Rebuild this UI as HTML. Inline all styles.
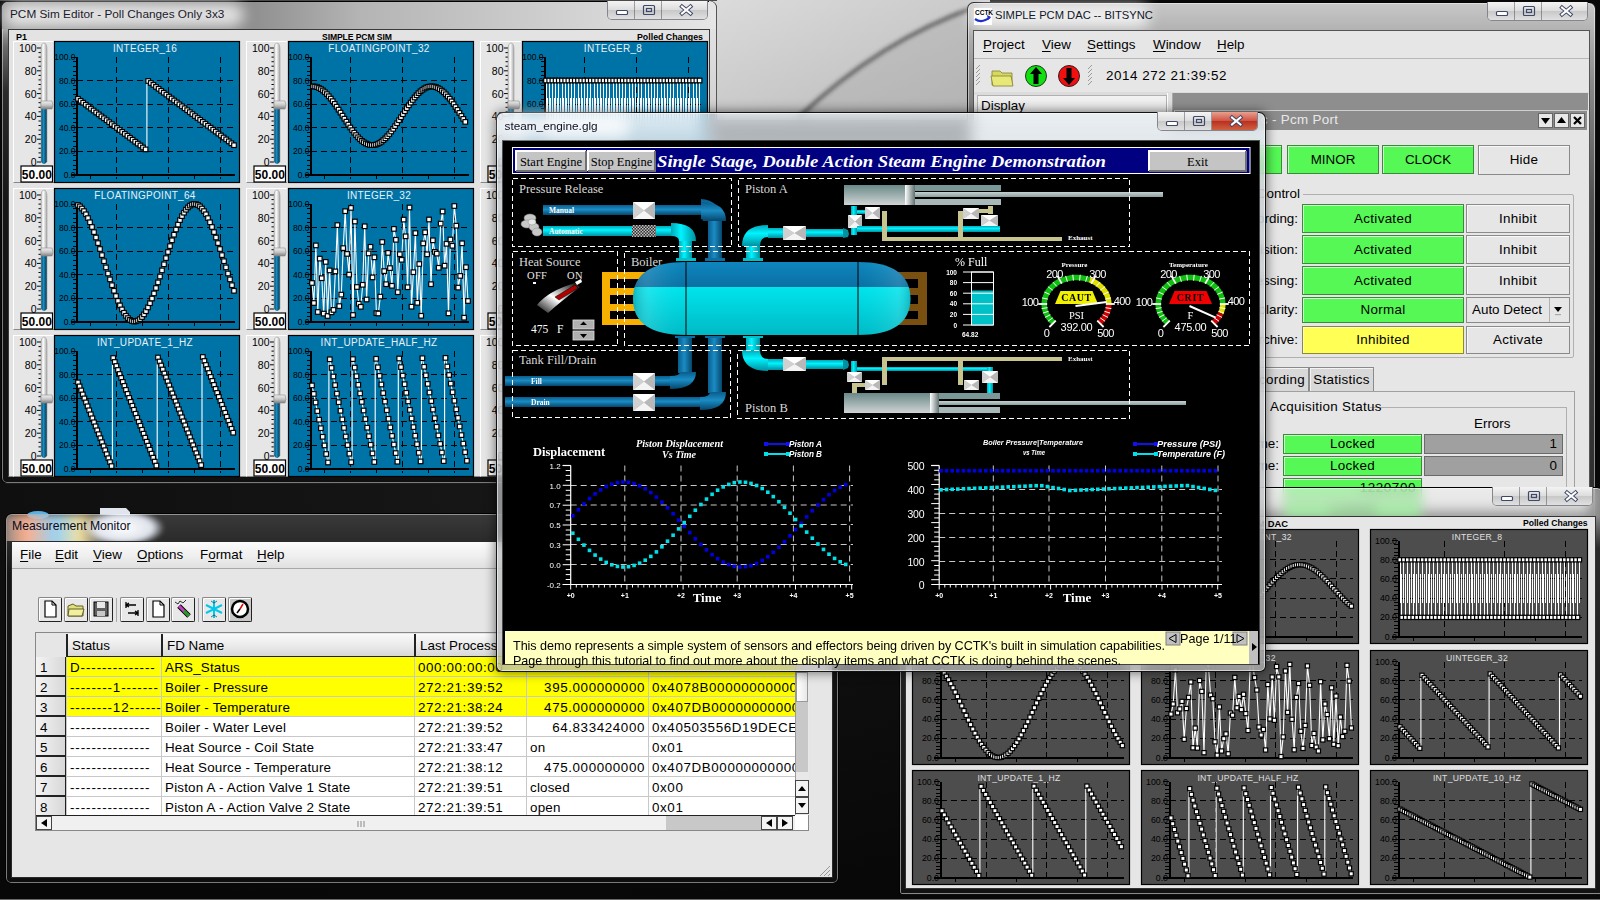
<!DOCTYPE html><html><head><meta charset="utf-8"><style>
*{margin:0;padding:0;box-sizing:border-box}
html,body{width:1600px;height:900px;overflow:hidden;background:#000;font-family:"Liberation Sans",sans-serif}
body>div,.a,div[style*="left:"]{position:absolute}
.t{position:absolute;white-space:nowrap;line-height:1}
svg{position:absolute;overflow:visible}
.serif{font-family:"Liberation Serif",serif}
.u{text-decoration:underline;text-underline-offset:2px}
</style></head><body>

<div style="left:0px;top:0px;width:1600px;height:900px;background:radial-gradient(ellipse at 30% 55%,#161616,#080808 60%)"></div>
<svg style="left:0;top:0" width="1600" height="900">
<defs><linearGradient id="dg" x1="0" y1="0" x2="1" y2="1">
<stop offset="0" stop-color="#dcdcdc"/><stop offset="1" stop-color="#b8b8b8"/></linearGradient>
<filter id="bl"><feGaussianBlur stdDeviation="2"/></filter></defs>
<rect x="700" y="0" width="290" height="120" fill="url(#dg)"/>
<path d="M978 6 Q 880 40 798 118 L990 118 Z" fill="#a8a8a8" opacity=".35" filter="url(#bl)"/><path d="M978 6 Q 880 40 798 118" stroke="#333" stroke-width="2.5" fill="none" filter="url(#bl)"/>
</svg>
<div style="left:1px;top:1px;width:716px;height:483px;background:linear-gradient(to bottom,#c4c4c4 0px,#b0b0b0 22px,#6a6a6a 45px,#2a2a2a 90px,#151515 200px,#101010 100%);border:1px solid rgba(0,0,0,.85);border-radius:7px 7px 6px 6px;box-shadow:inset 0 0 0 1px rgba(255,255,255,.45);"></div>
<div style="left:709px;top:1px;width:8px;height:112px;background:linear-gradient(to bottom,#e8e8e8,#d0d0d0);border-right:1px solid #555;border-top-right-radius:7px"></div>
<div style="left:2px;top:2px;width:714px;height:27px;background:linear-gradient(90deg,#9a9a9a 0%,#8a8a8a 33%,#b4b4b4 50%,#c8c8c8 70%,#e6e6e6 100%);border-radius:6px 6px 0 0"></div>
<div style="left:0px;top:0px;width:717px;height:1px;background:#4a4a4a"></div>
<div style="left:4px;top:3px;width:240px;height:24px;background:rgba(255,255,255,.75);border-radius:12px;filter:blur(7px)"></div>
<div class="t" style="left:10px;top:9px;font-size:11.8px;color:#1a1a2a">PCM Sim Editor - Poll Changes Only 3x3</div>
<div style="left:607px;top:1px;width:101px;height:19px;border:1px solid rgba(60,60,80,.55);border-top:none;border-radius:0 0 5px 5px;overflow:hidden;background:#ddd"><div style="left:0;top:0;width:27px;height:18px;background:linear-gradient(#f4f4f4,#dcdcdc 50%,#c8c8c8 51%,#e0e0e0);border-right:1px solid rgba(60,60,80,.45)"></div><div style="left:27px;top:0;width:27px;height:18px;background:linear-gradient(#f4f4f4,#dcdcdc 50%,#c8c8c8 51%,#e0e0e0);border-right:1px solid rgba(60,60,80,.45)"></div><div style="left:54px;top:0;width:46px;height:18px;background:linear-gradient(#f4f4f4,#dcdcdc 50%,#c8c8c8 51%,#e0e0e0)"></div><svg style="left:0;top:0" width="101" height="19"><rect x="8.5" y="9.5" width="11" height="4" fill="#fff" stroke="#404868" stroke-width="1.2" rx="1"/><rect x="35.5" y="4.5" width="11" height="9" fill="none" stroke="#404868" stroke-width="1.2" rx="1"/><rect x="38.5" y="7.5" width="5" height="3" fill="none" stroke="#404868" stroke-width="1.2"/><path d="M74 5.5 L82.5 12.5 M82.5 5.5 L74 12.5" stroke="#404868" stroke-width="4" stroke-linecap="square"/><path d="M74 5.5 L82.5 12.5 M82.5 5.5 L74 12.5" stroke="#fff" stroke-width="2" stroke-linecap="square"/></svg></div>
<div style="left:8px;top:29px;width:702px;height:448px;background:#e3e3e3;border:1px solid #3a3a3a;border-bottom-color:#888"></div>
<div class="t" style="left:16px;top:33px;font-size:9px;font-weight:bold;color:#000">P1</div>
<div class="t" style="left:322px;top:33px;font-size:8.6px;font-weight:bold;color:#000;letter-spacing:-.1px">SIMPLE PCM SIM</div>
<div class="t" style="left:637px;top:33px;font-size:8.8px;font-weight:bold;color:#000">Polled Changes</div>
<div style="left:12.5px;top:41px;width:41px;height:142px;background:#e6e6e6;border-left:1px solid #fff;border-top:1px solid #fff;border-bottom:1px solid #888"></div>
<svg style="left:12.5px;top:41px" width="41" height="142"><defs><linearGradient id="trk" x1="0" x2="1"><stop offset="0" stop-color="#bcbcbc"/><stop offset=".35" stop-color="#fff"/><stop offset="1" stop-color="#a8a8a8"/></linearGradient><linearGradient id="trkb" x1="0" x2="1"><stop offset="0" stop-color="#004d73"/><stop offset=".4" stop-color="#1a8cc0"/><stop offset="1" stop-color="#003a58"/></linearGradient><linearGradient id="thm" x1="0" y1="0" x2="0" y2="1"><stop offset="0" stop-color="#f0f0f0"/><stop offset=".5" stop-color="#c8c8c8"/><stop offset="1" stop-color="#808080"/></linearGradient></defs><text x="23.5" y="125.0" font-size="10.5" text-anchor="end" font-family="Liberation Sans" fill="#000">0</text><text x="23.5" y="102.2" font-size="10.5" text-anchor="end" font-family="Liberation Sans" fill="#000">20</text><text x="23.5" y="79.4" font-size="10.5" text-anchor="end" font-family="Liberation Sans" fill="#000">40</text><text x="23.5" y="56.6" font-size="10.5" text-anchor="end" font-family="Liberation Sans" fill="#000">60</text><text x="23.5" y="33.8" font-size="10.5" text-anchor="end" font-family="Liberation Sans" fill="#000">80</text><text x="23.5" y="11.0" font-size="10.5" text-anchor="end" font-family="Liberation Sans" fill="#000">100</text><line x1="24" y1="121.0" x2="28" y2="121.0" stroke="#000" stroke-width="1"/><line x1="25.5" y1="116.4" x2="28" y2="116.4" stroke="#000" stroke-width="1"/><line x1="25.5" y1="111.9" x2="28" y2="111.9" stroke="#000" stroke-width="1"/><line x1="25.5" y1="107.3" x2="28" y2="107.3" stroke="#000" stroke-width="1"/><line x1="25.5" y1="102.8" x2="28" y2="102.8" stroke="#000" stroke-width="1"/><line x1="24" y1="98.2" x2="28" y2="98.2" stroke="#000" stroke-width="1"/><line x1="25.5" y1="93.6" x2="28" y2="93.6" stroke="#000" stroke-width="1"/><line x1="25.5" y1="89.1" x2="28" y2="89.1" stroke="#000" stroke-width="1"/><line x1="25.5" y1="84.5" x2="28" y2="84.5" stroke="#000" stroke-width="1"/><line x1="25.5" y1="80.0" x2="28" y2="80.0" stroke="#000" stroke-width="1"/><line x1="24" y1="75.4" x2="28" y2="75.4" stroke="#000" stroke-width="1"/><line x1="25.5" y1="70.8" x2="28" y2="70.8" stroke="#000" stroke-width="1"/><line x1="25.5" y1="66.3" x2="28" y2="66.3" stroke="#000" stroke-width="1"/><line x1="25.5" y1="61.7" x2="28" y2="61.7" stroke="#000" stroke-width="1"/><line x1="25.5" y1="57.2" x2="28" y2="57.2" stroke="#000" stroke-width="1"/><line x1="24" y1="52.6" x2="28" y2="52.6" stroke="#000" stroke-width="1"/><line x1="25.5" y1="48.0" x2="28" y2="48.0" stroke="#000" stroke-width="1"/><line x1="25.5" y1="43.5" x2="28" y2="43.5" stroke="#000" stroke-width="1"/><line x1="25.5" y1="38.9" x2="28" y2="38.9" stroke="#000" stroke-width="1"/><line x1="25.5" y1="34.4" x2="28" y2="34.4" stroke="#000" stroke-width="1"/><line x1="24" y1="29.8" x2="28" y2="29.8" stroke="#000" stroke-width="1"/><line x1="25.5" y1="25.2" x2="28" y2="25.2" stroke="#000" stroke-width="1"/><line x1="25.5" y1="20.7" x2="28" y2="20.7" stroke="#000" stroke-width="1"/><line x1="25.5" y1="16.1" x2="28" y2="16.1" stroke="#000" stroke-width="1"/><line x1="25.5" y1="11.6" x2="28" y2="11.6" stroke="#000" stroke-width="1"/><line x1="24" y1="7.0" x2="28" y2="7.0" stroke="#000" stroke-width="1"/><path d="M28 9 Q28 2 31 2 Q34 2 34 9 L34 121 L28 121 Z" fill="url(#trk)" stroke="#9a9a9a" stroke-width=".6"/><path d="M28.3 64.0 L33.7 64.0 L33.7 121 Q31 125 28.3 121 Z" fill="url(#trkb)"/><path d="M28 60.0 L39 60.0 Q41 64.0 39 68.0 L28 68.0 Z" fill="url(#thm)" stroke="#8a8a8a" stroke-width=".6"/><rect x="8" y="125" width="31.5" height="16" fill="#fff" stroke="#000" stroke-width="1.2"/><text x="23.8" y="137.5" font-size="12" font-weight="bold" text-anchor="middle" font-family="Liberation Sans" fill="#000">50.00</text></svg>
<svg style="left:53.5px;top:41px" width="186" height="142"><rect x="0.5" y="0.5" width="185" height="141" fill="#0073a6" stroke="#000" stroke-width="1.2"/><text x="91.0" y="11" font-size="10" fill="#e8f0f8" text-anchor="middle" font-family="Liberation Sans" letter-spacing=".3">INTEGER_16</text><g shape-rendering="crispEdges" stroke="#000" stroke-width="1"><line x1="22.5" y1="110.5" x2="181" y2="110.5" stroke-dasharray="6 4"/><line x1="22.5" y1="86.5" x2="181" y2="86.5" stroke-dasharray="6 4"/><line x1="22.5" y1="63.5" x2="181" y2="63.5" stroke-dasharray="6 4"/><line x1="22.5" y1="39.5" x2="181" y2="39.5" stroke-dasharray="6 4"/><line x1="62.5" y1="16" x2="62.5" y2="137.5" stroke-dasharray="6 4"/><line x1="114.5" y1="16" x2="114.5" y2="137.5" stroke-dasharray="6 4"/><line x1="166.5" y1="16" x2="166.5" y2="137.5" stroke-dasharray="6 4"/><line x1="22.5" y1="16" x2="22.5" y2="133.5" stroke-width="2"/><line x1="16.5" y1="133.5" x2="181" y2="133.5" stroke-width="2"/><line x1="16.5" y1="133.5" x2="22.5" y2="133.5"/><line x1="18.5" y1="128.5" x2="22.5" y2="128.5"/><line x1="18.5" y1="124.5" x2="22.5" y2="124.5"/><line x1="18.5" y1="119.5" x2="22.5" y2="119.5"/><line x1="18.5" y1="114.5" x2="22.5" y2="114.5"/><line x1="16.5" y1="110.5" x2="22.5" y2="110.5"/><line x1="18.5" y1="105.5" x2="22.5" y2="105.5"/><line x1="18.5" y1="100.5" x2="22.5" y2="100.5"/><line x1="18.5" y1="95.5" x2="22.5" y2="95.5"/><line x1="18.5" y1="91.5" x2="22.5" y2="91.5"/><line x1="16.5" y1="86.5" x2="22.5" y2="86.5"/><line x1="18.5" y1="81.5" x2="22.5" y2="81.5"/><line x1="18.5" y1="77.5" x2="22.5" y2="77.5"/><line x1="18.5" y1="72.5" x2="22.5" y2="72.5"/><line x1="18.5" y1="67.5" x2="22.5" y2="67.5"/><line x1="16.5" y1="63.5" x2="22.5" y2="63.5"/><line x1="18.5" y1="58.5" x2="22.5" y2="58.5"/><line x1="18.5" y1="53.5" x2="22.5" y2="53.5"/><line x1="18.5" y1="48.5" x2="22.5" y2="48.5"/><line x1="18.5" y1="44.5" x2="22.5" y2="44.5"/><line x1="16.5" y1="39.5" x2="22.5" y2="39.5"/><line x1="18.5" y1="34.5" x2="22.5" y2="34.5"/><line x1="18.5" y1="30.5" x2="22.5" y2="30.5"/><line x1="18.5" y1="25.5" x2="22.5" y2="25.5"/><line x1="18.5" y1="20.5" x2="22.5" y2="20.5"/><line x1="16.5" y1="16.5" x2="22.5" y2="16.5"/><line x1="36.5" y1="133.5" x2="36.5" y2="137.5"/><line x1="88.5" y1="133.5" x2="88.5" y2="137.5"/><line x1="140.5" y1="133.5" x2="140.5" y2="137.5"/></g><text x="21.5" y="136.5" font-size="8.5" fill="#000" text-anchor="end" font-family="Liberation Sans">0.0</text><text x="21.5" y="113.0" font-size="8.5" fill="#000" text-anchor="end" font-family="Liberation Sans">20.0</text><text x="21.5" y="89.5" font-size="8.5" fill="#000" text-anchor="end" font-family="Liberation Sans">40.0</text><text x="21.5" y="66.0" font-size="8.5" fill="#000" text-anchor="end" font-family="Liberation Sans">60.0</text><text x="21.5" y="42.5" font-size="8.5" fill="#000" text-anchor="end" font-family="Liberation Sans">80.0</text><text x="21.5" y="19.0" font-size="8.5" fill="#000" text-anchor="end" font-family="Liberation Sans">100.0</text><polyline points="24.0,57.8 26.6,59.8 29.2,61.7 31.8,63.7 34.4,65.6 37.0,67.6 39.6,69.5 42.2,71.5 44.8,73.4 47.4,75.4 50.0,77.3 52.6,79.2 55.2,81.2 57.8,83.1 60.4,85.1 63.0,87.0 65.6,89.0 68.2,90.9 70.8,92.9 73.4,94.8 76.0,96.8 78.6,98.7 81.2,100.7 83.8,102.6 86.4,104.5 89.0,106.5 91.6,108.4 92.9,108.4 92.9,40.0 94.2,40.0 96.8,42.0 99.4,43.9 102.0,45.9 104.6,47.8 107.2,49.8 109.8,51.7 112.4,53.6 115.0,55.6 117.6,57.5 120.2,59.5 122.8,61.4 125.4,63.4 128.0,65.3 130.6,67.3 133.2,69.2 135.8,71.2 138.4,73.1 141.0,75.1 143.6,77.0 146.2,78.9 148.8,80.9 151.4,82.8 154.0,84.8 156.6,86.7 159.2,88.7 161.8,90.6 164.4,92.6 167.0,94.5 169.6,96.5 172.2,98.4 174.8,100.4 177.4,102.3 180.0,104.2" fill="none" stroke="#fff" stroke-width="1.1"/><rect x="21.7" y="55.5" width="4.6" height="4.6" fill="#fff" stroke="#000" stroke-width="1.2"/><rect x="24.3" y="57.5" width="4.6" height="4.6" fill="#fff" stroke="#000" stroke-width="1.2"/><rect x="26.9" y="59.4" width="4.6" height="4.6" fill="#fff" stroke="#000" stroke-width="1.2"/><rect x="29.5" y="61.4" width="4.6" height="4.6" fill="#fff" stroke="#000" stroke-width="1.2"/><rect x="32.1" y="63.3" width="4.6" height="4.6" fill="#fff" stroke="#000" stroke-width="1.2"/><rect x="34.7" y="65.3" width="4.6" height="4.6" fill="#fff" stroke="#000" stroke-width="1.2"/><rect x="37.3" y="67.2" width="4.6" height="4.6" fill="#fff" stroke="#000" stroke-width="1.2"/><rect x="39.9" y="69.2" width="4.6" height="4.6" fill="#fff" stroke="#000" stroke-width="1.2"/><rect x="42.5" y="71.1" width="4.6" height="4.6" fill="#fff" stroke="#000" stroke-width="1.2"/><rect x="45.1" y="73.1" width="4.6" height="4.6" fill="#fff" stroke="#000" stroke-width="1.2"/><rect x="47.7" y="75.0" width="4.6" height="4.6" fill="#fff" stroke="#000" stroke-width="1.2"/><rect x="50.3" y="76.9" width="4.6" height="4.6" fill="#fff" stroke="#000" stroke-width="1.2"/><rect x="52.9" y="78.9" width="4.6" height="4.6" fill="#fff" stroke="#000" stroke-width="1.2"/><rect x="55.5" y="80.8" width="4.6" height="4.6" fill="#fff" stroke="#000" stroke-width="1.2"/><rect x="58.1" y="82.8" width="4.6" height="4.6" fill="#fff" stroke="#000" stroke-width="1.2"/><rect x="60.7" y="84.7" width="4.6" height="4.6" fill="#fff" stroke="#000" stroke-width="1.2"/><rect x="63.3" y="86.7" width="4.6" height="4.6" fill="#fff" stroke="#000" stroke-width="1.2"/><rect x="65.9" y="88.6" width="4.6" height="4.6" fill="#fff" stroke="#000" stroke-width="1.2"/><rect x="68.5" y="90.6" width="4.6" height="4.6" fill="#fff" stroke="#000" stroke-width="1.2"/><rect x="71.1" y="92.5" width="4.6" height="4.6" fill="#fff" stroke="#000" stroke-width="1.2"/><rect x="73.7" y="94.5" width="4.6" height="4.6" fill="#fff" stroke="#000" stroke-width="1.2"/><rect x="76.3" y="96.4" width="4.6" height="4.6" fill="#fff" stroke="#000" stroke-width="1.2"/><rect x="78.9" y="98.4" width="4.6" height="4.6" fill="#fff" stroke="#000" stroke-width="1.2"/><rect x="81.5" y="100.3" width="4.6" height="4.6" fill="#fff" stroke="#000" stroke-width="1.2"/><rect x="84.1" y="102.2" width="4.6" height="4.6" fill="#fff" stroke="#000" stroke-width="1.2"/><rect x="86.7" y="104.2" width="4.6" height="4.6" fill="#fff" stroke="#000" stroke-width="1.2"/><rect x="89.3" y="106.1" width="4.6" height="4.6" fill="#fff" stroke="#000" stroke-width="1.2"/><rect x="91.9" y="37.7" width="4.6" height="4.6" fill="#fff" stroke="#000" stroke-width="1.2"/><rect x="94.5" y="39.7" width="4.6" height="4.6" fill="#fff" stroke="#000" stroke-width="1.2"/><rect x="97.1" y="41.6" width="4.6" height="4.6" fill="#fff" stroke="#000" stroke-width="1.2"/><rect x="99.7" y="43.6" width="4.6" height="4.6" fill="#fff" stroke="#000" stroke-width="1.2"/><rect x="102.3" y="45.5" width="4.6" height="4.6" fill="#fff" stroke="#000" stroke-width="1.2"/><rect x="104.9" y="47.5" width="4.6" height="4.6" fill="#fff" stroke="#000" stroke-width="1.2"/><rect x="107.5" y="49.4" width="4.6" height="4.6" fill="#fff" stroke="#000" stroke-width="1.2"/><rect x="110.1" y="51.3" width="4.6" height="4.6" fill="#fff" stroke="#000" stroke-width="1.2"/><rect x="112.7" y="53.3" width="4.6" height="4.6" fill="#fff" stroke="#000" stroke-width="1.2"/><rect x="115.3" y="55.2" width="4.6" height="4.6" fill="#fff" stroke="#000" stroke-width="1.2"/><rect x="117.9" y="57.2" width="4.6" height="4.6" fill="#fff" stroke="#000" stroke-width="1.2"/><rect x="120.5" y="59.1" width="4.6" height="4.6" fill="#fff" stroke="#000" stroke-width="1.2"/><rect x="123.1" y="61.1" width="4.6" height="4.6" fill="#fff" stroke="#000" stroke-width="1.2"/><rect x="125.7" y="63.0" width="4.6" height="4.6" fill="#fff" stroke="#000" stroke-width="1.2"/><rect x="128.3" y="65.0" width="4.6" height="4.6" fill="#fff" stroke="#000" stroke-width="1.2"/><rect x="130.9" y="66.9" width="4.6" height="4.6" fill="#fff" stroke="#000" stroke-width="1.2"/><rect x="133.5" y="68.9" width="4.6" height="4.6" fill="#fff" stroke="#000" stroke-width="1.2"/><rect x="136.1" y="70.8" width="4.6" height="4.6" fill="#fff" stroke="#000" stroke-width="1.2"/><rect x="138.7" y="72.8" width="4.6" height="4.6" fill="#fff" stroke="#000" stroke-width="1.2"/><rect x="141.3" y="74.7" width="4.6" height="4.6" fill="#fff" stroke="#000" stroke-width="1.2"/><rect x="143.9" y="76.6" width="4.6" height="4.6" fill="#fff" stroke="#000" stroke-width="1.2"/><rect x="146.5" y="78.6" width="4.6" height="4.6" fill="#fff" stroke="#000" stroke-width="1.2"/><rect x="149.1" y="80.5" width="4.6" height="4.6" fill="#fff" stroke="#000" stroke-width="1.2"/><rect x="151.7" y="82.5" width="4.6" height="4.6" fill="#fff" stroke="#000" stroke-width="1.2"/><rect x="154.3" y="84.4" width="4.6" height="4.6" fill="#fff" stroke="#000" stroke-width="1.2"/><rect x="156.9" y="86.4" width="4.6" height="4.6" fill="#fff" stroke="#000" stroke-width="1.2"/><rect x="159.5" y="88.3" width="4.6" height="4.6" fill="#fff" stroke="#000" stroke-width="1.2"/><rect x="162.1" y="90.3" width="4.6" height="4.6" fill="#fff" stroke="#000" stroke-width="1.2"/><rect x="164.7" y="92.2" width="4.6" height="4.6" fill="#fff" stroke="#000" stroke-width="1.2"/><rect x="167.3" y="94.2" width="4.6" height="4.6" fill="#fff" stroke="#000" stroke-width="1.2"/><rect x="169.9" y="96.1" width="4.6" height="4.6" fill="#fff" stroke="#000" stroke-width="1.2"/><rect x="172.5" y="98.1" width="4.6" height="4.6" fill="#fff" stroke="#000" stroke-width="1.2"/><rect x="175.1" y="100.0" width="4.6" height="4.6" fill="#fff" stroke="#000" stroke-width="1.2"/><rect x="177.7" y="101.9" width="4.6" height="4.6" fill="#fff" stroke="#000" stroke-width="1.2"/></svg>
<div style="left:246px;top:41px;width:41px;height:142px;background:#e6e6e6;border-left:1px solid #fff;border-top:1px solid #fff;border-bottom:1px solid #888"></div>
<svg style="left:246px;top:41px" width="41" height="142"><defs><linearGradient id="trk" x1="0" x2="1"><stop offset="0" stop-color="#bcbcbc"/><stop offset=".35" stop-color="#fff"/><stop offset="1" stop-color="#a8a8a8"/></linearGradient><linearGradient id="trkb" x1="0" x2="1"><stop offset="0" stop-color="#004d73"/><stop offset=".4" stop-color="#1a8cc0"/><stop offset="1" stop-color="#003a58"/></linearGradient><linearGradient id="thm" x1="0" y1="0" x2="0" y2="1"><stop offset="0" stop-color="#f0f0f0"/><stop offset=".5" stop-color="#c8c8c8"/><stop offset="1" stop-color="#808080"/></linearGradient></defs><text x="23.5" y="125.0" font-size="10.5" text-anchor="end" font-family="Liberation Sans" fill="#000">0</text><text x="23.5" y="102.2" font-size="10.5" text-anchor="end" font-family="Liberation Sans" fill="#000">20</text><text x="23.5" y="79.4" font-size="10.5" text-anchor="end" font-family="Liberation Sans" fill="#000">40</text><text x="23.5" y="56.6" font-size="10.5" text-anchor="end" font-family="Liberation Sans" fill="#000">60</text><text x="23.5" y="33.8" font-size="10.5" text-anchor="end" font-family="Liberation Sans" fill="#000">80</text><text x="23.5" y="11.0" font-size="10.5" text-anchor="end" font-family="Liberation Sans" fill="#000">100</text><line x1="24" y1="121.0" x2="28" y2="121.0" stroke="#000" stroke-width="1"/><line x1="25.5" y1="116.4" x2="28" y2="116.4" stroke="#000" stroke-width="1"/><line x1="25.5" y1="111.9" x2="28" y2="111.9" stroke="#000" stroke-width="1"/><line x1="25.5" y1="107.3" x2="28" y2="107.3" stroke="#000" stroke-width="1"/><line x1="25.5" y1="102.8" x2="28" y2="102.8" stroke="#000" stroke-width="1"/><line x1="24" y1="98.2" x2="28" y2="98.2" stroke="#000" stroke-width="1"/><line x1="25.5" y1="93.6" x2="28" y2="93.6" stroke="#000" stroke-width="1"/><line x1="25.5" y1="89.1" x2="28" y2="89.1" stroke="#000" stroke-width="1"/><line x1="25.5" y1="84.5" x2="28" y2="84.5" stroke="#000" stroke-width="1"/><line x1="25.5" y1="80.0" x2="28" y2="80.0" stroke="#000" stroke-width="1"/><line x1="24" y1="75.4" x2="28" y2="75.4" stroke="#000" stroke-width="1"/><line x1="25.5" y1="70.8" x2="28" y2="70.8" stroke="#000" stroke-width="1"/><line x1="25.5" y1="66.3" x2="28" y2="66.3" stroke="#000" stroke-width="1"/><line x1="25.5" y1="61.7" x2="28" y2="61.7" stroke="#000" stroke-width="1"/><line x1="25.5" y1="57.2" x2="28" y2="57.2" stroke="#000" stroke-width="1"/><line x1="24" y1="52.6" x2="28" y2="52.6" stroke="#000" stroke-width="1"/><line x1="25.5" y1="48.0" x2="28" y2="48.0" stroke="#000" stroke-width="1"/><line x1="25.5" y1="43.5" x2="28" y2="43.5" stroke="#000" stroke-width="1"/><line x1="25.5" y1="38.9" x2="28" y2="38.9" stroke="#000" stroke-width="1"/><line x1="25.5" y1="34.4" x2="28" y2="34.4" stroke="#000" stroke-width="1"/><line x1="24" y1="29.8" x2="28" y2="29.8" stroke="#000" stroke-width="1"/><line x1="25.5" y1="25.2" x2="28" y2="25.2" stroke="#000" stroke-width="1"/><line x1="25.5" y1="20.7" x2="28" y2="20.7" stroke="#000" stroke-width="1"/><line x1="25.5" y1="16.1" x2="28" y2="16.1" stroke="#000" stroke-width="1"/><line x1="25.5" y1="11.6" x2="28" y2="11.6" stroke="#000" stroke-width="1"/><line x1="24" y1="7.0" x2="28" y2="7.0" stroke="#000" stroke-width="1"/><path d="M28 9 Q28 2 31 2 Q34 2 34 9 L34 121 L28 121 Z" fill="url(#trk)" stroke="#9a9a9a" stroke-width=".6"/><path d="M28.3 64.0 L33.7 64.0 L33.7 121 Q31 125 28.3 121 Z" fill="url(#trkb)"/><path d="M28 60.0 L39 60.0 Q41 64.0 39 68.0 L28 68.0 Z" fill="url(#thm)" stroke="#8a8a8a" stroke-width=".6"/><rect x="8" y="125" width="31.5" height="16" fill="#fff" stroke="#000" stroke-width="1.2"/><text x="23.8" y="137.5" font-size="12" font-weight="bold" text-anchor="middle" font-family="Liberation Sans" fill="#000">50.00</text></svg>
<svg style="left:287.7px;top:41px" width="186" height="142"><rect x="0.5" y="0.5" width="185" height="141" fill="#0073a6" stroke="#000" stroke-width="1.2"/><text x="91.0" y="11" font-size="10" fill="#e8f0f8" text-anchor="middle" font-family="Liberation Sans" letter-spacing=".3">FLOATINGPOINT_32</text><g shape-rendering="crispEdges" stroke="#000" stroke-width="1"><line x1="22.5" y1="110.5" x2="181" y2="110.5" stroke-dasharray="6 4"/><line x1="22.5" y1="86.5" x2="181" y2="86.5" stroke-dasharray="6 4"/><line x1="22.5" y1="63.5" x2="181" y2="63.5" stroke-dasharray="6 4"/><line x1="22.5" y1="39.5" x2="181" y2="39.5" stroke-dasharray="6 4"/><line x1="62.5" y1="16" x2="62.5" y2="137.5" stroke-dasharray="6 4"/><line x1="114.5" y1="16" x2="114.5" y2="137.5" stroke-dasharray="6 4"/><line x1="166.5" y1="16" x2="166.5" y2="137.5" stroke-dasharray="6 4"/><line x1="22.5" y1="16" x2="22.5" y2="133.5" stroke-width="2"/><line x1="16.5" y1="133.5" x2="181" y2="133.5" stroke-width="2"/><line x1="16.5" y1="133.5" x2="22.5" y2="133.5"/><line x1="18.5" y1="128.5" x2="22.5" y2="128.5"/><line x1="18.5" y1="124.5" x2="22.5" y2="124.5"/><line x1="18.5" y1="119.5" x2="22.5" y2="119.5"/><line x1="18.5" y1="114.5" x2="22.5" y2="114.5"/><line x1="16.5" y1="110.5" x2="22.5" y2="110.5"/><line x1="18.5" y1="105.5" x2="22.5" y2="105.5"/><line x1="18.5" y1="100.5" x2="22.5" y2="100.5"/><line x1="18.5" y1="95.5" x2="22.5" y2="95.5"/><line x1="18.5" y1="91.5" x2="22.5" y2="91.5"/><line x1="16.5" y1="86.5" x2="22.5" y2="86.5"/><line x1="18.5" y1="81.5" x2="22.5" y2="81.5"/><line x1="18.5" y1="77.5" x2="22.5" y2="77.5"/><line x1="18.5" y1="72.5" x2="22.5" y2="72.5"/><line x1="18.5" y1="67.5" x2="22.5" y2="67.5"/><line x1="16.5" y1="63.5" x2="22.5" y2="63.5"/><line x1="18.5" y1="58.5" x2="22.5" y2="58.5"/><line x1="18.5" y1="53.5" x2="22.5" y2="53.5"/><line x1="18.5" y1="48.5" x2="22.5" y2="48.5"/><line x1="18.5" y1="44.5" x2="22.5" y2="44.5"/><line x1="16.5" y1="39.5" x2="22.5" y2="39.5"/><line x1="18.5" y1="34.5" x2="22.5" y2="34.5"/><line x1="18.5" y1="30.5" x2="22.5" y2="30.5"/><line x1="18.5" y1="25.5" x2="22.5" y2="25.5"/><line x1="18.5" y1="20.5" x2="22.5" y2="20.5"/><line x1="16.5" y1="16.5" x2="22.5" y2="16.5"/><line x1="36.5" y1="133.5" x2="36.5" y2="137.5"/><line x1="88.5" y1="133.5" x2="88.5" y2="137.5"/><line x1="140.5" y1="133.5" x2="140.5" y2="137.5"/></g><text x="21.5" y="136.5" font-size="8.5" fill="#000" text-anchor="end" font-family="Liberation Sans">0.0</text><text x="21.5" y="113.0" font-size="8.5" fill="#000" text-anchor="end" font-family="Liberation Sans">20.0</text><text x="21.5" y="89.5" font-size="8.5" fill="#000" text-anchor="end" font-family="Liberation Sans">40.0</text><text x="21.5" y="66.0" font-size="8.5" fill="#000" text-anchor="end" font-family="Liberation Sans">60.0</text><text x="21.5" y="42.5" font-size="8.5" fill="#000" text-anchor="end" font-family="Liberation Sans">80.0</text><text x="21.5" y="19.0" font-size="8.5" fill="#000" text-anchor="end" font-family="Liberation Sans">100.0</text><polyline points="25.2,45.4 27.1,45.6 29.1,46.1 31.0,47.0 33.0,48.1 35.0,49.5 36.9,51.2 38.9,53.1 40.8,55.3 42.8,57.6 44.7,60.2 46.7,62.9 48.6,65.7 50.6,68.7 52.5,71.6 54.5,74.7 56.4,77.7 58.4,80.7 60.3,83.6 62.3,86.5 64.2,89.2 66.2,91.7 68.1,94.1 70.1,96.3 72.0,98.2 74.0,99.9 75.9,101.3 77.9,102.5 79.8,103.3 81.8,103.9 83.7,104.1 85.7,104.0 87.6,103.7 89.6,103.0 91.5,102.0 93.5,100.7 95.4,99.1 97.4,97.3 99.3,95.2 101.3,93.0 103.2,90.5 105.2,87.9 107.1,85.1 109.1,82.2 111.0,79.2 113.0,76.2 114.9,73.2 116.9,70.2 118.8,67.2 120.8,64.3 122.7,61.6 124.7,58.9 126.6,56.5 128.6,54.2 130.5,52.1 132.5,50.3 134.4,48.8 136.4,47.5 138.3,46.5 140.3,45.8 142.2,45.5 144.2,45.4 146.1,45.6 148.1,46.2 150.0,47.0 151.9,48.2 153.9,49.6 155.8,51.3 157.8,53.3 159.7,55.5 161.7,57.8 163.6,60.4 165.6,63.1 167.5,66.0 169.5,68.9 171.4,71.9 173.4,74.9 175.3,77.9 177.3,80.9" fill="none" stroke="#fff" stroke-width="1.1"/><rect x="22.9" y="43.1" width="4.6" height="4.6" fill="#fff" stroke="#000" stroke-width="1.2"/><rect x="24.8" y="43.3" width="4.6" height="4.6" fill="#fff" stroke="#000" stroke-width="1.2"/><rect x="26.8" y="43.8" width="4.6" height="4.6" fill="#fff" stroke="#000" stroke-width="1.2"/><rect x="28.7" y="44.7" width="4.6" height="4.6" fill="#fff" stroke="#000" stroke-width="1.2"/><rect x="30.7" y="45.8" width="4.6" height="4.6" fill="#fff" stroke="#000" stroke-width="1.2"/><rect x="32.7" y="47.2" width="4.6" height="4.6" fill="#fff" stroke="#000" stroke-width="1.2"/><rect x="34.6" y="48.9" width="4.6" height="4.6" fill="#fff" stroke="#000" stroke-width="1.2"/><rect x="36.6" y="50.8" width="4.6" height="4.6" fill="#fff" stroke="#000" stroke-width="1.2"/><rect x="38.5" y="53.0" width="4.6" height="4.6" fill="#fff" stroke="#000" stroke-width="1.2"/><rect x="40.5" y="55.3" width="4.6" height="4.6" fill="#fff" stroke="#000" stroke-width="1.2"/><rect x="42.4" y="57.9" width="4.6" height="4.6" fill="#fff" stroke="#000" stroke-width="1.2"/><rect x="44.4" y="60.6" width="4.6" height="4.6" fill="#fff" stroke="#000" stroke-width="1.2"/><rect x="46.3" y="63.4" width="4.6" height="4.6" fill="#fff" stroke="#000" stroke-width="1.2"/><rect x="48.3" y="66.4" width="4.6" height="4.6" fill="#fff" stroke="#000" stroke-width="1.2"/><rect x="50.2" y="69.3" width="4.6" height="4.6" fill="#fff" stroke="#000" stroke-width="1.2"/><rect x="52.2" y="72.4" width="4.6" height="4.6" fill="#fff" stroke="#000" stroke-width="1.2"/><rect x="54.1" y="75.4" width="4.6" height="4.6" fill="#fff" stroke="#000" stroke-width="1.2"/><rect x="56.1" y="78.4" width="4.6" height="4.6" fill="#fff" stroke="#000" stroke-width="1.2"/><rect x="58.0" y="81.3" width="4.6" height="4.6" fill="#fff" stroke="#000" stroke-width="1.2"/><rect x="60.0" y="84.2" width="4.6" height="4.6" fill="#fff" stroke="#000" stroke-width="1.2"/><rect x="61.9" y="86.9" width="4.6" height="4.6" fill="#fff" stroke="#000" stroke-width="1.2"/><rect x="63.9" y="89.4" width="4.6" height="4.6" fill="#fff" stroke="#000" stroke-width="1.2"/><rect x="65.8" y="91.8" width="4.6" height="4.6" fill="#fff" stroke="#000" stroke-width="1.2"/><rect x="67.8" y="94.0" width="4.6" height="4.6" fill="#fff" stroke="#000" stroke-width="1.2"/><rect x="69.7" y="95.9" width="4.6" height="4.6" fill="#fff" stroke="#000" stroke-width="1.2"/><rect x="71.7" y="97.6" width="4.6" height="4.6" fill="#fff" stroke="#000" stroke-width="1.2"/><rect x="73.6" y="99.0" width="4.6" height="4.6" fill="#fff" stroke="#000" stroke-width="1.2"/><rect x="75.6" y="100.2" width="4.6" height="4.6" fill="#fff" stroke="#000" stroke-width="1.2"/><rect x="77.5" y="101.0" width="4.6" height="4.6" fill="#fff" stroke="#000" stroke-width="1.2"/><rect x="79.5" y="101.6" width="4.6" height="4.6" fill="#fff" stroke="#000" stroke-width="1.2"/><rect x="81.4" y="101.8" width="4.6" height="4.6" fill="#fff" stroke="#000" stroke-width="1.2"/><rect x="83.4" y="101.7" width="4.6" height="4.6" fill="#fff" stroke="#000" stroke-width="1.2"/><rect x="85.3" y="101.4" width="4.6" height="4.6" fill="#fff" stroke="#000" stroke-width="1.2"/><rect x="87.3" y="100.7" width="4.6" height="4.6" fill="#fff" stroke="#000" stroke-width="1.2"/><rect x="89.2" y="99.7" width="4.6" height="4.6" fill="#fff" stroke="#000" stroke-width="1.2"/><rect x="91.2" y="98.4" width="4.6" height="4.6" fill="#fff" stroke="#000" stroke-width="1.2"/><rect x="93.1" y="96.8" width="4.6" height="4.6" fill="#fff" stroke="#000" stroke-width="1.2"/><rect x="95.1" y="95.0" width="4.6" height="4.6" fill="#fff" stroke="#000" stroke-width="1.2"/><rect x="97.0" y="92.9" width="4.6" height="4.6" fill="#fff" stroke="#000" stroke-width="1.2"/><rect x="99.0" y="90.7" width="4.6" height="4.6" fill="#fff" stroke="#000" stroke-width="1.2"/><rect x="100.9" y="88.2" width="4.6" height="4.6" fill="#fff" stroke="#000" stroke-width="1.2"/><rect x="102.9" y="85.6" width="4.6" height="4.6" fill="#fff" stroke="#000" stroke-width="1.2"/><rect x="104.8" y="82.8" width="4.6" height="4.6" fill="#fff" stroke="#000" stroke-width="1.2"/><rect x="106.8" y="79.9" width="4.6" height="4.6" fill="#fff" stroke="#000" stroke-width="1.2"/><rect x="108.7" y="76.9" width="4.6" height="4.6" fill="#fff" stroke="#000" stroke-width="1.2"/><rect x="110.7" y="73.9" width="4.6" height="4.6" fill="#fff" stroke="#000" stroke-width="1.2"/><rect x="112.6" y="70.9" width="4.6" height="4.6" fill="#fff" stroke="#000" stroke-width="1.2"/><rect x="114.6" y="67.9" width="4.6" height="4.6" fill="#fff" stroke="#000" stroke-width="1.2"/><rect x="116.5" y="64.9" width="4.6" height="4.6" fill="#fff" stroke="#000" stroke-width="1.2"/><rect x="118.5" y="62.0" width="4.6" height="4.6" fill="#fff" stroke="#000" stroke-width="1.2"/><rect x="120.4" y="59.3" width="4.6" height="4.6" fill="#fff" stroke="#000" stroke-width="1.2"/><rect x="122.4" y="56.6" width="4.6" height="4.6" fill="#fff" stroke="#000" stroke-width="1.2"/><rect x="124.3" y="54.2" width="4.6" height="4.6" fill="#fff" stroke="#000" stroke-width="1.2"/><rect x="126.3" y="51.9" width="4.6" height="4.6" fill="#fff" stroke="#000" stroke-width="1.2"/><rect x="128.2" y="49.8" width="4.6" height="4.6" fill="#fff" stroke="#000" stroke-width="1.2"/><rect x="130.2" y="48.0" width="4.6" height="4.6" fill="#fff" stroke="#000" stroke-width="1.2"/><rect x="132.1" y="46.5" width="4.6" height="4.6" fill="#fff" stroke="#000" stroke-width="1.2"/><rect x="134.1" y="45.2" width="4.6" height="4.6" fill="#fff" stroke="#000" stroke-width="1.2"/><rect x="136.0" y="44.2" width="4.6" height="4.6" fill="#fff" stroke="#000" stroke-width="1.2"/><rect x="138.0" y="43.5" width="4.6" height="4.6" fill="#fff" stroke="#000" stroke-width="1.2"/><rect x="139.9" y="43.2" width="4.6" height="4.6" fill="#fff" stroke="#000" stroke-width="1.2"/><rect x="141.9" y="43.1" width="4.6" height="4.6" fill="#fff" stroke="#000" stroke-width="1.2"/><rect x="143.8" y="43.3" width="4.6" height="4.6" fill="#fff" stroke="#000" stroke-width="1.2"/><rect x="145.8" y="43.9" width="4.6" height="4.6" fill="#fff" stroke="#000" stroke-width="1.2"/><rect x="147.7" y="44.7" width="4.6" height="4.6" fill="#fff" stroke="#000" stroke-width="1.2"/><rect x="149.6" y="45.9" width="4.6" height="4.6" fill="#fff" stroke="#000" stroke-width="1.2"/><rect x="151.6" y="47.3" width="4.6" height="4.6" fill="#fff" stroke="#000" stroke-width="1.2"/><rect x="153.5" y="49.0" width="4.6" height="4.6" fill="#fff" stroke="#000" stroke-width="1.2"/><rect x="155.5" y="51.0" width="4.6" height="4.6" fill="#fff" stroke="#000" stroke-width="1.2"/><rect x="157.4" y="53.2" width="4.6" height="4.6" fill="#fff" stroke="#000" stroke-width="1.2"/><rect x="159.4" y="55.5" width="4.6" height="4.6" fill="#fff" stroke="#000" stroke-width="1.2"/><rect x="161.3" y="58.1" width="4.6" height="4.6" fill="#fff" stroke="#000" stroke-width="1.2"/><rect x="163.3" y="60.8" width="4.6" height="4.6" fill="#fff" stroke="#000" stroke-width="1.2"/><rect x="165.2" y="63.7" width="4.6" height="4.6" fill="#fff" stroke="#000" stroke-width="1.2"/><rect x="167.2" y="66.6" width="4.6" height="4.6" fill="#fff" stroke="#000" stroke-width="1.2"/><rect x="169.1" y="69.6" width="4.6" height="4.6" fill="#fff" stroke="#000" stroke-width="1.2"/><rect x="171.1" y="72.6" width="4.6" height="4.6" fill="#fff" stroke="#000" stroke-width="1.2"/><rect x="173.0" y="75.6" width="4.6" height="4.6" fill="#fff" stroke="#000" stroke-width="1.2"/><rect x="175.0" y="78.6" width="4.6" height="4.6" fill="#fff" stroke="#000" stroke-width="1.2"/></svg>
<div style="left:480px;top:41px;width:41px;height:142px;background:#e6e6e6;border-left:1px solid #fff;border-top:1px solid #fff;border-bottom:1px solid #888"></div>
<svg style="left:480px;top:41px" width="41" height="142"><defs><linearGradient id="trk" x1="0" x2="1"><stop offset="0" stop-color="#bcbcbc"/><stop offset=".35" stop-color="#fff"/><stop offset="1" stop-color="#a8a8a8"/></linearGradient><linearGradient id="trkb" x1="0" x2="1"><stop offset="0" stop-color="#004d73"/><stop offset=".4" stop-color="#1a8cc0"/><stop offset="1" stop-color="#003a58"/></linearGradient><linearGradient id="thm" x1="0" y1="0" x2="0" y2="1"><stop offset="0" stop-color="#f0f0f0"/><stop offset=".5" stop-color="#c8c8c8"/><stop offset="1" stop-color="#808080"/></linearGradient></defs><text x="23.5" y="125.0" font-size="10.5" text-anchor="end" font-family="Liberation Sans" fill="#000">0</text><text x="23.5" y="102.2" font-size="10.5" text-anchor="end" font-family="Liberation Sans" fill="#000">20</text><text x="23.5" y="79.4" font-size="10.5" text-anchor="end" font-family="Liberation Sans" fill="#000">40</text><text x="23.5" y="56.6" font-size="10.5" text-anchor="end" font-family="Liberation Sans" fill="#000">60</text><text x="23.5" y="33.8" font-size="10.5" text-anchor="end" font-family="Liberation Sans" fill="#000">80</text><text x="23.5" y="11.0" font-size="10.5" text-anchor="end" font-family="Liberation Sans" fill="#000">100</text><line x1="24" y1="121.0" x2="28" y2="121.0" stroke="#000" stroke-width="1"/><line x1="25.5" y1="116.4" x2="28" y2="116.4" stroke="#000" stroke-width="1"/><line x1="25.5" y1="111.9" x2="28" y2="111.9" stroke="#000" stroke-width="1"/><line x1="25.5" y1="107.3" x2="28" y2="107.3" stroke="#000" stroke-width="1"/><line x1="25.5" y1="102.8" x2="28" y2="102.8" stroke="#000" stroke-width="1"/><line x1="24" y1="98.2" x2="28" y2="98.2" stroke="#000" stroke-width="1"/><line x1="25.5" y1="93.6" x2="28" y2="93.6" stroke="#000" stroke-width="1"/><line x1="25.5" y1="89.1" x2="28" y2="89.1" stroke="#000" stroke-width="1"/><line x1="25.5" y1="84.5" x2="28" y2="84.5" stroke="#000" stroke-width="1"/><line x1="25.5" y1="80.0" x2="28" y2="80.0" stroke="#000" stroke-width="1"/><line x1="24" y1="75.4" x2="28" y2="75.4" stroke="#000" stroke-width="1"/><line x1="25.5" y1="70.8" x2="28" y2="70.8" stroke="#000" stroke-width="1"/><line x1="25.5" y1="66.3" x2="28" y2="66.3" stroke="#000" stroke-width="1"/><line x1="25.5" y1="61.7" x2="28" y2="61.7" stroke="#000" stroke-width="1"/><line x1="25.5" y1="57.2" x2="28" y2="57.2" stroke="#000" stroke-width="1"/><line x1="24" y1="52.6" x2="28" y2="52.6" stroke="#000" stroke-width="1"/><line x1="25.5" y1="48.0" x2="28" y2="48.0" stroke="#000" stroke-width="1"/><line x1="25.5" y1="43.5" x2="28" y2="43.5" stroke="#000" stroke-width="1"/><line x1="25.5" y1="38.9" x2="28" y2="38.9" stroke="#000" stroke-width="1"/><line x1="25.5" y1="34.4" x2="28" y2="34.4" stroke="#000" stroke-width="1"/><line x1="24" y1="29.8" x2="28" y2="29.8" stroke="#000" stroke-width="1"/><line x1="25.5" y1="25.2" x2="28" y2="25.2" stroke="#000" stroke-width="1"/><line x1="25.5" y1="20.7" x2="28" y2="20.7" stroke="#000" stroke-width="1"/><line x1="25.5" y1="16.1" x2="28" y2="16.1" stroke="#000" stroke-width="1"/><line x1="25.5" y1="11.6" x2="28" y2="11.6" stroke="#000" stroke-width="1"/><line x1="24" y1="7.0" x2="28" y2="7.0" stroke="#000" stroke-width="1"/><path d="M28 9 Q28 2 31 2 Q34 2 34 9 L34 121 L28 121 Z" fill="url(#trk)" stroke="#9a9a9a" stroke-width=".6"/><path d="M28.3 64.0 L33.7 64.0 L33.7 121 Q31 125 28.3 121 Z" fill="url(#trkb)"/><path d="M28 60.0 L39 60.0 Q41 64.0 39 68.0 L28 68.0 Z" fill="url(#thm)" stroke="#8a8a8a" stroke-width=".6"/><rect x="8" y="125" width="31.5" height="16" fill="#fff" stroke="#000" stroke-width="1.2"/><text x="23.8" y="137.5" font-size="12" font-weight="bold" text-anchor="middle" font-family="Liberation Sans" fill="#000">50.00</text></svg>
<svg style="left:521.5px;top:41px" width="186" height="142"><rect x="0.5" y="0.5" width="185" height="141" fill="#0073a6" stroke="#000" stroke-width="1.2"/><text x="91.0" y="11" font-size="10" fill="#e8f0f8" text-anchor="middle" font-family="Liberation Sans" letter-spacing=".3">INTEGER_8</text><g shape-rendering="crispEdges" stroke="#000" stroke-width="1"><line x1="22.5" y1="110.5" x2="181" y2="110.5" stroke-dasharray="6 4"/><line x1="22.5" y1="86.5" x2="181" y2="86.5" stroke-dasharray="6 4"/><line x1="22.5" y1="63.5" x2="181" y2="63.5" stroke-dasharray="6 4"/><line x1="22.5" y1="39.5" x2="181" y2="39.5" stroke-dasharray="6 4"/><line x1="62.5" y1="16" x2="62.5" y2="137.5" stroke-dasharray="6 4"/><line x1="114.5" y1="16" x2="114.5" y2="137.5" stroke-dasharray="6 4"/><line x1="166.5" y1="16" x2="166.5" y2="137.5" stroke-dasharray="6 4"/><line x1="22.5" y1="16" x2="22.5" y2="133.5" stroke-width="2"/><line x1="16.5" y1="133.5" x2="181" y2="133.5" stroke-width="2"/><line x1="16.5" y1="133.5" x2="22.5" y2="133.5"/><line x1="18.5" y1="128.5" x2="22.5" y2="128.5"/><line x1="18.5" y1="124.5" x2="22.5" y2="124.5"/><line x1="18.5" y1="119.5" x2="22.5" y2="119.5"/><line x1="18.5" y1="114.5" x2="22.5" y2="114.5"/><line x1="16.5" y1="110.5" x2="22.5" y2="110.5"/><line x1="18.5" y1="105.5" x2="22.5" y2="105.5"/><line x1="18.5" y1="100.5" x2="22.5" y2="100.5"/><line x1="18.5" y1="95.5" x2="22.5" y2="95.5"/><line x1="18.5" y1="91.5" x2="22.5" y2="91.5"/><line x1="16.5" y1="86.5" x2="22.5" y2="86.5"/><line x1="18.5" y1="81.5" x2="22.5" y2="81.5"/><line x1="18.5" y1="77.5" x2="22.5" y2="77.5"/><line x1="18.5" y1="72.5" x2="22.5" y2="72.5"/><line x1="18.5" y1="67.5" x2="22.5" y2="67.5"/><line x1="16.5" y1="63.5" x2="22.5" y2="63.5"/><line x1="18.5" y1="58.5" x2="22.5" y2="58.5"/><line x1="18.5" y1="53.5" x2="22.5" y2="53.5"/><line x1="18.5" y1="48.5" x2="22.5" y2="48.5"/><line x1="18.5" y1="44.5" x2="22.5" y2="44.5"/><line x1="16.5" y1="39.5" x2="22.5" y2="39.5"/><line x1="18.5" y1="34.5" x2="22.5" y2="34.5"/><line x1="18.5" y1="30.5" x2="22.5" y2="30.5"/><line x1="18.5" y1="25.5" x2="22.5" y2="25.5"/><line x1="18.5" y1="20.5" x2="22.5" y2="20.5"/><line x1="16.5" y1="16.5" x2="22.5" y2="16.5"/><line x1="36.5" y1="133.5" x2="36.5" y2="137.5"/><line x1="88.5" y1="133.5" x2="88.5" y2="137.5"/><line x1="140.5" y1="133.5" x2="140.5" y2="137.5"/></g><text x="21.5" y="136.5" font-size="8.5" fill="#000" text-anchor="end" font-family="Liberation Sans">0.0</text><text x="21.5" y="113.0" font-size="8.5" fill="#000" text-anchor="end" font-family="Liberation Sans">20.0</text><text x="21.5" y="89.5" font-size="8.5" fill="#000" text-anchor="end" font-family="Liberation Sans">40.0</text><text x="21.5" y="66.0" font-size="8.5" fill="#000" text-anchor="end" font-family="Liberation Sans">60.0</text><text x="21.5" y="42.5" font-size="8.5" fill="#000" text-anchor="end" font-family="Liberation Sans">80.0</text><text x="21.5" y="19.0" font-size="8.5" fill="#000" text-anchor="end" font-family="Liberation Sans">100.0</text><g stroke="#fff" stroke-width="1" shape-rendering="crispEdges"><line x1="24.5" y1="39.5" x2="24.5" y2="92.4"/><line x1="25.5" y1="57.1" x2="25.5" y2="110.0"/><line x1="27.5" y1="39.5" x2="27.5" y2="92.4"/><line x1="28.5" y1="57.1" x2="28.5" y2="110.0"/><line x1="30.5" y1="39.5" x2="30.5" y2="92.4"/><line x1="32.5" y1="57.1" x2="32.5" y2="110.0"/><line x1="33.5" y1="39.5" x2="33.5" y2="92.4"/><line x1="35.5" y1="57.1" x2="35.5" y2="110.0"/><line x1="36.5" y1="39.5" x2="36.5" y2="92.4"/><line x1="38.5" y1="57.1" x2="38.5" y2="110.0"/><line x1="40.5" y1="39.5" x2="40.5" y2="92.4"/><line x1="41.5" y1="57.1" x2="41.5" y2="110.0"/><line x1="43.5" y1="39.5" x2="43.5" y2="92.4"/><line x1="44.5" y1="57.1" x2="44.5" y2="110.0"/><line x1="46.5" y1="39.5" x2="46.5" y2="92.4"/><line x1="48.5" y1="57.1" x2="48.5" y2="110.0"/><line x1="49.5" y1="39.5" x2="49.5" y2="92.4"/><line x1="51.5" y1="57.1" x2="51.5" y2="110.0"/><line x1="52.5" y1="39.5" x2="52.5" y2="92.4"/><line x1="54.5" y1="57.1" x2="54.5" y2="110.0"/><line x1="56.5" y1="39.5" x2="56.5" y2="92.4"/><line x1="57.5" y1="57.1" x2="57.5" y2="110.0"/><line x1="59.5" y1="39.5" x2="59.5" y2="92.4"/><line x1="60.5" y1="57.1" x2="60.5" y2="110.0"/><line x1="62.5" y1="39.5" x2="62.5" y2="92.4"/><line x1="64.5" y1="57.1" x2="64.5" y2="110.0"/><line x1="65.5" y1="39.5" x2="65.5" y2="92.4"/><line x1="67.5" y1="57.1" x2="67.5" y2="110.0"/><line x1="68.5" y1="39.5" x2="68.5" y2="92.4"/><line x1="70.5" y1="57.1" x2="70.5" y2="110.0"/><line x1="72.5" y1="39.5" x2="72.5" y2="92.4"/><line x1="73.5" y1="57.1" x2="73.5" y2="110.0"/><line x1="75.5" y1="39.5" x2="75.5" y2="92.4"/><line x1="76.5" y1="57.1" x2="76.5" y2="110.0"/><line x1="78.5" y1="39.5" x2="78.5" y2="92.4"/><line x1="79.5" y1="57.1" x2="79.5" y2="110.0"/><line x1="81.5" y1="39.5" x2="81.5" y2="92.4"/><line x1="83.5" y1="57.1" x2="83.5" y2="110.0"/><line x1="84.5" y1="39.5" x2="84.5" y2="92.4"/><line x1="86.5" y1="57.1" x2="86.5" y2="110.0"/><line x1="87.5" y1="39.5" x2="87.5" y2="92.4"/><line x1="89.5" y1="57.1" x2="89.5" y2="110.0"/><line x1="91.5" y1="39.5" x2="91.5" y2="92.4"/><line x1="92.5" y1="57.1" x2="92.5" y2="110.0"/><line x1="94.5" y1="39.5" x2="94.5" y2="92.4"/><line x1="95.5" y1="57.1" x2="95.5" y2="110.0"/><line x1="97.5" y1="39.5" x2="97.5" y2="92.4"/><line x1="99.5" y1="57.1" x2="99.5" y2="110.0"/><line x1="100.5" y1="39.5" x2="100.5" y2="92.4"/><line x1="102.5" y1="57.1" x2="102.5" y2="110.0"/><line x1="103.5" y1="39.5" x2="103.5" y2="92.4"/><line x1="105.5" y1="57.1" x2="105.5" y2="110.0"/><line x1="107.5" y1="39.5" x2="107.5" y2="92.4"/><line x1="108.5" y1="57.1" x2="108.5" y2="110.0"/><line x1="110.5" y1="39.5" x2="110.5" y2="92.4"/><line x1="111.5" y1="57.1" x2="111.5" y2="110.0"/><line x1="113.5" y1="39.5" x2="113.5" y2="92.4"/><line x1="115.5" y1="57.1" x2="115.5" y2="110.0"/><line x1="116.5" y1="39.5" x2="116.5" y2="92.4"/><line x1="118.5" y1="57.1" x2="118.5" y2="110.0"/><line x1="119.5" y1="39.5" x2="119.5" y2="92.4"/><line x1="121.5" y1="57.1" x2="121.5" y2="110.0"/><line x1="123.5" y1="39.5" x2="123.5" y2="92.4"/><line x1="124.5" y1="57.1" x2="124.5" y2="110.0"/><line x1="126.5" y1="39.5" x2="126.5" y2="92.4"/><line x1="127.5" y1="57.1" x2="127.5" y2="110.0"/><line x1="129.5" y1="39.5" x2="129.5" y2="92.4"/><line x1="131.5" y1="57.1" x2="131.5" y2="110.0"/><line x1="132.5" y1="39.5" x2="132.5" y2="92.4"/><line x1="134.5" y1="57.1" x2="134.5" y2="110.0"/><line x1="135.5" y1="39.5" x2="135.5" y2="92.4"/><line x1="137.5" y1="57.1" x2="137.5" y2="110.0"/><line x1="139.5" y1="39.5" x2="139.5" y2="92.4"/><line x1="140.5" y1="57.1" x2="140.5" y2="110.0"/><line x1="142.5" y1="39.5" x2="142.5" y2="92.4"/><line x1="143.5" y1="57.1" x2="143.5" y2="110.0"/><line x1="145.5" y1="39.5" x2="145.5" y2="92.4"/><line x1="147.5" y1="57.1" x2="147.5" y2="110.0"/><line x1="148.5" y1="39.5" x2="148.5" y2="92.4"/><line x1="150.5" y1="57.1" x2="150.5" y2="110.0"/><line x1="151.5" y1="39.5" x2="151.5" y2="92.4"/><line x1="153.5" y1="57.1" x2="153.5" y2="110.0"/><line x1="155.5" y1="39.5" x2="155.5" y2="92.4"/><line x1="156.5" y1="57.1" x2="156.5" y2="110.0"/><line x1="158.5" y1="39.5" x2="158.5" y2="92.4"/><line x1="159.5" y1="57.1" x2="159.5" y2="110.0"/><line x1="161.5" y1="39.5" x2="161.5" y2="92.4"/><line x1="163.5" y1="57.1" x2="163.5" y2="110.0"/><line x1="164.5" y1="39.5" x2="164.5" y2="92.4"/><line x1="166.5" y1="57.1" x2="166.5" y2="110.0"/><line x1="167.5" y1="39.5" x2="167.5" y2="92.4"/><line x1="169.5" y1="57.1" x2="169.5" y2="110.0"/><line x1="171.5" y1="39.5" x2="171.5" y2="92.4"/><line x1="172.5" y1="57.1" x2="172.5" y2="110.0"/><line x1="174.5" y1="39.5" x2="174.5" y2="92.4"/><line x1="175.5" y1="57.1" x2="175.5" y2="110.0"/><line x1="177.5" y1="39.5" x2="177.5" y2="92.4"/></g><rect x="21.7" y="37.2" width="4.6" height="4.6" fill="#fff" stroke="#000" stroke-width="1.2"/><rect x="23.3" y="107.7" width="4.6" height="4.6" fill="#fff" stroke="#000" stroke-width="1.2"/><rect x="24.9" y="37.2" width="4.6" height="4.6" fill="#fff" stroke="#000" stroke-width="1.2"/><rect x="26.5" y="107.7" width="4.6" height="4.6" fill="#fff" stroke="#000" stroke-width="1.2"/><rect x="28.1" y="37.2" width="4.6" height="4.6" fill="#fff" stroke="#000" stroke-width="1.2"/><rect x="29.7" y="107.7" width="4.6" height="4.6" fill="#fff" stroke="#000" stroke-width="1.2"/><rect x="31.3" y="37.2" width="4.6" height="4.6" fill="#fff" stroke="#000" stroke-width="1.2"/><rect x="32.9" y="107.7" width="4.6" height="4.6" fill="#fff" stroke="#000" stroke-width="1.2"/><rect x="34.5" y="37.2" width="4.6" height="4.6" fill="#fff" stroke="#000" stroke-width="1.2"/><rect x="36.1" y="107.7" width="4.6" height="4.6" fill="#fff" stroke="#000" stroke-width="1.2"/><rect x="37.7" y="37.2" width="4.6" height="4.6" fill="#fff" stroke="#000" stroke-width="1.2"/><rect x="39.3" y="107.7" width="4.6" height="4.6" fill="#fff" stroke="#000" stroke-width="1.2"/><rect x="40.9" y="37.2" width="4.6" height="4.6" fill="#fff" stroke="#000" stroke-width="1.2"/><rect x="42.5" y="107.7" width="4.6" height="4.6" fill="#fff" stroke="#000" stroke-width="1.2"/><rect x="44.1" y="37.2" width="4.6" height="4.6" fill="#fff" stroke="#000" stroke-width="1.2"/><rect x="45.7" y="107.7" width="4.6" height="4.6" fill="#fff" stroke="#000" stroke-width="1.2"/><rect x="47.3" y="37.2" width="4.6" height="4.6" fill="#fff" stroke="#000" stroke-width="1.2"/><rect x="48.9" y="107.7" width="4.6" height="4.6" fill="#fff" stroke="#000" stroke-width="1.2"/><rect x="50.5" y="37.2" width="4.6" height="4.6" fill="#fff" stroke="#000" stroke-width="1.2"/><rect x="52.1" y="107.7" width="4.6" height="4.6" fill="#fff" stroke="#000" stroke-width="1.2"/><rect x="53.7" y="37.2" width="4.6" height="4.6" fill="#fff" stroke="#000" stroke-width="1.2"/><rect x="55.3" y="107.7" width="4.6" height="4.6" fill="#fff" stroke="#000" stroke-width="1.2"/><rect x="56.9" y="37.2" width="4.6" height="4.6" fill="#fff" stroke="#000" stroke-width="1.2"/><rect x="58.5" y="107.7" width="4.6" height="4.6" fill="#fff" stroke="#000" stroke-width="1.2"/><rect x="60.1" y="37.2" width="4.6" height="4.6" fill="#fff" stroke="#000" stroke-width="1.2"/><rect x="61.7" y="107.7" width="4.6" height="4.6" fill="#fff" stroke="#000" stroke-width="1.2"/><rect x="63.3" y="37.2" width="4.6" height="4.6" fill="#fff" stroke="#000" stroke-width="1.2"/><rect x="64.9" y="107.7" width="4.6" height="4.6" fill="#fff" stroke="#000" stroke-width="1.2"/><rect x="66.5" y="37.2" width="4.6" height="4.6" fill="#fff" stroke="#000" stroke-width="1.2"/><rect x="68.1" y="107.7" width="4.6" height="4.6" fill="#fff" stroke="#000" stroke-width="1.2"/><rect x="69.7" y="37.2" width="4.6" height="4.6" fill="#fff" stroke="#000" stroke-width="1.2"/><rect x="71.3" y="107.7" width="4.6" height="4.6" fill="#fff" stroke="#000" stroke-width="1.2"/><rect x="72.9" y="37.2" width="4.6" height="4.6" fill="#fff" stroke="#000" stroke-width="1.2"/><rect x="74.5" y="107.7" width="4.6" height="4.6" fill="#fff" stroke="#000" stroke-width="1.2"/><rect x="76.1" y="37.2" width="4.6" height="4.6" fill="#fff" stroke="#000" stroke-width="1.2"/><rect x="77.7" y="107.7" width="4.6" height="4.6" fill="#fff" stroke="#000" stroke-width="1.2"/><rect x="79.3" y="37.2" width="4.6" height="4.6" fill="#fff" stroke="#000" stroke-width="1.2"/><rect x="80.9" y="107.7" width="4.6" height="4.6" fill="#fff" stroke="#000" stroke-width="1.2"/><rect x="82.5" y="37.2" width="4.6" height="4.6" fill="#fff" stroke="#000" stroke-width="1.2"/><rect x="84.1" y="107.7" width="4.6" height="4.6" fill="#fff" stroke="#000" stroke-width="1.2"/><rect x="85.7" y="37.2" width="4.6" height="4.6" fill="#fff" stroke="#000" stroke-width="1.2"/><rect x="87.3" y="107.7" width="4.6" height="4.6" fill="#fff" stroke="#000" stroke-width="1.2"/><rect x="88.9" y="37.2" width="4.6" height="4.6" fill="#fff" stroke="#000" stroke-width="1.2"/><rect x="90.5" y="107.7" width="4.6" height="4.6" fill="#fff" stroke="#000" stroke-width="1.2"/><rect x="92.1" y="37.2" width="4.6" height="4.6" fill="#fff" stroke="#000" stroke-width="1.2"/><rect x="93.7" y="107.7" width="4.6" height="4.6" fill="#fff" stroke="#000" stroke-width="1.2"/><rect x="95.3" y="37.2" width="4.6" height="4.6" fill="#fff" stroke="#000" stroke-width="1.2"/><rect x="96.9" y="107.7" width="4.6" height="4.6" fill="#fff" stroke="#000" stroke-width="1.2"/><rect x="98.5" y="37.2" width="4.6" height="4.6" fill="#fff" stroke="#000" stroke-width="1.2"/><rect x="100.1" y="107.7" width="4.6" height="4.6" fill="#fff" stroke="#000" stroke-width="1.2"/><rect x="101.7" y="37.2" width="4.6" height="4.6" fill="#fff" stroke="#000" stroke-width="1.2"/><rect x="103.3" y="107.7" width="4.6" height="4.6" fill="#fff" stroke="#000" stroke-width="1.2"/><rect x="104.9" y="37.2" width="4.6" height="4.6" fill="#fff" stroke="#000" stroke-width="1.2"/><rect x="106.5" y="107.7" width="4.6" height="4.6" fill="#fff" stroke="#000" stroke-width="1.2"/><rect x="108.1" y="37.2" width="4.6" height="4.6" fill="#fff" stroke="#000" stroke-width="1.2"/><rect x="109.7" y="107.7" width="4.6" height="4.6" fill="#fff" stroke="#000" stroke-width="1.2"/><rect x="111.3" y="37.2" width="4.6" height="4.6" fill="#fff" stroke="#000" stroke-width="1.2"/><rect x="112.9" y="107.7" width="4.6" height="4.6" fill="#fff" stroke="#000" stroke-width="1.2"/><rect x="114.5" y="37.2" width="4.6" height="4.6" fill="#fff" stroke="#000" stroke-width="1.2"/><rect x="116.1" y="107.7" width="4.6" height="4.6" fill="#fff" stroke="#000" stroke-width="1.2"/><rect x="117.7" y="37.2" width="4.6" height="4.6" fill="#fff" stroke="#000" stroke-width="1.2"/><rect x="119.3" y="107.7" width="4.6" height="4.6" fill="#fff" stroke="#000" stroke-width="1.2"/><rect x="120.9" y="37.2" width="4.6" height="4.6" fill="#fff" stroke="#000" stroke-width="1.2"/><rect x="122.5" y="107.7" width="4.6" height="4.6" fill="#fff" stroke="#000" stroke-width="1.2"/><rect x="124.1" y="37.2" width="4.6" height="4.6" fill="#fff" stroke="#000" stroke-width="1.2"/><rect x="125.7" y="107.7" width="4.6" height="4.6" fill="#fff" stroke="#000" stroke-width="1.2"/><rect x="127.3" y="37.2" width="4.6" height="4.6" fill="#fff" stroke="#000" stroke-width="1.2"/><rect x="128.9" y="107.7" width="4.6" height="4.6" fill="#fff" stroke="#000" stroke-width="1.2"/><rect x="130.5" y="37.2" width="4.6" height="4.6" fill="#fff" stroke="#000" stroke-width="1.2"/><rect x="132.1" y="107.7" width="4.6" height="4.6" fill="#fff" stroke="#000" stroke-width="1.2"/><rect x="133.7" y="37.2" width="4.6" height="4.6" fill="#fff" stroke="#000" stroke-width="1.2"/><rect x="135.3" y="107.7" width="4.6" height="4.6" fill="#fff" stroke="#000" stroke-width="1.2"/><rect x="136.9" y="37.2" width="4.6" height="4.6" fill="#fff" stroke="#000" stroke-width="1.2"/><rect x="138.5" y="107.7" width="4.6" height="4.6" fill="#fff" stroke="#000" stroke-width="1.2"/><rect x="140.1" y="37.2" width="4.6" height="4.6" fill="#fff" stroke="#000" stroke-width="1.2"/><rect x="141.7" y="107.7" width="4.6" height="4.6" fill="#fff" stroke="#000" stroke-width="1.2"/><rect x="143.3" y="37.2" width="4.6" height="4.6" fill="#fff" stroke="#000" stroke-width="1.2"/><rect x="144.9" y="107.7" width="4.6" height="4.6" fill="#fff" stroke="#000" stroke-width="1.2"/><rect x="146.5" y="37.2" width="4.6" height="4.6" fill="#fff" stroke="#000" stroke-width="1.2"/><rect x="148.1" y="107.7" width="4.6" height="4.6" fill="#fff" stroke="#000" stroke-width="1.2"/><rect x="149.7" y="37.2" width="4.6" height="4.6" fill="#fff" stroke="#000" stroke-width="1.2"/><rect x="151.3" y="107.7" width="4.6" height="4.6" fill="#fff" stroke="#000" stroke-width="1.2"/><rect x="152.9" y="37.2" width="4.6" height="4.6" fill="#fff" stroke="#000" stroke-width="1.2"/><rect x="154.5" y="107.7" width="4.6" height="4.6" fill="#fff" stroke="#000" stroke-width="1.2"/><rect x="156.1" y="37.2" width="4.6" height="4.6" fill="#fff" stroke="#000" stroke-width="1.2"/><rect x="157.7" y="107.7" width="4.6" height="4.6" fill="#fff" stroke="#000" stroke-width="1.2"/><rect x="159.3" y="37.2" width="4.6" height="4.6" fill="#fff" stroke="#000" stroke-width="1.2"/><rect x="160.9" y="107.7" width="4.6" height="4.6" fill="#fff" stroke="#000" stroke-width="1.2"/><rect x="162.5" y="37.2" width="4.6" height="4.6" fill="#fff" stroke="#000" stroke-width="1.2"/><rect x="164.1" y="107.7" width="4.6" height="4.6" fill="#fff" stroke="#000" stroke-width="1.2"/><rect x="165.7" y="37.2" width="4.6" height="4.6" fill="#fff" stroke="#000" stroke-width="1.2"/><rect x="167.3" y="107.7" width="4.6" height="4.6" fill="#fff" stroke="#000" stroke-width="1.2"/><rect x="168.9" y="37.2" width="4.6" height="4.6" fill="#fff" stroke="#000" stroke-width="1.2"/><rect x="170.5" y="107.7" width="4.6" height="4.6" fill="#fff" stroke="#000" stroke-width="1.2"/><rect x="172.1" y="37.2" width="4.6" height="4.6" fill="#fff" stroke="#000" stroke-width="1.2"/><rect x="173.7" y="107.7" width="4.6" height="4.6" fill="#fff" stroke="#000" stroke-width="1.2"/><rect x="175.3" y="37.2" width="4.6" height="4.6" fill="#fff" stroke="#000" stroke-width="1.2"/></svg>
<div style="left:12.5px;top:188px;width:41px;height:142px;background:#e6e6e6;border-left:1px solid #fff;border-top:1px solid #fff;border-bottom:1px solid #888"></div>
<svg style="left:12.5px;top:188px" width="41" height="142"><defs><linearGradient id="trk" x1="0" x2="1"><stop offset="0" stop-color="#bcbcbc"/><stop offset=".35" stop-color="#fff"/><stop offset="1" stop-color="#a8a8a8"/></linearGradient><linearGradient id="trkb" x1="0" x2="1"><stop offset="0" stop-color="#004d73"/><stop offset=".4" stop-color="#1a8cc0"/><stop offset="1" stop-color="#003a58"/></linearGradient><linearGradient id="thm" x1="0" y1="0" x2="0" y2="1"><stop offset="0" stop-color="#f0f0f0"/><stop offset=".5" stop-color="#c8c8c8"/><stop offset="1" stop-color="#808080"/></linearGradient></defs><text x="23.5" y="125.0" font-size="10.5" text-anchor="end" font-family="Liberation Sans" fill="#000">0</text><text x="23.5" y="102.2" font-size="10.5" text-anchor="end" font-family="Liberation Sans" fill="#000">20</text><text x="23.5" y="79.4" font-size="10.5" text-anchor="end" font-family="Liberation Sans" fill="#000">40</text><text x="23.5" y="56.6" font-size="10.5" text-anchor="end" font-family="Liberation Sans" fill="#000">60</text><text x="23.5" y="33.8" font-size="10.5" text-anchor="end" font-family="Liberation Sans" fill="#000">80</text><text x="23.5" y="11.0" font-size="10.5" text-anchor="end" font-family="Liberation Sans" fill="#000">100</text><line x1="24" y1="121.0" x2="28" y2="121.0" stroke="#000" stroke-width="1"/><line x1="25.5" y1="116.4" x2="28" y2="116.4" stroke="#000" stroke-width="1"/><line x1="25.5" y1="111.9" x2="28" y2="111.9" stroke="#000" stroke-width="1"/><line x1="25.5" y1="107.3" x2="28" y2="107.3" stroke="#000" stroke-width="1"/><line x1="25.5" y1="102.8" x2="28" y2="102.8" stroke="#000" stroke-width="1"/><line x1="24" y1="98.2" x2="28" y2="98.2" stroke="#000" stroke-width="1"/><line x1="25.5" y1="93.6" x2="28" y2="93.6" stroke="#000" stroke-width="1"/><line x1="25.5" y1="89.1" x2="28" y2="89.1" stroke="#000" stroke-width="1"/><line x1="25.5" y1="84.5" x2="28" y2="84.5" stroke="#000" stroke-width="1"/><line x1="25.5" y1="80.0" x2="28" y2="80.0" stroke="#000" stroke-width="1"/><line x1="24" y1="75.4" x2="28" y2="75.4" stroke="#000" stroke-width="1"/><line x1="25.5" y1="70.8" x2="28" y2="70.8" stroke="#000" stroke-width="1"/><line x1="25.5" y1="66.3" x2="28" y2="66.3" stroke="#000" stroke-width="1"/><line x1="25.5" y1="61.7" x2="28" y2="61.7" stroke="#000" stroke-width="1"/><line x1="25.5" y1="57.2" x2="28" y2="57.2" stroke="#000" stroke-width="1"/><line x1="24" y1="52.6" x2="28" y2="52.6" stroke="#000" stroke-width="1"/><line x1="25.5" y1="48.0" x2="28" y2="48.0" stroke="#000" stroke-width="1"/><line x1="25.5" y1="43.5" x2="28" y2="43.5" stroke="#000" stroke-width="1"/><line x1="25.5" y1="38.9" x2="28" y2="38.9" stroke="#000" stroke-width="1"/><line x1="25.5" y1="34.4" x2="28" y2="34.4" stroke="#000" stroke-width="1"/><line x1="24" y1="29.8" x2="28" y2="29.8" stroke="#000" stroke-width="1"/><line x1="25.5" y1="25.2" x2="28" y2="25.2" stroke="#000" stroke-width="1"/><line x1="25.5" y1="20.7" x2="28" y2="20.7" stroke="#000" stroke-width="1"/><line x1="25.5" y1="16.1" x2="28" y2="16.1" stroke="#000" stroke-width="1"/><line x1="25.5" y1="11.6" x2="28" y2="11.6" stroke="#000" stroke-width="1"/><line x1="24" y1="7.0" x2="28" y2="7.0" stroke="#000" stroke-width="1"/><path d="M28 9 Q28 2 31 2 Q34 2 34 9 L34 121 L28 121 Z" fill="url(#trk)" stroke="#9a9a9a" stroke-width=".6"/><path d="M28.3 64.0 L33.7 64.0 L33.7 121 Q31 125 28.3 121 Z" fill="url(#trkb)"/><path d="M28 60.0 L39 60.0 Q41 64.0 39 68.0 L28 68.0 Z" fill="url(#thm)" stroke="#8a8a8a" stroke-width=".6"/><rect x="8" y="125" width="31.5" height="16" fill="#fff" stroke="#000" stroke-width="1.2"/><text x="23.8" y="137.5" font-size="12" font-weight="bold" text-anchor="middle" font-family="Liberation Sans" fill="#000">50.00</text></svg>
<svg style="left:53.5px;top:188px" width="186" height="142"><rect x="0.5" y="0.5" width="185" height="141" fill="#0073a6" stroke="#000" stroke-width="1.2"/><text x="91.0" y="11" font-size="10" fill="#e8f0f8" text-anchor="middle" font-family="Liberation Sans" letter-spacing=".3">FLOATINGPOINT_64</text><g shape-rendering="crispEdges" stroke="#000" stroke-width="1"><line x1="22.5" y1="110.5" x2="181" y2="110.5" stroke-dasharray="6 4"/><line x1="22.5" y1="86.5" x2="181" y2="86.5" stroke-dasharray="6 4"/><line x1="22.5" y1="63.5" x2="181" y2="63.5" stroke-dasharray="6 4"/><line x1="22.5" y1="39.5" x2="181" y2="39.5" stroke-dasharray="6 4"/><line x1="62.5" y1="16" x2="62.5" y2="137.5" stroke-dasharray="6 4"/><line x1="114.5" y1="16" x2="114.5" y2="137.5" stroke-dasharray="6 4"/><line x1="166.5" y1="16" x2="166.5" y2="137.5" stroke-dasharray="6 4"/><line x1="22.5" y1="16" x2="22.5" y2="133.5" stroke-width="2"/><line x1="16.5" y1="133.5" x2="181" y2="133.5" stroke-width="2"/><line x1="16.5" y1="133.5" x2="22.5" y2="133.5"/><line x1="18.5" y1="128.5" x2="22.5" y2="128.5"/><line x1="18.5" y1="124.5" x2="22.5" y2="124.5"/><line x1="18.5" y1="119.5" x2="22.5" y2="119.5"/><line x1="18.5" y1="114.5" x2="22.5" y2="114.5"/><line x1="16.5" y1="110.5" x2="22.5" y2="110.5"/><line x1="18.5" y1="105.5" x2="22.5" y2="105.5"/><line x1="18.5" y1="100.5" x2="22.5" y2="100.5"/><line x1="18.5" y1="95.5" x2="22.5" y2="95.5"/><line x1="18.5" y1="91.5" x2="22.5" y2="91.5"/><line x1="16.5" y1="86.5" x2="22.5" y2="86.5"/><line x1="18.5" y1="81.5" x2="22.5" y2="81.5"/><line x1="18.5" y1="77.5" x2="22.5" y2="77.5"/><line x1="18.5" y1="72.5" x2="22.5" y2="72.5"/><line x1="18.5" y1="67.5" x2="22.5" y2="67.5"/><line x1="16.5" y1="63.5" x2="22.5" y2="63.5"/><line x1="18.5" y1="58.5" x2="22.5" y2="58.5"/><line x1="18.5" y1="53.5" x2="22.5" y2="53.5"/><line x1="18.5" y1="48.5" x2="22.5" y2="48.5"/><line x1="18.5" y1="44.5" x2="22.5" y2="44.5"/><line x1="16.5" y1="39.5" x2="22.5" y2="39.5"/><line x1="18.5" y1="34.5" x2="22.5" y2="34.5"/><line x1="18.5" y1="30.5" x2="22.5" y2="30.5"/><line x1="18.5" y1="25.5" x2="22.5" y2="25.5"/><line x1="18.5" y1="20.5" x2="22.5" y2="20.5"/><line x1="16.5" y1="16.5" x2="22.5" y2="16.5"/><line x1="36.5" y1="133.5" x2="36.5" y2="137.5"/><line x1="88.5" y1="133.5" x2="88.5" y2="137.5"/><line x1="140.5" y1="133.5" x2="140.5" y2="137.5"/></g><text x="21.5" y="136.5" font-size="8.5" fill="#000" text-anchor="end" font-family="Liberation Sans">0.0</text><text x="21.5" y="113.0" font-size="8.5" fill="#000" text-anchor="end" font-family="Liberation Sans">20.0</text><text x="21.5" y="89.5" font-size="8.5" fill="#000" text-anchor="end" font-family="Liberation Sans">40.0</text><text x="21.5" y="66.0" font-size="8.5" fill="#000" text-anchor="end" font-family="Liberation Sans">60.0</text><text x="21.5" y="42.5" font-size="8.5" fill="#000" text-anchor="end" font-family="Liberation Sans">80.0</text><text x="21.5" y="19.0" font-size="8.5" fill="#000" text-anchor="end" font-family="Liberation Sans">100.0</text><polyline points="24.0,17.0 26.0,18.4 28.0,20.5 30.0,23.1 32.0,26.3 34.0,30.1 36.0,34.3 38.0,39.0 40.0,44.1 42.0,49.5 44.0,55.1 46.0,61.0 48.0,67.1 50.0,73.2 52.0,79.4 54.0,85.5 56.0,91.4 58.0,97.2 60.0,102.8 62.0,108.0 64.0,112.9 66.0,117.4 68.0,121.4 70.0,124.8 72.0,127.8 74.0,130.1 76.0,131.9 78.0,133.0 80.0,133.5 82.0,133.3 84.0,132.5 86.0,131.1 88.0,129.0 90.0,126.4 92.0,123.2 94.0,119.4 96.0,115.2 98.0,110.5 100.0,105.4 102.0,100.0 104.0,94.4 106.0,88.5 108.0,82.4 110.0,76.3 112.0,70.1 114.0,64.0 116.0,58.1 118.0,52.3 120.0,46.7 122.0,41.5 124.0,36.6 126.0,32.1 128.0,28.1 130.0,24.7 132.0,21.7 134.0,19.4 136.0,17.6 138.0,16.5 140.0,16.0 142.0,16.2 144.0,17.0 146.0,18.4 148.0,20.5 150.0,23.1 152.0,26.3 154.0,30.1 156.0,34.3 158.0,39.0 160.0,44.1 162.0,49.5 164.0,55.1 166.0,61.0 168.0,67.1 170.0,73.2 172.0,79.4 174.0,85.5 176.0,91.4 178.0,97.2 180.0,102.8" fill="none" stroke="#fff" stroke-width="1.1"/><rect x="21.7" y="14.7" width="4.6" height="4.6" fill="#fff" stroke="#000" stroke-width="1.2"/><rect x="23.7" y="16.1" width="4.6" height="4.6" fill="#fff" stroke="#000" stroke-width="1.2"/><rect x="25.7" y="18.2" width="4.6" height="4.6" fill="#fff" stroke="#000" stroke-width="1.2"/><rect x="27.7" y="20.8" width="4.6" height="4.6" fill="#fff" stroke="#000" stroke-width="1.2"/><rect x="29.7" y="24.0" width="4.6" height="4.6" fill="#fff" stroke="#000" stroke-width="1.2"/><rect x="31.7" y="27.8" width="4.6" height="4.6" fill="#fff" stroke="#000" stroke-width="1.2"/><rect x="33.7" y="32.0" width="4.6" height="4.6" fill="#fff" stroke="#000" stroke-width="1.2"/><rect x="35.7" y="36.7" width="4.6" height="4.6" fill="#fff" stroke="#000" stroke-width="1.2"/><rect x="37.7" y="41.8" width="4.6" height="4.6" fill="#fff" stroke="#000" stroke-width="1.2"/><rect x="39.7" y="47.2" width="4.6" height="4.6" fill="#fff" stroke="#000" stroke-width="1.2"/><rect x="41.7" y="52.8" width="4.6" height="4.6" fill="#fff" stroke="#000" stroke-width="1.2"/><rect x="43.7" y="58.7" width="4.6" height="4.6" fill="#fff" stroke="#000" stroke-width="1.2"/><rect x="45.7" y="64.8" width="4.6" height="4.6" fill="#fff" stroke="#000" stroke-width="1.2"/><rect x="47.7" y="70.9" width="4.6" height="4.6" fill="#fff" stroke="#000" stroke-width="1.2"/><rect x="49.7" y="77.1" width="4.6" height="4.6" fill="#fff" stroke="#000" stroke-width="1.2"/><rect x="51.7" y="83.2" width="4.6" height="4.6" fill="#fff" stroke="#000" stroke-width="1.2"/><rect x="53.7" y="89.1" width="4.6" height="4.6" fill="#fff" stroke="#000" stroke-width="1.2"/><rect x="55.7" y="94.9" width="4.6" height="4.6" fill="#fff" stroke="#000" stroke-width="1.2"/><rect x="57.7" y="100.5" width="4.6" height="4.6" fill="#fff" stroke="#000" stroke-width="1.2"/><rect x="59.7" y="105.7" width="4.6" height="4.6" fill="#fff" stroke="#000" stroke-width="1.2"/><rect x="61.7" y="110.6" width="4.6" height="4.6" fill="#fff" stroke="#000" stroke-width="1.2"/><rect x="63.7" y="115.1" width="4.6" height="4.6" fill="#fff" stroke="#000" stroke-width="1.2"/><rect x="65.7" y="119.1" width="4.6" height="4.6" fill="#fff" stroke="#000" stroke-width="1.2"/><rect x="67.7" y="122.5" width="4.6" height="4.6" fill="#fff" stroke="#000" stroke-width="1.2"/><rect x="69.7" y="125.5" width="4.6" height="4.6" fill="#fff" stroke="#000" stroke-width="1.2"/><rect x="71.7" y="127.8" width="4.6" height="4.6" fill="#fff" stroke="#000" stroke-width="1.2"/><rect x="73.7" y="129.6" width="4.6" height="4.6" fill="#fff" stroke="#000" stroke-width="1.2"/><rect x="75.7" y="130.7" width="4.6" height="4.6" fill="#fff" stroke="#000" stroke-width="1.2"/><rect x="77.7" y="131.2" width="4.6" height="4.6" fill="#fff" stroke="#000" stroke-width="1.2"/><rect x="79.7" y="131.0" width="4.6" height="4.6" fill="#fff" stroke="#000" stroke-width="1.2"/><rect x="81.7" y="130.2" width="4.6" height="4.6" fill="#fff" stroke="#000" stroke-width="1.2"/><rect x="83.7" y="128.8" width="4.6" height="4.6" fill="#fff" stroke="#000" stroke-width="1.2"/><rect x="85.7" y="126.7" width="4.6" height="4.6" fill="#fff" stroke="#000" stroke-width="1.2"/><rect x="87.7" y="124.1" width="4.6" height="4.6" fill="#fff" stroke="#000" stroke-width="1.2"/><rect x="89.7" y="120.9" width="4.6" height="4.6" fill="#fff" stroke="#000" stroke-width="1.2"/><rect x="91.7" y="117.1" width="4.6" height="4.6" fill="#fff" stroke="#000" stroke-width="1.2"/><rect x="93.7" y="112.9" width="4.6" height="4.6" fill="#fff" stroke="#000" stroke-width="1.2"/><rect x="95.7" y="108.2" width="4.6" height="4.6" fill="#fff" stroke="#000" stroke-width="1.2"/><rect x="97.7" y="103.1" width="4.6" height="4.6" fill="#fff" stroke="#000" stroke-width="1.2"/><rect x="99.7" y="97.7" width="4.6" height="4.6" fill="#fff" stroke="#000" stroke-width="1.2"/><rect x="101.7" y="92.1" width="4.6" height="4.6" fill="#fff" stroke="#000" stroke-width="1.2"/><rect x="103.7" y="86.2" width="4.6" height="4.6" fill="#fff" stroke="#000" stroke-width="1.2"/><rect x="105.7" y="80.1" width="4.6" height="4.6" fill="#fff" stroke="#000" stroke-width="1.2"/><rect x="107.7" y="74.0" width="4.6" height="4.6" fill="#fff" stroke="#000" stroke-width="1.2"/><rect x="109.7" y="67.8" width="4.6" height="4.6" fill="#fff" stroke="#000" stroke-width="1.2"/><rect x="111.7" y="61.7" width="4.6" height="4.6" fill="#fff" stroke="#000" stroke-width="1.2"/><rect x="113.7" y="55.8" width="4.6" height="4.6" fill="#fff" stroke="#000" stroke-width="1.2"/><rect x="115.7" y="50.0" width="4.6" height="4.6" fill="#fff" stroke="#000" stroke-width="1.2"/><rect x="117.7" y="44.4" width="4.6" height="4.6" fill="#fff" stroke="#000" stroke-width="1.2"/><rect x="119.7" y="39.2" width="4.6" height="4.6" fill="#fff" stroke="#000" stroke-width="1.2"/><rect x="121.7" y="34.3" width="4.6" height="4.6" fill="#fff" stroke="#000" stroke-width="1.2"/><rect x="123.7" y="29.8" width="4.6" height="4.6" fill="#fff" stroke="#000" stroke-width="1.2"/><rect x="125.7" y="25.8" width="4.6" height="4.6" fill="#fff" stroke="#000" stroke-width="1.2"/><rect x="127.7" y="22.4" width="4.6" height="4.6" fill="#fff" stroke="#000" stroke-width="1.2"/><rect x="129.7" y="19.4" width="4.6" height="4.6" fill="#fff" stroke="#000" stroke-width="1.2"/><rect x="131.7" y="17.1" width="4.6" height="4.6" fill="#fff" stroke="#000" stroke-width="1.2"/><rect x="133.7" y="15.3" width="4.6" height="4.6" fill="#fff" stroke="#000" stroke-width="1.2"/><rect x="135.7" y="14.2" width="4.6" height="4.6" fill="#fff" stroke="#000" stroke-width="1.2"/><rect x="137.7" y="13.7" width="4.6" height="4.6" fill="#fff" stroke="#000" stroke-width="1.2"/><rect x="139.7" y="13.9" width="4.6" height="4.6" fill="#fff" stroke="#000" stroke-width="1.2"/><rect x="141.7" y="14.7" width="4.6" height="4.6" fill="#fff" stroke="#000" stroke-width="1.2"/><rect x="143.7" y="16.1" width="4.6" height="4.6" fill="#fff" stroke="#000" stroke-width="1.2"/><rect x="145.7" y="18.2" width="4.6" height="4.6" fill="#fff" stroke="#000" stroke-width="1.2"/><rect x="147.7" y="20.8" width="4.6" height="4.6" fill="#fff" stroke="#000" stroke-width="1.2"/><rect x="149.7" y="24.0" width="4.6" height="4.6" fill="#fff" stroke="#000" stroke-width="1.2"/><rect x="151.7" y="27.8" width="4.6" height="4.6" fill="#fff" stroke="#000" stroke-width="1.2"/><rect x="153.7" y="32.0" width="4.6" height="4.6" fill="#fff" stroke="#000" stroke-width="1.2"/><rect x="155.7" y="36.7" width="4.6" height="4.6" fill="#fff" stroke="#000" stroke-width="1.2"/><rect x="157.7" y="41.8" width="4.6" height="4.6" fill="#fff" stroke="#000" stroke-width="1.2"/><rect x="159.7" y="47.2" width="4.6" height="4.6" fill="#fff" stroke="#000" stroke-width="1.2"/><rect x="161.7" y="52.8" width="4.6" height="4.6" fill="#fff" stroke="#000" stroke-width="1.2"/><rect x="163.7" y="58.7" width="4.6" height="4.6" fill="#fff" stroke="#000" stroke-width="1.2"/><rect x="165.7" y="64.8" width="4.6" height="4.6" fill="#fff" stroke="#000" stroke-width="1.2"/><rect x="167.7" y="70.9" width="4.6" height="4.6" fill="#fff" stroke="#000" stroke-width="1.2"/><rect x="169.7" y="77.1" width="4.6" height="4.6" fill="#fff" stroke="#000" stroke-width="1.2"/><rect x="171.7" y="83.2" width="4.6" height="4.6" fill="#fff" stroke="#000" stroke-width="1.2"/><rect x="173.7" y="89.1" width="4.6" height="4.6" fill="#fff" stroke="#000" stroke-width="1.2"/><rect x="175.7" y="94.9" width="4.6" height="4.6" fill="#fff" stroke="#000" stroke-width="1.2"/><rect x="177.7" y="100.5" width="4.6" height="4.6" fill="#fff" stroke="#000" stroke-width="1.2"/></svg>
<div style="left:246px;top:188px;width:41px;height:142px;background:#e6e6e6;border-left:1px solid #fff;border-top:1px solid #fff;border-bottom:1px solid #888"></div>
<svg style="left:246px;top:188px" width="41" height="142"><defs><linearGradient id="trk" x1="0" x2="1"><stop offset="0" stop-color="#bcbcbc"/><stop offset=".35" stop-color="#fff"/><stop offset="1" stop-color="#a8a8a8"/></linearGradient><linearGradient id="trkb" x1="0" x2="1"><stop offset="0" stop-color="#004d73"/><stop offset=".4" stop-color="#1a8cc0"/><stop offset="1" stop-color="#003a58"/></linearGradient><linearGradient id="thm" x1="0" y1="0" x2="0" y2="1"><stop offset="0" stop-color="#f0f0f0"/><stop offset=".5" stop-color="#c8c8c8"/><stop offset="1" stop-color="#808080"/></linearGradient></defs><text x="23.5" y="125.0" font-size="10.5" text-anchor="end" font-family="Liberation Sans" fill="#000">0</text><text x="23.5" y="102.2" font-size="10.5" text-anchor="end" font-family="Liberation Sans" fill="#000">20</text><text x="23.5" y="79.4" font-size="10.5" text-anchor="end" font-family="Liberation Sans" fill="#000">40</text><text x="23.5" y="56.6" font-size="10.5" text-anchor="end" font-family="Liberation Sans" fill="#000">60</text><text x="23.5" y="33.8" font-size="10.5" text-anchor="end" font-family="Liberation Sans" fill="#000">80</text><text x="23.5" y="11.0" font-size="10.5" text-anchor="end" font-family="Liberation Sans" fill="#000">100</text><line x1="24" y1="121.0" x2="28" y2="121.0" stroke="#000" stroke-width="1"/><line x1="25.5" y1="116.4" x2="28" y2="116.4" stroke="#000" stroke-width="1"/><line x1="25.5" y1="111.9" x2="28" y2="111.9" stroke="#000" stroke-width="1"/><line x1="25.5" y1="107.3" x2="28" y2="107.3" stroke="#000" stroke-width="1"/><line x1="25.5" y1="102.8" x2="28" y2="102.8" stroke="#000" stroke-width="1"/><line x1="24" y1="98.2" x2="28" y2="98.2" stroke="#000" stroke-width="1"/><line x1="25.5" y1="93.6" x2="28" y2="93.6" stroke="#000" stroke-width="1"/><line x1="25.5" y1="89.1" x2="28" y2="89.1" stroke="#000" stroke-width="1"/><line x1="25.5" y1="84.5" x2="28" y2="84.5" stroke="#000" stroke-width="1"/><line x1="25.5" y1="80.0" x2="28" y2="80.0" stroke="#000" stroke-width="1"/><line x1="24" y1="75.4" x2="28" y2="75.4" stroke="#000" stroke-width="1"/><line x1="25.5" y1="70.8" x2="28" y2="70.8" stroke="#000" stroke-width="1"/><line x1="25.5" y1="66.3" x2="28" y2="66.3" stroke="#000" stroke-width="1"/><line x1="25.5" y1="61.7" x2="28" y2="61.7" stroke="#000" stroke-width="1"/><line x1="25.5" y1="57.2" x2="28" y2="57.2" stroke="#000" stroke-width="1"/><line x1="24" y1="52.6" x2="28" y2="52.6" stroke="#000" stroke-width="1"/><line x1="25.5" y1="48.0" x2="28" y2="48.0" stroke="#000" stroke-width="1"/><line x1="25.5" y1="43.5" x2="28" y2="43.5" stroke="#000" stroke-width="1"/><line x1="25.5" y1="38.9" x2="28" y2="38.9" stroke="#000" stroke-width="1"/><line x1="25.5" y1="34.4" x2="28" y2="34.4" stroke="#000" stroke-width="1"/><line x1="24" y1="29.8" x2="28" y2="29.8" stroke="#000" stroke-width="1"/><line x1="25.5" y1="25.2" x2="28" y2="25.2" stroke="#000" stroke-width="1"/><line x1="25.5" y1="20.7" x2="28" y2="20.7" stroke="#000" stroke-width="1"/><line x1="25.5" y1="16.1" x2="28" y2="16.1" stroke="#000" stroke-width="1"/><line x1="25.5" y1="11.6" x2="28" y2="11.6" stroke="#000" stroke-width="1"/><line x1="24" y1="7.0" x2="28" y2="7.0" stroke="#000" stroke-width="1"/><path d="M28 9 Q28 2 31 2 Q34 2 34 9 L34 121 L28 121 Z" fill="url(#trk)" stroke="#9a9a9a" stroke-width=".6"/><path d="M28.3 64.0 L33.7 64.0 L33.7 121 Q31 125 28.3 121 Z" fill="url(#trkb)"/><path d="M28 60.0 L39 60.0 Q41 64.0 39 68.0 L28 68.0 Z" fill="url(#thm)" stroke="#8a8a8a" stroke-width=".6"/><rect x="8" y="125" width="31.5" height="16" fill="#fff" stroke="#000" stroke-width="1.2"/><text x="23.8" y="137.5" font-size="12" font-weight="bold" text-anchor="middle" font-family="Liberation Sans" fill="#000">50.00</text></svg>
<svg style="left:287.7px;top:188px" width="186" height="142"><rect x="0.5" y="0.5" width="185" height="141" fill="#0073a6" stroke="#000" stroke-width="1.2"/><text x="91.0" y="11" font-size="10" fill="#e8f0f8" text-anchor="middle" font-family="Liberation Sans" letter-spacing=".3">INTEGER_32</text><g shape-rendering="crispEdges" stroke="#000" stroke-width="1"><line x1="22.5" y1="110.5" x2="181" y2="110.5" stroke-dasharray="6 4"/><line x1="22.5" y1="86.5" x2="181" y2="86.5" stroke-dasharray="6 4"/><line x1="22.5" y1="63.5" x2="181" y2="63.5" stroke-dasharray="6 4"/><line x1="22.5" y1="39.5" x2="181" y2="39.5" stroke-dasharray="6 4"/><line x1="62.5" y1="16" x2="62.5" y2="137.5" stroke-dasharray="6 4"/><line x1="114.5" y1="16" x2="114.5" y2="137.5" stroke-dasharray="6 4"/><line x1="166.5" y1="16" x2="166.5" y2="137.5" stroke-dasharray="6 4"/><line x1="22.5" y1="16" x2="22.5" y2="133.5" stroke-width="2"/><line x1="16.5" y1="133.5" x2="181" y2="133.5" stroke-width="2"/><line x1="16.5" y1="133.5" x2="22.5" y2="133.5"/><line x1="18.5" y1="128.5" x2="22.5" y2="128.5"/><line x1="18.5" y1="124.5" x2="22.5" y2="124.5"/><line x1="18.5" y1="119.5" x2="22.5" y2="119.5"/><line x1="18.5" y1="114.5" x2="22.5" y2="114.5"/><line x1="16.5" y1="110.5" x2="22.5" y2="110.5"/><line x1="18.5" y1="105.5" x2="22.5" y2="105.5"/><line x1="18.5" y1="100.5" x2="22.5" y2="100.5"/><line x1="18.5" y1="95.5" x2="22.5" y2="95.5"/><line x1="18.5" y1="91.5" x2="22.5" y2="91.5"/><line x1="16.5" y1="86.5" x2="22.5" y2="86.5"/><line x1="18.5" y1="81.5" x2="22.5" y2="81.5"/><line x1="18.5" y1="77.5" x2="22.5" y2="77.5"/><line x1="18.5" y1="72.5" x2="22.5" y2="72.5"/><line x1="18.5" y1="67.5" x2="22.5" y2="67.5"/><line x1="16.5" y1="63.5" x2="22.5" y2="63.5"/><line x1="18.5" y1="58.5" x2="22.5" y2="58.5"/><line x1="18.5" y1="53.5" x2="22.5" y2="53.5"/><line x1="18.5" y1="48.5" x2="22.5" y2="48.5"/><line x1="18.5" y1="44.5" x2="22.5" y2="44.5"/><line x1="16.5" y1="39.5" x2="22.5" y2="39.5"/><line x1="18.5" y1="34.5" x2="22.5" y2="34.5"/><line x1="18.5" y1="30.5" x2="22.5" y2="30.5"/><line x1="18.5" y1="25.5" x2="22.5" y2="25.5"/><line x1="18.5" y1="20.5" x2="22.5" y2="20.5"/><line x1="16.5" y1="16.5" x2="22.5" y2="16.5"/><line x1="36.5" y1="133.5" x2="36.5" y2="137.5"/><line x1="88.5" y1="133.5" x2="88.5" y2="137.5"/><line x1="140.5" y1="133.5" x2="140.5" y2="137.5"/></g><text x="21.5" y="136.5" font-size="8.5" fill="#000" text-anchor="end" font-family="Liberation Sans">0.0</text><text x="21.5" y="113.0" font-size="8.5" fill="#000" text-anchor="end" font-family="Liberation Sans">20.0</text><text x="21.5" y="89.5" font-size="8.5" fill="#000" text-anchor="end" font-family="Liberation Sans">40.0</text><text x="21.5" y="66.0" font-size="8.5" fill="#000" text-anchor="end" font-family="Liberation Sans">60.0</text><text x="21.5" y="42.5" font-size="8.5" fill="#000" text-anchor="end" font-family="Liberation Sans">80.0</text><text x="21.5" y="19.0" font-size="8.5" fill="#000" text-anchor="end" font-family="Liberation Sans">100.0</text><polyline points="24.0,95.0 25.9,115.0 27.9,57.4 29.8,124.0 31.8,70.6 33.8,90.2 35.7,125.6 37.7,73.9 39.6,128.0 41.6,82.4 43.5,124.3 45.5,121.9 47.4,83.4 49.4,37.1 51.3,118.1 53.3,106.6 55.2,60.1 57.2,23.2 59.1,65.9 61.1,86.6 63.0,19.9 65.0,127.0 66.9,33.5 68.9,99.0 70.8,115.7 72.8,118.8 74.7,96.8 76.7,38.3 78.6,111.5 80.6,65.4 82.5,58.8 84.5,89.4 86.4,69.3 88.4,125.1 90.3,125.5 92.3,108.6 94.2,54.0 96.2,83.1 98.1,96.2 100.1,64.9 102.0,80.1 104.0,97.8 105.9,40.9 107.9,51.8 109.8,104.2 111.8,66.2 113.7,71.8 115.7,31.6 117.6,48.3 119.6,99.2 121.5,19.5 123.5,118.7 125.4,84.2 127.4,45.1 129.3,114.8 131.3,76.0 133.2,127.8 135.2,55.4 137.1,44.3 139.1,66.3 141.0,31.5 143.0,96.2 144.9,52.3 146.9,63.9 148.8,65.6 150.8,79.8 152.7,35.6 154.6,23.5 156.6,77.7 158.5,55.8 160.5,125.3 162.4,51.5 164.4,57.8 166.3,18.0 168.3,37.7 170.2,99.6 172.2,87.9 174.1,55.3 176.1,129.7 178.0,79.2 180.0,113.0" fill="none" stroke="#fff" stroke-width="1.1"/><rect x="21.7" y="92.7" width="4.6" height="4.6" fill="#fff" stroke="#000" stroke-width="1.2"/><rect x="23.6" y="112.7" width="4.6" height="4.6" fill="#fff" stroke="#000" stroke-width="1.2"/><rect x="25.6" y="55.1" width="4.6" height="4.6" fill="#fff" stroke="#000" stroke-width="1.2"/><rect x="27.5" y="121.7" width="4.6" height="4.6" fill="#fff" stroke="#000" stroke-width="1.2"/><rect x="29.5" y="68.3" width="4.6" height="4.6" fill="#fff" stroke="#000" stroke-width="1.2"/><rect x="31.4" y="87.9" width="4.6" height="4.6" fill="#fff" stroke="#000" stroke-width="1.2"/><rect x="33.4" y="123.3" width="4.6" height="4.6" fill="#fff" stroke="#000" stroke-width="1.2"/><rect x="35.4" y="71.6" width="4.6" height="4.6" fill="#fff" stroke="#000" stroke-width="1.2"/><rect x="37.3" y="125.7" width="4.6" height="4.6" fill="#fff" stroke="#000" stroke-width="1.2"/><rect x="39.3" y="80.1" width="4.6" height="4.6" fill="#fff" stroke="#000" stroke-width="1.2"/><rect x="41.2" y="122.0" width="4.6" height="4.6" fill="#fff" stroke="#000" stroke-width="1.2"/><rect x="43.2" y="119.6" width="4.6" height="4.6" fill="#fff" stroke="#000" stroke-width="1.2"/><rect x="45.1" y="81.1" width="4.6" height="4.6" fill="#fff" stroke="#000" stroke-width="1.2"/><rect x="47.1" y="34.8" width="4.6" height="4.6" fill="#fff" stroke="#000" stroke-width="1.2"/><rect x="49.0" y="115.8" width="4.6" height="4.6" fill="#fff" stroke="#000" stroke-width="1.2"/><rect x="51.0" y="104.3" width="4.6" height="4.6" fill="#fff" stroke="#000" stroke-width="1.2"/><rect x="52.9" y="57.8" width="4.6" height="4.6" fill="#fff" stroke="#000" stroke-width="1.2"/><rect x="54.9" y="20.9" width="4.6" height="4.6" fill="#fff" stroke="#000" stroke-width="1.2"/><rect x="56.8" y="63.6" width="4.6" height="4.6" fill="#fff" stroke="#000" stroke-width="1.2"/><rect x="58.8" y="84.3" width="4.6" height="4.6" fill="#fff" stroke="#000" stroke-width="1.2"/><rect x="60.7" y="17.6" width="4.6" height="4.6" fill="#fff" stroke="#000" stroke-width="1.2"/><rect x="62.7" y="124.7" width="4.6" height="4.6" fill="#fff" stroke="#000" stroke-width="1.2"/><rect x="64.6" y="31.2" width="4.6" height="4.6" fill="#fff" stroke="#000" stroke-width="1.2"/><rect x="66.6" y="96.7" width="4.6" height="4.6" fill="#fff" stroke="#000" stroke-width="1.2"/><rect x="68.5" y="113.4" width="4.6" height="4.6" fill="#fff" stroke="#000" stroke-width="1.2"/><rect x="70.5" y="116.5" width="4.6" height="4.6" fill="#fff" stroke="#000" stroke-width="1.2"/><rect x="72.4" y="94.5" width="4.6" height="4.6" fill="#fff" stroke="#000" stroke-width="1.2"/><rect x="74.4" y="36.0" width="4.6" height="4.6" fill="#fff" stroke="#000" stroke-width="1.2"/><rect x="76.3" y="109.2" width="4.6" height="4.6" fill="#fff" stroke="#000" stroke-width="1.2"/><rect x="78.3" y="63.1" width="4.6" height="4.6" fill="#fff" stroke="#000" stroke-width="1.2"/><rect x="80.2" y="56.5" width="4.6" height="4.6" fill="#fff" stroke="#000" stroke-width="1.2"/><rect x="82.2" y="87.1" width="4.6" height="4.6" fill="#fff" stroke="#000" stroke-width="1.2"/><rect x="84.1" y="67.0" width="4.6" height="4.6" fill="#fff" stroke="#000" stroke-width="1.2"/><rect x="86.1" y="122.8" width="4.6" height="4.6" fill="#fff" stroke="#000" stroke-width="1.2"/><rect x="88.0" y="123.2" width="4.6" height="4.6" fill="#fff" stroke="#000" stroke-width="1.2"/><rect x="90.0" y="106.3" width="4.6" height="4.6" fill="#fff" stroke="#000" stroke-width="1.2"/><rect x="91.9" y="51.7" width="4.6" height="4.6" fill="#fff" stroke="#000" stroke-width="1.2"/><rect x="93.9" y="80.8" width="4.6" height="4.6" fill="#fff" stroke="#000" stroke-width="1.2"/><rect x="95.8" y="93.9" width="4.6" height="4.6" fill="#fff" stroke="#000" stroke-width="1.2"/><rect x="97.8" y="62.6" width="4.6" height="4.6" fill="#fff" stroke="#000" stroke-width="1.2"/><rect x="99.7" y="77.8" width="4.6" height="4.6" fill="#fff" stroke="#000" stroke-width="1.2"/><rect x="101.7" y="95.5" width="4.6" height="4.6" fill="#fff" stroke="#000" stroke-width="1.2"/><rect x="103.6" y="38.6" width="4.6" height="4.6" fill="#fff" stroke="#000" stroke-width="1.2"/><rect x="105.6" y="49.5" width="4.6" height="4.6" fill="#fff" stroke="#000" stroke-width="1.2"/><rect x="107.5" y="101.9" width="4.6" height="4.6" fill="#fff" stroke="#000" stroke-width="1.2"/><rect x="109.5" y="63.9" width="4.6" height="4.6" fill="#fff" stroke="#000" stroke-width="1.2"/><rect x="111.4" y="69.5" width="4.6" height="4.6" fill="#fff" stroke="#000" stroke-width="1.2"/><rect x="113.4" y="29.3" width="4.6" height="4.6" fill="#fff" stroke="#000" stroke-width="1.2"/><rect x="115.3" y="46.0" width="4.6" height="4.6" fill="#fff" stroke="#000" stroke-width="1.2"/><rect x="117.3" y="96.9" width="4.6" height="4.6" fill="#fff" stroke="#000" stroke-width="1.2"/><rect x="119.2" y="17.2" width="4.6" height="4.6" fill="#fff" stroke="#000" stroke-width="1.2"/><rect x="121.2" y="116.4" width="4.6" height="4.6" fill="#fff" stroke="#000" stroke-width="1.2"/><rect x="123.1" y="81.9" width="4.6" height="4.6" fill="#fff" stroke="#000" stroke-width="1.2"/><rect x="125.1" y="42.8" width="4.6" height="4.6" fill="#fff" stroke="#000" stroke-width="1.2"/><rect x="127.0" y="112.5" width="4.6" height="4.6" fill="#fff" stroke="#000" stroke-width="1.2"/><rect x="129.0" y="73.7" width="4.6" height="4.6" fill="#fff" stroke="#000" stroke-width="1.2"/><rect x="130.9" y="125.5" width="4.6" height="4.6" fill="#fff" stroke="#000" stroke-width="1.2"/><rect x="132.9" y="53.1" width="4.6" height="4.6" fill="#fff" stroke="#000" stroke-width="1.2"/><rect x="134.8" y="42.0" width="4.6" height="4.6" fill="#fff" stroke="#000" stroke-width="1.2"/><rect x="136.8" y="64.0" width="4.6" height="4.6" fill="#fff" stroke="#000" stroke-width="1.2"/><rect x="138.7" y="29.2" width="4.6" height="4.6" fill="#fff" stroke="#000" stroke-width="1.2"/><rect x="140.7" y="93.9" width="4.6" height="4.6" fill="#fff" stroke="#000" stroke-width="1.2"/><rect x="142.6" y="50.0" width="4.6" height="4.6" fill="#fff" stroke="#000" stroke-width="1.2"/><rect x="144.6" y="61.6" width="4.6" height="4.6" fill="#fff" stroke="#000" stroke-width="1.2"/><rect x="146.5" y="63.3" width="4.6" height="4.6" fill="#fff" stroke="#000" stroke-width="1.2"/><rect x="148.4" y="77.5" width="4.6" height="4.6" fill="#fff" stroke="#000" stroke-width="1.2"/><rect x="150.4" y="33.3" width="4.6" height="4.6" fill="#fff" stroke="#000" stroke-width="1.2"/><rect x="152.3" y="21.2" width="4.6" height="4.6" fill="#fff" stroke="#000" stroke-width="1.2"/><rect x="154.3" y="75.4" width="4.6" height="4.6" fill="#fff" stroke="#000" stroke-width="1.2"/><rect x="156.2" y="53.5" width="4.6" height="4.6" fill="#fff" stroke="#000" stroke-width="1.2"/><rect x="158.2" y="123.0" width="4.6" height="4.6" fill="#fff" stroke="#000" stroke-width="1.2"/><rect x="160.1" y="49.2" width="4.6" height="4.6" fill="#fff" stroke="#000" stroke-width="1.2"/><rect x="162.1" y="55.5" width="4.6" height="4.6" fill="#fff" stroke="#000" stroke-width="1.2"/><rect x="164.0" y="15.7" width="4.6" height="4.6" fill="#fff" stroke="#000" stroke-width="1.2"/><rect x="166.0" y="35.4" width="4.6" height="4.6" fill="#fff" stroke="#000" stroke-width="1.2"/><rect x="167.9" y="97.3" width="4.6" height="4.6" fill="#fff" stroke="#000" stroke-width="1.2"/><rect x="169.9" y="85.6" width="4.6" height="4.6" fill="#fff" stroke="#000" stroke-width="1.2"/><rect x="171.8" y="53.0" width="4.6" height="4.6" fill="#fff" stroke="#000" stroke-width="1.2"/><rect x="173.8" y="127.4" width="4.6" height="4.6" fill="#fff" stroke="#000" stroke-width="1.2"/><rect x="175.7" y="76.9" width="4.6" height="4.6" fill="#fff" stroke="#000" stroke-width="1.2"/><rect x="177.7" y="110.7" width="4.6" height="4.6" fill="#fff" stroke="#000" stroke-width="1.2"/></svg>
<div style="left:480px;top:188px;width:41px;height:142px;background:#e6e6e6;border-left:1px solid #fff;border-top:1px solid #fff;border-bottom:1px solid #888"></div>
<svg style="left:480px;top:188px" width="41" height="142"><defs><linearGradient id="trk" x1="0" x2="1"><stop offset="0" stop-color="#bcbcbc"/><stop offset=".35" stop-color="#fff"/><stop offset="1" stop-color="#a8a8a8"/></linearGradient><linearGradient id="trkb" x1="0" x2="1"><stop offset="0" stop-color="#004d73"/><stop offset=".4" stop-color="#1a8cc0"/><stop offset="1" stop-color="#003a58"/></linearGradient><linearGradient id="thm" x1="0" y1="0" x2="0" y2="1"><stop offset="0" stop-color="#f0f0f0"/><stop offset=".5" stop-color="#c8c8c8"/><stop offset="1" stop-color="#808080"/></linearGradient></defs><text x="23.5" y="125.0" font-size="10.5" text-anchor="end" font-family="Liberation Sans" fill="#000">0</text><text x="23.5" y="102.2" font-size="10.5" text-anchor="end" font-family="Liberation Sans" fill="#000">20</text><text x="23.5" y="79.4" font-size="10.5" text-anchor="end" font-family="Liberation Sans" fill="#000">40</text><text x="23.5" y="56.6" font-size="10.5" text-anchor="end" font-family="Liberation Sans" fill="#000">60</text><text x="23.5" y="33.8" font-size="10.5" text-anchor="end" font-family="Liberation Sans" fill="#000">80</text><text x="23.5" y="11.0" font-size="10.5" text-anchor="end" font-family="Liberation Sans" fill="#000">100</text><line x1="24" y1="121.0" x2="28" y2="121.0" stroke="#000" stroke-width="1"/><line x1="25.5" y1="116.4" x2="28" y2="116.4" stroke="#000" stroke-width="1"/><line x1="25.5" y1="111.9" x2="28" y2="111.9" stroke="#000" stroke-width="1"/><line x1="25.5" y1="107.3" x2="28" y2="107.3" stroke="#000" stroke-width="1"/><line x1="25.5" y1="102.8" x2="28" y2="102.8" stroke="#000" stroke-width="1"/><line x1="24" y1="98.2" x2="28" y2="98.2" stroke="#000" stroke-width="1"/><line x1="25.5" y1="93.6" x2="28" y2="93.6" stroke="#000" stroke-width="1"/><line x1="25.5" y1="89.1" x2="28" y2="89.1" stroke="#000" stroke-width="1"/><line x1="25.5" y1="84.5" x2="28" y2="84.5" stroke="#000" stroke-width="1"/><line x1="25.5" y1="80.0" x2="28" y2="80.0" stroke="#000" stroke-width="1"/><line x1="24" y1="75.4" x2="28" y2="75.4" stroke="#000" stroke-width="1"/><line x1="25.5" y1="70.8" x2="28" y2="70.8" stroke="#000" stroke-width="1"/><line x1="25.5" y1="66.3" x2="28" y2="66.3" stroke="#000" stroke-width="1"/><line x1="25.5" y1="61.7" x2="28" y2="61.7" stroke="#000" stroke-width="1"/><line x1="25.5" y1="57.2" x2="28" y2="57.2" stroke="#000" stroke-width="1"/><line x1="24" y1="52.6" x2="28" y2="52.6" stroke="#000" stroke-width="1"/><line x1="25.5" y1="48.0" x2="28" y2="48.0" stroke="#000" stroke-width="1"/><line x1="25.5" y1="43.5" x2="28" y2="43.5" stroke="#000" stroke-width="1"/><line x1="25.5" y1="38.9" x2="28" y2="38.9" stroke="#000" stroke-width="1"/><line x1="25.5" y1="34.4" x2="28" y2="34.4" stroke="#000" stroke-width="1"/><line x1="24" y1="29.8" x2="28" y2="29.8" stroke="#000" stroke-width="1"/><line x1="25.5" y1="25.2" x2="28" y2="25.2" stroke="#000" stroke-width="1"/><line x1="25.5" y1="20.7" x2="28" y2="20.7" stroke="#000" stroke-width="1"/><line x1="25.5" y1="16.1" x2="28" y2="16.1" stroke="#000" stroke-width="1"/><line x1="25.5" y1="11.6" x2="28" y2="11.6" stroke="#000" stroke-width="1"/><line x1="24" y1="7.0" x2="28" y2="7.0" stroke="#000" stroke-width="1"/><path d="M28 9 Q28 2 31 2 Q34 2 34 9 L34 121 L28 121 Z" fill="url(#trk)" stroke="#9a9a9a" stroke-width=".6"/><path d="M28.3 64.0 L33.7 64.0 L33.7 121 Q31 125 28.3 121 Z" fill="url(#trkb)"/><path d="M28 60.0 L39 60.0 Q41 64.0 39 68.0 L28 68.0 Z" fill="url(#thm)" stroke="#8a8a8a" stroke-width=".6"/><rect x="8" y="125" width="31.5" height="16" fill="#fff" stroke="#000" stroke-width="1.2"/><text x="23.8" y="137.5" font-size="12" font-weight="bold" text-anchor="middle" font-family="Liberation Sans" fill="#000">50.00</text></svg>
<svg style="left:521.5px;top:188px" width="186" height="142"><rect x="0.5" y="0.5" width="185" height="141" fill="#0073a6" stroke="#000" stroke-width="1.2"/><text x="91.0" y="11" font-size="10" fill="#e8f0f8" text-anchor="middle" font-family="Liberation Sans" letter-spacing=".3">UINTEGER_32</text><g shape-rendering="crispEdges" stroke="#000" stroke-width="1"><line x1="22.5" y1="110.5" x2="181" y2="110.5" stroke-dasharray="6 4"/><line x1="22.5" y1="86.5" x2="181" y2="86.5" stroke-dasharray="6 4"/><line x1="22.5" y1="63.5" x2="181" y2="63.5" stroke-dasharray="6 4"/><line x1="22.5" y1="39.5" x2="181" y2="39.5" stroke-dasharray="6 4"/><line x1="62.5" y1="16" x2="62.5" y2="137.5" stroke-dasharray="6 4"/><line x1="114.5" y1="16" x2="114.5" y2="137.5" stroke-dasharray="6 4"/><line x1="166.5" y1="16" x2="166.5" y2="137.5" stroke-dasharray="6 4"/><line x1="22.5" y1="16" x2="22.5" y2="133.5" stroke-width="2"/><line x1="16.5" y1="133.5" x2="181" y2="133.5" stroke-width="2"/><line x1="16.5" y1="133.5" x2="22.5" y2="133.5"/><line x1="18.5" y1="128.5" x2="22.5" y2="128.5"/><line x1="18.5" y1="124.5" x2="22.5" y2="124.5"/><line x1="18.5" y1="119.5" x2="22.5" y2="119.5"/><line x1="18.5" y1="114.5" x2="22.5" y2="114.5"/><line x1="16.5" y1="110.5" x2="22.5" y2="110.5"/><line x1="18.5" y1="105.5" x2="22.5" y2="105.5"/><line x1="18.5" y1="100.5" x2="22.5" y2="100.5"/><line x1="18.5" y1="95.5" x2="22.5" y2="95.5"/><line x1="18.5" y1="91.5" x2="22.5" y2="91.5"/><line x1="16.5" y1="86.5" x2="22.5" y2="86.5"/><line x1="18.5" y1="81.5" x2="22.5" y2="81.5"/><line x1="18.5" y1="77.5" x2="22.5" y2="77.5"/><line x1="18.5" y1="72.5" x2="22.5" y2="72.5"/><line x1="18.5" y1="67.5" x2="22.5" y2="67.5"/><line x1="16.5" y1="63.5" x2="22.5" y2="63.5"/><line x1="18.5" y1="58.5" x2="22.5" y2="58.5"/><line x1="18.5" y1="53.5" x2="22.5" y2="53.5"/><line x1="18.5" y1="48.5" x2="22.5" y2="48.5"/><line x1="18.5" y1="44.5" x2="22.5" y2="44.5"/><line x1="16.5" y1="39.5" x2="22.5" y2="39.5"/><line x1="18.5" y1="34.5" x2="22.5" y2="34.5"/><line x1="18.5" y1="30.5" x2="22.5" y2="30.5"/><line x1="18.5" y1="25.5" x2="22.5" y2="25.5"/><line x1="18.5" y1="20.5" x2="22.5" y2="20.5"/><line x1="16.5" y1="16.5" x2="22.5" y2="16.5"/><line x1="36.5" y1="133.5" x2="36.5" y2="137.5"/><line x1="88.5" y1="133.5" x2="88.5" y2="137.5"/><line x1="140.5" y1="133.5" x2="140.5" y2="137.5"/></g><text x="21.5" y="136.5" font-size="8.5" fill="#000" text-anchor="end" font-family="Liberation Sans">0.0</text><text x="21.5" y="113.0" font-size="8.5" fill="#000" text-anchor="end" font-family="Liberation Sans">20.0</text><text x="21.5" y="89.5" font-size="8.5" fill="#000" text-anchor="end" font-family="Liberation Sans">40.0</text><text x="21.5" y="66.0" font-size="8.5" fill="#000" text-anchor="end" font-family="Liberation Sans">60.0</text><text x="21.5" y="42.5" font-size="8.5" fill="#000" text-anchor="end" font-family="Liberation Sans">80.0</text><text x="21.5" y="19.0" font-size="8.5" fill="#000" text-anchor="end" font-family="Liberation Sans">100.0</text></svg>
<div style="left:12.5px;top:335px;width:41px;height:142px;background:#e6e6e6;border-left:1px solid #fff;border-top:1px solid #fff;border-bottom:1px solid #888"></div>
<svg style="left:12.5px;top:335px" width="41" height="142"><defs><linearGradient id="trk" x1="0" x2="1"><stop offset="0" stop-color="#bcbcbc"/><stop offset=".35" stop-color="#fff"/><stop offset="1" stop-color="#a8a8a8"/></linearGradient><linearGradient id="trkb" x1="0" x2="1"><stop offset="0" stop-color="#004d73"/><stop offset=".4" stop-color="#1a8cc0"/><stop offset="1" stop-color="#003a58"/></linearGradient><linearGradient id="thm" x1="0" y1="0" x2="0" y2="1"><stop offset="0" stop-color="#f0f0f0"/><stop offset=".5" stop-color="#c8c8c8"/><stop offset="1" stop-color="#808080"/></linearGradient></defs><text x="23.5" y="125.0" font-size="10.5" text-anchor="end" font-family="Liberation Sans" fill="#000">0</text><text x="23.5" y="102.2" font-size="10.5" text-anchor="end" font-family="Liberation Sans" fill="#000">20</text><text x="23.5" y="79.4" font-size="10.5" text-anchor="end" font-family="Liberation Sans" fill="#000">40</text><text x="23.5" y="56.6" font-size="10.5" text-anchor="end" font-family="Liberation Sans" fill="#000">60</text><text x="23.5" y="33.8" font-size="10.5" text-anchor="end" font-family="Liberation Sans" fill="#000">80</text><text x="23.5" y="11.0" font-size="10.5" text-anchor="end" font-family="Liberation Sans" fill="#000">100</text><line x1="24" y1="121.0" x2="28" y2="121.0" stroke="#000" stroke-width="1"/><line x1="25.5" y1="116.4" x2="28" y2="116.4" stroke="#000" stroke-width="1"/><line x1="25.5" y1="111.9" x2="28" y2="111.9" stroke="#000" stroke-width="1"/><line x1="25.5" y1="107.3" x2="28" y2="107.3" stroke="#000" stroke-width="1"/><line x1="25.5" y1="102.8" x2="28" y2="102.8" stroke="#000" stroke-width="1"/><line x1="24" y1="98.2" x2="28" y2="98.2" stroke="#000" stroke-width="1"/><line x1="25.5" y1="93.6" x2="28" y2="93.6" stroke="#000" stroke-width="1"/><line x1="25.5" y1="89.1" x2="28" y2="89.1" stroke="#000" stroke-width="1"/><line x1="25.5" y1="84.5" x2="28" y2="84.5" stroke="#000" stroke-width="1"/><line x1="25.5" y1="80.0" x2="28" y2="80.0" stroke="#000" stroke-width="1"/><line x1="24" y1="75.4" x2="28" y2="75.4" stroke="#000" stroke-width="1"/><line x1="25.5" y1="70.8" x2="28" y2="70.8" stroke="#000" stroke-width="1"/><line x1="25.5" y1="66.3" x2="28" y2="66.3" stroke="#000" stroke-width="1"/><line x1="25.5" y1="61.7" x2="28" y2="61.7" stroke="#000" stroke-width="1"/><line x1="25.5" y1="57.2" x2="28" y2="57.2" stroke="#000" stroke-width="1"/><line x1="24" y1="52.6" x2="28" y2="52.6" stroke="#000" stroke-width="1"/><line x1="25.5" y1="48.0" x2="28" y2="48.0" stroke="#000" stroke-width="1"/><line x1="25.5" y1="43.5" x2="28" y2="43.5" stroke="#000" stroke-width="1"/><line x1="25.5" y1="38.9" x2="28" y2="38.9" stroke="#000" stroke-width="1"/><line x1="25.5" y1="34.4" x2="28" y2="34.4" stroke="#000" stroke-width="1"/><line x1="24" y1="29.8" x2="28" y2="29.8" stroke="#000" stroke-width="1"/><line x1="25.5" y1="25.2" x2="28" y2="25.2" stroke="#000" stroke-width="1"/><line x1="25.5" y1="20.7" x2="28" y2="20.7" stroke="#000" stroke-width="1"/><line x1="25.5" y1="16.1" x2="28" y2="16.1" stroke="#000" stroke-width="1"/><line x1="25.5" y1="11.6" x2="28" y2="11.6" stroke="#000" stroke-width="1"/><line x1="24" y1="7.0" x2="28" y2="7.0" stroke="#000" stroke-width="1"/><path d="M28 9 Q28 2 31 2 Q34 2 34 9 L34 121 L28 121 Z" fill="url(#trk)" stroke="#9a9a9a" stroke-width=".6"/><path d="M28.3 64.0 L33.7 64.0 L33.7 121 Q31 125 28.3 121 Z" fill="url(#trkb)"/><path d="M28 60.0 L39 60.0 Q41 64.0 39 68.0 L28 68.0 Z" fill="url(#thm)" stroke="#8a8a8a" stroke-width=".6"/><rect x="8" y="125" width="31.5" height="16" fill="#fff" stroke="#000" stroke-width="1.2"/><text x="23.8" y="137.5" font-size="12" font-weight="bold" text-anchor="middle" font-family="Liberation Sans" fill="#000">50.00</text></svg>
<svg style="left:53.5px;top:335px" width="186" height="142"><rect x="0.5" y="0.5" width="185" height="141" fill="#0073a6" stroke="#000" stroke-width="1.2"/><text x="91.0" y="11" font-size="10" fill="#e8f0f8" text-anchor="middle" font-family="Liberation Sans" letter-spacing=".3">INT_UPDATE_1_HZ</text><g shape-rendering="crispEdges" stroke="#000" stroke-width="1"><line x1="22.5" y1="110.5" x2="181" y2="110.5" stroke-dasharray="6 4"/><line x1="22.5" y1="86.5" x2="181" y2="86.5" stroke-dasharray="6 4"/><line x1="22.5" y1="63.5" x2="181" y2="63.5" stroke-dasharray="6 4"/><line x1="22.5" y1="39.5" x2="181" y2="39.5" stroke-dasharray="6 4"/><line x1="62.5" y1="16" x2="62.5" y2="137.5" stroke-dasharray="6 4"/><line x1="114.5" y1="16" x2="114.5" y2="137.5" stroke-dasharray="6 4"/><line x1="166.5" y1="16" x2="166.5" y2="137.5" stroke-dasharray="6 4"/><line x1="22.5" y1="16" x2="22.5" y2="133.5" stroke-width="2"/><line x1="16.5" y1="133.5" x2="181" y2="133.5" stroke-width="2"/><line x1="16.5" y1="133.5" x2="22.5" y2="133.5"/><line x1="18.5" y1="128.5" x2="22.5" y2="128.5"/><line x1="18.5" y1="124.5" x2="22.5" y2="124.5"/><line x1="18.5" y1="119.5" x2="22.5" y2="119.5"/><line x1="18.5" y1="114.5" x2="22.5" y2="114.5"/><line x1="16.5" y1="110.5" x2="22.5" y2="110.5"/><line x1="18.5" y1="105.5" x2="22.5" y2="105.5"/><line x1="18.5" y1="100.5" x2="22.5" y2="100.5"/><line x1="18.5" y1="95.5" x2="22.5" y2="95.5"/><line x1="18.5" y1="91.5" x2="22.5" y2="91.5"/><line x1="16.5" y1="86.5" x2="22.5" y2="86.5"/><line x1="18.5" y1="81.5" x2="22.5" y2="81.5"/><line x1="18.5" y1="77.5" x2="22.5" y2="77.5"/><line x1="18.5" y1="72.5" x2="22.5" y2="72.5"/><line x1="18.5" y1="67.5" x2="22.5" y2="67.5"/><line x1="16.5" y1="63.5" x2="22.5" y2="63.5"/><line x1="18.5" y1="58.5" x2="22.5" y2="58.5"/><line x1="18.5" y1="53.5" x2="22.5" y2="53.5"/><line x1="18.5" y1="48.5" x2="22.5" y2="48.5"/><line x1="18.5" y1="44.5" x2="22.5" y2="44.5"/><line x1="16.5" y1="39.5" x2="22.5" y2="39.5"/><line x1="18.5" y1="34.5" x2="22.5" y2="34.5"/><line x1="18.5" y1="30.5" x2="22.5" y2="30.5"/><line x1="18.5" y1="25.5" x2="22.5" y2="25.5"/><line x1="18.5" y1="20.5" x2="22.5" y2="20.5"/><line x1="16.5" y1="16.5" x2="22.5" y2="16.5"/><line x1="36.5" y1="133.5" x2="36.5" y2="137.5"/><line x1="88.5" y1="133.5" x2="88.5" y2="137.5"/><line x1="140.5" y1="133.5" x2="140.5" y2="137.5"/></g><text x="21.5" y="136.5" font-size="8.5" fill="#000" text-anchor="end" font-family="Liberation Sans">0.0</text><text x="21.5" y="113.0" font-size="8.5" fill="#000" text-anchor="end" font-family="Liberation Sans">20.0</text><text x="21.5" y="89.5" font-size="8.5" fill="#000" text-anchor="end" font-family="Liberation Sans">40.0</text><text x="21.5" y="66.0" font-size="8.5" fill="#000" text-anchor="end" font-family="Liberation Sans">60.0</text><text x="21.5" y="42.5" font-size="8.5" fill="#000" text-anchor="end" font-family="Liberation Sans">80.0</text><text x="21.5" y="19.0" font-size="8.5" fill="#000" text-anchor="end" font-family="Liberation Sans">100.0</text><polyline points="24.0,47.4 25.6,51.4 27.2,55.4 28.8,59.4 30.4,63.4 32.0,67.4 33.6,71.3 35.2,75.3 36.8,79.3 38.4,83.3 40.0,87.3 41.6,91.3 43.2,95.3 44.8,99.2 46.4,103.2 48.0,107.2 49.6,111.2 51.2,115.2 52.8,119.2 54.4,123.2 56.0,127.1 57.6,131.1 58.4,131.1 58.4,23.0 59.2,23.0 60.8,27.0 62.4,31.0 64.0,35.0 65.6,39.0 67.2,42.9 68.8,46.9 70.4,50.9 72.0,54.9 73.6,58.9 75.2,62.9 76.8,66.9 78.4,70.8 80.0,74.8 81.6,78.8 83.2,82.8 84.8,86.8 86.4,90.8 88.0,94.8 89.6,98.7 91.2,102.7 92.8,106.7 94.4,110.7 96.0,114.7 97.6,118.7 99.2,122.7 100.8,126.6 102.4,130.6 103.2,130.6 103.2,22.5 104.0,22.5 105.6,26.5 107.2,30.5 108.8,34.5 110.4,38.5 112.0,42.4 113.6,46.4 115.2,50.4 116.8,54.4 118.4,58.4 120.0,62.4 121.6,66.4 123.2,70.3 124.8,74.3 126.4,78.3 128.0,82.3 129.6,86.3 131.2,90.3 132.8,94.3 134.4,98.2 136.0,102.2 137.6,106.2 139.2,110.2 140.8,114.2 142.4,118.2 144.0,122.2 145.6,126.1 147.2,130.1 148.0,130.1 148.0,22.0 148.8,22.0 150.4,26.0 152.0,30.0 153.6,34.0 155.2,38.0 156.8,41.9 158.4,45.9 160.0,49.9 161.6,53.9 163.2,57.9 164.8,61.9 166.4,65.9 168.0,69.8 169.6,73.8 171.2,77.8 172.8,81.8 174.4,85.8 176.0,89.8 177.6,93.8 179.2,97.7" fill="none" stroke="#fff" stroke-width="1.1"/><rect x="21.7" y="45.1" width="4.6" height="4.6" fill="#fff" stroke="#000" stroke-width="1.2"/><rect x="23.3" y="49.1" width="4.6" height="4.6" fill="#fff" stroke="#000" stroke-width="1.2"/><rect x="24.9" y="53.1" width="4.6" height="4.6" fill="#fff" stroke="#000" stroke-width="1.2"/><rect x="26.5" y="57.1" width="4.6" height="4.6" fill="#fff" stroke="#000" stroke-width="1.2"/><rect x="28.1" y="61.1" width="4.6" height="4.6" fill="#fff" stroke="#000" stroke-width="1.2"/><rect x="29.7" y="65.1" width="4.6" height="4.6" fill="#fff" stroke="#000" stroke-width="1.2"/><rect x="31.3" y="69.0" width="4.6" height="4.6" fill="#fff" stroke="#000" stroke-width="1.2"/><rect x="32.9" y="73.0" width="4.6" height="4.6" fill="#fff" stroke="#000" stroke-width="1.2"/><rect x="34.5" y="77.0" width="4.6" height="4.6" fill="#fff" stroke="#000" stroke-width="1.2"/><rect x="36.1" y="81.0" width="4.6" height="4.6" fill="#fff" stroke="#000" stroke-width="1.2"/><rect x="37.7" y="85.0" width="4.6" height="4.6" fill="#fff" stroke="#000" stroke-width="1.2"/><rect x="39.3" y="89.0" width="4.6" height="4.6" fill="#fff" stroke="#000" stroke-width="1.2"/><rect x="40.9" y="93.0" width="4.6" height="4.6" fill="#fff" stroke="#000" stroke-width="1.2"/><rect x="42.5" y="96.9" width="4.6" height="4.6" fill="#fff" stroke="#000" stroke-width="1.2"/><rect x="44.1" y="100.9" width="4.6" height="4.6" fill="#fff" stroke="#000" stroke-width="1.2"/><rect x="45.7" y="104.9" width="4.6" height="4.6" fill="#fff" stroke="#000" stroke-width="1.2"/><rect x="47.3" y="108.9" width="4.6" height="4.6" fill="#fff" stroke="#000" stroke-width="1.2"/><rect x="48.9" y="112.9" width="4.6" height="4.6" fill="#fff" stroke="#000" stroke-width="1.2"/><rect x="50.5" y="116.9" width="4.6" height="4.6" fill="#fff" stroke="#000" stroke-width="1.2"/><rect x="52.1" y="120.9" width="4.6" height="4.6" fill="#fff" stroke="#000" stroke-width="1.2"/><rect x="53.7" y="124.8" width="4.6" height="4.6" fill="#fff" stroke="#000" stroke-width="1.2"/><rect x="55.3" y="128.8" width="4.6" height="4.6" fill="#fff" stroke="#000" stroke-width="1.2"/><rect x="56.9" y="20.7" width="4.6" height="4.6" fill="#fff" stroke="#000" stroke-width="1.2"/><rect x="58.5" y="24.7" width="4.6" height="4.6" fill="#fff" stroke="#000" stroke-width="1.2"/><rect x="60.1" y="28.7" width="4.6" height="4.6" fill="#fff" stroke="#000" stroke-width="1.2"/><rect x="61.7" y="32.7" width="4.6" height="4.6" fill="#fff" stroke="#000" stroke-width="1.2"/><rect x="63.3" y="36.7" width="4.6" height="4.6" fill="#fff" stroke="#000" stroke-width="1.2"/><rect x="64.9" y="40.6" width="4.6" height="4.6" fill="#fff" stroke="#000" stroke-width="1.2"/><rect x="66.5" y="44.6" width="4.6" height="4.6" fill="#fff" stroke="#000" stroke-width="1.2"/><rect x="68.1" y="48.6" width="4.6" height="4.6" fill="#fff" stroke="#000" stroke-width="1.2"/><rect x="69.7" y="52.6" width="4.6" height="4.6" fill="#fff" stroke="#000" stroke-width="1.2"/><rect x="71.3" y="56.6" width="4.6" height="4.6" fill="#fff" stroke="#000" stroke-width="1.2"/><rect x="72.9" y="60.6" width="4.6" height="4.6" fill="#fff" stroke="#000" stroke-width="1.2"/><rect x="74.5" y="64.6" width="4.6" height="4.6" fill="#fff" stroke="#000" stroke-width="1.2"/><rect x="76.1" y="68.5" width="4.6" height="4.6" fill="#fff" stroke="#000" stroke-width="1.2"/><rect x="77.7" y="72.5" width="4.6" height="4.6" fill="#fff" stroke="#000" stroke-width="1.2"/><rect x="79.3" y="76.5" width="4.6" height="4.6" fill="#fff" stroke="#000" stroke-width="1.2"/><rect x="80.9" y="80.5" width="4.6" height="4.6" fill="#fff" stroke="#000" stroke-width="1.2"/><rect x="82.5" y="84.5" width="4.6" height="4.6" fill="#fff" stroke="#000" stroke-width="1.2"/><rect x="84.1" y="88.5" width="4.6" height="4.6" fill="#fff" stroke="#000" stroke-width="1.2"/><rect x="85.7" y="92.5" width="4.6" height="4.6" fill="#fff" stroke="#000" stroke-width="1.2"/><rect x="87.3" y="96.4" width="4.6" height="4.6" fill="#fff" stroke="#000" stroke-width="1.2"/><rect x="88.9" y="100.4" width="4.6" height="4.6" fill="#fff" stroke="#000" stroke-width="1.2"/><rect x="90.5" y="104.4" width="4.6" height="4.6" fill="#fff" stroke="#000" stroke-width="1.2"/><rect x="92.1" y="108.4" width="4.6" height="4.6" fill="#fff" stroke="#000" stroke-width="1.2"/><rect x="93.7" y="112.4" width="4.6" height="4.6" fill="#fff" stroke="#000" stroke-width="1.2"/><rect x="95.3" y="116.4" width="4.6" height="4.6" fill="#fff" stroke="#000" stroke-width="1.2"/><rect x="96.9" y="120.4" width="4.6" height="4.6" fill="#fff" stroke="#000" stroke-width="1.2"/><rect x="98.5" y="124.3" width="4.6" height="4.6" fill="#fff" stroke="#000" stroke-width="1.2"/><rect x="100.1" y="128.3" width="4.6" height="4.6" fill="#fff" stroke="#000" stroke-width="1.2"/><rect x="101.7" y="20.2" width="4.6" height="4.6" fill="#fff" stroke="#000" stroke-width="1.2"/><rect x="103.3" y="24.2" width="4.6" height="4.6" fill="#fff" stroke="#000" stroke-width="1.2"/><rect x="104.9" y="28.2" width="4.6" height="4.6" fill="#fff" stroke="#000" stroke-width="1.2"/><rect x="106.5" y="32.2" width="4.6" height="4.6" fill="#fff" stroke="#000" stroke-width="1.2"/><rect x="108.1" y="36.2" width="4.6" height="4.6" fill="#fff" stroke="#000" stroke-width="1.2"/><rect x="109.7" y="40.1" width="4.6" height="4.6" fill="#fff" stroke="#000" stroke-width="1.2"/><rect x="111.3" y="44.1" width="4.6" height="4.6" fill="#fff" stroke="#000" stroke-width="1.2"/><rect x="112.9" y="48.1" width="4.6" height="4.6" fill="#fff" stroke="#000" stroke-width="1.2"/><rect x="114.5" y="52.1" width="4.6" height="4.6" fill="#fff" stroke="#000" stroke-width="1.2"/><rect x="116.1" y="56.1" width="4.6" height="4.6" fill="#fff" stroke="#000" stroke-width="1.2"/><rect x="117.7" y="60.1" width="4.6" height="4.6" fill="#fff" stroke="#000" stroke-width="1.2"/><rect x="119.3" y="64.1" width="4.6" height="4.6" fill="#fff" stroke="#000" stroke-width="1.2"/><rect x="120.9" y="68.0" width="4.6" height="4.6" fill="#fff" stroke="#000" stroke-width="1.2"/><rect x="122.5" y="72.0" width="4.6" height="4.6" fill="#fff" stroke="#000" stroke-width="1.2"/><rect x="124.1" y="76.0" width="4.6" height="4.6" fill="#fff" stroke="#000" stroke-width="1.2"/><rect x="125.7" y="80.0" width="4.6" height="4.6" fill="#fff" stroke="#000" stroke-width="1.2"/><rect x="127.3" y="84.0" width="4.6" height="4.6" fill="#fff" stroke="#000" stroke-width="1.2"/><rect x="128.9" y="88.0" width="4.6" height="4.6" fill="#fff" stroke="#000" stroke-width="1.2"/><rect x="130.5" y="92.0" width="4.6" height="4.6" fill="#fff" stroke="#000" stroke-width="1.2"/><rect x="132.1" y="95.9" width="4.6" height="4.6" fill="#fff" stroke="#000" stroke-width="1.2"/><rect x="133.7" y="99.9" width="4.6" height="4.6" fill="#fff" stroke="#000" stroke-width="1.2"/><rect x="135.3" y="103.9" width="4.6" height="4.6" fill="#fff" stroke="#000" stroke-width="1.2"/><rect x="136.9" y="107.9" width="4.6" height="4.6" fill="#fff" stroke="#000" stroke-width="1.2"/><rect x="138.5" y="111.9" width="4.6" height="4.6" fill="#fff" stroke="#000" stroke-width="1.2"/><rect x="140.1" y="115.9" width="4.6" height="4.6" fill="#fff" stroke="#000" stroke-width="1.2"/><rect x="141.7" y="119.9" width="4.6" height="4.6" fill="#fff" stroke="#000" stroke-width="1.2"/><rect x="143.3" y="123.8" width="4.6" height="4.6" fill="#fff" stroke="#000" stroke-width="1.2"/><rect x="144.9" y="127.8" width="4.6" height="4.6" fill="#fff" stroke="#000" stroke-width="1.2"/><rect x="146.5" y="19.7" width="4.6" height="4.6" fill="#fff" stroke="#000" stroke-width="1.2"/><rect x="148.1" y="23.7" width="4.6" height="4.6" fill="#fff" stroke="#000" stroke-width="1.2"/><rect x="149.7" y="27.7" width="4.6" height="4.6" fill="#fff" stroke="#000" stroke-width="1.2"/><rect x="151.3" y="31.7" width="4.6" height="4.6" fill="#fff" stroke="#000" stroke-width="1.2"/><rect x="152.9" y="35.7" width="4.6" height="4.6" fill="#fff" stroke="#000" stroke-width="1.2"/><rect x="154.5" y="39.6" width="4.6" height="4.6" fill="#fff" stroke="#000" stroke-width="1.2"/><rect x="156.1" y="43.6" width="4.6" height="4.6" fill="#fff" stroke="#000" stroke-width="1.2"/><rect x="157.7" y="47.6" width="4.6" height="4.6" fill="#fff" stroke="#000" stroke-width="1.2"/><rect x="159.3" y="51.6" width="4.6" height="4.6" fill="#fff" stroke="#000" stroke-width="1.2"/><rect x="160.9" y="55.6" width="4.6" height="4.6" fill="#fff" stroke="#000" stroke-width="1.2"/><rect x="162.5" y="59.6" width="4.6" height="4.6" fill="#fff" stroke="#000" stroke-width="1.2"/><rect x="164.1" y="63.6" width="4.6" height="4.6" fill="#fff" stroke="#000" stroke-width="1.2"/><rect x="165.7" y="67.5" width="4.6" height="4.6" fill="#fff" stroke="#000" stroke-width="1.2"/><rect x="167.3" y="71.5" width="4.6" height="4.6" fill="#fff" stroke="#000" stroke-width="1.2"/><rect x="168.9" y="75.5" width="4.6" height="4.6" fill="#fff" stroke="#000" stroke-width="1.2"/><rect x="170.5" y="79.5" width="4.6" height="4.6" fill="#fff" stroke="#000" stroke-width="1.2"/><rect x="172.1" y="83.5" width="4.6" height="4.6" fill="#fff" stroke="#000" stroke-width="1.2"/><rect x="173.7" y="87.5" width="4.6" height="4.6" fill="#fff" stroke="#000" stroke-width="1.2"/><rect x="175.3" y="91.5" width="4.6" height="4.6" fill="#fff" stroke="#000" stroke-width="1.2"/><rect x="176.9" y="95.4" width="4.6" height="4.6" fill="#fff" stroke="#000" stroke-width="1.2"/></svg>
<div style="left:246px;top:335px;width:41px;height:142px;background:#e6e6e6;border-left:1px solid #fff;border-top:1px solid #fff;border-bottom:1px solid #888"></div>
<svg style="left:246px;top:335px" width="41" height="142"><defs><linearGradient id="trk" x1="0" x2="1"><stop offset="0" stop-color="#bcbcbc"/><stop offset=".35" stop-color="#fff"/><stop offset="1" stop-color="#a8a8a8"/></linearGradient><linearGradient id="trkb" x1="0" x2="1"><stop offset="0" stop-color="#004d73"/><stop offset=".4" stop-color="#1a8cc0"/><stop offset="1" stop-color="#003a58"/></linearGradient><linearGradient id="thm" x1="0" y1="0" x2="0" y2="1"><stop offset="0" stop-color="#f0f0f0"/><stop offset=".5" stop-color="#c8c8c8"/><stop offset="1" stop-color="#808080"/></linearGradient></defs><text x="23.5" y="125.0" font-size="10.5" text-anchor="end" font-family="Liberation Sans" fill="#000">0</text><text x="23.5" y="102.2" font-size="10.5" text-anchor="end" font-family="Liberation Sans" fill="#000">20</text><text x="23.5" y="79.4" font-size="10.5" text-anchor="end" font-family="Liberation Sans" fill="#000">40</text><text x="23.5" y="56.6" font-size="10.5" text-anchor="end" font-family="Liberation Sans" fill="#000">60</text><text x="23.5" y="33.8" font-size="10.5" text-anchor="end" font-family="Liberation Sans" fill="#000">80</text><text x="23.5" y="11.0" font-size="10.5" text-anchor="end" font-family="Liberation Sans" fill="#000">100</text><line x1="24" y1="121.0" x2="28" y2="121.0" stroke="#000" stroke-width="1"/><line x1="25.5" y1="116.4" x2="28" y2="116.4" stroke="#000" stroke-width="1"/><line x1="25.5" y1="111.9" x2="28" y2="111.9" stroke="#000" stroke-width="1"/><line x1="25.5" y1="107.3" x2="28" y2="107.3" stroke="#000" stroke-width="1"/><line x1="25.5" y1="102.8" x2="28" y2="102.8" stroke="#000" stroke-width="1"/><line x1="24" y1="98.2" x2="28" y2="98.2" stroke="#000" stroke-width="1"/><line x1="25.5" y1="93.6" x2="28" y2="93.6" stroke="#000" stroke-width="1"/><line x1="25.5" y1="89.1" x2="28" y2="89.1" stroke="#000" stroke-width="1"/><line x1="25.5" y1="84.5" x2="28" y2="84.5" stroke="#000" stroke-width="1"/><line x1="25.5" y1="80.0" x2="28" y2="80.0" stroke="#000" stroke-width="1"/><line x1="24" y1="75.4" x2="28" y2="75.4" stroke="#000" stroke-width="1"/><line x1="25.5" y1="70.8" x2="28" y2="70.8" stroke="#000" stroke-width="1"/><line x1="25.5" y1="66.3" x2="28" y2="66.3" stroke="#000" stroke-width="1"/><line x1="25.5" y1="61.7" x2="28" y2="61.7" stroke="#000" stroke-width="1"/><line x1="25.5" y1="57.2" x2="28" y2="57.2" stroke="#000" stroke-width="1"/><line x1="24" y1="52.6" x2="28" y2="52.6" stroke="#000" stroke-width="1"/><line x1="25.5" y1="48.0" x2="28" y2="48.0" stroke="#000" stroke-width="1"/><line x1="25.5" y1="43.5" x2="28" y2="43.5" stroke="#000" stroke-width="1"/><line x1="25.5" y1="38.9" x2="28" y2="38.9" stroke="#000" stroke-width="1"/><line x1="25.5" y1="34.4" x2="28" y2="34.4" stroke="#000" stroke-width="1"/><line x1="24" y1="29.8" x2="28" y2="29.8" stroke="#000" stroke-width="1"/><line x1="25.5" y1="25.2" x2="28" y2="25.2" stroke="#000" stroke-width="1"/><line x1="25.5" y1="20.7" x2="28" y2="20.7" stroke="#000" stroke-width="1"/><line x1="25.5" y1="16.1" x2="28" y2="16.1" stroke="#000" stroke-width="1"/><line x1="25.5" y1="11.6" x2="28" y2="11.6" stroke="#000" stroke-width="1"/><line x1="24" y1="7.0" x2="28" y2="7.0" stroke="#000" stroke-width="1"/><path d="M28 9 Q28 2 31 2 Q34 2 34 9 L34 121 L28 121 Z" fill="url(#trk)" stroke="#9a9a9a" stroke-width=".6"/><path d="M28.3 64.0 L33.7 64.0 L33.7 121 Q31 125 28.3 121 Z" fill="url(#trkb)"/><path d="M28 60.0 L39 60.0 Q41 64.0 39 68.0 L28 68.0 Z" fill="url(#thm)" stroke="#8a8a8a" stroke-width=".6"/><rect x="8" y="125" width="31.5" height="16" fill="#fff" stroke="#000" stroke-width="1.2"/><text x="23.8" y="137.5" font-size="12" font-weight="bold" text-anchor="middle" font-family="Liberation Sans" fill="#000">50.00</text></svg>
<svg style="left:287.7px;top:335px" width="186" height="142"><rect x="0.5" y="0.5" width="185" height="141" fill="#0073a6" stroke="#000" stroke-width="1.2"/><text x="91.0" y="11" font-size="10" fill="#e8f0f8" text-anchor="middle" font-family="Liberation Sans" letter-spacing=".3">INT_UPDATE_HALF_HZ</text><g shape-rendering="crispEdges" stroke="#000" stroke-width="1"><line x1="22.5" y1="110.5" x2="181" y2="110.5" stroke-dasharray="6 4"/><line x1="22.5" y1="86.5" x2="181" y2="86.5" stroke-dasharray="6 4"/><line x1="22.5" y1="63.5" x2="181" y2="63.5" stroke-dasharray="6 4"/><line x1="22.5" y1="39.5" x2="181" y2="39.5" stroke-dasharray="6 4"/><line x1="62.5" y1="16" x2="62.5" y2="137.5" stroke-dasharray="6 4"/><line x1="114.5" y1="16" x2="114.5" y2="137.5" stroke-dasharray="6 4"/><line x1="166.5" y1="16" x2="166.5" y2="137.5" stroke-dasharray="6 4"/><line x1="22.5" y1="16" x2="22.5" y2="133.5" stroke-width="2"/><line x1="16.5" y1="133.5" x2="181" y2="133.5" stroke-width="2"/><line x1="16.5" y1="133.5" x2="22.5" y2="133.5"/><line x1="18.5" y1="128.5" x2="22.5" y2="128.5"/><line x1="18.5" y1="124.5" x2="22.5" y2="124.5"/><line x1="18.5" y1="119.5" x2="22.5" y2="119.5"/><line x1="18.5" y1="114.5" x2="22.5" y2="114.5"/><line x1="16.5" y1="110.5" x2="22.5" y2="110.5"/><line x1="18.5" y1="105.5" x2="22.5" y2="105.5"/><line x1="18.5" y1="100.5" x2="22.5" y2="100.5"/><line x1="18.5" y1="95.5" x2="22.5" y2="95.5"/><line x1="18.5" y1="91.5" x2="22.5" y2="91.5"/><line x1="16.5" y1="86.5" x2="22.5" y2="86.5"/><line x1="18.5" y1="81.5" x2="22.5" y2="81.5"/><line x1="18.5" y1="77.5" x2="22.5" y2="77.5"/><line x1="18.5" y1="72.5" x2="22.5" y2="72.5"/><line x1="18.5" y1="67.5" x2="22.5" y2="67.5"/><line x1="16.5" y1="63.5" x2="22.5" y2="63.5"/><line x1="18.5" y1="58.5" x2="22.5" y2="58.5"/><line x1="18.5" y1="53.5" x2="22.5" y2="53.5"/><line x1="18.5" y1="48.5" x2="22.5" y2="48.5"/><line x1="18.5" y1="44.5" x2="22.5" y2="44.5"/><line x1="16.5" y1="39.5" x2="22.5" y2="39.5"/><line x1="18.5" y1="34.5" x2="22.5" y2="34.5"/><line x1="18.5" y1="30.5" x2="22.5" y2="30.5"/><line x1="18.5" y1="25.5" x2="22.5" y2="25.5"/><line x1="18.5" y1="20.5" x2="22.5" y2="20.5"/><line x1="16.5" y1="16.5" x2="22.5" y2="16.5"/><line x1="36.5" y1="133.5" x2="36.5" y2="137.5"/><line x1="88.5" y1="133.5" x2="88.5" y2="137.5"/><line x1="140.5" y1="133.5" x2="140.5" y2="137.5"/></g><text x="21.5" y="136.5" font-size="8.5" fill="#000" text-anchor="end" font-family="Liberation Sans">0.0</text><text x="21.5" y="113.0" font-size="8.5" fill="#000" text-anchor="end" font-family="Liberation Sans">20.0</text><text x="21.5" y="89.5" font-size="8.5" fill="#000" text-anchor="end" font-family="Liberation Sans">40.0</text><text x="21.5" y="66.0" font-size="8.5" fill="#000" text-anchor="end" font-family="Liberation Sans">60.0</text><text x="21.5" y="42.5" font-size="8.5" fill="#000" text-anchor="end" font-family="Liberation Sans">80.0</text><text x="21.5" y="19.0" font-size="8.5" fill="#000" text-anchor="end" font-family="Liberation Sans">100.0</text><polyline points="24.0,50.4 25.8,58.9 27.6,67.5 29.3,76.1 31.1,84.7 32.9,93.2 34.7,101.8 36.5,110.4 38.2,119.0 40.0,127.5 40.9,127.5 40.9,24.3 41.8,24.3 43.6,32.9 45.4,41.5 47.1,50.1 48.9,58.6 50.7,67.2 52.5,75.8 54.3,84.4 56.0,92.9 57.8,101.5 59.6,110.1 61.4,118.7 63.2,127.2 64.1,127.2 64.1,24.1 64.9,24.1 66.7,32.6 68.5,41.2 70.3,49.8 72.1,58.4 73.8,66.9 75.6,75.5 77.4,84.1 79.2,92.7 81.0,101.2 82.7,109.8 84.5,118.4 86.3,127.0 87.2,127.0 87.2,23.8 88.1,23.8 89.9,32.3 91.6,40.9 93.4,49.5 95.2,58.1 97.0,66.6 98.8,75.2 100.5,83.8 102.3,92.4 104.1,100.9 105.9,109.5 107.7,118.1 109.4,126.7 110.3,126.7 110.3,23.5 111.2,23.5 113.0,32.1 114.8,40.6 116.6,49.2 118.3,57.8 120.1,66.4 121.9,74.9 123.7,83.5 125.5,92.1 127.2,100.7 129.0,109.2 130.8,117.8 132.6,126.4 133.5,126.4 133.5,23.2 134.4,23.2 136.1,31.8 137.9,40.3 139.7,48.9 141.5,57.5 143.3,66.1 145.0,74.6 146.8,83.2 148.6,91.8 150.4,100.4 152.2,108.9 153.9,117.5 155.7,126.1 156.6,126.1 156.6,22.9 157.5,22.9 159.3,31.5 161.1,40.0 162.8,48.6 164.6,57.2 166.4,65.8 168.2,74.3 170.0,82.9 171.7,91.5 173.5,100.1 175.3,108.6 177.1,117.2 178.9,125.8" fill="none" stroke="#fff" stroke-width="1.1"/><rect x="21.7" y="48.1" width="4.6" height="4.6" fill="#fff" stroke="#000" stroke-width="1.2"/><rect x="23.5" y="56.6" width="4.6" height="4.6" fill="#fff" stroke="#000" stroke-width="1.2"/><rect x="25.3" y="65.2" width="4.6" height="4.6" fill="#fff" stroke="#000" stroke-width="1.2"/><rect x="27.0" y="73.8" width="4.6" height="4.6" fill="#fff" stroke="#000" stroke-width="1.2"/><rect x="28.8" y="82.4" width="4.6" height="4.6" fill="#fff" stroke="#000" stroke-width="1.2"/><rect x="30.6" y="90.9" width="4.6" height="4.6" fill="#fff" stroke="#000" stroke-width="1.2"/><rect x="32.4" y="99.5" width="4.6" height="4.6" fill="#fff" stroke="#000" stroke-width="1.2"/><rect x="34.2" y="108.1" width="4.6" height="4.6" fill="#fff" stroke="#000" stroke-width="1.2"/><rect x="35.9" y="116.7" width="4.6" height="4.6" fill="#fff" stroke="#000" stroke-width="1.2"/><rect x="37.7" y="125.2" width="4.6" height="4.6" fill="#fff" stroke="#000" stroke-width="1.2"/><rect x="39.5" y="22.0" width="4.6" height="4.6" fill="#fff" stroke="#000" stroke-width="1.2"/><rect x="41.3" y="30.6" width="4.6" height="4.6" fill="#fff" stroke="#000" stroke-width="1.2"/><rect x="43.1" y="39.2" width="4.6" height="4.6" fill="#fff" stroke="#000" stroke-width="1.2"/><rect x="44.8" y="47.8" width="4.6" height="4.6" fill="#fff" stroke="#000" stroke-width="1.2"/><rect x="46.6" y="56.3" width="4.6" height="4.6" fill="#fff" stroke="#000" stroke-width="1.2"/><rect x="48.4" y="64.9" width="4.6" height="4.6" fill="#fff" stroke="#000" stroke-width="1.2"/><rect x="50.2" y="73.5" width="4.6" height="4.6" fill="#fff" stroke="#000" stroke-width="1.2"/><rect x="52.0" y="82.1" width="4.6" height="4.6" fill="#fff" stroke="#000" stroke-width="1.2"/><rect x="53.7" y="90.6" width="4.6" height="4.6" fill="#fff" stroke="#000" stroke-width="1.2"/><rect x="55.5" y="99.2" width="4.6" height="4.6" fill="#fff" stroke="#000" stroke-width="1.2"/><rect x="57.3" y="107.8" width="4.6" height="4.6" fill="#fff" stroke="#000" stroke-width="1.2"/><rect x="59.1" y="116.4" width="4.6" height="4.6" fill="#fff" stroke="#000" stroke-width="1.2"/><rect x="60.9" y="124.9" width="4.6" height="4.6" fill="#fff" stroke="#000" stroke-width="1.2"/><rect x="62.6" y="21.8" width="4.6" height="4.6" fill="#fff" stroke="#000" stroke-width="1.2"/><rect x="64.4" y="30.3" width="4.6" height="4.6" fill="#fff" stroke="#000" stroke-width="1.2"/><rect x="66.2" y="38.9" width="4.6" height="4.6" fill="#fff" stroke="#000" stroke-width="1.2"/><rect x="68.0" y="47.5" width="4.6" height="4.6" fill="#fff" stroke="#000" stroke-width="1.2"/><rect x="69.8" y="56.1" width="4.6" height="4.6" fill="#fff" stroke="#000" stroke-width="1.2"/><rect x="71.5" y="64.6" width="4.6" height="4.6" fill="#fff" stroke="#000" stroke-width="1.2"/><rect x="73.3" y="73.2" width="4.6" height="4.6" fill="#fff" stroke="#000" stroke-width="1.2"/><rect x="75.1" y="81.8" width="4.6" height="4.6" fill="#fff" stroke="#000" stroke-width="1.2"/><rect x="76.9" y="90.4" width="4.6" height="4.6" fill="#fff" stroke="#000" stroke-width="1.2"/><rect x="78.7" y="98.9" width="4.6" height="4.6" fill="#fff" stroke="#000" stroke-width="1.2"/><rect x="80.4" y="107.5" width="4.6" height="4.6" fill="#fff" stroke="#000" stroke-width="1.2"/><rect x="82.2" y="116.1" width="4.6" height="4.6" fill="#fff" stroke="#000" stroke-width="1.2"/><rect x="84.0" y="124.7" width="4.6" height="4.6" fill="#fff" stroke="#000" stroke-width="1.2"/><rect x="85.8" y="21.5" width="4.6" height="4.6" fill="#fff" stroke="#000" stroke-width="1.2"/><rect x="87.6" y="30.0" width="4.6" height="4.6" fill="#fff" stroke="#000" stroke-width="1.2"/><rect x="89.3" y="38.6" width="4.6" height="4.6" fill="#fff" stroke="#000" stroke-width="1.2"/><rect x="91.1" y="47.2" width="4.6" height="4.6" fill="#fff" stroke="#000" stroke-width="1.2"/><rect x="92.9" y="55.8" width="4.6" height="4.6" fill="#fff" stroke="#000" stroke-width="1.2"/><rect x="94.7" y="64.3" width="4.6" height="4.6" fill="#fff" stroke="#000" stroke-width="1.2"/><rect x="96.5" y="72.9" width="4.6" height="4.6" fill="#fff" stroke="#000" stroke-width="1.2"/><rect x="98.2" y="81.5" width="4.6" height="4.6" fill="#fff" stroke="#000" stroke-width="1.2"/><rect x="100.0" y="90.1" width="4.6" height="4.6" fill="#fff" stroke="#000" stroke-width="1.2"/><rect x="101.8" y="98.6" width="4.6" height="4.6" fill="#fff" stroke="#000" stroke-width="1.2"/><rect x="103.6" y="107.2" width="4.6" height="4.6" fill="#fff" stroke="#000" stroke-width="1.2"/><rect x="105.4" y="115.8" width="4.6" height="4.6" fill="#fff" stroke="#000" stroke-width="1.2"/><rect x="107.1" y="124.4" width="4.6" height="4.6" fill="#fff" stroke="#000" stroke-width="1.2"/><rect x="108.9" y="21.2" width="4.6" height="4.6" fill="#fff" stroke="#000" stroke-width="1.2"/><rect x="110.7" y="29.8" width="4.6" height="4.6" fill="#fff" stroke="#000" stroke-width="1.2"/><rect x="112.5" y="38.3" width="4.6" height="4.6" fill="#fff" stroke="#000" stroke-width="1.2"/><rect x="114.3" y="46.9" width="4.6" height="4.6" fill="#fff" stroke="#000" stroke-width="1.2"/><rect x="116.0" y="55.5" width="4.6" height="4.6" fill="#fff" stroke="#000" stroke-width="1.2"/><rect x="117.8" y="64.1" width="4.6" height="4.6" fill="#fff" stroke="#000" stroke-width="1.2"/><rect x="119.6" y="72.6" width="4.6" height="4.6" fill="#fff" stroke="#000" stroke-width="1.2"/><rect x="121.4" y="81.2" width="4.6" height="4.6" fill="#fff" stroke="#000" stroke-width="1.2"/><rect x="123.2" y="89.8" width="4.6" height="4.6" fill="#fff" stroke="#000" stroke-width="1.2"/><rect x="124.9" y="98.4" width="4.6" height="4.6" fill="#fff" stroke="#000" stroke-width="1.2"/><rect x="126.7" y="106.9" width="4.6" height="4.6" fill="#fff" stroke="#000" stroke-width="1.2"/><rect x="128.5" y="115.5" width="4.6" height="4.6" fill="#fff" stroke="#000" stroke-width="1.2"/><rect x="130.3" y="124.1" width="4.6" height="4.6" fill="#fff" stroke="#000" stroke-width="1.2"/><rect x="132.1" y="20.9" width="4.6" height="4.6" fill="#fff" stroke="#000" stroke-width="1.2"/><rect x="133.8" y="29.5" width="4.6" height="4.6" fill="#fff" stroke="#000" stroke-width="1.2"/><rect x="135.6" y="38.0" width="4.6" height="4.6" fill="#fff" stroke="#000" stroke-width="1.2"/><rect x="137.4" y="46.6" width="4.6" height="4.6" fill="#fff" stroke="#000" stroke-width="1.2"/><rect x="139.2" y="55.2" width="4.6" height="4.6" fill="#fff" stroke="#000" stroke-width="1.2"/><rect x="141.0" y="63.8" width="4.6" height="4.6" fill="#fff" stroke="#000" stroke-width="1.2"/><rect x="142.7" y="72.3" width="4.6" height="4.6" fill="#fff" stroke="#000" stroke-width="1.2"/><rect x="144.5" y="80.9" width="4.6" height="4.6" fill="#fff" stroke="#000" stroke-width="1.2"/><rect x="146.3" y="89.5" width="4.6" height="4.6" fill="#fff" stroke="#000" stroke-width="1.2"/><rect x="148.1" y="98.1" width="4.6" height="4.6" fill="#fff" stroke="#000" stroke-width="1.2"/><rect x="149.9" y="106.6" width="4.6" height="4.6" fill="#fff" stroke="#000" stroke-width="1.2"/><rect x="151.6" y="115.2" width="4.6" height="4.6" fill="#fff" stroke="#000" stroke-width="1.2"/><rect x="153.4" y="123.8" width="4.6" height="4.6" fill="#fff" stroke="#000" stroke-width="1.2"/><rect x="155.2" y="20.6" width="4.6" height="4.6" fill="#fff" stroke="#000" stroke-width="1.2"/><rect x="157.0" y="29.2" width="4.6" height="4.6" fill="#fff" stroke="#000" stroke-width="1.2"/><rect x="158.8" y="37.7" width="4.6" height="4.6" fill="#fff" stroke="#000" stroke-width="1.2"/><rect x="160.5" y="46.3" width="4.6" height="4.6" fill="#fff" stroke="#000" stroke-width="1.2"/><rect x="162.3" y="54.9" width="4.6" height="4.6" fill="#fff" stroke="#000" stroke-width="1.2"/><rect x="164.1" y="63.5" width="4.6" height="4.6" fill="#fff" stroke="#000" stroke-width="1.2"/><rect x="165.9" y="72.0" width="4.6" height="4.6" fill="#fff" stroke="#000" stroke-width="1.2"/><rect x="167.7" y="80.6" width="4.6" height="4.6" fill="#fff" stroke="#000" stroke-width="1.2"/><rect x="169.4" y="89.2" width="4.6" height="4.6" fill="#fff" stroke="#000" stroke-width="1.2"/><rect x="171.2" y="97.8" width="4.6" height="4.6" fill="#fff" stroke="#000" stroke-width="1.2"/><rect x="173.0" y="106.3" width="4.6" height="4.6" fill="#fff" stroke="#000" stroke-width="1.2"/><rect x="174.8" y="114.9" width="4.6" height="4.6" fill="#fff" stroke="#000" stroke-width="1.2"/><rect x="176.6" y="123.5" width="4.6" height="4.6" fill="#fff" stroke="#000" stroke-width="1.2"/></svg>
<div style="left:480px;top:335px;width:41px;height:142px;background:#e6e6e6;border-left:1px solid #fff;border-top:1px solid #fff;border-bottom:1px solid #888"></div>
<svg style="left:480px;top:335px" width="41" height="142"><defs><linearGradient id="trk" x1="0" x2="1"><stop offset="0" stop-color="#bcbcbc"/><stop offset=".35" stop-color="#fff"/><stop offset="1" stop-color="#a8a8a8"/></linearGradient><linearGradient id="trkb" x1="0" x2="1"><stop offset="0" stop-color="#004d73"/><stop offset=".4" stop-color="#1a8cc0"/><stop offset="1" stop-color="#003a58"/></linearGradient><linearGradient id="thm" x1="0" y1="0" x2="0" y2="1"><stop offset="0" stop-color="#f0f0f0"/><stop offset=".5" stop-color="#c8c8c8"/><stop offset="1" stop-color="#808080"/></linearGradient></defs><text x="23.5" y="125.0" font-size="10.5" text-anchor="end" font-family="Liberation Sans" fill="#000">0</text><text x="23.5" y="102.2" font-size="10.5" text-anchor="end" font-family="Liberation Sans" fill="#000">20</text><text x="23.5" y="79.4" font-size="10.5" text-anchor="end" font-family="Liberation Sans" fill="#000">40</text><text x="23.5" y="56.6" font-size="10.5" text-anchor="end" font-family="Liberation Sans" fill="#000">60</text><text x="23.5" y="33.8" font-size="10.5" text-anchor="end" font-family="Liberation Sans" fill="#000">80</text><text x="23.5" y="11.0" font-size="10.5" text-anchor="end" font-family="Liberation Sans" fill="#000">100</text><line x1="24" y1="121.0" x2="28" y2="121.0" stroke="#000" stroke-width="1"/><line x1="25.5" y1="116.4" x2="28" y2="116.4" stroke="#000" stroke-width="1"/><line x1="25.5" y1="111.9" x2="28" y2="111.9" stroke="#000" stroke-width="1"/><line x1="25.5" y1="107.3" x2="28" y2="107.3" stroke="#000" stroke-width="1"/><line x1="25.5" y1="102.8" x2="28" y2="102.8" stroke="#000" stroke-width="1"/><line x1="24" y1="98.2" x2="28" y2="98.2" stroke="#000" stroke-width="1"/><line x1="25.5" y1="93.6" x2="28" y2="93.6" stroke="#000" stroke-width="1"/><line x1="25.5" y1="89.1" x2="28" y2="89.1" stroke="#000" stroke-width="1"/><line x1="25.5" y1="84.5" x2="28" y2="84.5" stroke="#000" stroke-width="1"/><line x1="25.5" y1="80.0" x2="28" y2="80.0" stroke="#000" stroke-width="1"/><line x1="24" y1="75.4" x2="28" y2="75.4" stroke="#000" stroke-width="1"/><line x1="25.5" y1="70.8" x2="28" y2="70.8" stroke="#000" stroke-width="1"/><line x1="25.5" y1="66.3" x2="28" y2="66.3" stroke="#000" stroke-width="1"/><line x1="25.5" y1="61.7" x2="28" y2="61.7" stroke="#000" stroke-width="1"/><line x1="25.5" y1="57.2" x2="28" y2="57.2" stroke="#000" stroke-width="1"/><line x1="24" y1="52.6" x2="28" y2="52.6" stroke="#000" stroke-width="1"/><line x1="25.5" y1="48.0" x2="28" y2="48.0" stroke="#000" stroke-width="1"/><line x1="25.5" y1="43.5" x2="28" y2="43.5" stroke="#000" stroke-width="1"/><line x1="25.5" y1="38.9" x2="28" y2="38.9" stroke="#000" stroke-width="1"/><line x1="25.5" y1="34.4" x2="28" y2="34.4" stroke="#000" stroke-width="1"/><line x1="24" y1="29.8" x2="28" y2="29.8" stroke="#000" stroke-width="1"/><line x1="25.5" y1="25.2" x2="28" y2="25.2" stroke="#000" stroke-width="1"/><line x1="25.5" y1="20.7" x2="28" y2="20.7" stroke="#000" stroke-width="1"/><line x1="25.5" y1="16.1" x2="28" y2="16.1" stroke="#000" stroke-width="1"/><line x1="25.5" y1="11.6" x2="28" y2="11.6" stroke="#000" stroke-width="1"/><line x1="24" y1="7.0" x2="28" y2="7.0" stroke="#000" stroke-width="1"/><path d="M28 9 Q28 2 31 2 Q34 2 34 9 L34 121 L28 121 Z" fill="url(#trk)" stroke="#9a9a9a" stroke-width=".6"/><path d="M28.3 64.0 L33.7 64.0 L33.7 121 Q31 125 28.3 121 Z" fill="url(#trkb)"/><path d="M28 60.0 L39 60.0 Q41 64.0 39 68.0 L28 68.0 Z" fill="url(#thm)" stroke="#8a8a8a" stroke-width=".6"/><rect x="8" y="125" width="31.5" height="16" fill="#fff" stroke="#000" stroke-width="1.2"/><text x="23.8" y="137.5" font-size="12" font-weight="bold" text-anchor="middle" font-family="Liberation Sans" fill="#000">50.00</text></svg>
<svg style="left:521.5px;top:335px" width="186" height="142"><rect x="0.5" y="0.5" width="185" height="141" fill="#0073a6" stroke="#000" stroke-width="1.2"/><text x="91.0" y="11" font-size="10" fill="#e8f0f8" text-anchor="middle" font-family="Liberation Sans" letter-spacing=".3">INT_UPDATE_10_HZ</text><g shape-rendering="crispEdges" stroke="#000" stroke-width="1"><line x1="22.5" y1="110.5" x2="181" y2="110.5" stroke-dasharray="6 4"/><line x1="22.5" y1="86.5" x2="181" y2="86.5" stroke-dasharray="6 4"/><line x1="22.5" y1="63.5" x2="181" y2="63.5" stroke-dasharray="6 4"/><line x1="22.5" y1="39.5" x2="181" y2="39.5" stroke-dasharray="6 4"/><line x1="62.5" y1="16" x2="62.5" y2="137.5" stroke-dasharray="6 4"/><line x1="114.5" y1="16" x2="114.5" y2="137.5" stroke-dasharray="6 4"/><line x1="166.5" y1="16" x2="166.5" y2="137.5" stroke-dasharray="6 4"/><line x1="22.5" y1="16" x2="22.5" y2="133.5" stroke-width="2"/><line x1="16.5" y1="133.5" x2="181" y2="133.5" stroke-width="2"/><line x1="16.5" y1="133.5" x2="22.5" y2="133.5"/><line x1="18.5" y1="128.5" x2="22.5" y2="128.5"/><line x1="18.5" y1="124.5" x2="22.5" y2="124.5"/><line x1="18.5" y1="119.5" x2="22.5" y2="119.5"/><line x1="18.5" y1="114.5" x2="22.5" y2="114.5"/><line x1="16.5" y1="110.5" x2="22.5" y2="110.5"/><line x1="18.5" y1="105.5" x2="22.5" y2="105.5"/><line x1="18.5" y1="100.5" x2="22.5" y2="100.5"/><line x1="18.5" y1="95.5" x2="22.5" y2="95.5"/><line x1="18.5" y1="91.5" x2="22.5" y2="91.5"/><line x1="16.5" y1="86.5" x2="22.5" y2="86.5"/><line x1="18.5" y1="81.5" x2="22.5" y2="81.5"/><line x1="18.5" y1="77.5" x2="22.5" y2="77.5"/><line x1="18.5" y1="72.5" x2="22.5" y2="72.5"/><line x1="18.5" y1="67.5" x2="22.5" y2="67.5"/><line x1="16.5" y1="63.5" x2="22.5" y2="63.5"/><line x1="18.5" y1="58.5" x2="22.5" y2="58.5"/><line x1="18.5" y1="53.5" x2="22.5" y2="53.5"/><line x1="18.5" y1="48.5" x2="22.5" y2="48.5"/><line x1="18.5" y1="44.5" x2="22.5" y2="44.5"/><line x1="16.5" y1="39.5" x2="22.5" y2="39.5"/><line x1="18.5" y1="34.5" x2="22.5" y2="34.5"/><line x1="18.5" y1="30.5" x2="22.5" y2="30.5"/><line x1="18.5" y1="25.5" x2="22.5" y2="25.5"/><line x1="18.5" y1="20.5" x2="22.5" y2="20.5"/><line x1="16.5" y1="16.5" x2="22.5" y2="16.5"/><line x1="36.5" y1="133.5" x2="36.5" y2="137.5"/><line x1="88.5" y1="133.5" x2="88.5" y2="137.5"/><line x1="140.5" y1="133.5" x2="140.5" y2="137.5"/></g><text x="21.5" y="136.5" font-size="8.5" fill="#000" text-anchor="end" font-family="Liberation Sans">0.0</text><text x="21.5" y="113.0" font-size="8.5" fill="#000" text-anchor="end" font-family="Liberation Sans">20.0</text><text x="21.5" y="89.5" font-size="8.5" fill="#000" text-anchor="end" font-family="Liberation Sans">40.0</text><text x="21.5" y="66.0" font-size="8.5" fill="#000" text-anchor="end" font-family="Liberation Sans">60.0</text><text x="21.5" y="42.5" font-size="8.5" fill="#000" text-anchor="end" font-family="Liberation Sans">80.0</text><text x="21.5" y="19.0" font-size="8.5" fill="#000" text-anchor="end" font-family="Liberation Sans">100.0</text></svg>
<div style="left:967px;top:2px;width:629px;height:518px;background:linear-gradient(to bottom,#c8c8c8 0px,#b4b4b4 25px,#8a8a8a 80px,#505050 200px,#2a2a2a 100%);border:1px solid rgba(0,0,0,.85);border-radius:7px 7px 6px 6px;box-shadow:inset 0 0 0 1px rgba(255,255,255,.45);"></div>
<div style="left:970px;top:4px;width:180px;height:24px;background:rgba(255,255,255,.75);border-radius:12px;filter:blur(7px)"></div>
<svg style="left:974px;top:8px" width="18" height="17"><rect x="0" y="0" width="18" height="17" fill="#fff"/>
<text x="1" y="7" font-size="6.5" font-weight="bold" font-family="Liberation Sans" fill="#000">CCTK</text>
<path d="M1 11 Q8 16 16 9" stroke="#2030d0" stroke-width="2.2" fill="none"/><path d="M13 7 L17 9 L14 12 Z" fill="#2030d0"/></svg>
<div class="t" style="left:995px;top:9.5px;font-size:11.2px;color:#101828">SIMPLE PCM DAC -- BITSYNC</div>
<div style="left:1487px;top:2px;width:101px;height:19px;border:1px solid rgba(60,60,80,.55);border-top:none;border-radius:0 0 5px 5px;overflow:hidden;background:#ddd"><div style="left:0;top:0;width:27px;height:18px;background:linear-gradient(#f4f4f4,#dcdcdc 50%,#c8c8c8 51%,#e0e0e0);border-right:1px solid rgba(60,60,80,.45)"></div><div style="left:27px;top:0;width:27px;height:18px;background:linear-gradient(#f4f4f4,#dcdcdc 50%,#c8c8c8 51%,#e0e0e0);border-right:1px solid rgba(60,60,80,.45)"></div><div style="left:54px;top:0;width:46px;height:18px;background:linear-gradient(#f4f4f4,#dcdcdc 50%,#c8c8c8 51%,#e0e0e0)"></div><svg style="left:0;top:0" width="101" height="19"><rect x="8.5" y="9.5" width="11" height="4" fill="#fff" stroke="#404868" stroke-width="1.2" rx="1"/><rect x="35.5" y="4.5" width="11" height="9" fill="none" stroke="#404868" stroke-width="1.2" rx="1"/><rect x="38.5" y="7.5" width="5" height="3" fill="none" stroke="#404868" stroke-width="1.2"/><path d="M74 5.5 L82.5 12.5 M82.5 5.5 L74 12.5" stroke="#404868" stroke-width="4" stroke-linecap="square"/><path d="M74 5.5 L82.5 12.5 M82.5 5.5 L74 12.5" stroke="#fff" stroke-width="2" stroke-linecap="square"/></svg></div>
<div style="left:973px;top:30px;width:617px;height:480px;background:#e6e6e6;border:1px solid #555"></div>
<div class="t" style="left:983px;top:38px;font-size:13.4px;color:#000"><span class="u" style="text-decoration-thickness:1px">P</span>roject</div>
<div class="t" style="left:1042px;top:38px;font-size:13.4px;color:#000"><span class="u" style="text-decoration-thickness:1px">V</span>iew</div>
<div class="t" style="left:1087px;top:38px;font-size:13.4px;color:#000"><span class="u" style="text-decoration-thickness:1px">S</span>ettings</div>
<div class="t" style="left:1153px;top:38px;font-size:13.4px;color:#000"><span class="u" style="text-decoration-thickness:1px">W</span>indow</div>
<div class="t" style="left:1217px;top:38px;font-size:13.4px;color:#000"><span class="u" style="text-decoration-thickness:1px">H</span>elp</div>
<div style="left:974px;top:58px;width:615px;height:1px;background:#b8b8b8"></div>
<svg style="left:974px;top:63px" width="130" height="28">
<g stroke="#9a9a9a" stroke-width="1">
<path d="M2 6 L6 2 M2 10 L6 6 M2 14 L6 10 M2 18 L6 14 M2 22 L6 18"/>
<path d="M114 6 L118 2 M114 10 L118 6 M114 14 L118 10 M114 18 L118 14 M114 22 L118 18"/></g>
<path d="M18 8 L26 8 L28 10 L38 10 L38 22 L18 22 Z" fill="#d8d860" stroke="#808030" stroke-width=".8"/>
<path d="M17 13 L37 13 L39 23 L19 23 Z" fill="#e8e878" stroke="#808030" stroke-width=".8"/>
<circle cx="62" cy="13" r="10.5" fill="#10e010" stroke="#1a3a1a" stroke-width="1"/>
<path d="M62 4 L68 11 L64.5 11 L64.5 21 L59.5 21 L59.5 11 L56 11 Z" fill="#000"/>
<circle cx="95" cy="13" r="10.5" fill="#f01010" stroke="#3a1a1a" stroke-width="1"/>
<path d="M95 22 L101 15 L97.5 15 L97.5 5 L92.5 5 L92.5 15 L89 15 Z" fill="#000"/>
</svg>
<div class="t" style="left:1106px;top:69px;font-size:13.4px;color:#000;letter-spacing:.55px">2014 272 21:39:52</div>
<div style="left:974px;top:92px;width:615px;height:3px;background:#dcdcdc"></div>
<div style="left:977px;top:95px;width:190px;height:30px;background:linear-gradient(#f2f2f2,#e4e4e4);border:1px solid #b0b0b0"></div>
<div class="t" style="left:981px;top:99px;font-size:13.4px;color:#000">Display</div>
<div style="left:1167px;top:93px;width:6px;height:40px;background:#e0e0e0;border-left:1px solid #fff;border-right:1px solid #aaa"></div>
<div style="left:1173px;top:93px;width:415px;height:420px;background:#8e8e8e"></div>
<div style="left:1174px;top:110px;width:414px;height:400px;background:#e6e6e6;border-top:1px solid #cfcfcf"></div>
<div style="left:1175px;top:111px;width:412px;height:19px;background:#8c8c8c"></div>
<div class="t" style="left:1261px;top:113px;font-size:13.4px;color:#e8e8e8;letter-spacing:.3px">c - Pcm Port</div>
<svg style="left:1538px;top:113px" width="48" height="16">
<rect x=".5" y=".5" width="14" height="14" fill="#e8e8e8" stroke="#666"/>
<rect x="16.5" y=".5" width="14" height="14" fill="#e8e8e8" stroke="#666"/>
<rect x="32.5" y=".5" width="14" height="14" fill="#e8e8e8" stroke="#666"/>
<path d="M3 5 L12 5 L7.5 11 Z" fill="#000"/><path d="M19 10 L28 10 L23.5 4 Z" fill="#000"/>
<path d="M36 4 L43 11 M43 4 L36 11" stroke="#000" stroke-width="2.2"/></svg>
<div style="left:1240px;top:145px;width:42px;height:29px;background:#55f855;border:1px solid #3a8a3a;box-shadow:inset 1px 1px 0 rgba(255,255,255,.7);font-size:13.4px;line-height:27px;text-align:center;padding-right:0px;color:#000;white-space:nowrap;letter-spacing:0"></div>
<div style="left:1287px;top:145px;width:92px;height:29px;background:#55f855;border:1px solid #3a8a3a;box-shadow:inset 1px 1px 0 rgba(255,255,255,.7);font-size:13.4px;line-height:27px;text-align:center;padding-right:0px;color:#000;white-space:nowrap;letter-spacing:0">MINOR</div>
<div style="left:1382px;top:145px;width:92px;height:29px;background:#55f855;border:1px solid #3a8a3a;box-shadow:inset 1px 1px 0 rgba(255,255,255,.7);font-size:13.4px;line-height:27px;text-align:center;padding-right:0px;color:#000;white-space:nowrap;letter-spacing:0">CLOCK</div>
<div style="left:1478px;top:145px;width:92px;height:30px;background:#e6e6e6;border:1px solid #8a8a8a;box-shadow:inset 1px 1px 0 rgba(255,255,255,.7);font-size:13.4px;line-height:28px;text-align:center;padding-right:0px;color:#000;white-space:nowrap;letter-spacing:.3px">Hide</div>
<div style="left:1200px;top:194px;width:374px;height:164px;border:1px solid #b0b0b0;border-radius:2px"></div>
<div style="left:1180px;top:186px;width:123px;height:16px;background:#e6e6e6"></div>
<div class="t" style="left:1300px;top:187px;font-size:13.4px;color:#000;transform:translateX(-100%)">Recording Control</div>
<div class="t" style="left:1298px;top:212px;font-size:13.4px;color:#000;transform:translateX(-100%)">Recording:</div>
<div style="left:1302px;top:204px;width:162px;height:29px;background:#55f855;border:1px solid #3a8a3a;box-shadow:inset 1px 1px 0 rgba(255,255,255,.7);font-size:13.4px;line-height:27px;text-align:center;padding-right:0px;color:#000;white-space:nowrap;letter-spacing:.3px">Activated</div>
<div style="left:1466px;top:204px;width:104px;height:29px;background:#e6e6e6;border:1px solid #8a8a8a;box-shadow:inset 1px 1px 0 rgba(255,255,255,.7);font-size:13.4px;line-height:27px;text-align:center;padding-right:0px;color:#000;white-space:nowrap;letter-spacing:.3px">Inhibit</div>
<div class="t" style="left:1298px;top:243px;font-size:13.4px;color:#000;transform:translateX(-100%)">Acquisition:</div>
<div style="left:1302px;top:235px;width:162px;height:29px;background:#55f855;border:1px solid #3a8a3a;box-shadow:inset 1px 1px 0 rgba(255,255,255,.7);font-size:13.4px;line-height:27px;text-align:center;padding-right:0px;color:#000;white-space:nowrap;letter-spacing:.3px">Activated</div>
<div style="left:1466px;top:235px;width:104px;height:29px;background:#e6e6e6;border:1px solid #8a8a8a;box-shadow:inset 1px 1px 0 rgba(255,255,255,.7);font-size:13.4px;line-height:27px;text-align:center;padding-right:0px;color:#000;white-space:nowrap;letter-spacing:.3px">Inhibit</div>
<div class="t" style="left:1298px;top:274px;font-size:13.4px;color:#000;transform:translateX(-100%)">Processing:</div>
<div style="left:1302px;top:266px;width:162px;height:29px;background:#55f855;border:1px solid #3a8a3a;box-shadow:inset 1px 1px 0 rgba(255,255,255,.7);font-size:13.4px;line-height:27px;text-align:center;padding-right:0px;color:#000;white-space:nowrap;letter-spacing:.3px">Activated</div>
<div style="left:1466px;top:266px;width:104px;height:29px;background:#e6e6e6;border:1px solid #8a8a8a;box-shadow:inset 1px 1px 0 rgba(255,255,255,.7);font-size:13.4px;line-height:27px;text-align:center;padding-right:0px;color:#000;white-space:nowrap;letter-spacing:.3px">Inhibit</div>
<div class="t" style="left:1298px;top:303px;font-size:13.4px;color:#000;transform:translateX(-100%)">Polarity:</div>
<div style="left:1302px;top:297px;width:162px;height:26px;background:#55f855;border:1px solid #3a8a3a;box-shadow:inset 1px 1px 0 rgba(255,255,255,.7);font-size:13.4px;line-height:24px;text-align:center;padding-right:0px;color:#000;white-space:nowrap;letter-spacing:.3px">Normal</div>
<div style="left:1466px;top:297px;width:104px;height:26px;background:#e6e6e6;border:1px solid #8a8a8a;font-size:13.4px;line-height:24px;padding-left:5px;color:#000;white-space:nowrap">Auto Detect</div>
<div style="left:1549px;top:298px;width:1px;height:24px;background:#b0b0b0"></div>
<svg style="left:1553px;top:306px" width="10" height="10"><path d="M1 1 L9 1 L5 6 Z" fill="#000"/><rect x="2" y="8" width="6" height="1.2" fill="#aaa"/></svg>
<div class="t" style="left:1298px;top:333px;font-size:13.4px;color:#000;transform:translateX(-100%)">Archive:</div>
<div style="left:1302px;top:326px;width:162px;height:28px;background:#ffff55;border:1px solid #8a8a3a;box-shadow:inset 1px 1px 0 rgba(255,255,255,.7);font-size:13.4px;line-height:26px;text-align:center;padding-right:0px;color:#000;white-space:nowrap;letter-spacing:.3px">Inhibited</div>
<div style="left:1466px;top:326px;width:104px;height:28px;background:#e6e6e6;border:1px solid #8a8a8a;box-shadow:inset 1px 1px 0 rgba(255,255,255,.7);font-size:13.4px;line-height:26px;text-align:center;padding-right:0px;color:#000;white-space:nowrap;letter-spacing:.3px">Activate</div>
<div style="left:1240px;top:367px;width:69px;height:25px;background:#d8d8d8;border:1px solid #8a8a8a;box-shadow:inset 1px 1px 0 rgba(255,255,255,.7);font-size:13.4px;line-height:23px;text-align:right;padding-right:3px;color:#000;white-space:nowrap;letter-spacing:.3px">Recording</div>
<div style="left:1309px;top:367px;width:65px;height:25px;background:#d8d8d8;border:1px solid #8a8a8a;box-shadow:inset 1px 1px 0 rgba(255,255,255,.7);font-size:13.4px;line-height:23px;text-align:center;padding-right:0px;color:#000;white-space:nowrap;letter-spacing:.3px">Statistics</div>
<div style="left:1200px;top:391px;width:375px;height:140px;border:1px solid #a0a0a0"></div>
<div style="left:1210px;top:407px;width:357px;height:120px;border:1px solid #b0b0b0"></div>
<div style="left:1250px;top:399px;width:120px;height:16px;background:#e6e6e6"></div>
<div class="t" style="left:1270px;top:400px;font-size:13.4px;color:#000;letter-spacing:.3px">Acquisition Status</div>
<div class="t" style="left:1474px;top:417px;font-size:13.4px;color:#000">Errors</div>
<div class="t" style="left:1279px;top:437px;font-size:13.4px;color:#000;transform:translateX(-100%)">Frame:</div>
<div style="left:1283px;top:434px;width:139px;height:20px;background:#55f855;border:1px solid #3a8a3a;box-shadow:inset 1px 1px 0 rgba(255,255,255,.7);font-size:13.4px;line-height:18px;text-align:center;padding-right:0px;color:#000;white-space:nowrap;letter-spacing:.3px">Locked</div>
<div style="left:1424px;top:434px;width:139px;height:20px;background:#a0a0a0;border:1px solid #6a6a6a;font-size:13.4px;line-height:18px;text-align:right;padding-right:5px;color:#000">1</div>
<div class="t" style="left:1279px;top:459px;font-size:13.4px;color:#000;transform:translateX(-100%)">Frame:</div>
<div style="left:1283px;top:456px;width:139px;height:20px;background:#55f855;border:1px solid #3a8a3a;box-shadow:inset 1px 1px 0 rgba(255,255,255,.7);font-size:13.4px;line-height:18px;text-align:center;padding-right:0px;color:#000;white-space:nowrap;letter-spacing:.3px">Locked</div>
<div style="left:1424px;top:456px;width:139px;height:20px;background:#a0a0a0;border:1px solid #6a6a6a;font-size:13.4px;line-height:18px;text-align:right;padding-right:5px;color:#000">0</div>
<div style="left:1283px;top:478px;width:139px;height:20px;background:#55f855;border:1px solid #3a8a3a;box-shadow:inset 1px 1px 0 rgba(255,255,255,.7);font-size:13.4px;line-height:18px;text-align:right;padding-right:5px;color:#000;white-space:nowrap;letter-spacing:.6px">1220700</div>
<div style="left:1283px;top:500px;width:139px;height:20px;background:#55f855;border:1px solid #3a8a3a;box-shadow:inset 1px 1px 0 rgba(255,255,255,.7);font-size:13.4px;line-height:18px;text-align:center;padding-right:0px;color:#000;white-space:nowrap;letter-spacing:.3px">Locked</div>
<div style="left:5px;top:513px;width:834px;height:371px;background:linear-gradient(to bottom,#3a3a3a 0px,#2a2a2a 28px,#141414 60px,#0e0e0e 100%);border:1px solid rgba(0,0,0,.85);border-radius:7px 7px 6px 6px;box-shadow:inset 0 0 0 1px rgba(255,255,255,.45);"></div>
<svg style="left:20px;top:505px" width="120" height="10"><ellipse cx="18" cy="10" rx="11" ry="4" fill="#5ab0e0"/><path d="M80 10 L80 3 L106 3 L110 7 L110 10 Z" fill="#e0e4ec"/></svg>
<div style="left:6px;top:514px;width:170px;height:27px;overflow:hidden;border-radius:7px 7px 0 0"><div style="left:-4px;top:0;width:120px;height:40px;background:linear-gradient(90deg,rgba(140,140,140,.9),rgba(255,175,140,1) 20%,rgba(150,210,245,1) 45%,rgba(245,225,160,1) 65%,rgba(120,120,120,.6) 85%,rgba(0,0,0,0));filter:blur(5px)"></div><div style="left:78px;top:-4px;width:80px;height:36px;background:radial-gradient(ellipse at 50% 50%,rgba(255,255,255,1),rgba(240,245,255,.9) 50%,rgba(255,255,255,0) 72%);filter:blur(2px)"></div></div>
<div class="t" style="left:12px;top:520px;font-size:12.2px;color:#0a0a20">Measurement Monitor</div>
<div style="left:11px;top:541px;width:822px;height:337px;background:#e6e6e6;border:1px solid #2a2a2a"></div>
<div style="left:12px;top:542px;width:820px;height:27px;background:linear-gradient(#fbfbfb,#f0f0f0 50%,#e0e0e0);border-bottom:1px solid #a8a8a8"></div>
<div class="t" style="left:20px;top:548px;font-size:13.4px;color:#000"><span class="u">F</span>ile</div>
<div class="t" style="left:55px;top:548px;font-size:13.4px;color:#000"><span class="u">E</span>dit</div>
<div class="t" style="left:93px;top:548px;font-size:13.4px;color:#000"><span class="u">V</span>iew</div>
<div class="t" style="left:137px;top:548px;font-size:13.4px;color:#000"><span class="u">O</span>ptions</div>
<div class="t" style="left:200px;top:548px;font-size:13.4px;color:#000">F<span class="u">o</span>rmat</div>
<div class="t" style="left:257px;top:548px;font-size:13.4px;color:#000"><span class="u">H</span>elp</div>
<div style="left:38px;top:597px;width:24px;height:25px;background:#e8e8e8;border:1px solid #222;border-top-color:#888;border-left-color:#888;border-radius:2px;box-shadow:inset 1px 1px 0 #fff"></div>
<svg style="left:38px;top:597px" width="24" height="25"><path d="M7 4 L14 4 L18 8 L18 20 L7 20 Z" fill="#fff" stroke="#000" stroke-width="1.2"/><path d="M14 4 L14 8 L18 8" fill="none" stroke="#000" stroke-width="1"/></svg>
<div style="left:64px;top:597px;width:24px;height:25px;background:#e8e8e8;border:1px solid #222;border-top-color:#888;border-left-color:#888;border-radius:2px;box-shadow:inset 1px 1px 0 #fff"></div>
<svg style="left:64px;top:597px" width="24" height="25"><path d="M4 9 L9 7 L12 9 L19 9 L19 19 L4 19 Z" fill="#e0e080" stroke="#606020" stroke-width="1"/><path d="M5 12 L20 12 L18 19 L4 19 Z" fill="#f0f0a0" stroke="#606020" stroke-width="1"/></svg>
<div style="left:89px;top:597px;width:24px;height:25px;background:#e8e8e8;border:1px solid #222;border-top-color:#888;border-left-color:#888;border-radius:2px;box-shadow:inset 1px 1px 0 #fff"></div>
<svg style="left:89px;top:597px" width="24" height="25"><rect x="5" y="5" width="14" height="14" fill="#606060" stroke="#000"/><rect x="8" y="5" width="8" height="6" fill="#e8e8e8"/><rect x="8" y="14" width="8" height="5" fill="#c8c8c8"/></svg>
<div style="left:120px;top:597px;width:24px;height:25px;background:#e8e8e8;border:1px solid #222;border-top-color:#888;border-left-color:#888;border-radius:2px;box-shadow:inset 1px 1px 0 #fff"></div>
<svg style="left:120px;top:597px" width="24" height="25"><path d="M6 5 L6 11 M6 8 L16 8 M9 6 L6 8 L9 10 M18 13 L18 19 M8 16 L18 16 M15 14 L18 16 L15 18" stroke="#000" stroke-width="1.3" fill="none"/></svg>
<div style="left:146px;top:597px;width:24px;height:25px;background:#e8e8e8;border:1px solid #222;border-top-color:#888;border-left-color:#888;border-radius:2px;box-shadow:inset 1px 1px 0 #fff"></div>
<svg style="left:146px;top:597px" width="24" height="25"><path d="M7 4 L14 4 L18 8 L18 20 L7 20 Z" fill="#fff" stroke="#000" stroke-width="1.2"/><path d="M14 4 L14 8 L18 8" fill="none" stroke="#000" stroke-width="1"/></svg>
<div style="left:171px;top:597px;width:24px;height:25px;background:#e8e8e8;border:1px solid #222;border-top-color:#888;border-left-color:#888;border-radius:2px;box-shadow:inset 1px 1px 0 #fff"></div>
<svg style="left:171px;top:597px" width="24" height="25"><path d="M8 9 L18 19" stroke="#000" stroke-width="5"/><path d="M8 9 L18 19" stroke="#c040c0" stroke-width="3"/><path d="M13 14 L18 19" stroke="#20a020" stroke-width="3"/><path d="M4 5 L7 7 L9 4 L12 6 L15 3" stroke="#000" stroke-width=".8" fill="none"/></svg>
<div style="left:202px;top:597px;width:24px;height:25px;background:#e8e8e8;border:1px solid #222;border-top-color:#888;border-left-color:#888;border-radius:2px;box-shadow:inset 1px 1px 0 #fff"></div>
<svg style="left:202px;top:597px" width="24" height="25"><g stroke="#00c8e8" stroke-width="2"><path d="M12 3 L12 21 M4 8 L20 16 M4 16 L20 8"/></g><g stroke="#004060" stroke-width=".7" fill="none"><path d="M9 4 L12 6 L15 4 M9 20 L12 18 L15 20"/></g></svg>
<div style="left:228px;top:597px;width:24px;height:25px;background:#c8c8c8;border:1px solid #222;border-top-color:#888;border-left-color:#888;border-radius:2px;box-shadow:inset 1px 1px 0 #fff"></div>
<svg style="left:228px;top:597px" width="24" height="25"><circle cx="12" cy="12" r="8" fill="#fff" stroke="#000" stroke-width="2.5"/><path d="M12 12 L15 7" stroke="#e00" stroke-width="1.5"/><path d="M12 12 L9 16" stroke="#000" stroke-width="1.5"/></svg>
<div style="left:116px;top:598px;width:1px;height:24px;background:#aaa"></div>
<div style="left:198px;top:598px;width:1px;height:24px;background:#aaa"></div>
<div style="left:35px;top:632px;width:774px;height:199px;background:#fff;border:1px solid #888"></div>
<div style="left:36px;top:633px;width:772px;height:24px;background:#e6e6e6"></div>
<div style="left:66px;top:634px;width:95px;height:23px;background:linear-gradient(#fafafa,#e8e8e8 60%,#d8d8d8);border-left:2px solid #222;border-bottom:1px solid #222"></div>
<div class="t" style="left:72px;top:639px;font-size:13.4px;color:#000">Status</div>
<div style="left:161px;top:634px;width:253px;height:23px;background:linear-gradient(#fafafa,#e8e8e8 60%,#d8d8d8);border-left:2px solid #222;border-bottom:1px solid #222"></div>
<div class="t" style="left:167px;top:639px;font-size:13.4px;color:#000">FD Name</div>
<div style="left:414px;top:634px;width:112px;height:23px;background:linear-gradient(#fafafa,#e8e8e8 60%,#d8d8d8);border-left:2px solid #222;border-bottom:1px solid #222"></div>
<div class="t" style="left:420px;top:639px;font-size:13.4px;color:#000">Last Process</div>
<div style="left:526px;top:634px;width:122px;height:23px;background:linear-gradient(#fafafa,#e8e8e8 60%,#d8d8d8);border-left:2px solid #222;border-bottom:1px solid #222"></div>
<div style="left:648px;top:634px;width:147px;height:23px;background:linear-gradient(#fafafa,#e8e8e8 60%,#d8d8d8);border-left:2px solid #222;border-bottom:1px solid #222"></div>
<div style="left:36px;top:657px;width:759px;height:158px;overflow:hidden">
<div style="left:0;top:0px;width:30px;height:20px;background:linear-gradient(90deg,#f4f4f4,#d8d8d8);border-bottom:2px solid #222;border-right:1px solid #222;font-size:13.4px;line-height:22px;padding-left:4px;color:#000">1</div>
<div style="left:30px;top:0px;width:729px;height:20px;background:#ffff00;border-bottom:1px solid #c8c8c8"></div>
<div style="left:30px;top:0px;width:95px;height:20px;border-left:1px solid #c8c8c8;font-size:13.4px;line-height:22px;text-align:left;padding-left:3px;color:#000;white-space:nowrap;overflow:hidden;letter-spacing:.9px">D--------------</div>
<div style="left:125px;top:0px;width:253px;height:20px;border-left:1px solid #c8c8c8;font-size:13.4px;line-height:22px;text-align:left;padding-left:3px;color:#000;white-space:nowrap;overflow:hidden;letter-spacing:.2px">ARS_Status</div>
<div style="left:378px;top:0px;width:112px;height:20px;border-left:1px solid #c8c8c8;font-size:13.4px;line-height:22px;text-align:left;padding-left:3px;color:#000;white-space:nowrap;overflow:hidden;letter-spacing:.6px">000:00:00:00</div>
<div style="left:490px;top:0px;width:122px;height:20px;border-left:1px solid #c8c8c8;font-size:13.4px;line-height:22px;text-align:left;padding-left:3px;color:#000;white-space:nowrap;overflow:hidden;letter-spacing:.2px"></div>
<div style="left:612px;top:0px;width:147px;height:20px;border-left:1px solid #c8c8c8;font-size:13.4px;line-height:22px;text-align:left;padding-left:3px;color:#000;white-space:nowrap;overflow:hidden;letter-spacing:.2px"></div>
<div style="left:0;top:20px;width:30px;height:20px;background:linear-gradient(90deg,#f4f4f4,#d8d8d8);border-bottom:2px solid #222;border-right:1px solid #222;font-size:13.4px;line-height:22px;padding-left:4px;color:#000">2</div>
<div style="left:30px;top:20px;width:729px;height:20px;background:#ffff00;border-bottom:1px solid #c8c8c8"></div>
<div style="left:30px;top:20px;width:95px;height:20px;border-left:1px solid #c8c8c8;font-size:13.4px;line-height:22px;text-align:left;padding-left:3px;color:#000;white-space:nowrap;overflow:hidden;letter-spacing:.9px">--------1-------</div>
<div style="left:125px;top:20px;width:253px;height:20px;border-left:1px solid #c8c8c8;font-size:13.4px;line-height:22px;text-align:left;padding-left:3px;color:#000;white-space:nowrap;overflow:hidden;letter-spacing:.2px">Boiler - Pressure</div>
<div style="left:378px;top:20px;width:112px;height:20px;border-left:1px solid #c8c8c8;font-size:13.4px;line-height:22px;text-align:left;padding-left:3px;color:#000;white-space:nowrap;overflow:hidden;letter-spacing:.6px">272:21:39:52</div>
<div style="left:490px;top:20px;width:122px;height:20px;border-left:1px solid #c8c8c8;font-size:13.4px;line-height:22px;text-align:right;padding-right:3px;color:#000;white-space:nowrap;overflow:hidden;letter-spacing:.6px">395.000000000</div>
<div style="left:612px;top:20px;width:147px;height:20px;border-left:1px solid #c8c8c8;font-size:13.4px;line-height:22px;text-align:left;padding-left:3px;color:#000;white-space:nowrap;overflow:hidden;letter-spacing:.6px">0x4078B000000000000</div>
<div style="left:0;top:40px;width:30px;height:20px;background:linear-gradient(90deg,#f4f4f4,#d8d8d8);border-bottom:2px solid #222;border-right:1px solid #222;font-size:13.4px;line-height:22px;padding-left:4px;color:#000">3</div>
<div style="left:30px;top:40px;width:729px;height:20px;background:#ffff00;border-bottom:1px solid #c8c8c8"></div>
<div style="left:30px;top:40px;width:95px;height:20px;border-left:1px solid #c8c8c8;font-size:13.4px;line-height:22px;text-align:left;padding-left:3px;color:#000;white-space:nowrap;overflow:hidden;letter-spacing:.9px">--------12------</div>
<div style="left:125px;top:40px;width:253px;height:20px;border-left:1px solid #c8c8c8;font-size:13.4px;line-height:22px;text-align:left;padding-left:3px;color:#000;white-space:nowrap;overflow:hidden;letter-spacing:.2px">Boiler - Temperature</div>
<div style="left:378px;top:40px;width:112px;height:20px;border-left:1px solid #c8c8c8;font-size:13.4px;line-height:22px;text-align:left;padding-left:3px;color:#000;white-space:nowrap;overflow:hidden;letter-spacing:.6px">272:21:38:24</div>
<div style="left:490px;top:40px;width:122px;height:20px;border-left:1px solid #c8c8c8;font-size:13.4px;line-height:22px;text-align:right;padding-right:3px;color:#000;white-space:nowrap;overflow:hidden;letter-spacing:.6px">475.000000000</div>
<div style="left:612px;top:40px;width:147px;height:20px;border-left:1px solid #c8c8c8;font-size:13.4px;line-height:22px;text-align:left;padding-left:3px;color:#000;white-space:nowrap;overflow:hidden;letter-spacing:.6px">0x407DB000000000000</div>
<div style="left:0;top:60px;width:30px;height:20px;background:linear-gradient(90deg,#f4f4f4,#d8d8d8);border-bottom:2px solid #222;border-right:1px solid #222;font-size:13.4px;line-height:22px;padding-left:4px;color:#000">4</div>
<div style="left:30px;top:60px;width:729px;height:20px;background:#fff;border-bottom:1px solid #c8c8c8"></div>
<div style="left:30px;top:60px;width:95px;height:20px;border-left:1px solid #c8c8c8;font-size:13.4px;line-height:22px;text-align:left;padding-left:3px;color:#000;white-space:nowrap;overflow:hidden;letter-spacing:.9px">---------------</div>
<div style="left:125px;top:60px;width:253px;height:20px;border-left:1px solid #c8c8c8;font-size:13.4px;line-height:22px;text-align:left;padding-left:3px;color:#000;white-space:nowrap;overflow:hidden;letter-spacing:.2px">Boiler - Water Level</div>
<div style="left:378px;top:60px;width:112px;height:20px;border-left:1px solid #c8c8c8;font-size:13.4px;line-height:22px;text-align:left;padding-left:3px;color:#000;white-space:nowrap;overflow:hidden;letter-spacing:.6px">272:21:39:52</div>
<div style="left:490px;top:60px;width:122px;height:20px;border-left:1px solid #c8c8c8;font-size:13.4px;line-height:22px;text-align:right;padding-right:3px;color:#000;white-space:nowrap;overflow:hidden;letter-spacing:.6px">64.833424000</div>
<div style="left:612px;top:60px;width:147px;height:20px;border-left:1px solid #c8c8c8;font-size:13.4px;line-height:22px;text-align:left;padding-left:3px;color:#000;white-space:nowrap;overflow:hidden;letter-spacing:.6px">0x40503556D19DECE5</div>
<div style="left:0;top:80px;width:30px;height:20px;background:linear-gradient(90deg,#f4f4f4,#d8d8d8);border-bottom:2px solid #222;border-right:1px solid #222;font-size:13.4px;line-height:22px;padding-left:4px;color:#000">5</div>
<div style="left:30px;top:80px;width:729px;height:20px;background:#fff;border-bottom:1px solid #c8c8c8"></div>
<div style="left:30px;top:80px;width:95px;height:20px;border-left:1px solid #c8c8c8;font-size:13.4px;line-height:22px;text-align:left;padding-left:3px;color:#000;white-space:nowrap;overflow:hidden;letter-spacing:.9px">---------------</div>
<div style="left:125px;top:80px;width:253px;height:20px;border-left:1px solid #c8c8c8;font-size:13.4px;line-height:22px;text-align:left;padding-left:3px;color:#000;white-space:nowrap;overflow:hidden;letter-spacing:.2px">Heat Source - Coil State</div>
<div style="left:378px;top:80px;width:112px;height:20px;border-left:1px solid #c8c8c8;font-size:13.4px;line-height:22px;text-align:left;padding-left:3px;color:#000;white-space:nowrap;overflow:hidden;letter-spacing:.6px">272:21:33:47</div>
<div style="left:490px;top:80px;width:122px;height:20px;border-left:1px solid #c8c8c8;font-size:13.4px;line-height:22px;text-align:left;padding-left:3px;color:#000;white-space:nowrap;overflow:hidden;letter-spacing:.2px">on</div>
<div style="left:612px;top:80px;width:147px;height:20px;border-left:1px solid #c8c8c8;font-size:13.4px;line-height:22px;text-align:left;padding-left:3px;color:#000;white-space:nowrap;overflow:hidden;letter-spacing:.6px">0x01</div>
<div style="left:0;top:100px;width:30px;height:20px;background:linear-gradient(90deg,#f4f4f4,#d8d8d8);border-bottom:2px solid #222;border-right:1px solid #222;font-size:13.4px;line-height:22px;padding-left:4px;color:#000">6</div>
<div style="left:30px;top:100px;width:729px;height:20px;background:#fff;border-bottom:1px solid #c8c8c8"></div>
<div style="left:30px;top:100px;width:95px;height:20px;border-left:1px solid #c8c8c8;font-size:13.4px;line-height:22px;text-align:left;padding-left:3px;color:#000;white-space:nowrap;overflow:hidden;letter-spacing:.9px">---------------</div>
<div style="left:125px;top:100px;width:253px;height:20px;border-left:1px solid #c8c8c8;font-size:13.4px;line-height:22px;text-align:left;padding-left:3px;color:#000;white-space:nowrap;overflow:hidden;letter-spacing:.2px">Heat Source - Temperature</div>
<div style="left:378px;top:100px;width:112px;height:20px;border-left:1px solid #c8c8c8;font-size:13.4px;line-height:22px;text-align:left;padding-left:3px;color:#000;white-space:nowrap;overflow:hidden;letter-spacing:.6px">272:21:38:12</div>
<div style="left:490px;top:100px;width:122px;height:20px;border-left:1px solid #c8c8c8;font-size:13.4px;line-height:22px;text-align:right;padding-right:3px;color:#000;white-space:nowrap;overflow:hidden;letter-spacing:.6px">475.000000000</div>
<div style="left:612px;top:100px;width:147px;height:20px;border-left:1px solid #c8c8c8;font-size:13.4px;line-height:22px;text-align:left;padding-left:3px;color:#000;white-space:nowrap;overflow:hidden;letter-spacing:.6px">0x407DB000000000000</div>
<div style="left:0;top:120px;width:30px;height:20px;background:linear-gradient(90deg,#f4f4f4,#d8d8d8);border-bottom:2px solid #222;border-right:1px solid #222;font-size:13.4px;line-height:22px;padding-left:4px;color:#000">7</div>
<div style="left:30px;top:120px;width:729px;height:20px;background:#fff;border-bottom:1px solid #c8c8c8"></div>
<div style="left:30px;top:120px;width:95px;height:20px;border-left:1px solid #c8c8c8;font-size:13.4px;line-height:22px;text-align:left;padding-left:3px;color:#000;white-space:nowrap;overflow:hidden;letter-spacing:.9px">---------------</div>
<div style="left:125px;top:120px;width:253px;height:20px;border-left:1px solid #c8c8c8;font-size:13.4px;line-height:22px;text-align:left;padding-left:3px;color:#000;white-space:nowrap;overflow:hidden;letter-spacing:.2px">Piston A - Action Valve 1 State</div>
<div style="left:378px;top:120px;width:112px;height:20px;border-left:1px solid #c8c8c8;font-size:13.4px;line-height:22px;text-align:left;padding-left:3px;color:#000;white-space:nowrap;overflow:hidden;letter-spacing:.6px">272:21:39:51</div>
<div style="left:490px;top:120px;width:122px;height:20px;border-left:1px solid #c8c8c8;font-size:13.4px;line-height:22px;text-align:left;padding-left:3px;color:#000;white-space:nowrap;overflow:hidden;letter-spacing:.2px">closed</div>
<div style="left:612px;top:120px;width:147px;height:20px;border-left:1px solid #c8c8c8;font-size:13.4px;line-height:22px;text-align:left;padding-left:3px;color:#000;white-space:nowrap;overflow:hidden;letter-spacing:.6px">0x00</div>
<div style="left:0;top:140px;width:30px;height:20px;background:linear-gradient(90deg,#f4f4f4,#d8d8d8);border-bottom:2px solid #222;border-right:1px solid #222;font-size:13.4px;line-height:22px;padding-left:4px;color:#000">8</div>
<div style="left:30px;top:140px;width:729px;height:20px;background:#fff;border-bottom:1px solid #c8c8c8"></div>
<div style="left:30px;top:140px;width:95px;height:20px;border-left:1px solid #c8c8c8;font-size:13.4px;line-height:22px;text-align:left;padding-left:3px;color:#000;white-space:nowrap;overflow:hidden;letter-spacing:.9px">---------------</div>
<div style="left:125px;top:140px;width:253px;height:20px;border-left:1px solid #c8c8c8;font-size:13.4px;line-height:22px;text-align:left;padding-left:3px;color:#000;white-space:nowrap;overflow:hidden;letter-spacing:.2px">Piston A - Action Valve 2 State</div>
<div style="left:378px;top:140px;width:112px;height:20px;border-left:1px solid #c8c8c8;font-size:13.4px;line-height:22px;text-align:left;padding-left:3px;color:#000;white-space:nowrap;overflow:hidden;letter-spacing:.6px">272:21:39:51</div>
<div style="left:490px;top:140px;width:122px;height:20px;border-left:1px solid #c8c8c8;font-size:13.4px;line-height:22px;text-align:left;padding-left:3px;color:#000;white-space:nowrap;overflow:hidden;letter-spacing:.2px">open</div>
<div style="left:612px;top:140px;width:147px;height:20px;border-left:1px solid #c8c8c8;font-size:13.4px;line-height:22px;text-align:left;padding-left:3px;color:#000;white-space:nowrap;overflow:hidden;letter-spacing:.6px">0x01</div>
</div>
<div style="left:795px;top:657px;width:14px;height:158px;background:#e8e8e8;border-left:1px solid #999"></div>
<div style="left:796px;top:672px;width:12px;height:30px;background:linear-gradient(90deg,#fff,#e8e8e8);border:1px solid #999"></div>
<div style="left:796px;top:702px;width:12px;height:70px;background:#c8c8c8"></div>
<svg style="left:795px;top:780px" width="14" height="35"><rect x=".5" y=".5" width="13" height="16" fill="#f4f4f4" stroke="#444"/><rect x=".5" y="17.5" width="13" height="16" fill="#f4f4f4" stroke="#444"/>
<path d="M3 11 L11 11 L7 6 Z" fill="#000"/><path d="M3 23 L11 23 L7 28 Z" fill="#000"/></svg>
<div style="left:36px;top:815px;width:759px;height:15px;background:#f0f0f0;border-top:1px solid #222"></div>
<div style="left:666px;top:816px;width:95px;height:14px;background:#c8c8c8"></div>
<svg style="left:36px;top:815px" width="760" height="16"><rect x=".5" y="1.5" width="15" height="13" fill="#f4f4f4" stroke="#444"/>
<path d="M11 4 L5 8 L11 12 Z" fill="#000"/>
<rect x="725.5" y="1.5" width="15" height="13" fill="#f4f4f4" stroke="#444"/><rect x="741.5" y="1.5" width="15" height="13" fill="#f4f4f4" stroke="#444"/>
<path d="M736 4 L730 8 L736 12 Z" fill="#000"/><path d="M746 4 L752 8 L746 12 Z" fill="#000"/>
<path d="M322 6 L322 12 M325 6 L325 12 M328 6 L328 12" stroke="#888"/></svg>
<svg style="left:818px;top:864px" width="14" height="14"><path d="M12 2 L2 12 M12 6 L6 12 M12 10 L10 12" stroke="#999" stroke-width="1"/></svg>
<div style="left:899px;top:487px;width:705px;height:408px;border:1px solid rgba(0,0,0,.9);border-radius:7px 7px 3px 3px;background:linear-gradient(to bottom,rgba(240,240,240,.55) 0px,rgba(220,220,220,.6) 28px,#2a2a2a 60px,#121212 100%);backdrop-filter:blur(6px);box-shadow:inset 0 0 0 1px rgba(255,255,255,.5)"></div>
<div style="left:1492px;top:487px;width:101px;height:19px;border:1px solid rgba(60,60,80,.55);border-top:none;border-radius:0 0 5px 5px;overflow:hidden;background:#ddd"><div style="left:0;top:0;width:27px;height:18px;background:linear-gradient(#f4f4f4,#dcdcdc 50%,#c8c8c8 51%,#e0e0e0);border-right:1px solid rgba(60,60,80,.45)"></div><div style="left:27px;top:0;width:27px;height:18px;background:linear-gradient(#f4f4f4,#dcdcdc 50%,#c8c8c8 51%,#e0e0e0);border-right:1px solid rgba(60,60,80,.45)"></div><div style="left:54px;top:0;width:46px;height:18px;background:linear-gradient(#f4f4f4,#dcdcdc 50%,#c8c8c8 51%,#e0e0e0)"></div><svg style="left:0;top:0" width="101" height="19"><rect x="8.5" y="9.5" width="11" height="4" fill="#fff" stroke="#404868" stroke-width="1.2" rx="1"/><rect x="35.5" y="4.5" width="11" height="9" fill="none" stroke="#404868" stroke-width="1.2" rx="1"/><rect x="38.5" y="7.5" width="5" height="3" fill="none" stroke="#404868" stroke-width="1.2"/><path d="M74 5.5 L82.5 12.5 M82.5 5.5 L74 12.5" stroke="#404868" stroke-width="4" stroke-linecap="square"/><path d="M74 5.5 L82.5 12.5 M82.5 5.5 L74 12.5" stroke="#fff" stroke-width="2" stroke-linecap="square"/></svg></div>
<div style="left:905px;top:516px;width:691px;height:373px;background:#e6e6e6;border:1px solid #333"></div>
<div class="t" style="left:1288px;top:519px;font-size:9.4px;font-weight:bold;color:#000;transform:translateX(-100%)">SIMPLE PCM DAC</div>
<div class="t" style="left:1523px;top:519px;font-size:8.6px;font-weight:bold;color:#000">Polled Changes</div>
<svg style="left:1141px;top:529px" width="218" height="115"><rect x="0.5" y="0.5" width="217" height="114" fill="#4d4d4d" stroke="#000" stroke-width="1.2"/><text x="107.0" y="10.5" font-size="8.6" fill="#e0e0e0" text-anchor="middle" font-family="Liberation Sans" letter-spacing=".3">FLOATINGPOINT_32</text><g shape-rendering="crispEdges" stroke="#000" stroke-width="1"><line x1="28.5" y1="88.5" x2="212" y2="88.5" stroke-dasharray="6 4"/><line x1="28.5" y1="69.5" x2="212" y2="69.5" stroke-dasharray="6 4"/><line x1="28.5" y1="49.5" x2="212" y2="49.5" stroke-dasharray="6 4"/><line x1="28.5" y1="30.5" x2="212" y2="30.5" stroke-dasharray="6 4"/><line x1="74.5" y1="11.6" x2="74.5" y2="111.6" stroke-dasharray="6 4"/><line x1="134.5" y1="11.6" x2="134.5" y2="111.6" stroke-dasharray="6 4"/><line x1="195.5" y1="11.6" x2="195.5" y2="111.6" stroke-dasharray="6 4"/><line x1="28.5" y1="11.6" x2="28.5" y2="107.6" stroke-width="2"/><line x1="22" y1="107.5" x2="212" y2="107.5" stroke-width="2"/><line x1="22" y1="107.5" x2="28" y2="107.5"/><line x1="24" y1="103.5" x2="28" y2="103.5"/><line x1="24" y1="99.5" x2="28" y2="99.5"/><line x1="24" y1="96.5" x2="28" y2="96.5"/><line x1="24" y1="92.5" x2="28" y2="92.5"/><line x1="22" y1="88.5" x2="28" y2="88.5"/><line x1="24" y1="84.5" x2="28" y2="84.5"/><line x1="24" y1="80.5" x2="28" y2="80.5"/><line x1="24" y1="76.5" x2="28" y2="76.5"/><line x1="24" y1="73.5" x2="28" y2="73.5"/><line x1="22" y1="69.5" x2="28" y2="69.5"/><line x1="24" y1="65.5" x2="28" y2="65.5"/><line x1="24" y1="61.5" x2="28" y2="61.5"/><line x1="24" y1="57.5" x2="28" y2="57.5"/><line x1="24" y1="53.5" x2="28" y2="53.5"/><line x1="22" y1="49.5" x2="28" y2="49.5"/><line x1="24" y1="46.5" x2="28" y2="46.5"/><line x1="24" y1="42.5" x2="28" y2="42.5"/><line x1="24" y1="38.5" x2="28" y2="38.5"/><line x1="24" y1="34.5" x2="28" y2="34.5"/><line x1="22" y1="30.5" x2="28" y2="30.5"/><line x1="24" y1="26.5" x2="28" y2="26.5"/><line x1="24" y1="23.5" x2="28" y2="23.5"/><line x1="24" y1="19.5" x2="28" y2="19.5"/><line x1="24" y1="15.5" x2="28" y2="15.5"/><line x1="22" y1="11.5" x2="28" y2="11.5"/><line x1="43.5" y1="107.6" x2="43.5" y2="111.6"/><line x1="104.5" y1="107.6" x2="104.5" y2="111.6"/><line x1="165.5" y1="107.6" x2="165.5" y2="111.6"/></g><text x="27" y="110.6" font-size="8.8" fill="#000" text-anchor="end" font-family="Liberation Sans">0.0</text><text x="27" y="91.4" font-size="8.8" fill="#000" text-anchor="end" font-family="Liberation Sans">20.0</text><text x="27" y="72.2" font-size="8.8" fill="#000" text-anchor="end" font-family="Liberation Sans">40.0</text><text x="27" y="53.0" font-size="8.8" fill="#000" text-anchor="end" font-family="Liberation Sans">60.0</text><text x="27" y="33.8" font-size="8.8" fill="#000" text-anchor="end" font-family="Liberation Sans">80.0</text><text x="27" y="14.6" font-size="8.8" fill="#000" text-anchor="end" font-family="Liberation Sans">100.0</text><polyline points="30.0,36.5 32.2,37.3 34.4,38.4 36.6,39.6 38.8,41.1 41.0,42.7 43.2,44.6 45.4,46.6 47.6,48.7 49.8,50.9 52.0,53.3 54.2,55.7 56.4,58.1 58.6,60.5 60.8,63.0 63.0,65.4 65.2,67.8 67.4,70.0 69.6,72.2 71.8,74.2 74.0,76.1 76.2,77.8 78.4,79.3 80.6,80.6 82.8,81.7 85.0,82.5 87.2,83.1 89.4,83.5 91.6,83.6 93.8,83.5 96.0,83.1 98.2,82.4 100.4,81.6 102.6,80.5 104.8,79.1 107.0,77.6 109.2,75.9 111.4,74.0 113.6,72.0 115.8,69.8 118.0,67.5 120.2,65.2 122.4,62.8 124.6,60.3 126.8,57.9 129.0,55.4 131.2,53.0 133.4,50.7 135.6,48.5 137.8,46.4 140.0,44.4 142.2,42.6 144.4,40.9 146.6,39.5 148.8,38.3 151.0,37.2 153.2,36.5 155.4,35.9 157.6,35.7 159.8,35.6 162.0,35.8 164.2,36.3 166.4,37.0 168.6,38.0 170.8,39.1 173.0,40.5 175.2,42.1 177.4,43.9 179.6,45.8 181.8,47.9 184.0,50.1 186.2,52.4 188.4,54.8 190.6,57.2 192.8,59.7 195.0,62.1 197.2,64.5 199.4,66.9 201.6,69.2 203.8,71.4 206.0,73.5 208.2,75.4 210.4,77.2" fill="none" stroke="#fff" stroke-width="1.1"/><rect x="27.9" y="34.4" width="4.2" height="4.2" fill="#fff" stroke="#000" stroke-width="1.2"/><rect x="30.1" y="35.2" width="4.2" height="4.2" fill="#fff" stroke="#000" stroke-width="1.2"/><rect x="32.3" y="36.3" width="4.2" height="4.2" fill="#fff" stroke="#000" stroke-width="1.2"/><rect x="34.5" y="37.5" width="4.2" height="4.2" fill="#fff" stroke="#000" stroke-width="1.2"/><rect x="36.7" y="39.0" width="4.2" height="4.2" fill="#fff" stroke="#000" stroke-width="1.2"/><rect x="38.9" y="40.6" width="4.2" height="4.2" fill="#fff" stroke="#000" stroke-width="1.2"/><rect x="41.1" y="42.5" width="4.2" height="4.2" fill="#fff" stroke="#000" stroke-width="1.2"/><rect x="43.3" y="44.5" width="4.2" height="4.2" fill="#fff" stroke="#000" stroke-width="1.2"/><rect x="45.5" y="46.6" width="4.2" height="4.2" fill="#fff" stroke="#000" stroke-width="1.2"/><rect x="47.7" y="48.8" width="4.2" height="4.2" fill="#fff" stroke="#000" stroke-width="1.2"/><rect x="49.9" y="51.2" width="4.2" height="4.2" fill="#fff" stroke="#000" stroke-width="1.2"/><rect x="52.1" y="53.6" width="4.2" height="4.2" fill="#fff" stroke="#000" stroke-width="1.2"/><rect x="54.3" y="56.0" width="4.2" height="4.2" fill="#fff" stroke="#000" stroke-width="1.2"/><rect x="56.5" y="58.4" width="4.2" height="4.2" fill="#fff" stroke="#000" stroke-width="1.2"/><rect x="58.7" y="60.9" width="4.2" height="4.2" fill="#fff" stroke="#000" stroke-width="1.2"/><rect x="60.9" y="63.3" width="4.2" height="4.2" fill="#fff" stroke="#000" stroke-width="1.2"/><rect x="63.1" y="65.7" width="4.2" height="4.2" fill="#fff" stroke="#000" stroke-width="1.2"/><rect x="65.3" y="67.9" width="4.2" height="4.2" fill="#fff" stroke="#000" stroke-width="1.2"/><rect x="67.5" y="70.1" width="4.2" height="4.2" fill="#fff" stroke="#000" stroke-width="1.2"/><rect x="69.7" y="72.1" width="4.2" height="4.2" fill="#fff" stroke="#000" stroke-width="1.2"/><rect x="71.9" y="74.0" width="4.2" height="4.2" fill="#fff" stroke="#000" stroke-width="1.2"/><rect x="74.1" y="75.7" width="4.2" height="4.2" fill="#fff" stroke="#000" stroke-width="1.2"/><rect x="76.3" y="77.2" width="4.2" height="4.2" fill="#fff" stroke="#000" stroke-width="1.2"/><rect x="78.5" y="78.5" width="4.2" height="4.2" fill="#fff" stroke="#000" stroke-width="1.2"/><rect x="80.7" y="79.6" width="4.2" height="4.2" fill="#fff" stroke="#000" stroke-width="1.2"/><rect x="82.9" y="80.4" width="4.2" height="4.2" fill="#fff" stroke="#000" stroke-width="1.2"/><rect x="85.1" y="81.0" width="4.2" height="4.2" fill="#fff" stroke="#000" stroke-width="1.2"/><rect x="87.3" y="81.4" width="4.2" height="4.2" fill="#fff" stroke="#000" stroke-width="1.2"/><rect x="89.5" y="81.5" width="4.2" height="4.2" fill="#fff" stroke="#000" stroke-width="1.2"/><rect x="91.7" y="81.4" width="4.2" height="4.2" fill="#fff" stroke="#000" stroke-width="1.2"/><rect x="93.9" y="81.0" width="4.2" height="4.2" fill="#fff" stroke="#000" stroke-width="1.2"/><rect x="96.1" y="80.3" width="4.2" height="4.2" fill="#fff" stroke="#000" stroke-width="1.2"/><rect x="98.3" y="79.5" width="4.2" height="4.2" fill="#fff" stroke="#000" stroke-width="1.2"/><rect x="100.5" y="78.4" width="4.2" height="4.2" fill="#fff" stroke="#000" stroke-width="1.2"/><rect x="102.7" y="77.0" width="4.2" height="4.2" fill="#fff" stroke="#000" stroke-width="1.2"/><rect x="104.9" y="75.5" width="4.2" height="4.2" fill="#fff" stroke="#000" stroke-width="1.2"/><rect x="107.1" y="73.8" width="4.2" height="4.2" fill="#fff" stroke="#000" stroke-width="1.2"/><rect x="109.3" y="71.9" width="4.2" height="4.2" fill="#fff" stroke="#000" stroke-width="1.2"/><rect x="111.5" y="69.9" width="4.2" height="4.2" fill="#fff" stroke="#000" stroke-width="1.2"/><rect x="113.7" y="67.7" width="4.2" height="4.2" fill="#fff" stroke="#000" stroke-width="1.2"/><rect x="115.9" y="65.4" width="4.2" height="4.2" fill="#fff" stroke="#000" stroke-width="1.2"/><rect x="118.1" y="63.1" width="4.2" height="4.2" fill="#fff" stroke="#000" stroke-width="1.2"/><rect x="120.3" y="60.7" width="4.2" height="4.2" fill="#fff" stroke="#000" stroke-width="1.2"/><rect x="122.5" y="58.2" width="4.2" height="4.2" fill="#fff" stroke="#000" stroke-width="1.2"/><rect x="124.7" y="55.8" width="4.2" height="4.2" fill="#fff" stroke="#000" stroke-width="1.2"/><rect x="126.9" y="53.3" width="4.2" height="4.2" fill="#fff" stroke="#000" stroke-width="1.2"/><rect x="129.1" y="50.9" width="4.2" height="4.2" fill="#fff" stroke="#000" stroke-width="1.2"/><rect x="131.3" y="48.6" width="4.2" height="4.2" fill="#fff" stroke="#000" stroke-width="1.2"/><rect x="133.5" y="46.4" width="4.2" height="4.2" fill="#fff" stroke="#000" stroke-width="1.2"/><rect x="135.7" y="44.3" width="4.2" height="4.2" fill="#fff" stroke="#000" stroke-width="1.2"/><rect x="137.9" y="42.3" width="4.2" height="4.2" fill="#fff" stroke="#000" stroke-width="1.2"/><rect x="140.1" y="40.5" width="4.2" height="4.2" fill="#fff" stroke="#000" stroke-width="1.2"/><rect x="142.3" y="38.8" width="4.2" height="4.2" fill="#fff" stroke="#000" stroke-width="1.2"/><rect x="144.5" y="37.4" width="4.2" height="4.2" fill="#fff" stroke="#000" stroke-width="1.2"/><rect x="146.7" y="36.2" width="4.2" height="4.2" fill="#fff" stroke="#000" stroke-width="1.2"/><rect x="148.9" y="35.1" width="4.2" height="4.2" fill="#fff" stroke="#000" stroke-width="1.2"/><rect x="151.1" y="34.4" width="4.2" height="4.2" fill="#fff" stroke="#000" stroke-width="1.2"/><rect x="153.3" y="33.8" width="4.2" height="4.2" fill="#fff" stroke="#000" stroke-width="1.2"/><rect x="155.5" y="33.6" width="4.2" height="4.2" fill="#fff" stroke="#000" stroke-width="1.2"/><rect x="157.7" y="33.5" width="4.2" height="4.2" fill="#fff" stroke="#000" stroke-width="1.2"/><rect x="159.9" y="33.7" width="4.2" height="4.2" fill="#fff" stroke="#000" stroke-width="1.2"/><rect x="162.1" y="34.2" width="4.2" height="4.2" fill="#fff" stroke="#000" stroke-width="1.2"/><rect x="164.3" y="34.9" width="4.2" height="4.2" fill="#fff" stroke="#000" stroke-width="1.2"/><rect x="166.5" y="35.9" width="4.2" height="4.2" fill="#fff" stroke="#000" stroke-width="1.2"/><rect x="168.7" y="37.0" width="4.2" height="4.2" fill="#fff" stroke="#000" stroke-width="1.2"/><rect x="170.9" y="38.4" width="4.2" height="4.2" fill="#fff" stroke="#000" stroke-width="1.2"/><rect x="173.1" y="40.0" width="4.2" height="4.2" fill="#fff" stroke="#000" stroke-width="1.2"/><rect x="175.3" y="41.8" width="4.2" height="4.2" fill="#fff" stroke="#000" stroke-width="1.2"/><rect x="177.5" y="43.7" width="4.2" height="4.2" fill="#fff" stroke="#000" stroke-width="1.2"/><rect x="179.7" y="45.8" width="4.2" height="4.2" fill="#fff" stroke="#000" stroke-width="1.2"/><rect x="181.9" y="48.0" width="4.2" height="4.2" fill="#fff" stroke="#000" stroke-width="1.2"/><rect x="184.1" y="50.3" width="4.2" height="4.2" fill="#fff" stroke="#000" stroke-width="1.2"/><rect x="186.3" y="52.7" width="4.2" height="4.2" fill="#fff" stroke="#000" stroke-width="1.2"/><rect x="188.5" y="55.1" width="4.2" height="4.2" fill="#fff" stroke="#000" stroke-width="1.2"/><rect x="190.7" y="57.6" width="4.2" height="4.2" fill="#fff" stroke="#000" stroke-width="1.2"/><rect x="192.9" y="60.0" width="4.2" height="4.2" fill="#fff" stroke="#000" stroke-width="1.2"/><rect x="195.1" y="62.4" width="4.2" height="4.2" fill="#fff" stroke="#000" stroke-width="1.2"/><rect x="197.3" y="64.8" width="4.2" height="4.2" fill="#fff" stroke="#000" stroke-width="1.2"/><rect x="199.5" y="67.1" width="4.2" height="4.2" fill="#fff" stroke="#000" stroke-width="1.2"/><rect x="201.7" y="69.3" width="4.2" height="4.2" fill="#fff" stroke="#000" stroke-width="1.2"/><rect x="203.9" y="71.4" width="4.2" height="4.2" fill="#fff" stroke="#000" stroke-width="1.2"/><rect x="206.1" y="73.3" width="4.2" height="4.2" fill="#fff" stroke="#000" stroke-width="1.2"/><rect x="208.3" y="75.1" width="4.2" height="4.2" fill="#fff" stroke="#000" stroke-width="1.2"/></svg>
<svg style="left:1370px;top:529px" width="218" height="115"><rect x="0.5" y="0.5" width="217" height="114" fill="#4d4d4d" stroke="#000" stroke-width="1.2"/><text x="107.0" y="10.5" font-size="8.6" fill="#e0e0e0" text-anchor="middle" font-family="Liberation Sans" letter-spacing=".3">INTEGER_8</text><g shape-rendering="crispEdges" stroke="#000" stroke-width="1"><line x1="28.5" y1="88.5" x2="212" y2="88.5" stroke-dasharray="6 4"/><line x1="28.5" y1="69.5" x2="212" y2="69.5" stroke-dasharray="6 4"/><line x1="28.5" y1="49.5" x2="212" y2="49.5" stroke-dasharray="6 4"/><line x1="28.5" y1="30.5" x2="212" y2="30.5" stroke-dasharray="6 4"/><line x1="74.5" y1="11.6" x2="74.5" y2="111.6" stroke-dasharray="6 4"/><line x1="134.5" y1="11.6" x2="134.5" y2="111.6" stroke-dasharray="6 4"/><line x1="195.5" y1="11.6" x2="195.5" y2="111.6" stroke-dasharray="6 4"/><line x1="28.5" y1="11.6" x2="28.5" y2="107.6" stroke-width="2"/><line x1="22" y1="107.5" x2="212" y2="107.5" stroke-width="2"/><line x1="22" y1="107.5" x2="28" y2="107.5"/><line x1="24" y1="103.5" x2="28" y2="103.5"/><line x1="24" y1="99.5" x2="28" y2="99.5"/><line x1="24" y1="96.5" x2="28" y2="96.5"/><line x1="24" y1="92.5" x2="28" y2="92.5"/><line x1="22" y1="88.5" x2="28" y2="88.5"/><line x1="24" y1="84.5" x2="28" y2="84.5"/><line x1="24" y1="80.5" x2="28" y2="80.5"/><line x1="24" y1="76.5" x2="28" y2="76.5"/><line x1="24" y1="73.5" x2="28" y2="73.5"/><line x1="22" y1="69.5" x2="28" y2="69.5"/><line x1="24" y1="65.5" x2="28" y2="65.5"/><line x1="24" y1="61.5" x2="28" y2="61.5"/><line x1="24" y1="57.5" x2="28" y2="57.5"/><line x1="24" y1="53.5" x2="28" y2="53.5"/><line x1="22" y1="49.5" x2="28" y2="49.5"/><line x1="24" y1="46.5" x2="28" y2="46.5"/><line x1="24" y1="42.5" x2="28" y2="42.5"/><line x1="24" y1="38.5" x2="28" y2="38.5"/><line x1="24" y1="34.5" x2="28" y2="34.5"/><line x1="22" y1="30.5" x2="28" y2="30.5"/><line x1="24" y1="26.5" x2="28" y2="26.5"/><line x1="24" y1="23.5" x2="28" y2="23.5"/><line x1="24" y1="19.5" x2="28" y2="19.5"/><line x1="24" y1="15.5" x2="28" y2="15.5"/><line x1="22" y1="11.5" x2="28" y2="11.5"/><line x1="43.5" y1="107.6" x2="43.5" y2="111.6"/><line x1="104.5" y1="107.6" x2="104.5" y2="111.6"/><line x1="165.5" y1="107.6" x2="165.5" y2="111.6"/></g><text x="27" y="110.6" font-size="8.8" fill="#000" text-anchor="end" font-family="Liberation Sans">0.0</text><text x="27" y="91.4" font-size="8.8" fill="#000" text-anchor="end" font-family="Liberation Sans">20.0</text><text x="27" y="72.2" font-size="8.8" fill="#000" text-anchor="end" font-family="Liberation Sans">40.0</text><text x="27" y="53.0" font-size="8.8" fill="#000" text-anchor="end" font-family="Liberation Sans">60.0</text><text x="27" y="33.8" font-size="8.8" fill="#000" text-anchor="end" font-family="Liberation Sans">80.0</text><text x="27" y="14.6" font-size="8.8" fill="#000" text-anchor="end" font-family="Liberation Sans">100.0</text><g stroke="#fff" stroke-width="1" shape-rendering="crispEdges"><line x1="30.5" y1="30.8" x2="30.5" y2="74.0"/><line x1="31.5" y1="45.2" x2="31.5" y2="88.4"/><line x1="33.5" y1="30.8" x2="33.5" y2="74.0"/><line x1="35.5" y1="45.2" x2="35.5" y2="88.4"/><line x1="37.5" y1="30.8" x2="37.5" y2="74.0"/><line x1="39.5" y1="45.2" x2="39.5" y2="88.4"/><line x1="41.5" y1="30.8" x2="41.5" y2="74.0"/><line x1="43.5" y1="45.2" x2="43.5" y2="88.4"/><line x1="44.5" y1="30.8" x2="44.5" y2="74.0"/><line x1="46.5" y1="45.2" x2="46.5" y2="88.4"/><line x1="48.5" y1="30.8" x2="48.5" y2="74.0"/><line x1="50.5" y1="45.2" x2="50.5" y2="88.4"/><line x1="52.5" y1="30.8" x2="52.5" y2="74.0"/><line x1="54.5" y1="45.2" x2="54.5" y2="88.4"/><line x1="56.5" y1="30.8" x2="56.5" y2="74.0"/><line x1="58.5" y1="45.2" x2="58.5" y2="88.4"/><line x1="59.5" y1="30.8" x2="59.5" y2="74.0"/><line x1="61.5" y1="45.2" x2="61.5" y2="88.4"/><line x1="63.5" y1="30.8" x2="63.5" y2="74.0"/><line x1="65.5" y1="45.2" x2="65.5" y2="88.4"/><line x1="67.5" y1="30.8" x2="67.5" y2="74.0"/><line x1="69.5" y1="45.2" x2="69.5" y2="88.4"/><line x1="71.5" y1="30.8" x2="71.5" y2="74.0"/><line x1="73.5" y1="45.2" x2="73.5" y2="88.4"/><line x1="74.5" y1="30.8" x2="74.5" y2="74.0"/><line x1="76.5" y1="45.2" x2="76.5" y2="88.4"/><line x1="78.5" y1="30.8" x2="78.5" y2="74.0"/><line x1="80.5" y1="45.2" x2="80.5" y2="88.4"/><line x1="82.5" y1="30.8" x2="82.5" y2="74.0"/><line x1="84.5" y1="45.2" x2="84.5" y2="88.4"/><line x1="86.5" y1="30.8" x2="86.5" y2="74.0"/><line x1="87.5" y1="45.2" x2="87.5" y2="88.4"/><line x1="89.5" y1="30.8" x2="89.5" y2="74.0"/><line x1="91.5" y1="45.2" x2="91.5" y2="88.4"/><line x1="93.5" y1="30.8" x2="93.5" y2="74.0"/><line x1="95.5" y1="45.2" x2="95.5" y2="88.4"/><line x1="97.5" y1="30.8" x2="97.5" y2="74.0"/><line x1="99.5" y1="45.2" x2="99.5" y2="88.4"/><line x1="101.5" y1="30.8" x2="101.5" y2="74.0"/><line x1="102.5" y1="45.2" x2="102.5" y2="88.4"/><line x1="104.5" y1="30.8" x2="104.5" y2="74.0"/><line x1="106.5" y1="45.2" x2="106.5" y2="88.4"/><line x1="108.5" y1="30.8" x2="108.5" y2="74.0"/><line x1="110.5" y1="45.2" x2="110.5" y2="88.4"/><line x1="112.5" y1="30.8" x2="112.5" y2="74.0"/><line x1="114.5" y1="45.2" x2="114.5" y2="88.4"/><line x1="116.5" y1="30.8" x2="116.5" y2="74.0"/><line x1="117.5" y1="45.2" x2="117.5" y2="88.4"/><line x1="119.5" y1="30.8" x2="119.5" y2="74.0"/><line x1="121.5" y1="45.2" x2="121.5" y2="88.4"/><line x1="123.5" y1="30.8" x2="123.5" y2="74.0"/><line x1="125.5" y1="45.2" x2="125.5" y2="88.4"/><line x1="127.5" y1="30.8" x2="127.5" y2="74.0"/><line x1="129.5" y1="45.2" x2="129.5" y2="88.4"/><line x1="130.5" y1="30.8" x2="130.5" y2="74.0"/><line x1="132.5" y1="45.2" x2="132.5" y2="88.4"/><line x1="134.5" y1="30.8" x2="134.5" y2="74.0"/><line x1="136.5" y1="45.2" x2="136.5" y2="88.4"/><line x1="138.5" y1="30.8" x2="138.5" y2="74.0"/><line x1="140.5" y1="45.2" x2="140.5" y2="88.4"/><line x1="142.5" y1="30.8" x2="142.5" y2="74.0"/><line x1="144.5" y1="45.2" x2="144.5" y2="88.4"/><line x1="145.5" y1="30.8" x2="145.5" y2="74.0"/><line x1="147.5" y1="45.2" x2="147.5" y2="88.4"/><line x1="149.5" y1="30.8" x2="149.5" y2="74.0"/><line x1="151.5" y1="45.2" x2="151.5" y2="88.4"/><line x1="153.5" y1="30.8" x2="153.5" y2="74.0"/><line x1="155.5" y1="45.2" x2="155.5" y2="88.4"/><line x1="157.5" y1="30.8" x2="157.5" y2="74.0"/><line x1="159.5" y1="45.2" x2="159.5" y2="88.4"/><line x1="160.5" y1="30.8" x2="160.5" y2="74.0"/><line x1="162.5" y1="45.2" x2="162.5" y2="88.4"/><line x1="164.5" y1="30.8" x2="164.5" y2="74.0"/><line x1="166.5" y1="45.2" x2="166.5" y2="88.4"/><line x1="168.5" y1="30.8" x2="168.5" y2="74.0"/><line x1="170.5" y1="45.2" x2="170.5" y2="88.4"/><line x1="172.5" y1="30.8" x2="172.5" y2="74.0"/><line x1="173.5" y1="45.2" x2="173.5" y2="88.4"/><line x1="175.5" y1="30.8" x2="175.5" y2="74.0"/><line x1="177.5" y1="45.2" x2="177.5" y2="88.4"/><line x1="179.5" y1="30.8" x2="179.5" y2="74.0"/><line x1="181.5" y1="45.2" x2="181.5" y2="88.4"/><line x1="183.5" y1="30.8" x2="183.5" y2="74.0"/><line x1="185.5" y1="45.2" x2="185.5" y2="88.4"/><line x1="187.5" y1="30.8" x2="187.5" y2="74.0"/><line x1="188.5" y1="45.2" x2="188.5" y2="88.4"/><line x1="190.5" y1="30.8" x2="190.5" y2="74.0"/><line x1="192.5" y1="45.2" x2="192.5" y2="88.4"/><line x1="194.5" y1="30.8" x2="194.5" y2="74.0"/><line x1="196.5" y1="45.2" x2="196.5" y2="88.4"/><line x1="198.5" y1="30.8" x2="198.5" y2="74.0"/><line x1="200.5" y1="45.2" x2="200.5" y2="88.4"/><line x1="202.5" y1="30.8" x2="202.5" y2="74.0"/><line x1="203.5" y1="45.2" x2="203.5" y2="88.4"/><line x1="205.5" y1="30.8" x2="205.5" y2="74.0"/><line x1="207.5" y1="45.2" x2="207.5" y2="88.4"/><line x1="209.5" y1="30.8" x2="209.5" y2="74.0"/></g><rect x="27.9" y="28.7" width="4.2" height="4.2" fill="#fff" stroke="#000" stroke-width="1.2"/><rect x="29.8" y="86.3" width="4.2" height="4.2" fill="#fff" stroke="#000" stroke-width="1.2"/><rect x="31.6" y="28.7" width="4.2" height="4.2" fill="#fff" stroke="#000" stroke-width="1.2"/><rect x="33.5" y="86.3" width="4.2" height="4.2" fill="#fff" stroke="#000" stroke-width="1.2"/><rect x="35.4" y="28.7" width="4.2" height="4.2" fill="#fff" stroke="#000" stroke-width="1.2"/><rect x="37.2" y="86.3" width="4.2" height="4.2" fill="#fff" stroke="#000" stroke-width="1.2"/><rect x="39.1" y="28.7" width="4.2" height="4.2" fill="#fff" stroke="#000" stroke-width="1.2"/><rect x="41.0" y="86.3" width="4.2" height="4.2" fill="#fff" stroke="#000" stroke-width="1.2"/><rect x="42.9" y="28.7" width="4.2" height="4.2" fill="#fff" stroke="#000" stroke-width="1.2"/><rect x="44.7" y="86.3" width="4.2" height="4.2" fill="#fff" stroke="#000" stroke-width="1.2"/><rect x="46.6" y="28.7" width="4.2" height="4.2" fill="#fff" stroke="#000" stroke-width="1.2"/><rect x="48.5" y="86.3" width="4.2" height="4.2" fill="#fff" stroke="#000" stroke-width="1.2"/><rect x="50.3" y="28.7" width="4.2" height="4.2" fill="#fff" stroke="#000" stroke-width="1.2"/><rect x="52.2" y="86.3" width="4.2" height="4.2" fill="#fff" stroke="#000" stroke-width="1.2"/><rect x="54.1" y="28.7" width="4.2" height="4.2" fill="#fff" stroke="#000" stroke-width="1.2"/><rect x="55.9" y="86.3" width="4.2" height="4.2" fill="#fff" stroke="#000" stroke-width="1.2"/><rect x="57.8" y="28.7" width="4.2" height="4.2" fill="#fff" stroke="#000" stroke-width="1.2"/><rect x="59.7" y="86.3" width="4.2" height="4.2" fill="#fff" stroke="#000" stroke-width="1.2"/><rect x="61.6" y="28.7" width="4.2" height="4.2" fill="#fff" stroke="#000" stroke-width="1.2"/><rect x="63.4" y="86.3" width="4.2" height="4.2" fill="#fff" stroke="#000" stroke-width="1.2"/><rect x="65.3" y="28.7" width="4.2" height="4.2" fill="#fff" stroke="#000" stroke-width="1.2"/><rect x="67.2" y="86.3" width="4.2" height="4.2" fill="#fff" stroke="#000" stroke-width="1.2"/><rect x="69.0" y="28.7" width="4.2" height="4.2" fill="#fff" stroke="#000" stroke-width="1.2"/><rect x="70.9" y="86.3" width="4.2" height="4.2" fill="#fff" stroke="#000" stroke-width="1.2"/><rect x="72.8" y="28.7" width="4.2" height="4.2" fill="#fff" stroke="#000" stroke-width="1.2"/><rect x="74.6" y="86.3" width="4.2" height="4.2" fill="#fff" stroke="#000" stroke-width="1.2"/><rect x="76.5" y="28.7" width="4.2" height="4.2" fill="#fff" stroke="#000" stroke-width="1.2"/><rect x="78.4" y="86.3" width="4.2" height="4.2" fill="#fff" stroke="#000" stroke-width="1.2"/><rect x="80.3" y="28.7" width="4.2" height="4.2" fill="#fff" stroke="#000" stroke-width="1.2"/><rect x="82.1" y="86.3" width="4.2" height="4.2" fill="#fff" stroke="#000" stroke-width="1.2"/><rect x="84.0" y="28.7" width="4.2" height="4.2" fill="#fff" stroke="#000" stroke-width="1.2"/><rect x="85.9" y="86.3" width="4.2" height="4.2" fill="#fff" stroke="#000" stroke-width="1.2"/><rect x="87.7" y="28.7" width="4.2" height="4.2" fill="#fff" stroke="#000" stroke-width="1.2"/><rect x="89.6" y="86.3" width="4.2" height="4.2" fill="#fff" stroke="#000" stroke-width="1.2"/><rect x="91.5" y="28.7" width="4.2" height="4.2" fill="#fff" stroke="#000" stroke-width="1.2"/><rect x="93.4" y="86.3" width="4.2" height="4.2" fill="#fff" stroke="#000" stroke-width="1.2"/><rect x="95.2" y="28.7" width="4.2" height="4.2" fill="#fff" stroke="#000" stroke-width="1.2"/><rect x="97.1" y="86.3" width="4.2" height="4.2" fill="#fff" stroke="#000" stroke-width="1.2"/><rect x="99.0" y="28.7" width="4.2" height="4.2" fill="#fff" stroke="#000" stroke-width="1.2"/><rect x="100.8" y="86.3" width="4.2" height="4.2" fill="#fff" stroke="#000" stroke-width="1.2"/><rect x="102.7" y="28.7" width="4.2" height="4.2" fill="#fff" stroke="#000" stroke-width="1.2"/><rect x="104.6" y="86.3" width="4.2" height="4.2" fill="#fff" stroke="#000" stroke-width="1.2"/><rect x="106.4" y="28.7" width="4.2" height="4.2" fill="#fff" stroke="#000" stroke-width="1.2"/><rect x="108.3" y="86.3" width="4.2" height="4.2" fill="#fff" stroke="#000" stroke-width="1.2"/><rect x="110.2" y="28.7" width="4.2" height="4.2" fill="#fff" stroke="#000" stroke-width="1.2"/><rect x="112.1" y="86.3" width="4.2" height="4.2" fill="#fff" stroke="#000" stroke-width="1.2"/><rect x="113.9" y="28.7" width="4.2" height="4.2" fill="#fff" stroke="#000" stroke-width="1.2"/><rect x="115.8" y="86.3" width="4.2" height="4.2" fill="#fff" stroke="#000" stroke-width="1.2"/><rect x="117.7" y="28.7" width="4.2" height="4.2" fill="#fff" stroke="#000" stroke-width="1.2"/><rect x="119.5" y="86.3" width="4.2" height="4.2" fill="#fff" stroke="#000" stroke-width="1.2"/><rect x="121.4" y="28.7" width="4.2" height="4.2" fill="#fff" stroke="#000" stroke-width="1.2"/><rect x="123.3" y="86.3" width="4.2" height="4.2" fill="#fff" stroke="#000" stroke-width="1.2"/><rect x="125.1" y="28.7" width="4.2" height="4.2" fill="#fff" stroke="#000" stroke-width="1.2"/><rect x="127.0" y="86.3" width="4.2" height="4.2" fill="#fff" stroke="#000" stroke-width="1.2"/><rect x="128.9" y="28.7" width="4.2" height="4.2" fill="#fff" stroke="#000" stroke-width="1.2"/><rect x="130.8" y="86.3" width="4.2" height="4.2" fill="#fff" stroke="#000" stroke-width="1.2"/><rect x="132.6" y="28.7" width="4.2" height="4.2" fill="#fff" stroke="#000" stroke-width="1.2"/><rect x="134.5" y="86.3" width="4.2" height="4.2" fill="#fff" stroke="#000" stroke-width="1.2"/><rect x="136.4" y="28.7" width="4.2" height="4.2" fill="#fff" stroke="#000" stroke-width="1.2"/><rect x="138.2" y="86.3" width="4.2" height="4.2" fill="#fff" stroke="#000" stroke-width="1.2"/><rect x="140.1" y="28.7" width="4.2" height="4.2" fill="#fff" stroke="#000" stroke-width="1.2"/><rect x="142.0" y="86.3" width="4.2" height="4.2" fill="#fff" stroke="#000" stroke-width="1.2"/><rect x="143.8" y="28.7" width="4.2" height="4.2" fill="#fff" stroke="#000" stroke-width="1.2"/><rect x="145.7" y="86.3" width="4.2" height="4.2" fill="#fff" stroke="#000" stroke-width="1.2"/><rect x="147.6" y="28.7" width="4.2" height="4.2" fill="#fff" stroke="#000" stroke-width="1.2"/><rect x="149.5" y="86.3" width="4.2" height="4.2" fill="#fff" stroke="#000" stroke-width="1.2"/><rect x="151.3" y="28.7" width="4.2" height="4.2" fill="#fff" stroke="#000" stroke-width="1.2"/><rect x="153.2" y="86.3" width="4.2" height="4.2" fill="#fff" stroke="#000" stroke-width="1.2"/><rect x="155.1" y="28.7" width="4.2" height="4.2" fill="#fff" stroke="#000" stroke-width="1.2"/><rect x="156.9" y="86.3" width="4.2" height="4.2" fill="#fff" stroke="#000" stroke-width="1.2"/><rect x="158.8" y="28.7" width="4.2" height="4.2" fill="#fff" stroke="#000" stroke-width="1.2"/><rect x="160.7" y="86.3" width="4.2" height="4.2" fill="#fff" stroke="#000" stroke-width="1.2"/><rect x="162.5" y="28.7" width="4.2" height="4.2" fill="#fff" stroke="#000" stroke-width="1.2"/><rect x="164.4" y="86.3" width="4.2" height="4.2" fill="#fff" stroke="#000" stroke-width="1.2"/><rect x="166.3" y="28.7" width="4.2" height="4.2" fill="#fff" stroke="#000" stroke-width="1.2"/><rect x="168.2" y="86.3" width="4.2" height="4.2" fill="#fff" stroke="#000" stroke-width="1.2"/><rect x="170.0" y="28.7" width="4.2" height="4.2" fill="#fff" stroke="#000" stroke-width="1.2"/><rect x="171.9" y="86.3" width="4.2" height="4.2" fill="#fff" stroke="#000" stroke-width="1.2"/><rect x="173.8" y="28.7" width="4.2" height="4.2" fill="#fff" stroke="#000" stroke-width="1.2"/><rect x="175.6" y="86.3" width="4.2" height="4.2" fill="#fff" stroke="#000" stroke-width="1.2"/><rect x="177.5" y="28.7" width="4.2" height="4.2" fill="#fff" stroke="#000" stroke-width="1.2"/><rect x="179.4" y="86.3" width="4.2" height="4.2" fill="#fff" stroke="#000" stroke-width="1.2"/><rect x="181.2" y="28.7" width="4.2" height="4.2" fill="#fff" stroke="#000" stroke-width="1.2"/><rect x="183.1" y="86.3" width="4.2" height="4.2" fill="#fff" stroke="#000" stroke-width="1.2"/><rect x="185.0" y="28.7" width="4.2" height="4.2" fill="#fff" stroke="#000" stroke-width="1.2"/><rect x="186.9" y="86.3" width="4.2" height="4.2" fill="#fff" stroke="#000" stroke-width="1.2"/><rect x="188.7" y="28.7" width="4.2" height="4.2" fill="#fff" stroke="#000" stroke-width="1.2"/><rect x="190.6" y="86.3" width="4.2" height="4.2" fill="#fff" stroke="#000" stroke-width="1.2"/><rect x="192.5" y="28.7" width="4.2" height="4.2" fill="#fff" stroke="#000" stroke-width="1.2"/><rect x="194.3" y="86.3" width="4.2" height="4.2" fill="#fff" stroke="#000" stroke-width="1.2"/><rect x="196.2" y="28.7" width="4.2" height="4.2" fill="#fff" stroke="#000" stroke-width="1.2"/><rect x="198.1" y="86.3" width="4.2" height="4.2" fill="#fff" stroke="#000" stroke-width="1.2"/><rect x="199.9" y="28.7" width="4.2" height="4.2" fill="#fff" stroke="#000" stroke-width="1.2"/><rect x="201.8" y="86.3" width="4.2" height="4.2" fill="#fff" stroke="#000" stroke-width="1.2"/><rect x="203.7" y="28.7" width="4.2" height="4.2" fill="#fff" stroke="#000" stroke-width="1.2"/><rect x="205.6" y="86.3" width="4.2" height="4.2" fill="#fff" stroke="#000" stroke-width="1.2"/><rect x="207.4" y="28.7" width="4.2" height="4.2" fill="#fff" stroke="#000" stroke-width="1.2"/></svg>
<svg style="left:912px;top:650px" width="218" height="115"><rect x="0.5" y="0.5" width="217" height="114" fill="#4d4d4d" stroke="#000" stroke-width="1.2"/><text x="107.0" y="10.5" font-size="8.6" fill="#e0e0e0" text-anchor="middle" font-family="Liberation Sans" letter-spacing=".3">FLOATINGPOINT_64</text><g shape-rendering="crispEdges" stroke="#000" stroke-width="1"><line x1="28.5" y1="88.5" x2="212" y2="88.5" stroke-dasharray="6 4"/><line x1="28.5" y1="69.5" x2="212" y2="69.5" stroke-dasharray="6 4"/><line x1="28.5" y1="49.5" x2="212" y2="49.5" stroke-dasharray="6 4"/><line x1="28.5" y1="30.5" x2="212" y2="30.5" stroke-dasharray="6 4"/><line x1="74.5" y1="11.6" x2="74.5" y2="111.6" stroke-dasharray="6 4"/><line x1="134.5" y1="11.6" x2="134.5" y2="111.6" stroke-dasharray="6 4"/><line x1="195.5" y1="11.6" x2="195.5" y2="111.6" stroke-dasharray="6 4"/><line x1="28.5" y1="11.6" x2="28.5" y2="107.6" stroke-width="2"/><line x1="22" y1="107.5" x2="212" y2="107.5" stroke-width="2"/><line x1="22" y1="107.5" x2="28" y2="107.5"/><line x1="24" y1="103.5" x2="28" y2="103.5"/><line x1="24" y1="99.5" x2="28" y2="99.5"/><line x1="24" y1="96.5" x2="28" y2="96.5"/><line x1="24" y1="92.5" x2="28" y2="92.5"/><line x1="22" y1="88.5" x2="28" y2="88.5"/><line x1="24" y1="84.5" x2="28" y2="84.5"/><line x1="24" y1="80.5" x2="28" y2="80.5"/><line x1="24" y1="76.5" x2="28" y2="76.5"/><line x1="24" y1="73.5" x2="28" y2="73.5"/><line x1="22" y1="69.5" x2="28" y2="69.5"/><line x1="24" y1="65.5" x2="28" y2="65.5"/><line x1="24" y1="61.5" x2="28" y2="61.5"/><line x1="24" y1="57.5" x2="28" y2="57.5"/><line x1="24" y1="53.5" x2="28" y2="53.5"/><line x1="22" y1="49.5" x2="28" y2="49.5"/><line x1="24" y1="46.5" x2="28" y2="46.5"/><line x1="24" y1="42.5" x2="28" y2="42.5"/><line x1="24" y1="38.5" x2="28" y2="38.5"/><line x1="24" y1="34.5" x2="28" y2="34.5"/><line x1="22" y1="30.5" x2="28" y2="30.5"/><line x1="24" y1="26.5" x2="28" y2="26.5"/><line x1="24" y1="23.5" x2="28" y2="23.5"/><line x1="24" y1="19.5" x2="28" y2="19.5"/><line x1="24" y1="15.5" x2="28" y2="15.5"/><line x1="22" y1="11.5" x2="28" y2="11.5"/><line x1="43.5" y1="107.6" x2="43.5" y2="111.6"/><line x1="104.5" y1="107.6" x2="104.5" y2="111.6"/><line x1="165.5" y1="107.6" x2="165.5" y2="111.6"/></g><text x="27" y="110.6" font-size="8.8" fill="#000" text-anchor="end" font-family="Liberation Sans">0.0</text><text x="27" y="91.4" font-size="8.8" fill="#000" text-anchor="end" font-family="Liberation Sans">20.0</text><text x="27" y="72.2" font-size="8.8" fill="#000" text-anchor="end" font-family="Liberation Sans">40.0</text><text x="27" y="53.0" font-size="8.8" fill="#000" text-anchor="end" font-family="Liberation Sans">60.0</text><text x="27" y="33.8" font-size="8.8" fill="#000" text-anchor="end" font-family="Liberation Sans">80.0</text><text x="27" y="14.6" font-size="8.8" fill="#000" text-anchor="end" font-family="Liberation Sans">100.0</text><polyline points="30.0,20.1 32.2,23.0 34.4,26.3 36.6,29.8 38.8,33.7 41.0,37.8 43.2,42.1 45.4,46.6 47.6,51.2 49.8,55.9 52.0,60.7 54.2,65.4 56.4,70.1 58.6,74.6 60.8,79.1 63.0,83.3 65.2,87.3 67.4,91.0 69.6,94.4 71.8,97.5 74.0,100.2 76.2,102.6 78.4,104.5 80.6,105.9 82.8,106.9 85.0,107.5 87.2,107.6 89.4,107.2 91.6,106.3 93.8,105.0 96.0,103.3 98.2,101.1 100.4,98.6 102.6,95.6 104.8,92.3 107.0,88.7 109.2,84.8 111.4,80.6 113.6,76.3 115.8,71.7 118.0,67.1 120.2,62.4 122.4,57.7 124.6,52.9 126.8,48.3 129.0,43.7 131.2,39.4 133.4,35.2 135.6,31.2 137.8,27.5 140.0,24.2 142.2,21.2 144.4,18.5 146.6,16.3 148.8,14.4 151.0,13.1 153.2,12.1 155.4,11.7 157.6,11.7 159.8,12.1 162.0,13.1 164.2,14.4 166.4,16.3 168.6,18.5 170.8,21.2 173.0,24.2 175.2,27.5 177.4,31.2 179.6,35.2 181.8,39.4 184.0,43.7 186.2,48.3 188.4,52.9 190.6,57.7 192.8,62.4 195.0,67.1 197.2,71.7 199.4,76.3 201.6,80.6 203.8,84.8 206.0,88.7 208.2,92.3 210.4,95.6" fill="none" stroke="#fff" stroke-width="1.1"/><rect x="27.9" y="18.0" width="4.2" height="4.2" fill="#fff" stroke="#000" stroke-width="1.2"/><rect x="30.1" y="20.9" width="4.2" height="4.2" fill="#fff" stroke="#000" stroke-width="1.2"/><rect x="32.3" y="24.2" width="4.2" height="4.2" fill="#fff" stroke="#000" stroke-width="1.2"/><rect x="34.5" y="27.7" width="4.2" height="4.2" fill="#fff" stroke="#000" stroke-width="1.2"/><rect x="36.7" y="31.6" width="4.2" height="4.2" fill="#fff" stroke="#000" stroke-width="1.2"/><rect x="38.9" y="35.7" width="4.2" height="4.2" fill="#fff" stroke="#000" stroke-width="1.2"/><rect x="41.1" y="40.0" width="4.2" height="4.2" fill="#fff" stroke="#000" stroke-width="1.2"/><rect x="43.3" y="44.5" width="4.2" height="4.2" fill="#fff" stroke="#000" stroke-width="1.2"/><rect x="45.5" y="49.1" width="4.2" height="4.2" fill="#fff" stroke="#000" stroke-width="1.2"/><rect x="47.7" y="53.8" width="4.2" height="4.2" fill="#fff" stroke="#000" stroke-width="1.2"/><rect x="49.9" y="58.6" width="4.2" height="4.2" fill="#fff" stroke="#000" stroke-width="1.2"/><rect x="52.1" y="63.3" width="4.2" height="4.2" fill="#fff" stroke="#000" stroke-width="1.2"/><rect x="54.3" y="68.0" width="4.2" height="4.2" fill="#fff" stroke="#000" stroke-width="1.2"/><rect x="56.5" y="72.5" width="4.2" height="4.2" fill="#fff" stroke="#000" stroke-width="1.2"/><rect x="58.7" y="77.0" width="4.2" height="4.2" fill="#fff" stroke="#000" stroke-width="1.2"/><rect x="60.9" y="81.2" width="4.2" height="4.2" fill="#fff" stroke="#000" stroke-width="1.2"/><rect x="63.1" y="85.2" width="4.2" height="4.2" fill="#fff" stroke="#000" stroke-width="1.2"/><rect x="65.3" y="88.9" width="4.2" height="4.2" fill="#fff" stroke="#000" stroke-width="1.2"/><rect x="67.5" y="92.3" width="4.2" height="4.2" fill="#fff" stroke="#000" stroke-width="1.2"/><rect x="69.7" y="95.4" width="4.2" height="4.2" fill="#fff" stroke="#000" stroke-width="1.2"/><rect x="71.9" y="98.1" width="4.2" height="4.2" fill="#fff" stroke="#000" stroke-width="1.2"/><rect x="74.1" y="100.5" width="4.2" height="4.2" fill="#fff" stroke="#000" stroke-width="1.2"/><rect x="76.3" y="102.4" width="4.2" height="4.2" fill="#fff" stroke="#000" stroke-width="1.2"/><rect x="78.5" y="103.8" width="4.2" height="4.2" fill="#fff" stroke="#000" stroke-width="1.2"/><rect x="80.7" y="104.8" width="4.2" height="4.2" fill="#fff" stroke="#000" stroke-width="1.2"/><rect x="82.9" y="105.4" width="4.2" height="4.2" fill="#fff" stroke="#000" stroke-width="1.2"/><rect x="85.1" y="105.5" width="4.2" height="4.2" fill="#fff" stroke="#000" stroke-width="1.2"/><rect x="87.3" y="105.1" width="4.2" height="4.2" fill="#fff" stroke="#000" stroke-width="1.2"/><rect x="89.5" y="104.2" width="4.2" height="4.2" fill="#fff" stroke="#000" stroke-width="1.2"/><rect x="91.7" y="102.9" width="4.2" height="4.2" fill="#fff" stroke="#000" stroke-width="1.2"/><rect x="93.9" y="101.2" width="4.2" height="4.2" fill="#fff" stroke="#000" stroke-width="1.2"/><rect x="96.1" y="99.0" width="4.2" height="4.2" fill="#fff" stroke="#000" stroke-width="1.2"/><rect x="98.3" y="96.5" width="4.2" height="4.2" fill="#fff" stroke="#000" stroke-width="1.2"/><rect x="100.5" y="93.5" width="4.2" height="4.2" fill="#fff" stroke="#000" stroke-width="1.2"/><rect x="102.7" y="90.2" width="4.2" height="4.2" fill="#fff" stroke="#000" stroke-width="1.2"/><rect x="104.9" y="86.6" width="4.2" height="4.2" fill="#fff" stroke="#000" stroke-width="1.2"/><rect x="107.1" y="82.7" width="4.2" height="4.2" fill="#fff" stroke="#000" stroke-width="1.2"/><rect x="109.3" y="78.5" width="4.2" height="4.2" fill="#fff" stroke="#000" stroke-width="1.2"/><rect x="111.5" y="74.2" width="4.2" height="4.2" fill="#fff" stroke="#000" stroke-width="1.2"/><rect x="113.7" y="69.6" width="4.2" height="4.2" fill="#fff" stroke="#000" stroke-width="1.2"/><rect x="115.9" y="65.0" width="4.2" height="4.2" fill="#fff" stroke="#000" stroke-width="1.2"/><rect x="118.1" y="60.3" width="4.2" height="4.2" fill="#fff" stroke="#000" stroke-width="1.2"/><rect x="120.3" y="55.6" width="4.2" height="4.2" fill="#fff" stroke="#000" stroke-width="1.2"/><rect x="122.5" y="50.8" width="4.2" height="4.2" fill="#fff" stroke="#000" stroke-width="1.2"/><rect x="124.7" y="46.2" width="4.2" height="4.2" fill="#fff" stroke="#000" stroke-width="1.2"/><rect x="126.9" y="41.6" width="4.2" height="4.2" fill="#fff" stroke="#000" stroke-width="1.2"/><rect x="129.1" y="37.3" width="4.2" height="4.2" fill="#fff" stroke="#000" stroke-width="1.2"/><rect x="131.3" y="33.1" width="4.2" height="4.2" fill="#fff" stroke="#000" stroke-width="1.2"/><rect x="133.5" y="29.1" width="4.2" height="4.2" fill="#fff" stroke="#000" stroke-width="1.2"/><rect x="135.7" y="25.4" width="4.2" height="4.2" fill="#fff" stroke="#000" stroke-width="1.2"/><rect x="137.9" y="22.1" width="4.2" height="4.2" fill="#fff" stroke="#000" stroke-width="1.2"/><rect x="140.1" y="19.1" width="4.2" height="4.2" fill="#fff" stroke="#000" stroke-width="1.2"/><rect x="142.3" y="16.4" width="4.2" height="4.2" fill="#fff" stroke="#000" stroke-width="1.2"/><rect x="144.5" y="14.2" width="4.2" height="4.2" fill="#fff" stroke="#000" stroke-width="1.2"/><rect x="146.7" y="12.3" width="4.2" height="4.2" fill="#fff" stroke="#000" stroke-width="1.2"/><rect x="148.9" y="11.0" width="4.2" height="4.2" fill="#fff" stroke="#000" stroke-width="1.2"/><rect x="151.1" y="10.0" width="4.2" height="4.2" fill="#fff" stroke="#000" stroke-width="1.2"/><rect x="153.3" y="9.6" width="4.2" height="4.2" fill="#fff" stroke="#000" stroke-width="1.2"/><rect x="155.5" y="9.6" width="4.2" height="4.2" fill="#fff" stroke="#000" stroke-width="1.2"/><rect x="157.7" y="10.0" width="4.2" height="4.2" fill="#fff" stroke="#000" stroke-width="1.2"/><rect x="159.9" y="11.0" width="4.2" height="4.2" fill="#fff" stroke="#000" stroke-width="1.2"/><rect x="162.1" y="12.3" width="4.2" height="4.2" fill="#fff" stroke="#000" stroke-width="1.2"/><rect x="164.3" y="14.2" width="4.2" height="4.2" fill="#fff" stroke="#000" stroke-width="1.2"/><rect x="166.5" y="16.4" width="4.2" height="4.2" fill="#fff" stroke="#000" stroke-width="1.2"/><rect x="168.7" y="19.1" width="4.2" height="4.2" fill="#fff" stroke="#000" stroke-width="1.2"/><rect x="170.9" y="22.1" width="4.2" height="4.2" fill="#fff" stroke="#000" stroke-width="1.2"/><rect x="173.1" y="25.4" width="4.2" height="4.2" fill="#fff" stroke="#000" stroke-width="1.2"/><rect x="175.3" y="29.1" width="4.2" height="4.2" fill="#fff" stroke="#000" stroke-width="1.2"/><rect x="177.5" y="33.1" width="4.2" height="4.2" fill="#fff" stroke="#000" stroke-width="1.2"/><rect x="179.7" y="37.3" width="4.2" height="4.2" fill="#fff" stroke="#000" stroke-width="1.2"/><rect x="181.9" y="41.6" width="4.2" height="4.2" fill="#fff" stroke="#000" stroke-width="1.2"/><rect x="184.1" y="46.2" width="4.2" height="4.2" fill="#fff" stroke="#000" stroke-width="1.2"/><rect x="186.3" y="50.8" width="4.2" height="4.2" fill="#fff" stroke="#000" stroke-width="1.2"/><rect x="188.5" y="55.6" width="4.2" height="4.2" fill="#fff" stroke="#000" stroke-width="1.2"/><rect x="190.7" y="60.3" width="4.2" height="4.2" fill="#fff" stroke="#000" stroke-width="1.2"/><rect x="192.9" y="65.0" width="4.2" height="4.2" fill="#fff" stroke="#000" stroke-width="1.2"/><rect x="195.1" y="69.6" width="4.2" height="4.2" fill="#fff" stroke="#000" stroke-width="1.2"/><rect x="197.3" y="74.2" width="4.2" height="4.2" fill="#fff" stroke="#000" stroke-width="1.2"/><rect x="199.5" y="78.5" width="4.2" height="4.2" fill="#fff" stroke="#000" stroke-width="1.2"/><rect x="201.7" y="82.7" width="4.2" height="4.2" fill="#fff" stroke="#000" stroke-width="1.2"/><rect x="203.9" y="86.6" width="4.2" height="4.2" fill="#fff" stroke="#000" stroke-width="1.2"/><rect x="206.1" y="90.2" width="4.2" height="4.2" fill="#fff" stroke="#000" stroke-width="1.2"/><rect x="208.3" y="93.5" width="4.2" height="4.2" fill="#fff" stroke="#000" stroke-width="1.2"/></svg>
<svg style="left:1141px;top:650px" width="218" height="115"><rect x="0.5" y="0.5" width="217" height="114" fill="#4d4d4d" stroke="#000" stroke-width="1.2"/><text x="107.0" y="10.5" font-size="8.6" fill="#e0e0e0" text-anchor="middle" font-family="Liberation Sans" letter-spacing=".3">INTEGER_32</text><g shape-rendering="crispEdges" stroke="#000" stroke-width="1"><line x1="28.5" y1="88.5" x2="212" y2="88.5" stroke-dasharray="6 4"/><line x1="28.5" y1="69.5" x2="212" y2="69.5" stroke-dasharray="6 4"/><line x1="28.5" y1="49.5" x2="212" y2="49.5" stroke-dasharray="6 4"/><line x1="28.5" y1="30.5" x2="212" y2="30.5" stroke-dasharray="6 4"/><line x1="74.5" y1="11.6" x2="74.5" y2="111.6" stroke-dasharray="6 4"/><line x1="134.5" y1="11.6" x2="134.5" y2="111.6" stroke-dasharray="6 4"/><line x1="195.5" y1="11.6" x2="195.5" y2="111.6" stroke-dasharray="6 4"/><line x1="28.5" y1="11.6" x2="28.5" y2="107.6" stroke-width="2"/><line x1="22" y1="107.5" x2="212" y2="107.5" stroke-width="2"/><line x1="22" y1="107.5" x2="28" y2="107.5"/><line x1="24" y1="103.5" x2="28" y2="103.5"/><line x1="24" y1="99.5" x2="28" y2="99.5"/><line x1="24" y1="96.5" x2="28" y2="96.5"/><line x1="24" y1="92.5" x2="28" y2="92.5"/><line x1="22" y1="88.5" x2="28" y2="88.5"/><line x1="24" y1="84.5" x2="28" y2="84.5"/><line x1="24" y1="80.5" x2="28" y2="80.5"/><line x1="24" y1="76.5" x2="28" y2="76.5"/><line x1="24" y1="73.5" x2="28" y2="73.5"/><line x1="22" y1="69.5" x2="28" y2="69.5"/><line x1="24" y1="65.5" x2="28" y2="65.5"/><line x1="24" y1="61.5" x2="28" y2="61.5"/><line x1="24" y1="57.5" x2="28" y2="57.5"/><line x1="24" y1="53.5" x2="28" y2="53.5"/><line x1="22" y1="49.5" x2="28" y2="49.5"/><line x1="24" y1="46.5" x2="28" y2="46.5"/><line x1="24" y1="42.5" x2="28" y2="42.5"/><line x1="24" y1="38.5" x2="28" y2="38.5"/><line x1="24" y1="34.5" x2="28" y2="34.5"/><line x1="22" y1="30.5" x2="28" y2="30.5"/><line x1="24" y1="26.5" x2="28" y2="26.5"/><line x1="24" y1="23.5" x2="28" y2="23.5"/><line x1="24" y1="19.5" x2="28" y2="19.5"/><line x1="24" y1="15.5" x2="28" y2="15.5"/><line x1="22" y1="11.5" x2="28" y2="11.5"/><line x1="43.5" y1="107.6" x2="43.5" y2="111.6"/><line x1="104.5" y1="107.6" x2="104.5" y2="111.6"/><line x1="165.5" y1="107.6" x2="165.5" y2="111.6"/></g><text x="27" y="110.6" font-size="8.8" fill="#000" text-anchor="end" font-family="Liberation Sans">0.0</text><text x="27" y="91.4" font-size="8.8" fill="#000" text-anchor="end" font-family="Liberation Sans">20.0</text><text x="27" y="72.2" font-size="8.8" fill="#000" text-anchor="end" font-family="Liberation Sans">40.0</text><text x="27" y="53.0" font-size="8.8" fill="#000" text-anchor="end" font-family="Liberation Sans">60.0</text><text x="27" y="33.8" font-size="8.8" fill="#000" text-anchor="end" font-family="Liberation Sans">80.0</text><text x="27" y="14.6" font-size="8.8" fill="#000" text-anchor="end" font-family="Liberation Sans">100.0</text><polyline points="30.0,64.1 32.2,54.0 34.4,19.7 36.6,62.8 38.8,58.9 41.0,51.4 43.2,89.3 45.4,58.5 47.6,47.4 49.8,32.0 52.0,97.8 54.2,78.1 56.4,98.1 58.6,30.5 60.8,41.4 63.0,102.7 65.2,14.2 67.4,15.9 69.6,45.1 71.8,48.7 74.0,91.8 76.2,105.2 78.4,56.9 80.6,101.0 82.8,88.7 85.0,83.9 87.2,103.8 89.4,63.0 91.6,65.2 93.8,27.4 96.0,57.8 98.2,46.4 100.4,59.6 102.6,44.3 104.8,63.6 107.0,80.5 109.2,12.8 111.4,13.0 113.6,27.6 115.8,40.0 118.0,77.0 120.2,85.0 122.4,79.4 124.6,100.0 126.8,34.5 129.0,69.0 131.2,27.0 133.4,70.3 135.6,16.5 137.8,26.9 140.0,106.6 142.2,86.9 144.4,21.0 146.6,62.4 148.8,14.4 151.0,69.3 153.2,99.8 155.4,47.4 157.6,33.4 159.8,81.3 162.0,98.4 164.2,75.4 166.4,15.9 168.6,35.3 170.8,95.5 173.0,83.5 175.2,97.1 177.4,101.0 179.6,31.7 181.8,89.9 184.0,54.0 186.2,64.5 188.4,88.7 190.6,37.8 192.8,94.3 195.0,46.1 197.2,95.7 199.4,67.1 201.6,86.6 203.8,81.3 206.0,15.3 208.2,31.1 210.4,78.0" fill="none" stroke="#fff" stroke-width="1.1"/><rect x="27.9" y="62.0" width="4.2" height="4.2" fill="#fff" stroke="#000" stroke-width="1.2"/><rect x="30.1" y="51.9" width="4.2" height="4.2" fill="#fff" stroke="#000" stroke-width="1.2"/><rect x="32.3" y="17.6" width="4.2" height="4.2" fill="#fff" stroke="#000" stroke-width="1.2"/><rect x="34.5" y="60.7" width="4.2" height="4.2" fill="#fff" stroke="#000" stroke-width="1.2"/><rect x="36.7" y="56.8" width="4.2" height="4.2" fill="#fff" stroke="#000" stroke-width="1.2"/><rect x="38.9" y="49.3" width="4.2" height="4.2" fill="#fff" stroke="#000" stroke-width="1.2"/><rect x="41.1" y="87.2" width="4.2" height="4.2" fill="#fff" stroke="#000" stroke-width="1.2"/><rect x="43.3" y="56.4" width="4.2" height="4.2" fill="#fff" stroke="#000" stroke-width="1.2"/><rect x="45.5" y="45.3" width="4.2" height="4.2" fill="#fff" stroke="#000" stroke-width="1.2"/><rect x="47.7" y="29.9" width="4.2" height="4.2" fill="#fff" stroke="#000" stroke-width="1.2"/><rect x="49.9" y="95.7" width="4.2" height="4.2" fill="#fff" stroke="#000" stroke-width="1.2"/><rect x="52.1" y="76.0" width="4.2" height="4.2" fill="#fff" stroke="#000" stroke-width="1.2"/><rect x="54.3" y="96.0" width="4.2" height="4.2" fill="#fff" stroke="#000" stroke-width="1.2"/><rect x="56.5" y="28.4" width="4.2" height="4.2" fill="#fff" stroke="#000" stroke-width="1.2"/><rect x="58.7" y="39.3" width="4.2" height="4.2" fill="#fff" stroke="#000" stroke-width="1.2"/><rect x="60.9" y="100.6" width="4.2" height="4.2" fill="#fff" stroke="#000" stroke-width="1.2"/><rect x="63.1" y="12.1" width="4.2" height="4.2" fill="#fff" stroke="#000" stroke-width="1.2"/><rect x="65.3" y="13.8" width="4.2" height="4.2" fill="#fff" stroke="#000" stroke-width="1.2"/><rect x="67.5" y="43.0" width="4.2" height="4.2" fill="#fff" stroke="#000" stroke-width="1.2"/><rect x="69.7" y="46.6" width="4.2" height="4.2" fill="#fff" stroke="#000" stroke-width="1.2"/><rect x="71.9" y="89.7" width="4.2" height="4.2" fill="#fff" stroke="#000" stroke-width="1.2"/><rect x="74.1" y="103.1" width="4.2" height="4.2" fill="#fff" stroke="#000" stroke-width="1.2"/><rect x="76.3" y="54.8" width="4.2" height="4.2" fill="#fff" stroke="#000" stroke-width="1.2"/><rect x="78.5" y="98.9" width="4.2" height="4.2" fill="#fff" stroke="#000" stroke-width="1.2"/><rect x="80.7" y="86.6" width="4.2" height="4.2" fill="#fff" stroke="#000" stroke-width="1.2"/><rect x="82.9" y="81.8" width="4.2" height="4.2" fill="#fff" stroke="#000" stroke-width="1.2"/><rect x="85.1" y="101.7" width="4.2" height="4.2" fill="#fff" stroke="#000" stroke-width="1.2"/><rect x="87.3" y="60.9" width="4.2" height="4.2" fill="#fff" stroke="#000" stroke-width="1.2"/><rect x="89.5" y="63.1" width="4.2" height="4.2" fill="#fff" stroke="#000" stroke-width="1.2"/><rect x="91.7" y="25.3" width="4.2" height="4.2" fill="#fff" stroke="#000" stroke-width="1.2"/><rect x="93.9" y="55.7" width="4.2" height="4.2" fill="#fff" stroke="#000" stroke-width="1.2"/><rect x="96.1" y="44.3" width="4.2" height="4.2" fill="#fff" stroke="#000" stroke-width="1.2"/><rect x="98.3" y="57.5" width="4.2" height="4.2" fill="#fff" stroke="#000" stroke-width="1.2"/><rect x="100.5" y="42.2" width="4.2" height="4.2" fill="#fff" stroke="#000" stroke-width="1.2"/><rect x="102.7" y="61.5" width="4.2" height="4.2" fill="#fff" stroke="#000" stroke-width="1.2"/><rect x="104.9" y="78.4" width="4.2" height="4.2" fill="#fff" stroke="#000" stroke-width="1.2"/><rect x="107.1" y="10.7" width="4.2" height="4.2" fill="#fff" stroke="#000" stroke-width="1.2"/><rect x="109.3" y="10.9" width="4.2" height="4.2" fill="#fff" stroke="#000" stroke-width="1.2"/><rect x="111.5" y="25.5" width="4.2" height="4.2" fill="#fff" stroke="#000" stroke-width="1.2"/><rect x="113.7" y="37.9" width="4.2" height="4.2" fill="#fff" stroke="#000" stroke-width="1.2"/><rect x="115.9" y="74.9" width="4.2" height="4.2" fill="#fff" stroke="#000" stroke-width="1.2"/><rect x="118.1" y="82.9" width="4.2" height="4.2" fill="#fff" stroke="#000" stroke-width="1.2"/><rect x="120.3" y="77.3" width="4.2" height="4.2" fill="#fff" stroke="#000" stroke-width="1.2"/><rect x="122.5" y="97.9" width="4.2" height="4.2" fill="#fff" stroke="#000" stroke-width="1.2"/><rect x="124.7" y="32.4" width="4.2" height="4.2" fill="#fff" stroke="#000" stroke-width="1.2"/><rect x="126.9" y="66.9" width="4.2" height="4.2" fill="#fff" stroke="#000" stroke-width="1.2"/><rect x="129.1" y="24.9" width="4.2" height="4.2" fill="#fff" stroke="#000" stroke-width="1.2"/><rect x="131.3" y="68.2" width="4.2" height="4.2" fill="#fff" stroke="#000" stroke-width="1.2"/><rect x="133.5" y="14.4" width="4.2" height="4.2" fill="#fff" stroke="#000" stroke-width="1.2"/><rect x="135.7" y="24.8" width="4.2" height="4.2" fill="#fff" stroke="#000" stroke-width="1.2"/><rect x="137.9" y="104.5" width="4.2" height="4.2" fill="#fff" stroke="#000" stroke-width="1.2"/><rect x="140.1" y="84.8" width="4.2" height="4.2" fill="#fff" stroke="#000" stroke-width="1.2"/><rect x="142.3" y="18.9" width="4.2" height="4.2" fill="#fff" stroke="#000" stroke-width="1.2"/><rect x="144.5" y="60.3" width="4.2" height="4.2" fill="#fff" stroke="#000" stroke-width="1.2"/><rect x="146.7" y="12.3" width="4.2" height="4.2" fill="#fff" stroke="#000" stroke-width="1.2"/><rect x="148.9" y="67.2" width="4.2" height="4.2" fill="#fff" stroke="#000" stroke-width="1.2"/><rect x="151.1" y="97.7" width="4.2" height="4.2" fill="#fff" stroke="#000" stroke-width="1.2"/><rect x="153.3" y="45.3" width="4.2" height="4.2" fill="#fff" stroke="#000" stroke-width="1.2"/><rect x="155.5" y="31.3" width="4.2" height="4.2" fill="#fff" stroke="#000" stroke-width="1.2"/><rect x="157.7" y="79.2" width="4.2" height="4.2" fill="#fff" stroke="#000" stroke-width="1.2"/><rect x="159.9" y="96.3" width="4.2" height="4.2" fill="#fff" stroke="#000" stroke-width="1.2"/><rect x="162.1" y="73.3" width="4.2" height="4.2" fill="#fff" stroke="#000" stroke-width="1.2"/><rect x="164.3" y="13.8" width="4.2" height="4.2" fill="#fff" stroke="#000" stroke-width="1.2"/><rect x="166.5" y="33.2" width="4.2" height="4.2" fill="#fff" stroke="#000" stroke-width="1.2"/><rect x="168.7" y="93.4" width="4.2" height="4.2" fill="#fff" stroke="#000" stroke-width="1.2"/><rect x="170.9" y="81.4" width="4.2" height="4.2" fill="#fff" stroke="#000" stroke-width="1.2"/><rect x="173.1" y="95.0" width="4.2" height="4.2" fill="#fff" stroke="#000" stroke-width="1.2"/><rect x="175.3" y="98.9" width="4.2" height="4.2" fill="#fff" stroke="#000" stroke-width="1.2"/><rect x="177.5" y="29.6" width="4.2" height="4.2" fill="#fff" stroke="#000" stroke-width="1.2"/><rect x="179.7" y="87.8" width="4.2" height="4.2" fill="#fff" stroke="#000" stroke-width="1.2"/><rect x="181.9" y="51.9" width="4.2" height="4.2" fill="#fff" stroke="#000" stroke-width="1.2"/><rect x="184.1" y="62.4" width="4.2" height="4.2" fill="#fff" stroke="#000" stroke-width="1.2"/><rect x="186.3" y="86.6" width="4.2" height="4.2" fill="#fff" stroke="#000" stroke-width="1.2"/><rect x="188.5" y="35.7" width="4.2" height="4.2" fill="#fff" stroke="#000" stroke-width="1.2"/><rect x="190.7" y="92.2" width="4.2" height="4.2" fill="#fff" stroke="#000" stroke-width="1.2"/><rect x="192.9" y="44.0" width="4.2" height="4.2" fill="#fff" stroke="#000" stroke-width="1.2"/><rect x="195.1" y="93.6" width="4.2" height="4.2" fill="#fff" stroke="#000" stroke-width="1.2"/><rect x="197.3" y="65.0" width="4.2" height="4.2" fill="#fff" stroke="#000" stroke-width="1.2"/><rect x="199.5" y="84.5" width="4.2" height="4.2" fill="#fff" stroke="#000" stroke-width="1.2"/><rect x="201.7" y="79.2" width="4.2" height="4.2" fill="#fff" stroke="#000" stroke-width="1.2"/><rect x="203.9" y="13.2" width="4.2" height="4.2" fill="#fff" stroke="#000" stroke-width="1.2"/><rect x="206.1" y="29.0" width="4.2" height="4.2" fill="#fff" stroke="#000" stroke-width="1.2"/><rect x="208.3" y="75.9" width="4.2" height="4.2" fill="#fff" stroke="#000" stroke-width="1.2"/></svg>
<svg style="left:1370px;top:650px" width="218" height="115"><rect x="0.5" y="0.5" width="217" height="114" fill="#4d4d4d" stroke="#000" stroke-width="1.2"/><text x="107.0" y="10.5" font-size="8.6" fill="#e0e0e0" text-anchor="middle" font-family="Liberation Sans" letter-spacing=".3">UINTEGER_32</text><g shape-rendering="crispEdges" stroke="#000" stroke-width="1"><line x1="28.5" y1="88.5" x2="212" y2="88.5" stroke-dasharray="6 4"/><line x1="28.5" y1="69.5" x2="212" y2="69.5" stroke-dasharray="6 4"/><line x1="28.5" y1="49.5" x2="212" y2="49.5" stroke-dasharray="6 4"/><line x1="28.5" y1="30.5" x2="212" y2="30.5" stroke-dasharray="6 4"/><line x1="74.5" y1="11.6" x2="74.5" y2="111.6" stroke-dasharray="6 4"/><line x1="134.5" y1="11.6" x2="134.5" y2="111.6" stroke-dasharray="6 4"/><line x1="195.5" y1="11.6" x2="195.5" y2="111.6" stroke-dasharray="6 4"/><line x1="28.5" y1="11.6" x2="28.5" y2="107.6" stroke-width="2"/><line x1="22" y1="107.5" x2="212" y2="107.5" stroke-width="2"/><line x1="22" y1="107.5" x2="28" y2="107.5"/><line x1="24" y1="103.5" x2="28" y2="103.5"/><line x1="24" y1="99.5" x2="28" y2="99.5"/><line x1="24" y1="96.5" x2="28" y2="96.5"/><line x1="24" y1="92.5" x2="28" y2="92.5"/><line x1="22" y1="88.5" x2="28" y2="88.5"/><line x1="24" y1="84.5" x2="28" y2="84.5"/><line x1="24" y1="80.5" x2="28" y2="80.5"/><line x1="24" y1="76.5" x2="28" y2="76.5"/><line x1="24" y1="73.5" x2="28" y2="73.5"/><line x1="22" y1="69.5" x2="28" y2="69.5"/><line x1="24" y1="65.5" x2="28" y2="65.5"/><line x1="24" y1="61.5" x2="28" y2="61.5"/><line x1="24" y1="57.5" x2="28" y2="57.5"/><line x1="24" y1="53.5" x2="28" y2="53.5"/><line x1="22" y1="49.5" x2="28" y2="49.5"/><line x1="24" y1="46.5" x2="28" y2="46.5"/><line x1="24" y1="42.5" x2="28" y2="42.5"/><line x1="24" y1="38.5" x2="28" y2="38.5"/><line x1="24" y1="34.5" x2="28" y2="34.5"/><line x1="22" y1="30.5" x2="28" y2="30.5"/><line x1="24" y1="26.5" x2="28" y2="26.5"/><line x1="24" y1="23.5" x2="28" y2="23.5"/><line x1="24" y1="19.5" x2="28" y2="19.5"/><line x1="24" y1="15.5" x2="28" y2="15.5"/><line x1="22" y1="11.5" x2="28" y2="11.5"/><line x1="43.5" y1="107.6" x2="43.5" y2="111.6"/><line x1="104.5" y1="107.6" x2="104.5" y2="111.6"/><line x1="165.5" y1="107.6" x2="165.5" y2="111.6"/></g><text x="27" y="110.6" font-size="8.8" fill="#000" text-anchor="end" font-family="Liberation Sans">0.0</text><text x="27" y="91.4" font-size="8.8" fill="#000" text-anchor="end" font-family="Liberation Sans">20.0</text><text x="27" y="72.2" font-size="8.8" fill="#000" text-anchor="end" font-family="Liberation Sans">40.0</text><text x="27" y="53.0" font-size="8.8" fill="#000" text-anchor="end" font-family="Liberation Sans">60.0</text><text x="27" y="33.8" font-size="8.8" fill="#000" text-anchor="end" font-family="Liberation Sans">80.0</text><text x="27" y="14.6" font-size="8.8" fill="#000" text-anchor="end" font-family="Liberation Sans">100.0</text><polyline points="30.0,76.8 32.2,79.2 34.4,81.6 36.6,84.0 38.8,86.4 41.0,88.8 43.2,91.1 45.4,93.5 47.6,95.9 49.8,98.3 50.9,98.3 50.9,25.3 52.0,25.3 54.2,27.7 56.4,30.1 58.6,32.4 60.8,34.8 63.0,37.2 65.2,39.6 67.4,42.0 69.6,44.4 71.8,46.8 74.0,49.2 76.2,51.5 78.4,53.9 80.6,56.3 82.8,58.7 85.0,61.1 87.2,63.5 89.4,65.9 91.6,68.2 93.8,70.6 96.0,73.0 98.2,75.4 100.4,77.8 102.6,80.2 104.8,82.6 107.0,85.0 109.2,87.3 111.4,89.7 113.6,92.1 115.8,94.5 118.0,96.9 119.1,96.9 119.1,23.9 120.2,23.9 122.4,26.3 124.6,28.7 126.8,31.0 129.0,33.4 131.2,35.8 133.4,38.2 135.6,40.6 137.8,43.0 140.0,45.4 142.2,47.7 144.4,50.1 146.6,52.5 148.8,54.9 151.0,57.3 153.2,59.7 155.4,62.1 157.6,64.5 159.8,66.8 162.0,69.2 164.2,71.6 166.4,74.0 168.6,76.4 170.8,78.8 173.0,81.2 175.2,83.5 177.4,85.9 179.6,88.3 181.8,90.7 184.0,93.1 186.2,95.5 188.4,97.9 189.5,97.9 189.5,24.9 190.6,24.9 192.8,27.2 195.0,29.6 197.2,32.0 199.4,34.4 201.6,36.8 203.8,39.2 206.0,41.6 208.2,43.9 210.4,46.3" fill="none" stroke="#fff" stroke-width="1.1"/><rect x="27.9" y="74.7" width="4.2" height="4.2" fill="#fff" stroke="#000" stroke-width="1.2"/><rect x="30.1" y="77.1" width="4.2" height="4.2" fill="#fff" stroke="#000" stroke-width="1.2"/><rect x="32.3" y="79.5" width="4.2" height="4.2" fill="#fff" stroke="#000" stroke-width="1.2"/><rect x="34.5" y="81.9" width="4.2" height="4.2" fill="#fff" stroke="#000" stroke-width="1.2"/><rect x="36.7" y="84.3" width="4.2" height="4.2" fill="#fff" stroke="#000" stroke-width="1.2"/><rect x="38.9" y="86.7" width="4.2" height="4.2" fill="#fff" stroke="#000" stroke-width="1.2"/><rect x="41.1" y="89.0" width="4.2" height="4.2" fill="#fff" stroke="#000" stroke-width="1.2"/><rect x="43.3" y="91.4" width="4.2" height="4.2" fill="#fff" stroke="#000" stroke-width="1.2"/><rect x="45.5" y="93.8" width="4.2" height="4.2" fill="#fff" stroke="#000" stroke-width="1.2"/><rect x="47.7" y="96.2" width="4.2" height="4.2" fill="#fff" stroke="#000" stroke-width="1.2"/><rect x="49.9" y="23.2" width="4.2" height="4.2" fill="#fff" stroke="#000" stroke-width="1.2"/><rect x="52.1" y="25.6" width="4.2" height="4.2" fill="#fff" stroke="#000" stroke-width="1.2"/><rect x="54.3" y="28.0" width="4.2" height="4.2" fill="#fff" stroke="#000" stroke-width="1.2"/><rect x="56.5" y="30.3" width="4.2" height="4.2" fill="#fff" stroke="#000" stroke-width="1.2"/><rect x="58.7" y="32.7" width="4.2" height="4.2" fill="#fff" stroke="#000" stroke-width="1.2"/><rect x="60.9" y="35.1" width="4.2" height="4.2" fill="#fff" stroke="#000" stroke-width="1.2"/><rect x="63.1" y="37.5" width="4.2" height="4.2" fill="#fff" stroke="#000" stroke-width="1.2"/><rect x="65.3" y="39.9" width="4.2" height="4.2" fill="#fff" stroke="#000" stroke-width="1.2"/><rect x="67.5" y="42.3" width="4.2" height="4.2" fill="#fff" stroke="#000" stroke-width="1.2"/><rect x="69.7" y="44.7" width="4.2" height="4.2" fill="#fff" stroke="#000" stroke-width="1.2"/><rect x="71.9" y="47.1" width="4.2" height="4.2" fill="#fff" stroke="#000" stroke-width="1.2"/><rect x="74.1" y="49.4" width="4.2" height="4.2" fill="#fff" stroke="#000" stroke-width="1.2"/><rect x="76.3" y="51.8" width="4.2" height="4.2" fill="#fff" stroke="#000" stroke-width="1.2"/><rect x="78.5" y="54.2" width="4.2" height="4.2" fill="#fff" stroke="#000" stroke-width="1.2"/><rect x="80.7" y="56.6" width="4.2" height="4.2" fill="#fff" stroke="#000" stroke-width="1.2"/><rect x="82.9" y="59.0" width="4.2" height="4.2" fill="#fff" stroke="#000" stroke-width="1.2"/><rect x="85.1" y="61.4" width="4.2" height="4.2" fill="#fff" stroke="#000" stroke-width="1.2"/><rect x="87.3" y="63.8" width="4.2" height="4.2" fill="#fff" stroke="#000" stroke-width="1.2"/><rect x="89.5" y="66.1" width="4.2" height="4.2" fill="#fff" stroke="#000" stroke-width="1.2"/><rect x="91.7" y="68.5" width="4.2" height="4.2" fill="#fff" stroke="#000" stroke-width="1.2"/><rect x="93.9" y="70.9" width="4.2" height="4.2" fill="#fff" stroke="#000" stroke-width="1.2"/><rect x="96.1" y="73.3" width="4.2" height="4.2" fill="#fff" stroke="#000" stroke-width="1.2"/><rect x="98.3" y="75.7" width="4.2" height="4.2" fill="#fff" stroke="#000" stroke-width="1.2"/><rect x="100.5" y="78.1" width="4.2" height="4.2" fill="#fff" stroke="#000" stroke-width="1.2"/><rect x="102.7" y="80.5" width="4.2" height="4.2" fill="#fff" stroke="#000" stroke-width="1.2"/><rect x="104.9" y="82.9" width="4.2" height="4.2" fill="#fff" stroke="#000" stroke-width="1.2"/><rect x="107.1" y="85.2" width="4.2" height="4.2" fill="#fff" stroke="#000" stroke-width="1.2"/><rect x="109.3" y="87.6" width="4.2" height="4.2" fill="#fff" stroke="#000" stroke-width="1.2"/><rect x="111.5" y="90.0" width="4.2" height="4.2" fill="#fff" stroke="#000" stroke-width="1.2"/><rect x="113.7" y="92.4" width="4.2" height="4.2" fill="#fff" stroke="#000" stroke-width="1.2"/><rect x="115.9" y="94.8" width="4.2" height="4.2" fill="#fff" stroke="#000" stroke-width="1.2"/><rect x="118.1" y="21.8" width="4.2" height="4.2" fill="#fff" stroke="#000" stroke-width="1.2"/><rect x="120.3" y="24.2" width="4.2" height="4.2" fill="#fff" stroke="#000" stroke-width="1.2"/><rect x="122.5" y="26.6" width="4.2" height="4.2" fill="#fff" stroke="#000" stroke-width="1.2"/><rect x="124.7" y="28.9" width="4.2" height="4.2" fill="#fff" stroke="#000" stroke-width="1.2"/><rect x="126.9" y="31.3" width="4.2" height="4.2" fill="#fff" stroke="#000" stroke-width="1.2"/><rect x="129.1" y="33.7" width="4.2" height="4.2" fill="#fff" stroke="#000" stroke-width="1.2"/><rect x="131.3" y="36.1" width="4.2" height="4.2" fill="#fff" stroke="#000" stroke-width="1.2"/><rect x="133.5" y="38.5" width="4.2" height="4.2" fill="#fff" stroke="#000" stroke-width="1.2"/><rect x="135.7" y="40.9" width="4.2" height="4.2" fill="#fff" stroke="#000" stroke-width="1.2"/><rect x="137.9" y="43.3" width="4.2" height="4.2" fill="#fff" stroke="#000" stroke-width="1.2"/><rect x="140.1" y="45.6" width="4.2" height="4.2" fill="#fff" stroke="#000" stroke-width="1.2"/><rect x="142.3" y="48.0" width="4.2" height="4.2" fill="#fff" stroke="#000" stroke-width="1.2"/><rect x="144.5" y="50.4" width="4.2" height="4.2" fill="#fff" stroke="#000" stroke-width="1.2"/><rect x="146.7" y="52.8" width="4.2" height="4.2" fill="#fff" stroke="#000" stroke-width="1.2"/><rect x="148.9" y="55.2" width="4.2" height="4.2" fill="#fff" stroke="#000" stroke-width="1.2"/><rect x="151.1" y="57.6" width="4.2" height="4.2" fill="#fff" stroke="#000" stroke-width="1.2"/><rect x="153.3" y="60.0" width="4.2" height="4.2" fill="#fff" stroke="#000" stroke-width="1.2"/><rect x="155.5" y="62.4" width="4.2" height="4.2" fill="#fff" stroke="#000" stroke-width="1.2"/><rect x="157.7" y="64.7" width="4.2" height="4.2" fill="#fff" stroke="#000" stroke-width="1.2"/><rect x="159.9" y="67.1" width="4.2" height="4.2" fill="#fff" stroke="#000" stroke-width="1.2"/><rect x="162.1" y="69.5" width="4.2" height="4.2" fill="#fff" stroke="#000" stroke-width="1.2"/><rect x="164.3" y="71.9" width="4.2" height="4.2" fill="#fff" stroke="#000" stroke-width="1.2"/><rect x="166.5" y="74.3" width="4.2" height="4.2" fill="#fff" stroke="#000" stroke-width="1.2"/><rect x="168.7" y="76.7" width="4.2" height="4.2" fill="#fff" stroke="#000" stroke-width="1.2"/><rect x="170.9" y="79.1" width="4.2" height="4.2" fill="#fff" stroke="#000" stroke-width="1.2"/><rect x="173.1" y="81.4" width="4.2" height="4.2" fill="#fff" stroke="#000" stroke-width="1.2"/><rect x="175.3" y="83.8" width="4.2" height="4.2" fill="#fff" stroke="#000" stroke-width="1.2"/><rect x="177.5" y="86.2" width="4.2" height="4.2" fill="#fff" stroke="#000" stroke-width="1.2"/><rect x="179.7" y="88.6" width="4.2" height="4.2" fill="#fff" stroke="#000" stroke-width="1.2"/><rect x="181.9" y="91.0" width="4.2" height="4.2" fill="#fff" stroke="#000" stroke-width="1.2"/><rect x="184.1" y="93.4" width="4.2" height="4.2" fill="#fff" stroke="#000" stroke-width="1.2"/><rect x="186.3" y="95.8" width="4.2" height="4.2" fill="#fff" stroke="#000" stroke-width="1.2"/><rect x="188.5" y="22.8" width="4.2" height="4.2" fill="#fff" stroke="#000" stroke-width="1.2"/><rect x="190.7" y="25.1" width="4.2" height="4.2" fill="#fff" stroke="#000" stroke-width="1.2"/><rect x="192.9" y="27.5" width="4.2" height="4.2" fill="#fff" stroke="#000" stroke-width="1.2"/><rect x="195.1" y="29.9" width="4.2" height="4.2" fill="#fff" stroke="#000" stroke-width="1.2"/><rect x="197.3" y="32.3" width="4.2" height="4.2" fill="#fff" stroke="#000" stroke-width="1.2"/><rect x="199.5" y="34.7" width="4.2" height="4.2" fill="#fff" stroke="#000" stroke-width="1.2"/><rect x="201.7" y="37.1" width="4.2" height="4.2" fill="#fff" stroke="#000" stroke-width="1.2"/><rect x="203.9" y="39.5" width="4.2" height="4.2" fill="#fff" stroke="#000" stroke-width="1.2"/><rect x="206.1" y="41.8" width="4.2" height="4.2" fill="#fff" stroke="#000" stroke-width="1.2"/><rect x="208.3" y="44.2" width="4.2" height="4.2" fill="#fff" stroke="#000" stroke-width="1.2"/></svg>
<svg style="left:912px;top:770px" width="218" height="115"><rect x="0.5" y="0.5" width="217" height="114" fill="#4d4d4d" stroke="#000" stroke-width="1.2"/><text x="107.0" y="10.5" font-size="8.6" fill="#e0e0e0" text-anchor="middle" font-family="Liberation Sans" letter-spacing=".3">INT_UPDATE_1_HZ</text><g shape-rendering="crispEdges" stroke="#000" stroke-width="1"><line x1="28.5" y1="88.5" x2="212" y2="88.5" stroke-dasharray="6 4"/><line x1="28.5" y1="69.5" x2="212" y2="69.5" stroke-dasharray="6 4"/><line x1="28.5" y1="49.5" x2="212" y2="49.5" stroke-dasharray="6 4"/><line x1="28.5" y1="30.5" x2="212" y2="30.5" stroke-dasharray="6 4"/><line x1="74.5" y1="11.6" x2="74.5" y2="111.6" stroke-dasharray="6 4"/><line x1="134.5" y1="11.6" x2="134.5" y2="111.6" stroke-dasharray="6 4"/><line x1="195.5" y1="11.6" x2="195.5" y2="111.6" stroke-dasharray="6 4"/><line x1="28.5" y1="11.6" x2="28.5" y2="107.6" stroke-width="2"/><line x1="22" y1="107.5" x2="212" y2="107.5" stroke-width="2"/><line x1="22" y1="107.5" x2="28" y2="107.5"/><line x1="24" y1="103.5" x2="28" y2="103.5"/><line x1="24" y1="99.5" x2="28" y2="99.5"/><line x1="24" y1="96.5" x2="28" y2="96.5"/><line x1="24" y1="92.5" x2="28" y2="92.5"/><line x1="22" y1="88.5" x2="28" y2="88.5"/><line x1="24" y1="84.5" x2="28" y2="84.5"/><line x1="24" y1="80.5" x2="28" y2="80.5"/><line x1="24" y1="76.5" x2="28" y2="76.5"/><line x1="24" y1="73.5" x2="28" y2="73.5"/><line x1="22" y1="69.5" x2="28" y2="69.5"/><line x1="24" y1="65.5" x2="28" y2="65.5"/><line x1="24" y1="61.5" x2="28" y2="61.5"/><line x1="24" y1="57.5" x2="28" y2="57.5"/><line x1="24" y1="53.5" x2="28" y2="53.5"/><line x1="22" y1="49.5" x2="28" y2="49.5"/><line x1="24" y1="46.5" x2="28" y2="46.5"/><line x1="24" y1="42.5" x2="28" y2="42.5"/><line x1="24" y1="38.5" x2="28" y2="38.5"/><line x1="24" y1="34.5" x2="28" y2="34.5"/><line x1="22" y1="30.5" x2="28" y2="30.5"/><line x1="24" y1="26.5" x2="28" y2="26.5"/><line x1="24" y1="23.5" x2="28" y2="23.5"/><line x1="24" y1="19.5" x2="28" y2="19.5"/><line x1="24" y1="15.5" x2="28" y2="15.5"/><line x1="22" y1="11.5" x2="28" y2="11.5"/><line x1="43.5" y1="107.6" x2="43.5" y2="111.6"/><line x1="104.5" y1="107.6" x2="104.5" y2="111.6"/><line x1="165.5" y1="107.6" x2="165.5" y2="111.6"/></g><text x="27" y="110.6" font-size="8.8" fill="#000" text-anchor="end" font-family="Liberation Sans">0.0</text><text x="27" y="91.4" font-size="8.8" fill="#000" text-anchor="end" font-family="Liberation Sans">20.0</text><text x="27" y="72.2" font-size="8.8" fill="#000" text-anchor="end" font-family="Liberation Sans">40.0</text><text x="27" y="53.0" font-size="8.8" fill="#000" text-anchor="end" font-family="Liberation Sans">60.0</text><text x="27" y="33.8" font-size="8.8" fill="#000" text-anchor="end" font-family="Liberation Sans">80.0</text><text x="27" y="14.6" font-size="8.8" fill="#000" text-anchor="end" font-family="Liberation Sans">100.0</text><polyline points="30.0,40.8 32.3,44.9 34.6,48.9 36.9,53.0 39.2,57.0 41.5,61.0 43.8,65.1 46.1,69.1 48.4,73.2 50.7,77.2 53.0,81.2 55.3,85.3 57.6,89.3 59.9,93.4 62.2,97.4 64.5,101.4 66.8,105.5 67.9,105.5 67.9,16.4 69.1,16.4 71.4,20.5 73.7,24.5 76.0,28.5 78.3,32.6 80.6,36.6 82.9,40.7 85.2,44.7 87.5,48.7 89.8,52.8 92.1,56.8 94.4,60.9 96.7,64.9 99.0,68.9 101.3,73.0 103.6,77.0 105.9,81.1 108.2,85.1 110.5,89.1 112.8,93.2 115.1,97.2 117.4,101.3 119.7,105.3 120.8,105.3 120.8,16.2 122.0,16.2 124.3,20.3 126.6,24.3 128.9,28.4 131.2,32.4 133.5,36.4 135.8,40.5 138.1,44.5 140.4,48.6 142.7,52.6 145.0,56.6 147.3,60.7 149.6,64.7 151.9,68.8 154.2,72.8 156.5,76.8 158.8,80.9 161.1,84.9 163.4,89.0 165.7,93.0 168.0,97.0 170.3,101.1 172.6,105.1 173.8,105.1 173.8,16.1 174.9,16.1 177.2,20.1 179.5,24.1 181.8,28.2 184.1,32.2 186.4,36.3 188.7,40.3 191.0,44.3 193.3,48.4 195.6,52.4 197.9,56.5 200.2,60.5 202.5,64.5 204.8,68.6 207.1,72.6 209.4,76.7" fill="none" stroke="#fff" stroke-width="1.1"/><rect x="27.9" y="38.7" width="4.2" height="4.2" fill="#fff" stroke="#000" stroke-width="1.2"/><rect x="30.2" y="42.8" width="4.2" height="4.2" fill="#fff" stroke="#000" stroke-width="1.2"/><rect x="32.5" y="46.8" width="4.2" height="4.2" fill="#fff" stroke="#000" stroke-width="1.2"/><rect x="34.8" y="50.9" width="4.2" height="4.2" fill="#fff" stroke="#000" stroke-width="1.2"/><rect x="37.1" y="54.9" width="4.2" height="4.2" fill="#fff" stroke="#000" stroke-width="1.2"/><rect x="39.4" y="58.9" width="4.2" height="4.2" fill="#fff" stroke="#000" stroke-width="1.2"/><rect x="41.7" y="63.0" width="4.2" height="4.2" fill="#fff" stroke="#000" stroke-width="1.2"/><rect x="44.0" y="67.0" width="4.2" height="4.2" fill="#fff" stroke="#000" stroke-width="1.2"/><rect x="46.3" y="71.1" width="4.2" height="4.2" fill="#fff" stroke="#000" stroke-width="1.2"/><rect x="48.6" y="75.1" width="4.2" height="4.2" fill="#fff" stroke="#000" stroke-width="1.2"/><rect x="50.9" y="79.1" width="4.2" height="4.2" fill="#fff" stroke="#000" stroke-width="1.2"/><rect x="53.2" y="83.2" width="4.2" height="4.2" fill="#fff" stroke="#000" stroke-width="1.2"/><rect x="55.5" y="87.2" width="4.2" height="4.2" fill="#fff" stroke="#000" stroke-width="1.2"/><rect x="57.8" y="91.3" width="4.2" height="4.2" fill="#fff" stroke="#000" stroke-width="1.2"/><rect x="60.1" y="95.3" width="4.2" height="4.2" fill="#fff" stroke="#000" stroke-width="1.2"/><rect x="62.4" y="99.3" width="4.2" height="4.2" fill="#fff" stroke="#000" stroke-width="1.2"/><rect x="64.7" y="103.4" width="4.2" height="4.2" fill="#fff" stroke="#000" stroke-width="1.2"/><rect x="67.0" y="14.3" width="4.2" height="4.2" fill="#fff" stroke="#000" stroke-width="1.2"/><rect x="69.3" y="18.4" width="4.2" height="4.2" fill="#fff" stroke="#000" stroke-width="1.2"/><rect x="71.6" y="22.4" width="4.2" height="4.2" fill="#fff" stroke="#000" stroke-width="1.2"/><rect x="73.9" y="26.4" width="4.2" height="4.2" fill="#fff" stroke="#000" stroke-width="1.2"/><rect x="76.2" y="30.5" width="4.2" height="4.2" fill="#fff" stroke="#000" stroke-width="1.2"/><rect x="78.5" y="34.5" width="4.2" height="4.2" fill="#fff" stroke="#000" stroke-width="1.2"/><rect x="80.8" y="38.6" width="4.2" height="4.2" fill="#fff" stroke="#000" stroke-width="1.2"/><rect x="83.1" y="42.6" width="4.2" height="4.2" fill="#fff" stroke="#000" stroke-width="1.2"/><rect x="85.4" y="46.6" width="4.2" height="4.2" fill="#fff" stroke="#000" stroke-width="1.2"/><rect x="87.7" y="50.7" width="4.2" height="4.2" fill="#fff" stroke="#000" stroke-width="1.2"/><rect x="90.0" y="54.7" width="4.2" height="4.2" fill="#fff" stroke="#000" stroke-width="1.2"/><rect x="92.3" y="58.8" width="4.2" height="4.2" fill="#fff" stroke="#000" stroke-width="1.2"/><rect x="94.6" y="62.8" width="4.2" height="4.2" fill="#fff" stroke="#000" stroke-width="1.2"/><rect x="96.9" y="66.8" width="4.2" height="4.2" fill="#fff" stroke="#000" stroke-width="1.2"/><rect x="99.2" y="70.9" width="4.2" height="4.2" fill="#fff" stroke="#000" stroke-width="1.2"/><rect x="101.5" y="74.9" width="4.2" height="4.2" fill="#fff" stroke="#000" stroke-width="1.2"/><rect x="103.8" y="79.0" width="4.2" height="4.2" fill="#fff" stroke="#000" stroke-width="1.2"/><rect x="106.1" y="83.0" width="4.2" height="4.2" fill="#fff" stroke="#000" stroke-width="1.2"/><rect x="108.4" y="87.0" width="4.2" height="4.2" fill="#fff" stroke="#000" stroke-width="1.2"/><rect x="110.7" y="91.1" width="4.2" height="4.2" fill="#fff" stroke="#000" stroke-width="1.2"/><rect x="113.0" y="95.1" width="4.2" height="4.2" fill="#fff" stroke="#000" stroke-width="1.2"/><rect x="115.3" y="99.2" width="4.2" height="4.2" fill="#fff" stroke="#000" stroke-width="1.2"/><rect x="117.6" y="103.2" width="4.2" height="4.2" fill="#fff" stroke="#000" stroke-width="1.2"/><rect x="119.9" y="14.1" width="4.2" height="4.2" fill="#fff" stroke="#000" stroke-width="1.2"/><rect x="122.2" y="18.2" width="4.2" height="4.2" fill="#fff" stroke="#000" stroke-width="1.2"/><rect x="124.5" y="22.2" width="4.2" height="4.2" fill="#fff" stroke="#000" stroke-width="1.2"/><rect x="126.8" y="26.3" width="4.2" height="4.2" fill="#fff" stroke="#000" stroke-width="1.2"/><rect x="129.1" y="30.3" width="4.2" height="4.2" fill="#fff" stroke="#000" stroke-width="1.2"/><rect x="131.4" y="34.3" width="4.2" height="4.2" fill="#fff" stroke="#000" stroke-width="1.2"/><rect x="133.7" y="38.4" width="4.2" height="4.2" fill="#fff" stroke="#000" stroke-width="1.2"/><rect x="136.0" y="42.4" width="4.2" height="4.2" fill="#fff" stroke="#000" stroke-width="1.2"/><rect x="138.3" y="46.5" width="4.2" height="4.2" fill="#fff" stroke="#000" stroke-width="1.2"/><rect x="140.6" y="50.5" width="4.2" height="4.2" fill="#fff" stroke="#000" stroke-width="1.2"/><rect x="142.9" y="54.5" width="4.2" height="4.2" fill="#fff" stroke="#000" stroke-width="1.2"/><rect x="145.2" y="58.6" width="4.2" height="4.2" fill="#fff" stroke="#000" stroke-width="1.2"/><rect x="147.5" y="62.6" width="4.2" height="4.2" fill="#fff" stroke="#000" stroke-width="1.2"/><rect x="149.8" y="66.7" width="4.2" height="4.2" fill="#fff" stroke="#000" stroke-width="1.2"/><rect x="152.1" y="70.7" width="4.2" height="4.2" fill="#fff" stroke="#000" stroke-width="1.2"/><rect x="154.4" y="74.7" width="4.2" height="4.2" fill="#fff" stroke="#000" stroke-width="1.2"/><rect x="156.7" y="78.8" width="4.2" height="4.2" fill="#fff" stroke="#000" stroke-width="1.2"/><rect x="159.0" y="82.8" width="4.2" height="4.2" fill="#fff" stroke="#000" stroke-width="1.2"/><rect x="161.3" y="86.9" width="4.2" height="4.2" fill="#fff" stroke="#000" stroke-width="1.2"/><rect x="163.6" y="90.9" width="4.2" height="4.2" fill="#fff" stroke="#000" stroke-width="1.2"/><rect x="165.9" y="94.9" width="4.2" height="4.2" fill="#fff" stroke="#000" stroke-width="1.2"/><rect x="168.2" y="99.0" width="4.2" height="4.2" fill="#fff" stroke="#000" stroke-width="1.2"/><rect x="170.5" y="103.0" width="4.2" height="4.2" fill="#fff" stroke="#000" stroke-width="1.2"/><rect x="172.8" y="14.0" width="4.2" height="4.2" fill="#fff" stroke="#000" stroke-width="1.2"/><rect x="175.1" y="18.0" width="4.2" height="4.2" fill="#fff" stroke="#000" stroke-width="1.2"/><rect x="177.4" y="22.0" width="4.2" height="4.2" fill="#fff" stroke="#000" stroke-width="1.2"/><rect x="179.7" y="26.1" width="4.2" height="4.2" fill="#fff" stroke="#000" stroke-width="1.2"/><rect x="182.0" y="30.1" width="4.2" height="4.2" fill="#fff" stroke="#000" stroke-width="1.2"/><rect x="184.3" y="34.2" width="4.2" height="4.2" fill="#fff" stroke="#000" stroke-width="1.2"/><rect x="186.6" y="38.2" width="4.2" height="4.2" fill="#fff" stroke="#000" stroke-width="1.2"/><rect x="188.9" y="42.2" width="4.2" height="4.2" fill="#fff" stroke="#000" stroke-width="1.2"/><rect x="191.2" y="46.3" width="4.2" height="4.2" fill="#fff" stroke="#000" stroke-width="1.2"/><rect x="193.5" y="50.3" width="4.2" height="4.2" fill="#fff" stroke="#000" stroke-width="1.2"/><rect x="195.8" y="54.4" width="4.2" height="4.2" fill="#fff" stroke="#000" stroke-width="1.2"/><rect x="198.1" y="58.4" width="4.2" height="4.2" fill="#fff" stroke="#000" stroke-width="1.2"/><rect x="200.4" y="62.4" width="4.2" height="4.2" fill="#fff" stroke="#000" stroke-width="1.2"/><rect x="202.7" y="66.5" width="4.2" height="4.2" fill="#fff" stroke="#000" stroke-width="1.2"/><rect x="205.0" y="70.5" width="4.2" height="4.2" fill="#fff" stroke="#000" stroke-width="1.2"/><rect x="207.3" y="74.6" width="4.2" height="4.2" fill="#fff" stroke="#000" stroke-width="1.2"/></svg>
<svg style="left:1141px;top:770px" width="218" height="115"><rect x="0.5" y="0.5" width="217" height="114" fill="#4d4d4d" stroke="#000" stroke-width="1.2"/><text x="107.0" y="10.5" font-size="8.6" fill="#e0e0e0" text-anchor="middle" font-family="Liberation Sans" letter-spacing=".3">INT_UPDATE_HALF_HZ</text><g shape-rendering="crispEdges" stroke="#000" stroke-width="1"><line x1="28.5" y1="88.5" x2="212" y2="88.5" stroke-dasharray="6 4"/><line x1="28.5" y1="69.5" x2="212" y2="69.5" stroke-dasharray="6 4"/><line x1="28.5" y1="49.5" x2="212" y2="49.5" stroke-dasharray="6 4"/><line x1="28.5" y1="30.5" x2="212" y2="30.5" stroke-dasharray="6 4"/><line x1="74.5" y1="11.6" x2="74.5" y2="111.6" stroke-dasharray="6 4"/><line x1="134.5" y1="11.6" x2="134.5" y2="111.6" stroke-dasharray="6 4"/><line x1="195.5" y1="11.6" x2="195.5" y2="111.6" stroke-dasharray="6 4"/><line x1="28.5" y1="11.6" x2="28.5" y2="107.6" stroke-width="2"/><line x1="22" y1="107.5" x2="212" y2="107.5" stroke-width="2"/><line x1="22" y1="107.5" x2="28" y2="107.5"/><line x1="24" y1="103.5" x2="28" y2="103.5"/><line x1="24" y1="99.5" x2="28" y2="99.5"/><line x1="24" y1="96.5" x2="28" y2="96.5"/><line x1="24" y1="92.5" x2="28" y2="92.5"/><line x1="22" y1="88.5" x2="28" y2="88.5"/><line x1="24" y1="84.5" x2="28" y2="84.5"/><line x1="24" y1="80.5" x2="28" y2="80.5"/><line x1="24" y1="76.5" x2="28" y2="76.5"/><line x1="24" y1="73.5" x2="28" y2="73.5"/><line x1="22" y1="69.5" x2="28" y2="69.5"/><line x1="24" y1="65.5" x2="28" y2="65.5"/><line x1="24" y1="61.5" x2="28" y2="61.5"/><line x1="24" y1="57.5" x2="28" y2="57.5"/><line x1="24" y1="53.5" x2="28" y2="53.5"/><line x1="22" y1="49.5" x2="28" y2="49.5"/><line x1="24" y1="46.5" x2="28" y2="46.5"/><line x1="24" y1="42.5" x2="28" y2="42.5"/><line x1="24" y1="38.5" x2="28" y2="38.5"/><line x1="24" y1="34.5" x2="28" y2="34.5"/><line x1="22" y1="30.5" x2="28" y2="30.5"/><line x1="24" y1="26.5" x2="28" y2="26.5"/><line x1="24" y1="23.5" x2="28" y2="23.5"/><line x1="24" y1="19.5" x2="28" y2="19.5"/><line x1="24" y1="15.5" x2="28" y2="15.5"/><line x1="22" y1="11.5" x2="28" y2="11.5"/><line x1="43.5" y1="107.6" x2="43.5" y2="111.6"/><line x1="104.5" y1="107.6" x2="104.5" y2="111.6"/><line x1="165.5" y1="107.6" x2="165.5" y2="111.6"/></g><text x="27" y="110.6" font-size="8.8" fill="#000" text-anchor="end" font-family="Liberation Sans">0.0</text><text x="27" y="91.4" font-size="8.8" fill="#000" text-anchor="end" font-family="Liberation Sans">20.0</text><text x="27" y="72.2" font-size="8.8" fill="#000" text-anchor="end" font-family="Liberation Sans">40.0</text><text x="27" y="53.0" font-size="8.8" fill="#000" text-anchor="end" font-family="Liberation Sans">60.0</text><text x="27" y="33.8" font-size="8.8" fill="#000" text-anchor="end" font-family="Liberation Sans">80.0</text><text x="27" y="14.6" font-size="8.8" fill="#000" text-anchor="end" font-family="Liberation Sans">100.0</text><polyline points="30.0,47.9 31.7,53.7 33.4,59.5 35.1,65.3 36.8,71.1 38.5,76.8 40.2,82.6 41.9,88.4 43.6,94.2 45.3,100.0 47.0,105.8 47.9,105.8 47.9,18.6 48.7,18.6 50.4,24.4 52.1,30.2 53.8,36.0 55.5,41.7 57.2,47.5 58.9,53.3 60.6,59.1 62.3,64.9 64.0,70.7 65.7,76.5 67.4,82.3 69.1,88.1 70.8,93.9 72.5,99.7 74.2,105.5 75.1,105.5 75.1,18.2 75.9,18.2 77.6,24.0 79.3,29.8 81.0,35.6 82.7,41.4 84.4,47.2 86.1,53.0 87.8,58.8 89.5,64.6 91.2,70.4 92.9,76.2 94.6,82.0 96.3,87.8 98.0,93.5 99.7,99.3 101.4,105.1 102.3,105.1 102.3,17.9 103.1,17.9 104.8,23.7 106.5,29.5 108.2,35.3 109.9,41.1 111.6,46.9 113.3,52.6 115.0,58.4 116.7,64.2 118.4,70.0 120.1,75.8 121.8,81.6 123.5,87.4 125.2,93.2 126.9,99.0 128.6,104.8 129.5,104.8 129.5,17.5 130.3,17.5 132.0,23.3 133.7,29.1 135.4,34.9 137.1,40.7 138.8,46.5 140.5,52.3 142.2,58.1 143.9,63.9 145.6,69.7 147.3,75.5 149.0,81.3 150.7,87.1 152.4,92.9 154.1,98.7 155.8,104.5 156.6,104.5 156.6,17.2 157.5,17.2 159.2,23.0 160.9,28.8 162.6,34.6 164.3,40.4 166.0,46.2 167.7,52.0 169.4,57.8 171.1,63.6 172.8,69.3 174.5,75.1 176.2,80.9 177.9,86.7 179.6,92.5 181.3,98.3 183.0,104.1 183.8,104.1 183.8,16.9 184.7,16.9 186.4,22.7 188.1,28.5 189.8,34.2 191.5,40.0 193.2,45.8 194.9,51.6 196.6,57.4 198.3,63.2 200.0,69.0 201.7,74.8 203.4,80.6 205.1,86.4 206.8,92.2 208.5,98.0 210.2,103.8" fill="none" stroke="#fff" stroke-width="1.1"/><rect x="27.9" y="45.8" width="4.2" height="4.2" fill="#fff" stroke="#000" stroke-width="1.2"/><rect x="29.6" y="51.6" width="4.2" height="4.2" fill="#fff" stroke="#000" stroke-width="1.2"/><rect x="31.3" y="57.4" width="4.2" height="4.2" fill="#fff" stroke="#000" stroke-width="1.2"/><rect x="33.0" y="63.2" width="4.2" height="4.2" fill="#fff" stroke="#000" stroke-width="1.2"/><rect x="34.7" y="69.0" width="4.2" height="4.2" fill="#fff" stroke="#000" stroke-width="1.2"/><rect x="36.4" y="74.7" width="4.2" height="4.2" fill="#fff" stroke="#000" stroke-width="1.2"/><rect x="38.1" y="80.5" width="4.2" height="4.2" fill="#fff" stroke="#000" stroke-width="1.2"/><rect x="39.8" y="86.3" width="4.2" height="4.2" fill="#fff" stroke="#000" stroke-width="1.2"/><rect x="41.5" y="92.1" width="4.2" height="4.2" fill="#fff" stroke="#000" stroke-width="1.2"/><rect x="43.2" y="97.9" width="4.2" height="4.2" fill="#fff" stroke="#000" stroke-width="1.2"/><rect x="44.9" y="103.7" width="4.2" height="4.2" fill="#fff" stroke="#000" stroke-width="1.2"/><rect x="46.6" y="16.5" width="4.2" height="4.2" fill="#fff" stroke="#000" stroke-width="1.2"/><rect x="48.3" y="22.3" width="4.2" height="4.2" fill="#fff" stroke="#000" stroke-width="1.2"/><rect x="50.0" y="28.1" width="4.2" height="4.2" fill="#fff" stroke="#000" stroke-width="1.2"/><rect x="51.7" y="33.9" width="4.2" height="4.2" fill="#fff" stroke="#000" stroke-width="1.2"/><rect x="53.4" y="39.6" width="4.2" height="4.2" fill="#fff" stroke="#000" stroke-width="1.2"/><rect x="55.1" y="45.4" width="4.2" height="4.2" fill="#fff" stroke="#000" stroke-width="1.2"/><rect x="56.8" y="51.2" width="4.2" height="4.2" fill="#fff" stroke="#000" stroke-width="1.2"/><rect x="58.5" y="57.0" width="4.2" height="4.2" fill="#fff" stroke="#000" stroke-width="1.2"/><rect x="60.2" y="62.8" width="4.2" height="4.2" fill="#fff" stroke="#000" stroke-width="1.2"/><rect x="61.9" y="68.6" width="4.2" height="4.2" fill="#fff" stroke="#000" stroke-width="1.2"/><rect x="63.6" y="74.4" width="4.2" height="4.2" fill="#fff" stroke="#000" stroke-width="1.2"/><rect x="65.3" y="80.2" width="4.2" height="4.2" fill="#fff" stroke="#000" stroke-width="1.2"/><rect x="67.0" y="86.0" width="4.2" height="4.2" fill="#fff" stroke="#000" stroke-width="1.2"/><rect x="68.7" y="91.8" width="4.2" height="4.2" fill="#fff" stroke="#000" stroke-width="1.2"/><rect x="70.4" y="97.6" width="4.2" height="4.2" fill="#fff" stroke="#000" stroke-width="1.2"/><rect x="72.1" y="103.4" width="4.2" height="4.2" fill="#fff" stroke="#000" stroke-width="1.2"/><rect x="73.8" y="16.1" width="4.2" height="4.2" fill="#fff" stroke="#000" stroke-width="1.2"/><rect x="75.5" y="21.9" width="4.2" height="4.2" fill="#fff" stroke="#000" stroke-width="1.2"/><rect x="77.2" y="27.7" width="4.2" height="4.2" fill="#fff" stroke="#000" stroke-width="1.2"/><rect x="78.9" y="33.5" width="4.2" height="4.2" fill="#fff" stroke="#000" stroke-width="1.2"/><rect x="80.6" y="39.3" width="4.2" height="4.2" fill="#fff" stroke="#000" stroke-width="1.2"/><rect x="82.3" y="45.1" width="4.2" height="4.2" fill="#fff" stroke="#000" stroke-width="1.2"/><rect x="84.0" y="50.9" width="4.2" height="4.2" fill="#fff" stroke="#000" stroke-width="1.2"/><rect x="85.7" y="56.7" width="4.2" height="4.2" fill="#fff" stroke="#000" stroke-width="1.2"/><rect x="87.4" y="62.5" width="4.2" height="4.2" fill="#fff" stroke="#000" stroke-width="1.2"/><rect x="89.1" y="68.3" width="4.2" height="4.2" fill="#fff" stroke="#000" stroke-width="1.2"/><rect x="90.8" y="74.1" width="4.2" height="4.2" fill="#fff" stroke="#000" stroke-width="1.2"/><rect x="92.5" y="79.9" width="4.2" height="4.2" fill="#fff" stroke="#000" stroke-width="1.2"/><rect x="94.2" y="85.7" width="4.2" height="4.2" fill="#fff" stroke="#000" stroke-width="1.2"/><rect x="95.9" y="91.4" width="4.2" height="4.2" fill="#fff" stroke="#000" stroke-width="1.2"/><rect x="97.6" y="97.2" width="4.2" height="4.2" fill="#fff" stroke="#000" stroke-width="1.2"/><rect x="99.3" y="103.0" width="4.2" height="4.2" fill="#fff" stroke="#000" stroke-width="1.2"/><rect x="101.0" y="15.8" width="4.2" height="4.2" fill="#fff" stroke="#000" stroke-width="1.2"/><rect x="102.7" y="21.6" width="4.2" height="4.2" fill="#fff" stroke="#000" stroke-width="1.2"/><rect x="104.4" y="27.4" width="4.2" height="4.2" fill="#fff" stroke="#000" stroke-width="1.2"/><rect x="106.1" y="33.2" width="4.2" height="4.2" fill="#fff" stroke="#000" stroke-width="1.2"/><rect x="107.8" y="39.0" width="4.2" height="4.2" fill="#fff" stroke="#000" stroke-width="1.2"/><rect x="109.5" y="44.8" width="4.2" height="4.2" fill="#fff" stroke="#000" stroke-width="1.2"/><rect x="111.2" y="50.5" width="4.2" height="4.2" fill="#fff" stroke="#000" stroke-width="1.2"/><rect x="112.9" y="56.3" width="4.2" height="4.2" fill="#fff" stroke="#000" stroke-width="1.2"/><rect x="114.6" y="62.1" width="4.2" height="4.2" fill="#fff" stroke="#000" stroke-width="1.2"/><rect x="116.3" y="67.9" width="4.2" height="4.2" fill="#fff" stroke="#000" stroke-width="1.2"/><rect x="118.0" y="73.7" width="4.2" height="4.2" fill="#fff" stroke="#000" stroke-width="1.2"/><rect x="119.7" y="79.5" width="4.2" height="4.2" fill="#fff" stroke="#000" stroke-width="1.2"/><rect x="121.4" y="85.3" width="4.2" height="4.2" fill="#fff" stroke="#000" stroke-width="1.2"/><rect x="123.1" y="91.1" width="4.2" height="4.2" fill="#fff" stroke="#000" stroke-width="1.2"/><rect x="124.8" y="96.9" width="4.2" height="4.2" fill="#fff" stroke="#000" stroke-width="1.2"/><rect x="126.5" y="102.7" width="4.2" height="4.2" fill="#fff" stroke="#000" stroke-width="1.2"/><rect x="128.2" y="15.4" width="4.2" height="4.2" fill="#fff" stroke="#000" stroke-width="1.2"/><rect x="129.9" y="21.2" width="4.2" height="4.2" fill="#fff" stroke="#000" stroke-width="1.2"/><rect x="131.6" y="27.0" width="4.2" height="4.2" fill="#fff" stroke="#000" stroke-width="1.2"/><rect x="133.3" y="32.8" width="4.2" height="4.2" fill="#fff" stroke="#000" stroke-width="1.2"/><rect x="135.0" y="38.6" width="4.2" height="4.2" fill="#fff" stroke="#000" stroke-width="1.2"/><rect x="136.7" y="44.4" width="4.2" height="4.2" fill="#fff" stroke="#000" stroke-width="1.2"/><rect x="138.4" y="50.2" width="4.2" height="4.2" fill="#fff" stroke="#000" stroke-width="1.2"/><rect x="140.1" y="56.0" width="4.2" height="4.2" fill="#fff" stroke="#000" stroke-width="1.2"/><rect x="141.8" y="61.8" width="4.2" height="4.2" fill="#fff" stroke="#000" stroke-width="1.2"/><rect x="143.5" y="67.6" width="4.2" height="4.2" fill="#fff" stroke="#000" stroke-width="1.2"/><rect x="145.2" y="73.4" width="4.2" height="4.2" fill="#fff" stroke="#000" stroke-width="1.2"/><rect x="146.9" y="79.2" width="4.2" height="4.2" fill="#fff" stroke="#000" stroke-width="1.2"/><rect x="148.6" y="85.0" width="4.2" height="4.2" fill="#fff" stroke="#000" stroke-width="1.2"/><rect x="150.3" y="90.8" width="4.2" height="4.2" fill="#fff" stroke="#000" stroke-width="1.2"/><rect x="152.0" y="96.6" width="4.2" height="4.2" fill="#fff" stroke="#000" stroke-width="1.2"/><rect x="153.7" y="102.4" width="4.2" height="4.2" fill="#fff" stroke="#000" stroke-width="1.2"/><rect x="155.4" y="15.1" width="4.2" height="4.2" fill="#fff" stroke="#000" stroke-width="1.2"/><rect x="157.1" y="20.9" width="4.2" height="4.2" fill="#fff" stroke="#000" stroke-width="1.2"/><rect x="158.8" y="26.7" width="4.2" height="4.2" fill="#fff" stroke="#000" stroke-width="1.2"/><rect x="160.5" y="32.5" width="4.2" height="4.2" fill="#fff" stroke="#000" stroke-width="1.2"/><rect x="162.2" y="38.3" width="4.2" height="4.2" fill="#fff" stroke="#000" stroke-width="1.2"/><rect x="163.9" y="44.1" width="4.2" height="4.2" fill="#fff" stroke="#000" stroke-width="1.2"/><rect x="165.6" y="49.9" width="4.2" height="4.2" fill="#fff" stroke="#000" stroke-width="1.2"/><rect x="167.3" y="55.7" width="4.2" height="4.2" fill="#fff" stroke="#000" stroke-width="1.2"/><rect x="169.0" y="61.5" width="4.2" height="4.2" fill="#fff" stroke="#000" stroke-width="1.2"/><rect x="170.7" y="67.2" width="4.2" height="4.2" fill="#fff" stroke="#000" stroke-width="1.2"/><rect x="172.4" y="73.0" width="4.2" height="4.2" fill="#fff" stroke="#000" stroke-width="1.2"/><rect x="174.1" y="78.8" width="4.2" height="4.2" fill="#fff" stroke="#000" stroke-width="1.2"/><rect x="175.8" y="84.6" width="4.2" height="4.2" fill="#fff" stroke="#000" stroke-width="1.2"/><rect x="177.5" y="90.4" width="4.2" height="4.2" fill="#fff" stroke="#000" stroke-width="1.2"/><rect x="179.2" y="96.2" width="4.2" height="4.2" fill="#fff" stroke="#000" stroke-width="1.2"/><rect x="180.9" y="102.0" width="4.2" height="4.2" fill="#fff" stroke="#000" stroke-width="1.2"/><rect x="182.6" y="14.8" width="4.2" height="4.2" fill="#fff" stroke="#000" stroke-width="1.2"/><rect x="184.3" y="20.6" width="4.2" height="4.2" fill="#fff" stroke="#000" stroke-width="1.2"/><rect x="186.0" y="26.4" width="4.2" height="4.2" fill="#fff" stroke="#000" stroke-width="1.2"/><rect x="187.7" y="32.1" width="4.2" height="4.2" fill="#fff" stroke="#000" stroke-width="1.2"/><rect x="189.4" y="37.9" width="4.2" height="4.2" fill="#fff" stroke="#000" stroke-width="1.2"/><rect x="191.1" y="43.7" width="4.2" height="4.2" fill="#fff" stroke="#000" stroke-width="1.2"/><rect x="192.8" y="49.5" width="4.2" height="4.2" fill="#fff" stroke="#000" stroke-width="1.2"/><rect x="194.5" y="55.3" width="4.2" height="4.2" fill="#fff" stroke="#000" stroke-width="1.2"/><rect x="196.2" y="61.1" width="4.2" height="4.2" fill="#fff" stroke="#000" stroke-width="1.2"/><rect x="197.9" y="66.9" width="4.2" height="4.2" fill="#fff" stroke="#000" stroke-width="1.2"/><rect x="199.6" y="72.7" width="4.2" height="4.2" fill="#fff" stroke="#000" stroke-width="1.2"/><rect x="201.3" y="78.5" width="4.2" height="4.2" fill="#fff" stroke="#000" stroke-width="1.2"/><rect x="203.0" y="84.3" width="4.2" height="4.2" fill="#fff" stroke="#000" stroke-width="1.2"/><rect x="204.7" y="90.1" width="4.2" height="4.2" fill="#fff" stroke="#000" stroke-width="1.2"/><rect x="206.4" y="95.9" width="4.2" height="4.2" fill="#fff" stroke="#000" stroke-width="1.2"/><rect x="208.1" y="101.7" width="4.2" height="4.2" fill="#fff" stroke="#000" stroke-width="1.2"/></svg>
<svg style="left:1370px;top:770px" width="218" height="115"><rect x="0.5" y="0.5" width="217" height="114" fill="#4d4d4d" stroke="#000" stroke-width="1.2"/><text x="107.0" y="10.5" font-size="8.6" fill="#e0e0e0" text-anchor="middle" font-family="Liberation Sans" letter-spacing=".3">INT_UPDATE_10_HZ</text><g shape-rendering="crispEdges" stroke="#000" stroke-width="1"><line x1="28.5" y1="88.5" x2="212" y2="88.5" stroke-dasharray="6 4"/><line x1="28.5" y1="69.5" x2="212" y2="69.5" stroke-dasharray="6 4"/><line x1="28.5" y1="49.5" x2="212" y2="49.5" stroke-dasharray="6 4"/><line x1="28.5" y1="30.5" x2="212" y2="30.5" stroke-dasharray="6 4"/><line x1="74.5" y1="11.6" x2="74.5" y2="111.6" stroke-dasharray="6 4"/><line x1="134.5" y1="11.6" x2="134.5" y2="111.6" stroke-dasharray="6 4"/><line x1="195.5" y1="11.6" x2="195.5" y2="111.6" stroke-dasharray="6 4"/><line x1="28.5" y1="11.6" x2="28.5" y2="107.6" stroke-width="2"/><line x1="22" y1="107.5" x2="212" y2="107.5" stroke-width="2"/><line x1="22" y1="107.5" x2="28" y2="107.5"/><line x1="24" y1="103.5" x2="28" y2="103.5"/><line x1="24" y1="99.5" x2="28" y2="99.5"/><line x1="24" y1="96.5" x2="28" y2="96.5"/><line x1="24" y1="92.5" x2="28" y2="92.5"/><line x1="22" y1="88.5" x2="28" y2="88.5"/><line x1="24" y1="84.5" x2="28" y2="84.5"/><line x1="24" y1="80.5" x2="28" y2="80.5"/><line x1="24" y1="76.5" x2="28" y2="76.5"/><line x1="24" y1="73.5" x2="28" y2="73.5"/><line x1="22" y1="69.5" x2="28" y2="69.5"/><line x1="24" y1="65.5" x2="28" y2="65.5"/><line x1="24" y1="61.5" x2="28" y2="61.5"/><line x1="24" y1="57.5" x2="28" y2="57.5"/><line x1="24" y1="53.5" x2="28" y2="53.5"/><line x1="22" y1="49.5" x2="28" y2="49.5"/><line x1="24" y1="46.5" x2="28" y2="46.5"/><line x1="24" y1="42.5" x2="28" y2="42.5"/><line x1="24" y1="38.5" x2="28" y2="38.5"/><line x1="24" y1="34.5" x2="28" y2="34.5"/><line x1="22" y1="30.5" x2="28" y2="30.5"/><line x1="24" y1="26.5" x2="28" y2="26.5"/><line x1="24" y1="23.5" x2="28" y2="23.5"/><line x1="24" y1="19.5" x2="28" y2="19.5"/><line x1="24" y1="15.5" x2="28" y2="15.5"/><line x1="22" y1="11.5" x2="28" y2="11.5"/><line x1="43.5" y1="107.6" x2="43.5" y2="111.6"/><line x1="104.5" y1="107.6" x2="104.5" y2="111.6"/><line x1="165.5" y1="107.6" x2="165.5" y2="111.6"/></g><text x="27" y="110.6" font-size="8.8" fill="#000" text-anchor="end" font-family="Liberation Sans">0.0</text><text x="27" y="91.4" font-size="8.8" fill="#000" text-anchor="end" font-family="Liberation Sans">20.0</text><text x="27" y="72.2" font-size="8.8" fill="#000" text-anchor="end" font-family="Liberation Sans">40.0</text><text x="27" y="53.0" font-size="8.8" fill="#000" text-anchor="end" font-family="Liberation Sans">60.0</text><text x="27" y="33.8" font-size="8.8" fill="#000" text-anchor="end" font-family="Liberation Sans">80.0</text><text x="27" y="14.6" font-size="8.8" fill="#000" text-anchor="end" font-family="Liberation Sans">100.0</text><polyline points="30.0,39.2 32.2,40.3 34.4,41.5 36.6,42.6 38.8,43.8 41.0,44.9 43.2,46.1 45.4,47.2 47.6,48.4 49.8,49.5 52.0,50.7 54.2,51.8 56.4,53.0 58.6,54.1 60.8,55.3 63.0,56.4 65.2,57.6 67.4,58.7 69.6,59.9 71.8,61.0 74.0,62.2 76.2,63.3 78.4,64.5 80.6,65.6 82.8,66.8 85.0,67.9 87.2,69.1 89.4,70.2 91.6,71.4 93.8,72.5 96.0,73.7 98.2,74.8 100.4,76.0 102.6,77.1 104.8,78.3 107.0,79.4 109.2,80.6 111.4,81.7 113.6,82.9 115.8,84.0 118.0,85.2 120.2,86.3 122.4,87.5 124.6,88.7 126.8,89.8 129.0,91.0 131.2,92.1 133.4,93.3 135.6,94.4 137.8,95.6 140.0,96.7 142.2,97.9 144.4,99.0 146.6,100.2 148.8,101.3 151.0,102.5 153.2,103.6 155.4,104.8 157.6,105.9 159.8,107.1 160.9,107.1 160.9,14.0 162.0,14.0 164.2,15.2 166.4,16.3 168.6,17.5 170.8,18.6 173.0,19.8 175.2,20.9 177.4,22.1 179.6,23.3 181.8,24.4 184.0,25.6 186.2,26.7 188.4,27.9 190.6,29.0 192.8,30.2 195.0,31.3 197.2,32.5 199.4,33.6 201.6,34.8 203.8,35.9 206.0,37.1 208.2,38.2 210.4,39.4" fill="none" stroke="#fff" stroke-width="1.1"/><rect x="27.9" y="37.1" width="4.2" height="4.2" fill="#fff" stroke="#000" stroke-width="1.2"/><rect x="30.1" y="38.2" width="4.2" height="4.2" fill="#fff" stroke="#000" stroke-width="1.2"/><rect x="32.3" y="39.4" width="4.2" height="4.2" fill="#fff" stroke="#000" stroke-width="1.2"/><rect x="34.5" y="40.5" width="4.2" height="4.2" fill="#fff" stroke="#000" stroke-width="1.2"/><rect x="36.7" y="41.7" width="4.2" height="4.2" fill="#fff" stroke="#000" stroke-width="1.2"/><rect x="38.9" y="42.8" width="4.2" height="4.2" fill="#fff" stroke="#000" stroke-width="1.2"/><rect x="41.1" y="44.0" width="4.2" height="4.2" fill="#fff" stroke="#000" stroke-width="1.2"/><rect x="43.3" y="45.1" width="4.2" height="4.2" fill="#fff" stroke="#000" stroke-width="1.2"/><rect x="45.5" y="46.3" width="4.2" height="4.2" fill="#fff" stroke="#000" stroke-width="1.2"/><rect x="47.7" y="47.4" width="4.2" height="4.2" fill="#fff" stroke="#000" stroke-width="1.2"/><rect x="49.9" y="48.6" width="4.2" height="4.2" fill="#fff" stroke="#000" stroke-width="1.2"/><rect x="52.1" y="49.7" width="4.2" height="4.2" fill="#fff" stroke="#000" stroke-width="1.2"/><rect x="54.3" y="50.9" width="4.2" height="4.2" fill="#fff" stroke="#000" stroke-width="1.2"/><rect x="56.5" y="52.0" width="4.2" height="4.2" fill="#fff" stroke="#000" stroke-width="1.2"/><rect x="58.7" y="53.2" width="4.2" height="4.2" fill="#fff" stroke="#000" stroke-width="1.2"/><rect x="60.9" y="54.3" width="4.2" height="4.2" fill="#fff" stroke="#000" stroke-width="1.2"/><rect x="63.1" y="55.5" width="4.2" height="4.2" fill="#fff" stroke="#000" stroke-width="1.2"/><rect x="65.3" y="56.6" width="4.2" height="4.2" fill="#fff" stroke="#000" stroke-width="1.2"/><rect x="67.5" y="57.8" width="4.2" height="4.2" fill="#fff" stroke="#000" stroke-width="1.2"/><rect x="69.7" y="58.9" width="4.2" height="4.2" fill="#fff" stroke="#000" stroke-width="1.2"/><rect x="71.9" y="60.1" width="4.2" height="4.2" fill="#fff" stroke="#000" stroke-width="1.2"/><rect x="74.1" y="61.2" width="4.2" height="4.2" fill="#fff" stroke="#000" stroke-width="1.2"/><rect x="76.3" y="62.4" width="4.2" height="4.2" fill="#fff" stroke="#000" stroke-width="1.2"/><rect x="78.5" y="63.5" width="4.2" height="4.2" fill="#fff" stroke="#000" stroke-width="1.2"/><rect x="80.7" y="64.7" width="4.2" height="4.2" fill="#fff" stroke="#000" stroke-width="1.2"/><rect x="82.9" y="65.8" width="4.2" height="4.2" fill="#fff" stroke="#000" stroke-width="1.2"/><rect x="85.1" y="67.0" width="4.2" height="4.2" fill="#fff" stroke="#000" stroke-width="1.2"/><rect x="87.3" y="68.1" width="4.2" height="4.2" fill="#fff" stroke="#000" stroke-width="1.2"/><rect x="89.5" y="69.3" width="4.2" height="4.2" fill="#fff" stroke="#000" stroke-width="1.2"/><rect x="91.7" y="70.4" width="4.2" height="4.2" fill="#fff" stroke="#000" stroke-width="1.2"/><rect x="93.9" y="71.6" width="4.2" height="4.2" fill="#fff" stroke="#000" stroke-width="1.2"/><rect x="96.1" y="72.7" width="4.2" height="4.2" fill="#fff" stroke="#000" stroke-width="1.2"/><rect x="98.3" y="73.9" width="4.2" height="4.2" fill="#fff" stroke="#000" stroke-width="1.2"/><rect x="100.5" y="75.0" width="4.2" height="4.2" fill="#fff" stroke="#000" stroke-width="1.2"/><rect x="102.7" y="76.2" width="4.2" height="4.2" fill="#fff" stroke="#000" stroke-width="1.2"/><rect x="104.9" y="77.3" width="4.2" height="4.2" fill="#fff" stroke="#000" stroke-width="1.2"/><rect x="107.1" y="78.5" width="4.2" height="4.2" fill="#fff" stroke="#000" stroke-width="1.2"/><rect x="109.3" y="79.6" width="4.2" height="4.2" fill="#fff" stroke="#000" stroke-width="1.2"/><rect x="111.5" y="80.8" width="4.2" height="4.2" fill="#fff" stroke="#000" stroke-width="1.2"/><rect x="113.7" y="81.9" width="4.2" height="4.2" fill="#fff" stroke="#000" stroke-width="1.2"/><rect x="115.9" y="83.1" width="4.2" height="4.2" fill="#fff" stroke="#000" stroke-width="1.2"/><rect x="118.1" y="84.2" width="4.2" height="4.2" fill="#fff" stroke="#000" stroke-width="1.2"/><rect x="120.3" y="85.4" width="4.2" height="4.2" fill="#fff" stroke="#000" stroke-width="1.2"/><rect x="122.5" y="86.6" width="4.2" height="4.2" fill="#fff" stroke="#000" stroke-width="1.2"/><rect x="124.7" y="87.7" width="4.2" height="4.2" fill="#fff" stroke="#000" stroke-width="1.2"/><rect x="126.9" y="88.9" width="4.2" height="4.2" fill="#fff" stroke="#000" stroke-width="1.2"/><rect x="129.1" y="90.0" width="4.2" height="4.2" fill="#fff" stroke="#000" stroke-width="1.2"/><rect x="131.3" y="91.2" width="4.2" height="4.2" fill="#fff" stroke="#000" stroke-width="1.2"/><rect x="133.5" y="92.3" width="4.2" height="4.2" fill="#fff" stroke="#000" stroke-width="1.2"/><rect x="135.7" y="93.5" width="4.2" height="4.2" fill="#fff" stroke="#000" stroke-width="1.2"/><rect x="137.9" y="94.6" width="4.2" height="4.2" fill="#fff" stroke="#000" stroke-width="1.2"/><rect x="140.1" y="95.8" width="4.2" height="4.2" fill="#fff" stroke="#000" stroke-width="1.2"/><rect x="142.3" y="96.9" width="4.2" height="4.2" fill="#fff" stroke="#000" stroke-width="1.2"/><rect x="144.5" y="98.1" width="4.2" height="4.2" fill="#fff" stroke="#000" stroke-width="1.2"/><rect x="146.7" y="99.2" width="4.2" height="4.2" fill="#fff" stroke="#000" stroke-width="1.2"/><rect x="148.9" y="100.4" width="4.2" height="4.2" fill="#fff" stroke="#000" stroke-width="1.2"/><rect x="151.1" y="101.5" width="4.2" height="4.2" fill="#fff" stroke="#000" stroke-width="1.2"/><rect x="153.3" y="102.7" width="4.2" height="4.2" fill="#fff" stroke="#000" stroke-width="1.2"/><rect x="155.5" y="103.8" width="4.2" height="4.2" fill="#fff" stroke="#000" stroke-width="1.2"/><rect x="157.7" y="105.0" width="4.2" height="4.2" fill="#fff" stroke="#000" stroke-width="1.2"/><rect x="159.9" y="11.9" width="4.2" height="4.2" fill="#fff" stroke="#000" stroke-width="1.2"/><rect x="162.1" y="13.1" width="4.2" height="4.2" fill="#fff" stroke="#000" stroke-width="1.2"/><rect x="164.3" y="14.2" width="4.2" height="4.2" fill="#fff" stroke="#000" stroke-width="1.2"/><rect x="166.5" y="15.4" width="4.2" height="4.2" fill="#fff" stroke="#000" stroke-width="1.2"/><rect x="168.7" y="16.5" width="4.2" height="4.2" fill="#fff" stroke="#000" stroke-width="1.2"/><rect x="170.9" y="17.7" width="4.2" height="4.2" fill="#fff" stroke="#000" stroke-width="1.2"/><rect x="173.1" y="18.8" width="4.2" height="4.2" fill="#fff" stroke="#000" stroke-width="1.2"/><rect x="175.3" y="20.0" width="4.2" height="4.2" fill="#fff" stroke="#000" stroke-width="1.2"/><rect x="177.5" y="21.2" width="4.2" height="4.2" fill="#fff" stroke="#000" stroke-width="1.2"/><rect x="179.7" y="22.3" width="4.2" height="4.2" fill="#fff" stroke="#000" stroke-width="1.2"/><rect x="181.9" y="23.5" width="4.2" height="4.2" fill="#fff" stroke="#000" stroke-width="1.2"/><rect x="184.1" y="24.6" width="4.2" height="4.2" fill="#fff" stroke="#000" stroke-width="1.2"/><rect x="186.3" y="25.8" width="4.2" height="4.2" fill="#fff" stroke="#000" stroke-width="1.2"/><rect x="188.5" y="26.9" width="4.2" height="4.2" fill="#fff" stroke="#000" stroke-width="1.2"/><rect x="190.7" y="28.1" width="4.2" height="4.2" fill="#fff" stroke="#000" stroke-width="1.2"/><rect x="192.9" y="29.2" width="4.2" height="4.2" fill="#fff" stroke="#000" stroke-width="1.2"/><rect x="195.1" y="30.4" width="4.2" height="4.2" fill="#fff" stroke="#000" stroke-width="1.2"/><rect x="197.3" y="31.5" width="4.2" height="4.2" fill="#fff" stroke="#000" stroke-width="1.2"/><rect x="199.5" y="32.7" width="4.2" height="4.2" fill="#fff" stroke="#000" stroke-width="1.2"/><rect x="201.7" y="33.8" width="4.2" height="4.2" fill="#fff" stroke="#000" stroke-width="1.2"/><rect x="203.9" y="35.0" width="4.2" height="4.2" fill="#fff" stroke="#000" stroke-width="1.2"/><rect x="206.1" y="36.1" width="4.2" height="4.2" fill="#fff" stroke="#000" stroke-width="1.2"/><rect x="208.3" y="37.3" width="4.2" height="4.2" fill="#fff" stroke="#000" stroke-width="1.2"/></svg>
<div style="left:496px;top:112px;width:770px;height:560px;border:1px solid rgba(0,0,0,.9);border-radius:7px 7px 6px 6px;background:linear-gradient(to bottom,rgba(235,242,248,.72) 0px,rgba(225,232,238,.78) 29px,rgba(205,210,215,.72) 60px,rgba(185,185,185,.7) 100%);backdrop-filter:blur(7px);box-shadow:inset 0 0 0 1px rgba(255,255,255,.55),0 0 12px rgba(0,0,0,.6)"></div>
<div style="left:502px;top:140px;width:758px;height:525px;border:1px solid rgba(40,40,40,.8)"></div>
<div style="left:500px;top:114px;width:130px;height:24px;background:rgba(255,255,255,.75);border-radius:12px;filter:blur(7px)"></div>
<div class="t" style="left:504.5px;top:120.5px;font-size:11.8px;color:#101020">steam_engine.glg</div>
<div style="left:1157px;top:112px;width:101px;height:19px;border:1px solid rgba(60,60,80,.55);border-top:none;border-radius:0 0 5px 5px;overflow:hidden;background:#ddd"><div style="left:0;top:0;width:27px;height:18px;background:linear-gradient(#f4f4f4,#dcdcdc 50%,#c8c8c8 51%,#e0e0e0);border-right:1px solid rgba(60,60,80,.45)"></div><div style="left:27px;top:0;width:27px;height:18px;background:linear-gradient(#f4f4f4,#dcdcdc 50%,#c8c8c8 51%,#e0e0e0);border-right:1px solid rgba(60,60,80,.45)"></div><div style="left:54px;top:0;width:46px;height:18px;background:linear-gradient(#e8a090,#d05040 50%,#b83020 51%,#d06040)"></div><svg style="left:0;top:0" width="101" height="19"><rect x="8.5" y="9.5" width="11" height="4" fill="#fff" stroke="#404868" stroke-width="1.2" rx="1"/><rect x="35.5" y="4.5" width="11" height="9" fill="none" stroke="#404868" stroke-width="1.2" rx="1"/><rect x="38.5" y="7.5" width="5" height="3" fill="none" stroke="#404868" stroke-width="1.2"/><path d="M74 5.5 L82.5 12.5 M82.5 5.5 L74 12.5" stroke="#404868" stroke-width="4" stroke-linecap="square"/><path d="M74 5.5 L82.5 12.5 M82.5 5.5 L74 12.5" stroke="#fff" stroke-width="2" stroke-linecap="square"/></svg></div>
<svg style="left:503px;top:141px" width="756" height="523"><g transform="translate(-503 -141)"><defs>
<linearGradient id="pb" x1="0" y1="0" x2="0" y2="1"><stop offset="0" stop-color="#0a5c8c"/><stop offset=".45" stop-color="#1a8cc4"/><stop offset="1" stop-color="#06466c"/></linearGradient>
<linearGradient id="pbv" x1="0" y1="0" x2="1" y2="0"><stop offset="0" stop-color="#0a5c8c"/><stop offset=".45" stop-color="#1a8cc4"/><stop offset="1" stop-color="#06466c"/></linearGradient>
<linearGradient id="pc" x1="0" y1="0" x2="0" y2="1"><stop offset="0" stop-color="#00a8b8"/><stop offset=".4" stop-color="#00f4ff"/><stop offset="1" stop-color="#0090a0"/></linearGradient>
<linearGradient id="pcv" x1="0" y1="0" x2="1" y2="0"><stop offset="0" stop-color="#00a8b8"/><stop offset=".4" stop-color="#00f4ff"/><stop offset="1" stop-color="#0090a0"/></linearGradient>
<linearGradient id="vg" x1="0" y1="0" x2="1" y2="1"><stop offset="0" stop-color="#fff"/><stop offset=".5" stop-color="#c8c8c8"/><stop offset="1" stop-color="#707070"/></linearGradient>
<linearGradient id="cyl" x1="0" y1="0" x2="0" y2="1"><stop offset="0" stop-color="#6a8888"/><stop offset="1" stop-color="#d0d4d4"/></linearGradient>
<linearGradient id="rod" x1="0" y1="0" x2="0" y2="1"><stop offset="0" stop-color="#c8d0d0"/><stop offset="1" stop-color="#8aa0a0"/></linearGradient>
<linearGradient id="head" x1="0" y1="0" x2="1" y2="0"><stop offset="0" stop-color="#fff"/><stop offset="1" stop-color="#607070"/></linearGradient>
<linearGradient id="btop" x1="0" y1="0" x2="0" y2="1"><stop offset="0" stop-color="#0f88c0"/><stop offset="1" stop-color="#0a6ea2"/></linearGradient>
<linearGradient id="bbot" x1="0" y1="0" x2="0" y2="1"><stop offset="0" stop-color="#00e4ec"/><stop offset="1" stop-color="#00b8c4"/></linearGradient>
<linearGradient id="capLg" x1="0" y1="0" x2="1" y2="0"><stop offset="0" stop-color="#003848" stop-opacity=".35"/><stop offset=".35" stop-color="#fff" stop-opacity=".12"/><stop offset="1" stop-color="#00f8ff" stop-opacity="0"/></linearGradient>
<linearGradient id="capRg" x1="0" y1="0" x2="1" y2="0"><stop offset="0" stop-color="#00f8ff" stop-opacity="0"/><stop offset=".7" stop-color="#fff" stop-opacity=".12"/><stop offset="1" stop-color="#003848" stop-opacity=".3"/></linearGradient>
<pattern id="mesh" width="3" height="3" patternUnits="userSpaceOnUse"><rect width="3" height="3" fill="#303030"/><rect width="1.5" height="1.5" fill="#c0c0c0"/><rect x="1.5" y="1.5" width="1.5" height="1.5" fill="#c0c0c0"/></pattern>
<clipPath id="bclip"><path d="M686 262 L858 262 Q910 262 910.5 298.75 Q910 335 858 335 L686 335 Q633 335 633 298.75 Q633 262 686 262 Z"/></clipPath>
</defs><rect x="503" y="141" width="756" height="523" fill="#000"/><rect x="512.5" y="147.5" width="737.5" height="26" fill="#000080" stroke="#fff" stroke-width="1"/><rect x="516" y="151" width="70" height="20" fill="#c4c4c4"/><path d="M516 171 L516 151 L586 151" stroke="#fff" stroke-width="2" fill="none"/><path d="M516 171 L586 171 L586 151" stroke="#707070" stroke-width="2" fill="none"/><text x="551.0" y="165.5" font-size="12.5" text-anchor="middle" font-family="Liberation Serif" fill="#000">Start Engine</text><rect x="588" y="151" width="67" height="20" fill="#c4c4c4"/><path d="M588 171 L588 151 L655 151" stroke="#fff" stroke-width="2" fill="none"/><path d="M588 171 L655 171 L655 151" stroke="#707070" stroke-width="2" fill="none"/><text x="621.5" y="165.5" font-size="12.5" text-anchor="middle" font-family="Liberation Serif" fill="#000">Stop Engine</text><rect x="1149" y="151" width="97" height="20" fill="#c4c4c4"/><path d="M1149 171 L1149 151 L1246 151" stroke="#fff" stroke-width="2" fill="none"/><path d="M1149 171 L1246 171 L1246 151" stroke="#707070" stroke-width="2" fill="none"/><text x="1197.5" y="165.5" font-size="12.5" text-anchor="middle" font-family="Liberation Serif" fill="#000">Exit</text><text x="657" y="167" font-size="17.6" font-weight="bold" font-style="italic" font-family="Liberation Serif" fill="#fff" textLength="449" lengthAdjust="spacingAndGlyphs">Single Stage, Double Action Steam Engine Demonstration</text><text x="519" y="193" font-size="12.5" font-family="Liberation Serif" fill="#d8d8d8">Pressure Release</text><text x="745" y="193" font-size="12.5" font-family="Liberation Serif" fill="#d8d8d8">Piston A</text><text x="519" y="266" font-size="12.5" font-family="Liberation Serif" fill="#d8d8d8">Heat Source</text><text x="631" y="266" font-size="12.5" font-family="Liberation Serif" fill="#d8d8d8">Boiler</text><text x="519" y="364" font-size="12.5" font-family="Liberation Serif" fill="#d8d8d8">Tank Fill/Drain</text><text x="745" y="412" font-size="12.5" font-family="Liberation Serif" fill="#d8d8d8">Piston B</text><rect x="543" y="205" width="90" height="10" fill="url(#pb)"/><text x="549" y="213" font-size="7.5" font-family="Liberation Serif" font-weight="bold" fill="#fff">Manual</text><rect x="633" y="202" width="22" height="17" fill="#9a9a9a" rx="1"/><path d="M633 202 L644.0 210.5 L633 219 Z" fill="#d0d0d0"/><path d="M655 202 L644.0 210.5 L655 219 Z" fill="#b8b8b8"/><path d="M633 202 L644.0 210.5 L655 202 Z" fill="#fff"/><path d="M633 219 L644.0 210.5 L655 219 Z" fill="#f4f4f4"/><rect x="655" y="205" width="46" height="10" fill="url(#pb)"/><path d="M701.0 199.0 A22 22 0 0 1 723.0 221.0 L703.0 221.0 A2 2 0 0 0 701.0 219.0 Z" fill="url(#pb)"/><path d="M701 202 Q726 202 726 221 L708 221 Q708 215 701 215 Z" fill="url(#pb)"/><rect x="708" y="221" width="14" height="38" fill="url(#pbv)"/><rect x="705" y="258" width="20" height="3" fill="#0a6ea2"/><rect x="543" y="226" width="89" height="10" fill="url(#pc)"/><text x="549" y="234" font-size="7.5" font-family="Liberation Serif" font-weight="bold" fill="#fff">Automatic</text><rect x="632" y="225" width="24" height="12" fill="url(#mesh)"/><rect x="656" y="226" width="15" height="10" fill="url(#pc)"/><path d="M671 223 Q696 223 696 241 L679 241 Q679 236 671 236 Z" fill="url(#pcv)"/><rect x="679" y="241" width="13" height="18" fill="url(#pcv)"/><rect x="676" y="258" width="20" height="3" fill="#00c0cc"/><g fill="#c8c8c8" stroke="#888" stroke-width=".5"><ellipse cx="530" cy="218" rx="6" ry="4"/><ellipse cx="527" cy="224" rx="6" ry="4"/><ellipse cx="534" cy="227" rx="5" ry="4"/><ellipse cx="537" cy="232" rx="5" ry="4"/><ellipse cx="532" cy="222" rx="4" ry="3" fill="#e8e8e8"/></g><path d="M768 225 Q742 225 742 246 L760 246 Q760 237 768 237 Z" fill="url(#pc)"/><rect x="746" y="246" width="14" height="13" fill="url(#pcv)"/><rect x="743" y="258" width="20" height="3" fill="#00c0cc"/><rect x="768" y="228" width="15" height="10" fill="url(#pc)"/><rect x="783" y="226" width="23" height="14" fill="#9a9a9a" rx="1"/><path d="M783 226 L794.5 233.0 L783 240 Z" fill="#d0d0d0"/><path d="M806 226 L794.5 233.0 L806 240 Z" fill="#b8b8b8"/><path d="M783 226 L794.5 233.0 L806 226 Z" fill="#fff"/><path d="M783 240 L794.5 233.0 L806 240 Z" fill="#f4f4f4"/><rect x="806" y="229" width="37" height="8" fill="url(#pc)"/><path d="M843 228 L848 230 L849 234 L848 237 L843 238 Z" fill="#0090a0"/><rect x="851" y="206" width="6" height="29" fill="url(#pcv)"/><rect x="857" y="210" width="9" height="4" fill="url(#pc)"/><rect x="865" y="207" width="15" height="12" fill="#9a9a9a" rx="1"/><path d="M865 207 L872.5 213.0 L865 219 Z" fill="#d0d0d0"/><path d="M880 207 L872.5 213.0 L880 219 Z" fill="#b8b8b8"/><path d="M865 207 L872.5 213.0 L880 207 Z" fill="#fff"/><path d="M865 219 L872.5 213.0 L880 219 Z" fill="#f4f4f4"/><rect x="848" y="215" width="14" height="13" fill="#9a9a9a" rx="1"/><path d="M848 215 L855.0 221.5 L848 228 Z" fill="#d0d0d0"/><path d="M862 215 L855.0 221.5 L862 228 Z" fill="#b8b8b8"/><path d="M848 215 L855.0 221.5 L862 215 Z" fill="#fff"/><path d="M848 228 L855.0 221.5 L862 228 Z" fill="#f4f4f4"/><rect x="857" y="226" width="143" height="6" fill="url(#pc)"/><g fill="#c8c490"><rect x="882" y="211" width="5" height="30"/><rect x="882" y="237" width="180" height="4"/><rect x="958" y="211" width="5" height="30"/><rect x="963" y="209" width="27" height="4"/><rect x="988" y="206" width="5" height="8"/></g><rect x="963" y="208" width="16" height="11" fill="#9a9a9a" rx="1"/><path d="M963 208 L971.0 213.5 L963 219 Z" fill="#d0d0d0"/><path d="M979 208 L971.0 213.5 L979 219 Z" fill="#b8b8b8"/><path d="M963 208 L971.0 213.5 L979 208 Z" fill="#fff"/><path d="M963 219 L971.0 213.5 L979 219 Z" fill="#f4f4f4"/><rect x="981" y="215" width="17" height="11" fill="#9a9a9a" rx="1"/><path d="M981 215 L989.5 220.5 L981 226 Z" fill="#d0d0d0"/><path d="M998 215 L989.5 220.5 L998 226 Z" fill="#b8b8b8"/><path d="M981 215 L989.5 220.5 L998 215 Z" fill="#fff"/><path d="M981 226 L989.5 220.5 L998 226 Z" fill="#f4f4f4"/><text x="1068" y="240" font-size="7" font-family="Liberation Serif" font-weight="bold" fill="#fff">Exhaust</text><rect x="844" y="185" width="61" height="20" fill="url(#cyl)"/><rect x="905" y="185" width="10" height="20" fill="url(#head)"/><rect x="915" y="185" width="86" height="6" fill="#7a9898"/><rect x="915" y="199" width="86" height="6" fill="#a8b8b8"/><rect x="915" y="192" width="248" height="5" fill="url(#rod)"/><text x="527" y="279" font-size="10.5" font-family="Liberation Serif" fill="#e8e8e8" letter-spacing=".3">OFF</text><text x="567" y="279" font-size="10.5" font-family="Liberation Serif" fill="#e8e8e8" letter-spacing=".3">ON</text><rect x="533" y="282" width="3" height="2" fill="#fff"/><defs><linearGradient id="knob" x1="0" y1="1" x2="1" y2="0" gradientTransform="rotate(0)"><stop offset="0" stop-color="#000"/><stop offset=".45" stop-color="#fff"/><stop offset="1" stop-color="#000"/></linearGradient></defs><path d="M537 305 Q548 291 575 283 L580 287 Q560 302 548 313 Z" fill="url(#knob)"/><path d="M555 297 L575 285 L578 288 L559 300 Z" fill="#b00000" stroke="#000" stroke-width=".5"/><path d="M575 282 L581 279 L582 282 L577 285 Z" fill="#fff"/><text x="531" y="333" font-size="11.5" font-family="Liberation Serif" fill="#fff">475</text><text x="557" y="333" font-size="11.5" font-family="Liberation Serif" fill="#fff">F</text><rect x="573" y="320" width="21" height="9" fill="#b0b0b0" stroke="#e0e0e0" stroke-width=".8"/><rect x="573" y="331" width="21" height="9" fill="#b0b0b0" stroke="#e0e0e0" stroke-width=".8"/><path d="M580 325 L583.5 321.5 L587 325 Z M580 334 L583.5 338 L587 334 Z" fill="#000"/><path d="M602 272 L650 272 L650 325 L602 325 Z M610 279 L650 279 L650 288 L610 288 Z M610 295 L650 295 L650 304 L610 304 Z M610 311 L650 311 L650 319 L610 319 Z" fill="#f8b000" fill-rule="evenodd"/><path d="M895 272 L927 272 L927 325 L895 325 Z M895 279 L918 279 L918 288 L895 288 Z M895 295 L918 295 L918 304 L895 304 Z M895 311 L918 311 L918 319 L895 319 Z" fill="#7a5010" fill-rule="evenodd"/><rect x="678" y="336" width="14" height="37" fill="url(#pbv)"/><rect x="708" y="336" width="14" height="57" fill="url(#pbv)"/><rect x="746" y="336" width="14" height="16" fill="url(#pcv)"/><rect x="675" y="336" width="20" height="2" fill="#0a6ea2"/><rect x="705" y="336" width="20" height="2" fill="#0a6ea2"/><rect x="743" y="336" width="20" height="2" fill="#00c0cc"/><g clip-path="url(#bclip)"><rect x="630" y="260" width="285" height="28" fill="url(#btop)"/><rect x="630" y="287" width="285" height="50" fill="url(#bbot)"/><rect x="630" y="260" width="56" height="80" fill="url(#capLg)"/><rect x="858" y="260" width="56" height="80" fill="url(#capRg)"/></g><line x1="686" y1="262" x2="686" y2="335" stroke="#000" stroke-width="1"/><line x1="858" y1="262" x2="858" y2="335" stroke="#000" stroke-width="1"/><text x="955" y="266" font-size="12" font-family="Liberation Serif" fill="#fff">% Full</text><text x="957" y="327.5" font-size="6.5" font-family="Liberation Sans" font-weight="bold" text-anchor="end" fill="#fff">0</text><line x1="963" y1="325.0" x2="993" y2="325.0" stroke="#fff" stroke-width="1"/><text x="957" y="316.9" font-size="6.5" font-family="Liberation Sans" font-weight="bold" text-anchor="end" fill="#fff">20</text><line x1="963" y1="314.4" x2="993" y2="314.4" stroke="#fff" stroke-width="1"/><text x="957" y="306.3" font-size="6.5" font-family="Liberation Sans" font-weight="bold" text-anchor="end" fill="#fff">40</text><line x1="963" y1="303.8" x2="993" y2="303.8" stroke="#fff" stroke-width="1"/><text x="957" y="295.7" font-size="6.5" font-family="Liberation Sans" font-weight="bold" text-anchor="end" fill="#fff">60</text><line x1="963" y1="293.2" x2="993" y2="293.2" stroke="#fff" stroke-width="1"/><text x="957" y="285.1" font-size="6.5" font-family="Liberation Sans" font-weight="bold" text-anchor="end" fill="#fff">80</text><line x1="963" y1="282.6" x2="993" y2="282.6" stroke="#fff" stroke-width="1"/><text x="957" y="274.5" font-size="6.5" font-family="Liberation Sans" font-weight="bold" text-anchor="end" fill="#fff">100</text><line x1="963" y1="272.0" x2="993" y2="272.0" stroke="#fff" stroke-width="1"/><rect x="972" y="290.5" width="21" height="34.5" fill="#00c0c8"/><line x1="972" y1="314.4" x2="993" y2="314.4" stroke="#fff" stroke-width="1"/><line x1="972" y1="303.8" x2="993" y2="303.8" stroke="#fff" stroke-width="1"/><line x1="972" y1="293.2" x2="993" y2="293.2" stroke="#fff" stroke-width="1"/><rect x="971.5" y="272" width="22" height="53" fill="none" stroke="#fff" stroke-width="1"/><text x="962" y="337" font-size="6.5" font-family="Liberation Sans" font-weight="bold" fill="#fff">64.82</text><text x="1074.5" y="265" font-size="7" font-weight="bold" font-family="Liberation Serif" text-anchor="middle" fill="#fff" dy="1.5">Pressure</text><polyline points="1053.7,322.7 1052.0,321.3 1050.5,319.7 1049.1,318.0 1047.9,316.3 1046.8,314.5 1045.9,312.6 1045.2,310.7 1044.7,308.7 1044.4,306.7 1044.2,304.7 1044.3,302.2 1044.7,299.6 1045.4,297.0 1046.4,294.4 1047.7,292.0 1049.3,289.6 1051.3,287.5 1053.4,285.5 1055.8,283.6 1058.4,282.0 1061.2,280.6 1064.2,279.5 1067.3,278.6 1070.4,278.0 1073.7,277.6 1077.0,277.5 1080.2,277.7 1083.4,278.1 1086.6,278.8 1089.6,279.8" stroke="#10c010" stroke-width="5.5" fill="none"/><polyline points="1089.6,279.8 1090.8,280.2 1091.9,280.7 1092.9,281.2 1094.0,281.7 1095.0,282.3 1096.0,282.9 1097.0,283.5 1097.9,284.2 1098.9,284.9 1099.7,285.6 1100.6,286.3 1101.4,287.1 1102.2,287.9 1102.9,288.7 1103.6,289.6 1104.2,290.4 1104.9,291.3 1105.4,292.2 1106.0,293.1 1106.4,294.1 1106.9,295.0 1107.3,296.0 1107.6,297.0 1107.9,297.9 1108.2,298.9 1108.4,299.9 1108.6,301.0 1108.7,302.0 1108.8,303.0 1108.8,304.0" stroke="#e0e000" stroke-width="5.5" fill="none"/><polyline points="1108.8,304.0 1108.8,304.7 1108.8,305.4 1108.7,306.1 1108.6,306.8 1108.5,307.5 1108.4,308.1 1108.3,308.8 1108.1,309.5 1107.9,310.2 1107.7,310.9 1107.5,311.5 1107.2,312.2 1106.9,312.8 1106.7,313.5 1106.3,314.1 1106.0,314.8 1105.7,315.4 1105.3,316.0 1104.9,316.6 1104.5,317.2 1104.0,317.8 1103.6,318.4 1103.1,319.0 1102.6,319.6 1102.1,320.1 1101.6,320.7 1101.1,321.2 1100.5,321.7 1099.9,322.2 1099.3,322.7" stroke="#d00000" stroke-width="5.5" fill="none"/><line x1="1055.8" y1="320.6" x2="1049.4" y2="327.0" stroke="#fff" stroke-width="1.8"/><line x1="1052.8" y1="317.8" x2="1047.9" y2="321.3" stroke="#fff" stroke-width="1"/><line x1="1050.4" y1="314.7" x2="1045.0" y2="317.4" stroke="#fff" stroke-width="1"/><line x1="1048.6" y1="311.3" x2="1042.9" y2="313.1" stroke="#fff" stroke-width="1"/><line x1="1047.6" y1="307.7" x2="1041.6" y2="308.6" stroke="#fff" stroke-width="1"/><line x1="1047.2" y1="304.0" x2="1038.2" y2="304.0" stroke="#fff" stroke-width="1.8"/><line x1="1047.8" y1="299.1" x2="1042.0" y2="297.9" stroke="#fff" stroke-width="1"/><line x1="1049.7" y1="294.4" x2="1044.3" y2="292.0" stroke="#fff" stroke-width="1"/><line x1="1052.8" y1="290.2" x2="1047.9" y2="286.7" stroke="#fff" stroke-width="1"/><line x1="1056.9" y1="286.5" x2="1052.9" y2="282.1" stroke="#fff" stroke-width="1"/><line x1="1061.8" y1="283.6" x2="1057.3" y2="275.9" stroke="#fff" stroke-width="1.8"/><line x1="1067.4" y1="281.7" x2="1065.6" y2="275.9" stroke="#fff" stroke-width="1"/><line x1="1073.4" y1="280.6" x2="1072.8" y2="274.7" stroke="#fff" stroke-width="1"/><line x1="1079.6" y1="280.6" x2="1080.2" y2="274.7" stroke="#fff" stroke-width="1"/><line x1="1085.6" y1="281.7" x2="1087.4" y2="275.9" stroke="#fff" stroke-width="1"/><line x1="1091.2" y1="283.6" x2="1095.7" y2="275.9" stroke="#fff" stroke-width="1.8"/><line x1="1096.1" y1="286.5" x2="1100.1" y2="282.1" stroke="#fff" stroke-width="1"/><line x1="1100.2" y1="290.2" x2="1105.1" y2="286.7" stroke="#fff" stroke-width="1"/><line x1="1103.3" y1="294.4" x2="1108.7" y2="292.0" stroke="#fff" stroke-width="1"/><line x1="1105.2" y1="299.1" x2="1111.0" y2="297.9" stroke="#fff" stroke-width="1"/><line x1="1105.8" y1="304.0" x2="1114.8" y2="304.0" stroke="#fff" stroke-width="1.8"/><line x1="1105.4" y1="307.7" x2="1111.4" y2="308.6" stroke="#fff" stroke-width="1"/><line x1="1104.4" y1="311.3" x2="1110.1" y2="313.1" stroke="#fff" stroke-width="1"/><line x1="1102.6" y1="314.7" x2="1108.0" y2="317.4" stroke="#fff" stroke-width="1"/><line x1="1100.2" y1="317.8" x2="1105.1" y2="321.3" stroke="#fff" stroke-width="1"/><line x1="1097.2" y1="320.6" x2="1103.6" y2="327.0" stroke="#fff" stroke-width="1.8"/><text x="1046.5" y="337.0" font-size="11" font-family="Liberation Sans" text-anchor="middle" fill="#fff" letter-spacing="-.6">0</text><text x="1030.0" y="305.5" font-size="11" font-family="Liberation Sans" text-anchor="middle" fill="#fff" letter-spacing="-.6">100</text><text x="1054.5" y="277.5" font-size="11" font-family="Liberation Sans" text-anchor="middle" fill="#fff" letter-spacing="-.6">200</text><text x="1097.5" y="277.5" font-size="11" font-family="Liberation Sans" text-anchor="middle" fill="#fff" letter-spacing="-.6">300</text><text x="1122.0" y="305.0" font-size="11" font-family="Liberation Sans" text-anchor="middle" fill="#fff" letter-spacing="-.6">400</text><text x="1105.5" y="337.0" font-size="11" font-family="Liberation Sans" text-anchor="middle" fill="#fff" letter-spacing="-.6">500</text><path d="M1060.5 291 L1092.5 291 L1098.0 304 L1055.0 304 Z" fill="#f0f000"/><text x="1076.5" y="301" font-size="10" font-weight="bold" font-family="Liberation Serif" text-anchor="middle" fill="#000" letter-spacing=".6">CAUT</text><text x="1076.5" y="319" font-size="10.5" font-family="Liberation Serif" text-anchor="middle" fill="#fff">PSI</text><text x="1076.5" y="331" font-size="11" font-family="Liberation Sans" text-anchor="middle" fill="#fff" letter-spacing="-.3">392.00</text><line x1="1075.5" y1="306" x2="1106.7" y2="301.9" stroke="#fff" stroke-width="2"/><text x="1188.5" y="265" font-size="7" font-weight="bold" font-family="Liberation Serif" text-anchor="middle" fill="#fff" dy="1.5">Temperature</text><polyline points="1167.7,322.7 1165.4,320.7 1163.4,318.4 1161.7,316.0 1160.3,313.5 1159.3,310.9 1158.6,308.1 1158.2,305.4 1158.3,302.2 1158.9,298.5 1160.1,294.9 1162.0,291.6 1164.4,288.4 1167.3,285.6 1170.6,283.1 1174.3,281.1 1178.4,279.4 1182.7,278.3 1187.1,277.6 1191.6,277.5 1196.1,277.9 1200.5,278.8 1204.7,280.2 1208.6,282.0 1212.1,284.3 1215.2,287.0 1217.9,290.0 1220.0,293.2 1221.5,296.7 1222.5,300.3 1222.8,304.0" stroke="#10c010" stroke-width="5.5" fill="none"/><polyline points="1222.8,304.0 1222.8,304.3 1222.8,304.6 1222.8,304.9 1222.8,305.2 1222.7,305.6 1222.7,305.9 1222.7,306.2 1222.7,306.5 1222.6,306.8 1222.6,307.1 1222.5,307.4 1222.5,307.7 1222.4,308.0 1222.4,308.4 1222.3,308.7 1222.2,309.0 1222.2,309.3 1222.1,309.6 1222.0,309.9 1221.9,310.2 1221.8,310.5 1221.7,310.8 1221.6,311.1 1221.5,311.4 1221.4,311.7 1221.3,312.0 1221.2,312.3 1221.1,312.6 1220.9,312.9 1220.8,313.2" stroke="#e0e000" stroke-width="5.5" fill="none"/><polyline points="1220.8,313.2 1220.6,313.5 1220.5,313.9 1220.3,314.2 1220.1,314.6 1219.9,314.9 1219.7,315.3 1219.5,315.6 1219.3,316.0 1219.1,316.3 1218.9,316.6 1218.7,317.0 1218.4,317.3 1218.2,317.6 1218.0,318.0 1217.7,318.3 1217.5,318.6 1217.2,318.9 1216.9,319.2 1216.7,319.5 1216.4,319.9 1216.1,320.2 1215.8,320.5 1215.5,320.8 1215.2,321.1 1214.9,321.3 1214.6,321.6 1214.3,321.9 1214.0,322.2 1213.7,322.5 1213.3,322.7" stroke="#d00000" stroke-width="5.5" fill="none"/><line x1="1169.8" y1="320.6" x2="1163.4" y2="327.0" stroke="#fff" stroke-width="1.8"/><line x1="1166.8" y1="317.8" x2="1161.9" y2="321.3" stroke="#fff" stroke-width="1"/><line x1="1164.4" y1="314.7" x2="1159.0" y2="317.4" stroke="#fff" stroke-width="1"/><line x1="1162.6" y1="311.3" x2="1156.9" y2="313.1" stroke="#fff" stroke-width="1"/><line x1="1161.6" y1="307.7" x2="1155.6" y2="308.6" stroke="#fff" stroke-width="1"/><line x1="1161.2" y1="304.0" x2="1152.2" y2="304.0" stroke="#fff" stroke-width="1.8"/><line x1="1161.8" y1="299.1" x2="1156.0" y2="297.9" stroke="#fff" stroke-width="1"/><line x1="1163.7" y1="294.4" x2="1158.3" y2="292.0" stroke="#fff" stroke-width="1"/><line x1="1166.8" y1="290.2" x2="1161.9" y2="286.7" stroke="#fff" stroke-width="1"/><line x1="1170.9" y1="286.5" x2="1166.9" y2="282.1" stroke="#fff" stroke-width="1"/><line x1="1175.8" y1="283.6" x2="1171.3" y2="275.9" stroke="#fff" stroke-width="1.8"/><line x1="1181.4" y1="281.7" x2="1179.6" y2="275.9" stroke="#fff" stroke-width="1"/><line x1="1187.4" y1="280.6" x2="1186.8" y2="274.7" stroke="#fff" stroke-width="1"/><line x1="1193.6" y1="280.6" x2="1194.2" y2="274.7" stroke="#fff" stroke-width="1"/><line x1="1199.6" y1="281.7" x2="1201.4" y2="275.9" stroke="#fff" stroke-width="1"/><line x1="1205.2" y1="283.6" x2="1209.7" y2="275.9" stroke="#fff" stroke-width="1.8"/><line x1="1210.1" y1="286.5" x2="1214.1" y2="282.1" stroke="#fff" stroke-width="1"/><line x1="1214.2" y1="290.2" x2="1219.1" y2="286.7" stroke="#fff" stroke-width="1"/><line x1="1217.3" y1="294.4" x2="1222.7" y2="292.0" stroke="#fff" stroke-width="1"/><line x1="1219.2" y1="299.1" x2="1225.0" y2="297.9" stroke="#fff" stroke-width="1"/><line x1="1219.8" y1="304.0" x2="1228.8" y2="304.0" stroke="#fff" stroke-width="1.8"/><line x1="1219.4" y1="307.7" x2="1225.4" y2="308.6" stroke="#fff" stroke-width="1"/><line x1="1218.4" y1="311.3" x2="1224.1" y2="313.1" stroke="#fff" stroke-width="1"/><line x1="1216.6" y1="314.7" x2="1222.0" y2="317.4" stroke="#fff" stroke-width="1"/><line x1="1214.2" y1="317.8" x2="1219.1" y2="321.3" stroke="#fff" stroke-width="1"/><line x1="1211.2" y1="320.6" x2="1217.6" y2="327.0" stroke="#fff" stroke-width="1.8"/><text x="1160.5" y="337.0" font-size="11" font-family="Liberation Sans" text-anchor="middle" fill="#fff" letter-spacing="-.6">0</text><text x="1144.0" y="305.5" font-size="11" font-family="Liberation Sans" text-anchor="middle" fill="#fff" letter-spacing="-.6">100</text><text x="1168.5" y="277.5" font-size="11" font-family="Liberation Sans" text-anchor="middle" fill="#fff" letter-spacing="-.6">200</text><text x="1211.5" y="277.5" font-size="11" font-family="Liberation Sans" text-anchor="middle" fill="#fff" letter-spacing="-.6">300</text><text x="1236.0" y="305.0" font-size="11" font-family="Liberation Sans" text-anchor="middle" fill="#fff" letter-spacing="-.6">400</text><text x="1219.5" y="337.0" font-size="11" font-family="Liberation Sans" text-anchor="middle" fill="#fff" letter-spacing="-.6">500</text><path d="M1174.5 291 L1206.5 291 L1212.0 304 L1169.0 304 Z" fill="#f00000"/><text x="1190.5" y="301" font-size="10" font-weight="bold" font-family="Liberation Serif" text-anchor="middle" fill="#000" letter-spacing=".6">CRIT</text><text x="1190.5" y="319" font-size="10.5" font-family="Liberation Serif" text-anchor="middle" fill="#fff">F</text><text x="1190.5" y="331" font-size="11" font-family="Liberation Sans" text-anchor="middle" fill="#fff" letter-spacing="-.3">475.00</text><line x1="1189.5" y1="306" x2="1215.7" y2="317.6" stroke="#fff" stroke-width="2"/><rect x="505" y="376" width="128" height="10" fill="url(#pb)"/><text x="531" y="384" font-size="7.5" font-family="Liberation Serif" font-weight="bold" fill="#fff">Fill</text><rect x="633" y="373" width="22" height="17" fill="#9a9a9a" rx="1"/><path d="M633 373 L644.0 381.5 L633 390 Z" fill="#d0d0d0"/><path d="M655 373 L644.0 381.5 L655 390 Z" fill="#b8b8b8"/><path d="M633 373 L644.0 381.5 L655 373 Z" fill="#fff"/><path d="M633 390 L644.0 381.5 L655 390 Z" fill="#f4f4f4"/><rect x="655" y="376" width="16" height="10" fill="url(#pb)"/><path d="M670 376 L670 389 Q696 389 696 372 L680 372 Q680 376 670 376 Z" fill="url(#pb)"/><rect x="505" y="397" width="128" height="10" fill="url(#pb)"/><text x="531" y="405" font-size="7.5" font-family="Liberation Serif" font-weight="bold" fill="#fff">Drain</text><rect x="633" y="394" width="22" height="17" fill="#9a9a9a" rx="1"/><path d="M633 394 L644.0 402.5 L633 411 Z" fill="#d0d0d0"/><path d="M655 394 L644.0 402.5 L655 411 Z" fill="#b8b8b8"/><path d="M633 394 L644.0 402.5 L655 394 Z" fill="#fff"/><path d="M633 411 L644.0 402.5 L655 411 Z" fill="#f4f4f4"/><rect x="655" y="397" width="46" height="10" fill="url(#pb)"/><path d="M700 397 L700 410 Q726 410 726 392 L710 392 Q710 397 700 397 Z" fill="url(#pb)"/><path d="M768 371 Q742 371 742 350 L760 350 Q760 359 768 359 Z" fill="url(#pc)"/><rect x="768" y="359" width="15" height="11" fill="url(#pc)"/><rect x="783" y="357" width="23" height="14" fill="#9a9a9a" rx="1"/><path d="M783 357 L794.5 364.0 L783 371 Z" fill="#d0d0d0"/><path d="M806 357 L794.5 364.0 L806 371 Z" fill="#b8b8b8"/><path d="M783 357 L794.5 364.0 L806 357 Z" fill="#fff"/><path d="M783 371 L794.5 364.0 L806 371 Z" fill="#f4f4f4"/><rect x="806" y="360" width="37" height="9" fill="url(#pc)"/><path d="M843 359 L848 361 L849 365 L848 368 L843 370 Z" fill="#0090a0"/><rect x="851" y="361" width="6" height="11" fill="url(#pcv)"/><rect x="857" y="367" width="136" height="4" fill="url(#pc)"/><rect x="987" y="367" width="6" height="26" fill="url(#pcv)"/><g fill="#c8c490"><rect x="882" y="357" width="180" height="4"/><rect x="882" y="357" width="5" height="28"/><rect x="958" y="357" width="5" height="28"/><rect x="852" y="383" width="5" height="11"/><rect x="852" y="383" width="14" height="4"/></g><rect x="847" y="372" width="15" height="10" fill="#9a9a9a" rx="1"/><path d="M847 372 L854.5 377.0 L847 382 Z" fill="#d0d0d0"/><path d="M862 372 L854.5 377.0 L862 382 Z" fill="#b8b8b8"/><path d="M847 372 L854.5 377.0 L862 372 Z" fill="#fff"/><path d="M847 382 L854.5 377.0 L862 382 Z" fill="#f4f4f4"/><rect x="865" y="380" width="15" height="10" fill="#9a9a9a" rx="1"/><path d="M865 380 L872.5 385.0 L865 390 Z" fill="#d0d0d0"/><path d="M880 380 L872.5 385.0 L880 390 Z" fill="#b8b8b8"/><path d="M865 380 L872.5 385.0 L880 380 Z" fill="#fff"/><path d="M865 390 L872.5 385.0 L880 390 Z" fill="#f4f4f4"/><rect x="964" y="380" width="15" height="10" fill="#9a9a9a" rx="1"/><path d="M964 380 L971.5 385.0 L964 390 Z" fill="#d0d0d0"/><path d="M979 380 L971.5 385.0 L979 390 Z" fill="#b8b8b8"/><path d="M964 380 L971.5 385.0 L979 380 Z" fill="#fff"/><path d="M964 390 L971.5 385.0 L979 390 Z" fill="#f4f4f4"/><rect x="982" y="371" width="16" height="12" fill="#9a9a9a" rx="1"/><path d="M982 371 L990.0 377.0 L982 383 Z" fill="#d0d0d0"/><path d="M998 371 L990.0 377.0 L998 383 Z" fill="#b8b8b8"/><path d="M982 371 L990.0 377.0 L998 371 Z" fill="#fff"/><path d="M982 383 L990.0 377.0 L998 383 Z" fill="#f4f4f4"/><text x="1068" y="361" font-size="7" font-family="Liberation Serif" font-weight="bold" fill="#fff">Exhaust</text><rect x="844" y="393" width="86" height="20" fill="url(#cyl)"/><rect x="930" y="393" width="9" height="20" fill="url(#head)"/><rect x="939" y="393" width="61" height="6" fill="#7a9898"/><rect x="939" y="407" width="61" height="6" fill="#a8b8b8"/><rect x="939" y="401" width="247" height="4" fill="url(#rod)"/><rect x="512.5" y="178.5" width="219.0" height="68.0" fill="none" stroke="#fff" stroke-width="1" stroke-dasharray="5 3" shape-rendering="crispEdges"/><rect x="738.5" y="178.5" width="391.0" height="68.0" fill="none" stroke="#fff" stroke-width="1" stroke-dasharray="5 3" shape-rendering="crispEdges"/><rect x="512.5" y="251.5" width="105.0" height="94.0" fill="none" stroke="#fff" stroke-width="1" stroke-dasharray="5 3" shape-rendering="crispEdges"/><rect x="624.5" y="251.5" width="625.0" height="94.0" fill="none" stroke="#fff" stroke-width="1" stroke-dasharray="5 3" shape-rendering="crispEdges"/><rect x="512.5" y="350.5" width="218.0" height="67.0" fill="none" stroke="#fff" stroke-width="1" stroke-dasharray="5 3" shape-rendering="crispEdges"/><rect x="737.5" y="350.5" width="392.0" height="68.0" fill="none" stroke="#fff" stroke-width="1" stroke-dasharray="5 3" shape-rendering="crispEdges"/><text x="533" y="456" font-size="12.5" font-weight="bold" font-family="Liberation Serif" fill="#fff">Displacement</text><text x="636" y="446.5" font-size="9.5" font-weight="bold" font-style="italic" font-family="Liberation Serif" fill="#fff" textLength="87" lengthAdjust="spacingAndGlyphs">Piston Displacement</text><text x="662" y="458" font-size="9.5" font-weight="bold" font-style="italic" font-family="Liberation Serif" fill="#fff" textLength="34" lengthAdjust="spacingAndGlyphs">Vs Time</text><line x1="765" y1="444" x2="789" y2="444" stroke="#1010f0" stroke-width="2"/><rect x="764" y="442" width="4" height="4" fill="#1010f0"/><rect x="786" y="442" width="4" height="4" fill="#1010f0"/><line x1="765" y1="454" x2="789" y2="454" stroke="#00e0e8" stroke-width="2"/><rect x="764" y="452" width="4" height="4" fill="#00e0e8"/><rect x="786" y="452" width="4" height="4" fill="#00e0e8"/><text x="789" y="447" font-size="8.5" font-weight="bold" font-style="italic" font-family="Liberation Sans" fill="#fff" textLength="33" lengthAdjust="spacingAndGlyphs">Piston A</text><text x="789" y="457" font-size="8.5" font-weight="bold" font-style="italic" font-family="Liberation Sans" fill="#fff" textLength="33" lengthAdjust="spacingAndGlyphs">Piston B</text><line x1="570.7" y1="485.5" x2="853" y2="485.5" stroke="#c8c8c8" stroke-width="1" stroke-dasharray="6 4"/><line x1="570.7" y1="505" x2="853" y2="505" stroke="#c8c8c8" stroke-width="1" stroke-dasharray="6 4"/><line x1="570.7" y1="524.5" x2="853" y2="524.5" stroke="#c8c8c8" stroke-width="1" stroke-dasharray="6 4"/><line x1="570.7" y1="544.5" x2="853" y2="544.5" stroke="#c8c8c8" stroke-width="1" stroke-dasharray="6 4"/><line x1="570.7" y1="564.5" x2="853" y2="564.5" stroke="#c8c8c8" stroke-width="1" stroke-dasharray="6 4"/><line x1="624.8" y1="465.5" x2="624.8" y2="584.5" stroke="#c8c8c8" stroke-width="1" stroke-dasharray="6 4"/><line x1="681" y1="465.5" x2="681" y2="584.5" stroke="#c8c8c8" stroke-width="1" stroke-dasharray="6 4"/><line x1="737.2" y1="465.5" x2="737.2" y2="584.5" stroke="#c8c8c8" stroke-width="1" stroke-dasharray="6 4"/><line x1="793.4" y1="465.5" x2="793.4" y2="584.5" stroke="#c8c8c8" stroke-width="1" stroke-dasharray="6 4"/><line x1="849.6" y1="465.5" x2="849.6" y2="584.5" stroke="#c8c8c8" stroke-width="1" stroke-dasharray="6 4"/><line x1="570.7" y1="465.5" x2="570.7" y2="584.5" stroke="#fff" stroke-width="1.2"/><line x1="562.7" y1="584.5" x2="853" y2="584.5" stroke="#fff" stroke-width="1.2"/><line x1="562.7" y1="465.5" x2="570.7" y2="465.5" stroke="#fff" stroke-width="1.2"/><line x1="562.7" y1="465.5" x2="570.7" y2="465.5" stroke="#fff" stroke-width="1"/><line x1="565.7" y1="470.5" x2="570.7" y2="470.5" stroke="#fff" stroke-width="1"/><line x1="565.7" y1="475.4" x2="570.7" y2="475.4" stroke="#fff" stroke-width="1"/><line x1="565.7" y1="480.4" x2="570.7" y2="480.4" stroke="#fff" stroke-width="1"/><line x1="562.7" y1="485.3" x2="570.7" y2="485.3" stroke="#fff" stroke-width="1"/><line x1="565.7" y1="490.3" x2="570.7" y2="490.3" stroke="#fff" stroke-width="1"/><line x1="565.7" y1="495.2" x2="570.7" y2="495.2" stroke="#fff" stroke-width="1"/><line x1="565.7" y1="500.2" x2="570.7" y2="500.2" stroke="#fff" stroke-width="1"/><line x1="562.7" y1="505.2" x2="570.7" y2="505.2" stroke="#fff" stroke-width="1"/><line x1="565.7" y1="510.1" x2="570.7" y2="510.1" stroke="#fff" stroke-width="1"/><line x1="565.7" y1="515.1" x2="570.7" y2="515.1" stroke="#fff" stroke-width="1"/><line x1="565.7" y1="520.0" x2="570.7" y2="520.0" stroke="#fff" stroke-width="1"/><line x1="562.7" y1="525.0" x2="570.7" y2="525.0" stroke="#fff" stroke-width="1"/><line x1="565.7" y1="530.0" x2="570.7" y2="530.0" stroke="#fff" stroke-width="1"/><line x1="565.7" y1="534.9" x2="570.7" y2="534.9" stroke="#fff" stroke-width="1"/><line x1="565.7" y1="539.9" x2="570.7" y2="539.9" stroke="#fff" stroke-width="1"/><line x1="562.7" y1="544.8" x2="570.7" y2="544.8" stroke="#fff" stroke-width="1"/><line x1="565.7" y1="549.8" x2="570.7" y2="549.8" stroke="#fff" stroke-width="1"/><line x1="565.7" y1="554.8" x2="570.7" y2="554.8" stroke="#fff" stroke-width="1"/><line x1="565.7" y1="559.7" x2="570.7" y2="559.7" stroke="#fff" stroke-width="1"/><line x1="562.7" y1="564.7" x2="570.7" y2="564.7" stroke="#fff" stroke-width="1"/><line x1="565.7" y1="569.6" x2="570.7" y2="569.6" stroke="#fff" stroke-width="1"/><line x1="565.7" y1="574.6" x2="570.7" y2="574.6" stroke="#fff" stroke-width="1"/><line x1="565.7" y1="579.5" x2="570.7" y2="579.5" stroke="#fff" stroke-width="1"/><line x1="562.7" y1="584.5" x2="570.7" y2="584.5" stroke="#fff" stroke-width="1"/><line x1="570.7" y1="584.5" x2="570.7" y2="589.5" stroke="#fff" stroke-width="1"/><line x1="576.3" y1="584.5" x2="576.3" y2="587.5" stroke="#fff" stroke-width="1"/><line x1="581.9" y1="584.5" x2="581.9" y2="587.5" stroke="#fff" stroke-width="1"/><line x1="587.6" y1="584.5" x2="587.6" y2="587.5" stroke="#fff" stroke-width="1"/><line x1="593.2" y1="584.5" x2="593.2" y2="587.5" stroke="#fff" stroke-width="1"/><line x1="598.8" y1="584.5" x2="598.8" y2="587.5" stroke="#fff" stroke-width="1"/><line x1="604.4" y1="584.5" x2="604.4" y2="587.5" stroke="#fff" stroke-width="1"/><line x1="610.0" y1="584.5" x2="610.0" y2="587.5" stroke="#fff" stroke-width="1"/><line x1="615.7" y1="584.5" x2="615.7" y2="587.5" stroke="#fff" stroke-width="1"/><line x1="621.3" y1="584.5" x2="621.3" y2="587.5" stroke="#fff" stroke-width="1"/><line x1="626.9" y1="584.5" x2="626.9" y2="589.5" stroke="#fff" stroke-width="1"/><line x1="632.5" y1="584.5" x2="632.5" y2="587.5" stroke="#fff" stroke-width="1"/><line x1="638.1" y1="584.5" x2="638.1" y2="587.5" stroke="#fff" stroke-width="1"/><line x1="643.8" y1="584.5" x2="643.8" y2="587.5" stroke="#fff" stroke-width="1"/><line x1="649.4" y1="584.5" x2="649.4" y2="587.5" stroke="#fff" stroke-width="1"/><line x1="655.0" y1="584.5" x2="655.0" y2="587.5" stroke="#fff" stroke-width="1"/><line x1="660.6" y1="584.5" x2="660.6" y2="587.5" stroke="#fff" stroke-width="1"/><line x1="666.2" y1="584.5" x2="666.2" y2="587.5" stroke="#fff" stroke-width="1"/><line x1="671.9" y1="584.5" x2="671.9" y2="587.5" stroke="#fff" stroke-width="1"/><line x1="677.5" y1="584.5" x2="677.5" y2="587.5" stroke="#fff" stroke-width="1"/><line x1="683.1" y1="584.5" x2="683.1" y2="589.5" stroke="#fff" stroke-width="1"/><line x1="688.7" y1="584.5" x2="688.7" y2="587.5" stroke="#fff" stroke-width="1"/><line x1="694.3" y1="584.5" x2="694.3" y2="587.5" stroke="#fff" stroke-width="1"/><line x1="700.0" y1="584.5" x2="700.0" y2="587.5" stroke="#fff" stroke-width="1"/><line x1="705.6" y1="584.5" x2="705.6" y2="587.5" stroke="#fff" stroke-width="1"/><line x1="711.2" y1="584.5" x2="711.2" y2="587.5" stroke="#fff" stroke-width="1"/><line x1="716.8" y1="584.5" x2="716.8" y2="587.5" stroke="#fff" stroke-width="1"/><line x1="722.4" y1="584.5" x2="722.4" y2="587.5" stroke="#fff" stroke-width="1"/><line x1="728.1" y1="584.5" x2="728.1" y2="587.5" stroke="#fff" stroke-width="1"/><line x1="733.7" y1="584.5" x2="733.7" y2="587.5" stroke="#fff" stroke-width="1"/><line x1="739.3" y1="584.5" x2="739.3" y2="589.5" stroke="#fff" stroke-width="1"/><line x1="744.9" y1="584.5" x2="744.9" y2="587.5" stroke="#fff" stroke-width="1"/><line x1="750.5" y1="584.5" x2="750.5" y2="587.5" stroke="#fff" stroke-width="1"/><line x1="756.2" y1="584.5" x2="756.2" y2="587.5" stroke="#fff" stroke-width="1"/><line x1="761.8" y1="584.5" x2="761.8" y2="587.5" stroke="#fff" stroke-width="1"/><line x1="767.4" y1="584.5" x2="767.4" y2="587.5" stroke="#fff" stroke-width="1"/><line x1="773.0" y1="584.5" x2="773.0" y2="587.5" stroke="#fff" stroke-width="1"/><line x1="778.6" y1="584.5" x2="778.6" y2="587.5" stroke="#fff" stroke-width="1"/><line x1="784.3" y1="584.5" x2="784.3" y2="587.5" stroke="#fff" stroke-width="1"/><line x1="789.9" y1="584.5" x2="789.9" y2="587.5" stroke="#fff" stroke-width="1"/><line x1="795.5" y1="584.5" x2="795.5" y2="589.5" stroke="#fff" stroke-width="1"/><line x1="801.1" y1="584.5" x2="801.1" y2="587.5" stroke="#fff" stroke-width="1"/><line x1="806.7" y1="584.5" x2="806.7" y2="587.5" stroke="#fff" stroke-width="1"/><line x1="812.4" y1="584.5" x2="812.4" y2="587.5" stroke="#fff" stroke-width="1"/><line x1="818.0" y1="584.5" x2="818.0" y2="587.5" stroke="#fff" stroke-width="1"/><line x1="823.6" y1="584.5" x2="823.6" y2="587.5" stroke="#fff" stroke-width="1"/><line x1="829.2" y1="584.5" x2="829.2" y2="587.5" stroke="#fff" stroke-width="1"/><line x1="834.8" y1="584.5" x2="834.8" y2="587.5" stroke="#fff" stroke-width="1"/><line x1="840.5" y1="584.5" x2="840.5" y2="587.5" stroke="#fff" stroke-width="1"/><line x1="846.1" y1="584.5" x2="846.1" y2="587.5" stroke="#fff" stroke-width="1"/><line x1="851.7" y1="584.5" x2="851.7" y2="589.5" stroke="#fff" stroke-width="1"/><text x="560.7" y="468.5" font-size="8" font-family="Liberation Sans" text-anchor="end" fill="#fff" letter-spacing="0">1.2</text><text x="560.7" y="488.5" font-size="8" font-family="Liberation Sans" text-anchor="end" fill="#fff" letter-spacing="0">1.0</text><text x="560.7" y="508" font-size="8" font-family="Liberation Sans" text-anchor="end" fill="#fff" letter-spacing="0">0.7</text><text x="560.7" y="527.5" font-size="8" font-family="Liberation Sans" text-anchor="end" fill="#fff" letter-spacing="0">0.5</text><text x="560.7" y="547.5" font-size="8" font-family="Liberation Sans" text-anchor="end" fill="#fff" letter-spacing="0">0.3</text><text x="560.7" y="567.5" font-size="8" font-family="Liberation Sans" text-anchor="end" fill="#fff" letter-spacing="0">0.0</text><text x="560.7" y="587.5" font-size="8" font-family="Liberation Sans" text-anchor="end" fill="#fff" letter-spacing="0">-0.2</text><text x="570.7" y="597.5" font-size="7" font-weight="bold" font-family="Liberation Sans" text-anchor="middle" fill="#fff">+0</text><text x="624.8" y="597.5" font-size="7" font-weight="bold" font-family="Liberation Sans" text-anchor="middle" fill="#fff">+1</text><text x="681" y="597.5" font-size="7" font-weight="bold" font-family="Liberation Sans" text-anchor="middle" fill="#fff">+2</text><text x="737.2" y="597.5" font-size="7" font-weight="bold" font-family="Liberation Sans" text-anchor="middle" fill="#fff">+3</text><text x="793.4" y="597.5" font-size="7" font-weight="bold" font-family="Liberation Sans" text-anchor="middle" fill="#fff">+4</text><text x="849.6" y="597.5" font-size="7" font-weight="bold" font-family="Liberation Sans" text-anchor="middle" fill="#fff">+5</text><text x="707" y="601.5" font-size="13" font-weight="bold" font-family="Liberation Serif" text-anchor="middle" fill="#fff">Time</text><g fill="#0000e0"><rect x="571.0" y="514.0" width="3.6" height="3.6"/><rect x="576.6" y="507.9" width="3.6" height="3.6"/><rect x="582.1" y="502.1" width="3.6" height="3.6"/><rect x="587.7" y="496.8" width="3.6" height="3.6"/><rect x="593.3" y="492.1" width="3.6" height="3.6"/><rect x="598.9" y="488.1" width="3.6" height="3.6"/><rect x="604.4" y="484.8" width="3.6" height="3.6"/><rect x="610.0" y="482.4" width="3.6" height="3.6"/><rect x="615.6" y="480.8" width="3.6" height="3.6"/><rect x="621.1" y="480.2" width="3.6" height="3.6"/><rect x="626.7" y="480.5" width="3.6" height="3.6"/><rect x="632.3" y="481.8" width="3.6" height="3.6"/><rect x="637.8" y="484.0" width="3.6" height="3.6"/><rect x="643.4" y="487.0" width="3.6" height="3.6"/><rect x="649.0" y="490.8" width="3.6" height="3.6"/><rect x="654.6" y="495.3" width="3.6" height="3.6"/><rect x="660.1" y="500.4" width="3.6" height="3.6"/><rect x="665.7" y="506.0" width="3.6" height="3.6"/><rect x="671.3" y="512.0" width="3.6" height="3.6"/><rect x="676.8" y="518.3" width="3.6" height="3.6"/><rect x="682.4" y="524.6" width="3.6" height="3.6"/><rect x="688.0" y="530.9" width="3.6" height="3.6"/><rect x="693.5" y="537.0" width="3.6" height="3.6"/><rect x="699.1" y="542.7" width="3.6" height="3.6"/><rect x="704.7" y="548.1" width="3.6" height="3.6"/><rect x="710.3" y="552.9" width="3.6" height="3.6"/><rect x="715.8" y="557.0" width="3.6" height="3.6"/><rect x="721.4" y="560.3" width="3.6" height="3.6"/><rect x="727.0" y="562.8" width="3.6" height="3.6"/><rect x="732.5" y="564.5" width="3.6" height="3.6"/><rect x="738.1" y="565.2" width="3.6" height="3.6"/><rect x="743.7" y="564.9" width="3.6" height="3.6"/><rect x="749.2" y="563.8" width="3.6" height="3.6"/><rect x="754.8" y="561.7" width="3.6" height="3.6"/><rect x="760.4" y="558.7" width="3.6" height="3.6"/><rect x="766.0" y="555.0" width="3.6" height="3.6"/><rect x="771.5" y="550.6" width="3.6" height="3.6"/><rect x="777.1" y="545.5" width="3.6" height="3.6"/><rect x="782.7" y="539.9" width="3.6" height="3.6"/><rect x="788.2" y="534.0" width="3.6" height="3.6"/><rect x="793.8" y="527.7" width="3.6" height="3.6"/><rect x="799.4" y="521.4" width="3.6" height="3.6"/><rect x="804.9" y="515.1" width="3.6" height="3.6"/><rect x="810.5" y="509.0" width="3.6" height="3.6"/><rect x="816.1" y="503.2" width="3.6" height="3.6"/><rect x="821.7" y="497.8" width="3.6" height="3.6"/><rect x="827.2" y="493.0" width="3.6" height="3.6"/><rect x="832.8" y="488.8" width="3.6" height="3.6"/><rect x="838.4" y="485.4" width="3.6" height="3.6"/><rect x="843.9" y="482.8" width="3.6" height="3.6"/></g><g fill="#00e0e8"><rect x="571.0" y="531.4" width="3.6" height="3.6"/><rect x="576.6" y="537.5" width="3.6" height="3.6"/><rect x="582.1" y="543.3" width="3.6" height="3.6"/><rect x="587.7" y="548.6" width="3.6" height="3.6"/><rect x="593.3" y="553.3" width="3.6" height="3.6"/><rect x="598.9" y="557.3" width="3.6" height="3.6"/><rect x="604.4" y="560.6" width="3.6" height="3.6"/><rect x="610.0" y="563.0" width="3.6" height="3.6"/><rect x="615.6" y="564.6" width="3.6" height="3.6"/><rect x="621.1" y="565.2" width="3.6" height="3.6"/><rect x="626.7" y="564.9" width="3.6" height="3.6"/><rect x="632.3" y="563.6" width="3.6" height="3.6"/><rect x="637.8" y="561.4" width="3.6" height="3.6"/><rect x="643.4" y="558.4" width="3.6" height="3.6"/><rect x="649.0" y="554.6" width="3.6" height="3.6"/><rect x="654.6" y="550.1" width="3.6" height="3.6"/><rect x="660.1" y="545.0" width="3.6" height="3.6"/><rect x="665.7" y="539.4" width="3.6" height="3.6"/><rect x="671.3" y="533.4" width="3.6" height="3.6"/><rect x="676.8" y="527.1" width="3.6" height="3.6"/><rect x="682.4" y="520.8" width="3.6" height="3.6"/><rect x="688.0" y="514.5" width="3.6" height="3.6"/><rect x="693.5" y="508.4" width="3.6" height="3.6"/><rect x="699.1" y="502.7" width="3.6" height="3.6"/><rect x="704.7" y="497.3" width="3.6" height="3.6"/><rect x="710.3" y="492.5" width="3.6" height="3.6"/><rect x="715.8" y="488.4" width="3.6" height="3.6"/><rect x="721.4" y="485.1" width="3.6" height="3.6"/><rect x="727.0" y="482.6" width="3.6" height="3.6"/><rect x="732.5" y="480.9" width="3.6" height="3.6"/><rect x="738.1" y="480.2" width="3.6" height="3.6"/><rect x="743.7" y="480.5" width="3.6" height="3.6"/><rect x="749.2" y="481.6" width="3.6" height="3.6"/><rect x="754.8" y="483.7" width="3.6" height="3.6"/><rect x="760.4" y="486.7" width="3.6" height="3.6"/><rect x="766.0" y="490.4" width="3.6" height="3.6"/><rect x="771.5" y="494.8" width="3.6" height="3.6"/><rect x="777.1" y="499.9" width="3.6" height="3.6"/><rect x="782.7" y="505.5" width="3.6" height="3.6"/><rect x="788.2" y="511.4" width="3.6" height="3.6"/><rect x="793.8" y="517.7" width="3.6" height="3.6"/><rect x="799.4" y="524.0" width="3.6" height="3.6"/><rect x="804.9" y="530.3" width="3.6" height="3.6"/><rect x="810.5" y="536.4" width="3.6" height="3.6"/><rect x="816.1" y="542.2" width="3.6" height="3.6"/><rect x="821.7" y="547.6" width="3.6" height="3.6"/><rect x="827.2" y="552.4" width="3.6" height="3.6"/><rect x="832.8" y="556.6" width="3.6" height="3.6"/><rect x="838.4" y="560.0" width="3.6" height="3.6"/><rect x="843.9" y="562.6" width="3.6" height="3.6"/></g><text x="983" y="444.5" font-size="8" font-weight="bold" font-style="italic" font-family="Liberation Sans" fill="#fff" textLength="100" lengthAdjust="spacingAndGlyphs">Boiler Pressure|Temperature</text><text x="1023" y="455" font-size="8" font-weight="bold" font-style="italic" font-family="Liberation Sans" fill="#fff" textLength="22" lengthAdjust="spacingAndGlyphs">vs Time</text><line x1="1134" y1="444" x2="1157" y2="444" stroke="#1010f0" stroke-width="2"/><rect x="1133" y="442" width="4" height="4" fill="#1010f0"/><rect x="1154" y="442" width="4" height="4" fill="#1010f0"/><line x1="1134" y1="454" x2="1157" y2="454" stroke="#00e0e8" stroke-width="2"/><rect x="1133" y="452" width="4" height="4" fill="#00e0e8"/><rect x="1154" y="452" width="4" height="4" fill="#00e0e8"/><text x="1157" y="447" font-size="8.5" font-weight="bold" font-style="italic" font-family="Liberation Sans" fill="#fff" textLength="64" lengthAdjust="spacingAndGlyphs">Pressure (PSI)</text><text x="1157" y="457" font-size="8.5" font-weight="bold" font-style="italic" font-family="Liberation Sans" fill="#fff" textLength="68" lengthAdjust="spacingAndGlyphs">Temperature (F)</text><line x1="939.2" y1="489.5" x2="1222" y2="489.5" stroke="#c8c8c8" stroke-width="1" stroke-dasharray="6 4"/><line x1="939.2" y1="513.5" x2="1222" y2="513.5" stroke="#c8c8c8" stroke-width="1" stroke-dasharray="6 4"/><line x1="939.2" y1="537.5" x2="1222" y2="537.5" stroke="#c8c8c8" stroke-width="1" stroke-dasharray="6 4"/><line x1="939.2" y1="561.5" x2="1222" y2="561.5" stroke="#c8c8c8" stroke-width="1" stroke-dasharray="6 4"/><line x1="993.3" y1="465.5" x2="993.3" y2="584.5" stroke="#c8c8c8" stroke-width="1" stroke-dasharray="6 4"/><line x1="1049" y1="465.5" x2="1049" y2="584.5" stroke="#c8c8c8" stroke-width="1" stroke-dasharray="6 4"/><line x1="1105.5" y1="465.5" x2="1105.5" y2="584.5" stroke="#c8c8c8" stroke-width="1" stroke-dasharray="6 4"/><line x1="1161.8" y1="465.5" x2="1161.8" y2="584.5" stroke="#c8c8c8" stroke-width="1" stroke-dasharray="6 4"/><line x1="1218" y1="465.5" x2="1218" y2="584.5" stroke="#c8c8c8" stroke-width="1" stroke-dasharray="6 4"/><line x1="939.2" y1="465.5" x2="939.2" y2="584.5" stroke="#fff" stroke-width="1.2"/><line x1="931.2" y1="584.5" x2="1222" y2="584.5" stroke="#fff" stroke-width="1.2"/><line x1="931.2" y1="465.5" x2="939.2" y2="465.5" stroke="#fff" stroke-width="1.2"/><line x1="931.2" y1="465.5" x2="939.2" y2="465.5" stroke="#fff" stroke-width="1"/><line x1="934.2" y1="470.3" x2="939.2" y2="470.3" stroke="#fff" stroke-width="1"/><line x1="934.2" y1="475.0" x2="939.2" y2="475.0" stroke="#fff" stroke-width="1"/><line x1="934.2" y1="479.8" x2="939.2" y2="479.8" stroke="#fff" stroke-width="1"/><line x1="931.2" y1="484.5" x2="939.2" y2="484.5" stroke="#fff" stroke-width="1"/><line x1="934.2" y1="489.3" x2="939.2" y2="489.3" stroke="#fff" stroke-width="1"/><line x1="934.2" y1="494.1" x2="939.2" y2="494.1" stroke="#fff" stroke-width="1"/><line x1="934.2" y1="498.8" x2="939.2" y2="498.8" stroke="#fff" stroke-width="1"/><line x1="931.2" y1="503.6" x2="939.2" y2="503.6" stroke="#fff" stroke-width="1"/><line x1="934.2" y1="508.3" x2="939.2" y2="508.3" stroke="#fff" stroke-width="1"/><line x1="934.2" y1="513.1" x2="939.2" y2="513.1" stroke="#fff" stroke-width="1"/><line x1="934.2" y1="517.9" x2="939.2" y2="517.9" stroke="#fff" stroke-width="1"/><line x1="931.2" y1="522.6" x2="939.2" y2="522.6" stroke="#fff" stroke-width="1"/><line x1="934.2" y1="527.4" x2="939.2" y2="527.4" stroke="#fff" stroke-width="1"/><line x1="934.2" y1="532.1" x2="939.2" y2="532.1" stroke="#fff" stroke-width="1"/><line x1="934.2" y1="536.9" x2="939.2" y2="536.9" stroke="#fff" stroke-width="1"/><line x1="931.2" y1="541.7" x2="939.2" y2="541.7" stroke="#fff" stroke-width="1"/><line x1="934.2" y1="546.4" x2="939.2" y2="546.4" stroke="#fff" stroke-width="1"/><line x1="934.2" y1="551.2" x2="939.2" y2="551.2" stroke="#fff" stroke-width="1"/><line x1="934.2" y1="555.9" x2="939.2" y2="555.9" stroke="#fff" stroke-width="1"/><line x1="931.2" y1="560.7" x2="939.2" y2="560.7" stroke="#fff" stroke-width="1"/><line x1="934.2" y1="565.5" x2="939.2" y2="565.5" stroke="#fff" stroke-width="1"/><line x1="934.2" y1="570.2" x2="939.2" y2="570.2" stroke="#fff" stroke-width="1"/><line x1="934.2" y1="575.0" x2="939.2" y2="575.0" stroke="#fff" stroke-width="1"/><line x1="931.2" y1="579.7" x2="939.2" y2="579.7" stroke="#fff" stroke-width="1"/><line x1="934.2" y1="584.5" x2="939.2" y2="584.5" stroke="#fff" stroke-width="1"/><line x1="939.2" y1="584.5" x2="939.2" y2="589.5" stroke="#fff" stroke-width="1"/><line x1="944.8" y1="584.5" x2="944.8" y2="587.5" stroke="#fff" stroke-width="1"/><line x1="950.3" y1="584.5" x2="950.3" y2="587.5" stroke="#fff" stroke-width="1"/><line x1="955.9" y1="584.5" x2="955.9" y2="587.5" stroke="#fff" stroke-width="1"/><line x1="961.5" y1="584.5" x2="961.5" y2="587.5" stroke="#fff" stroke-width="1"/><line x1="967.1" y1="584.5" x2="967.1" y2="587.5" stroke="#fff" stroke-width="1"/><line x1="972.6" y1="584.5" x2="972.6" y2="587.5" stroke="#fff" stroke-width="1"/><line x1="978.2" y1="584.5" x2="978.2" y2="587.5" stroke="#fff" stroke-width="1"/><line x1="983.8" y1="584.5" x2="983.8" y2="587.5" stroke="#fff" stroke-width="1"/><line x1="989.3" y1="584.5" x2="989.3" y2="587.5" stroke="#fff" stroke-width="1"/><line x1="994.9" y1="584.5" x2="994.9" y2="589.5" stroke="#fff" stroke-width="1"/><line x1="1000.5" y1="584.5" x2="1000.5" y2="587.5" stroke="#fff" stroke-width="1"/><line x1="1006.0" y1="584.5" x2="1006.0" y2="587.5" stroke="#fff" stroke-width="1"/><line x1="1011.6" y1="584.5" x2="1011.6" y2="587.5" stroke="#fff" stroke-width="1"/><line x1="1017.2" y1="584.5" x2="1017.2" y2="587.5" stroke="#fff" stroke-width="1"/><line x1="1022.8" y1="584.5" x2="1022.8" y2="587.5" stroke="#fff" stroke-width="1"/><line x1="1028.3" y1="584.5" x2="1028.3" y2="587.5" stroke="#fff" stroke-width="1"/><line x1="1033.9" y1="584.5" x2="1033.9" y2="587.5" stroke="#fff" stroke-width="1"/><line x1="1039.5" y1="584.5" x2="1039.5" y2="587.5" stroke="#fff" stroke-width="1"/><line x1="1045.0" y1="584.5" x2="1045.0" y2="587.5" stroke="#fff" stroke-width="1"/><line x1="1050.6" y1="584.5" x2="1050.6" y2="589.5" stroke="#fff" stroke-width="1"/><line x1="1056.2" y1="584.5" x2="1056.2" y2="587.5" stroke="#fff" stroke-width="1"/><line x1="1061.7" y1="584.5" x2="1061.7" y2="587.5" stroke="#fff" stroke-width="1"/><line x1="1067.3" y1="584.5" x2="1067.3" y2="587.5" stroke="#fff" stroke-width="1"/><line x1="1072.9" y1="584.5" x2="1072.9" y2="587.5" stroke="#fff" stroke-width="1"/><line x1="1078.5" y1="584.5" x2="1078.5" y2="587.5" stroke="#fff" stroke-width="1"/><line x1="1084.0" y1="584.5" x2="1084.0" y2="587.5" stroke="#fff" stroke-width="1"/><line x1="1089.6" y1="584.5" x2="1089.6" y2="587.5" stroke="#fff" stroke-width="1"/><line x1="1095.2" y1="584.5" x2="1095.2" y2="587.5" stroke="#fff" stroke-width="1"/><line x1="1100.7" y1="584.5" x2="1100.7" y2="587.5" stroke="#fff" stroke-width="1"/><line x1="1106.3" y1="584.5" x2="1106.3" y2="589.5" stroke="#fff" stroke-width="1"/><line x1="1111.9" y1="584.5" x2="1111.9" y2="587.5" stroke="#fff" stroke-width="1"/><line x1="1117.4" y1="584.5" x2="1117.4" y2="587.5" stroke="#fff" stroke-width="1"/><line x1="1123.0" y1="584.5" x2="1123.0" y2="587.5" stroke="#fff" stroke-width="1"/><line x1="1128.6" y1="584.5" x2="1128.6" y2="587.5" stroke="#fff" stroke-width="1"/><line x1="1134.1" y1="584.5" x2="1134.1" y2="587.5" stroke="#fff" stroke-width="1"/><line x1="1139.7" y1="584.5" x2="1139.7" y2="587.5" stroke="#fff" stroke-width="1"/><line x1="1145.3" y1="584.5" x2="1145.3" y2="587.5" stroke="#fff" stroke-width="1"/><line x1="1150.9" y1="584.5" x2="1150.9" y2="587.5" stroke="#fff" stroke-width="1"/><line x1="1156.4" y1="584.5" x2="1156.4" y2="587.5" stroke="#fff" stroke-width="1"/><line x1="1162.0" y1="584.5" x2="1162.0" y2="589.5" stroke="#fff" stroke-width="1"/><line x1="1167.6" y1="584.5" x2="1167.6" y2="587.5" stroke="#fff" stroke-width="1"/><line x1="1173.1" y1="584.5" x2="1173.1" y2="587.5" stroke="#fff" stroke-width="1"/><line x1="1178.7" y1="584.5" x2="1178.7" y2="587.5" stroke="#fff" stroke-width="1"/><line x1="1184.3" y1="584.5" x2="1184.3" y2="587.5" stroke="#fff" stroke-width="1"/><line x1="1189.8" y1="584.5" x2="1189.8" y2="587.5" stroke="#fff" stroke-width="1"/><line x1="1195.4" y1="584.5" x2="1195.4" y2="587.5" stroke="#fff" stroke-width="1"/><line x1="1201.0" y1="584.5" x2="1201.0" y2="587.5" stroke="#fff" stroke-width="1"/><line x1="1206.6" y1="584.5" x2="1206.6" y2="587.5" stroke="#fff" stroke-width="1"/><line x1="1212.1" y1="584.5" x2="1212.1" y2="587.5" stroke="#fff" stroke-width="1"/><line x1="1217.7" y1="584.5" x2="1217.7" y2="589.5" stroke="#fff" stroke-width="1"/><text x="924.2" y="469.5" font-size="10.5" font-family="Liberation Sans" text-anchor="end" fill="#fff" letter-spacing="-0.3">500</text><text x="924.2" y="493.5" font-size="10.5" font-family="Liberation Sans" text-anchor="end" fill="#fff" letter-spacing="-0.3">400</text><text x="924.2" y="517.5" font-size="10.5" font-family="Liberation Sans" text-anchor="end" fill="#fff" letter-spacing="-0.3">300</text><text x="924.2" y="541.5" font-size="10.5" font-family="Liberation Sans" text-anchor="end" fill="#fff" letter-spacing="-0.3">200</text><text x="924.2" y="565.5" font-size="10.5" font-family="Liberation Sans" text-anchor="end" fill="#fff" letter-spacing="-0.3">100</text><text x="924.2" y="588.5" font-size="10.5" font-family="Liberation Sans" text-anchor="end" fill="#fff" letter-spacing="-0.3">0</text><text x="939.2" y="597.5" font-size="7" font-weight="bold" font-family="Liberation Sans" text-anchor="middle" fill="#fff">+0</text><text x="993.3" y="597.5" font-size="7" font-weight="bold" font-family="Liberation Sans" text-anchor="middle" fill="#fff">+1</text><text x="1049" y="597.5" font-size="7" font-weight="bold" font-family="Liberation Sans" text-anchor="middle" fill="#fff">+2</text><text x="1105.5" y="597.5" font-size="7" font-weight="bold" font-family="Liberation Sans" text-anchor="middle" fill="#fff">+3</text><text x="1161.8" y="597.5" font-size="7" font-weight="bold" font-family="Liberation Sans" text-anchor="middle" fill="#fff">+4</text><text x="1218" y="597.5" font-size="7" font-weight="bold" font-family="Liberation Sans" text-anchor="middle" fill="#fff">+5</text><text x="1077" y="601.5" font-size="13" font-weight="bold" font-family="Liberation Serif" text-anchor="middle" fill="#fff">Time</text><g fill="#0000e0"><rect x="939.2" y="469.0" width="3.6" height="3.6"/><rect x="944.8" y="469.0" width="3.6" height="3.6"/><rect x="950.4" y="469.0" width="3.6" height="3.6"/><rect x="956.0" y="469.0" width="3.6" height="3.6"/><rect x="961.6" y="469.0" width="3.6" height="3.6"/><rect x="967.2" y="469.0" width="3.6" height="3.6"/><rect x="972.8" y="469.0" width="3.6" height="3.6"/><rect x="978.4" y="469.0" width="3.6" height="3.6"/><rect x="984.0" y="469.0" width="3.6" height="3.6"/><rect x="989.6" y="469.0" width="3.6" height="3.6"/><rect x="995.2" y="469.0" width="3.6" height="3.6"/><rect x="1000.8" y="469.0" width="3.6" height="3.6"/><rect x="1006.4" y="469.0" width="3.6" height="3.6"/><rect x="1012.0" y="469.0" width="3.6" height="3.6"/><rect x="1017.6" y="469.0" width="3.6" height="3.6"/><rect x="1023.2" y="469.0" width="3.6" height="3.6"/><rect x="1028.8" y="469.0" width="3.6" height="3.6"/><rect x="1034.4" y="469.0" width="3.6" height="3.6"/><rect x="1040.0" y="469.0" width="3.6" height="3.6"/><rect x="1045.6" y="469.0" width="3.6" height="3.6"/><rect x="1051.2" y="469.0" width="3.6" height="3.6"/><rect x="1056.8" y="469.0" width="3.6" height="3.6"/><rect x="1062.4" y="469.0" width="3.6" height="3.6"/><rect x="1068.0" y="469.0" width="3.6" height="3.6"/><rect x="1073.6" y="469.0" width="3.6" height="3.6"/><rect x="1079.2" y="469.0" width="3.6" height="3.6"/><rect x="1084.8" y="469.0" width="3.6" height="3.6"/><rect x="1090.4" y="469.0" width="3.6" height="3.6"/><rect x="1096.0" y="469.0" width="3.6" height="3.6"/><rect x="1101.6" y="469.0" width="3.6" height="3.6"/><rect x="1107.2" y="469.0" width="3.6" height="3.6"/><rect x="1112.8" y="469.0" width="3.6" height="3.6"/><rect x="1118.4" y="469.0" width="3.6" height="3.6"/><rect x="1124.0" y="469.0" width="3.6" height="3.6"/><rect x="1129.6" y="469.0" width="3.6" height="3.6"/><rect x="1135.2" y="469.0" width="3.6" height="3.6"/><rect x="1140.8" y="469.0" width="3.6" height="3.6"/><rect x="1146.4" y="469.0" width="3.6" height="3.6"/><rect x="1152.0" y="469.0" width="3.6" height="3.6"/><rect x="1157.6" y="469.0" width="3.6" height="3.6"/><rect x="1163.2" y="469.0" width="3.6" height="3.6"/><rect x="1168.8" y="469.0" width="3.6" height="3.6"/><rect x="1174.4" y="469.0" width="3.6" height="3.6"/><rect x="1180.0" y="469.0" width="3.6" height="3.6"/><rect x="1185.6" y="469.0" width="3.6" height="3.6"/><rect x="1191.2" y="469.0" width="3.6" height="3.6"/><rect x="1196.8" y="469.0" width="3.6" height="3.6"/><rect x="1202.4" y="469.0" width="3.6" height="3.6"/><rect x="1208.0" y="469.0" width="3.6" height="3.6"/><rect x="1213.6" y="469.0" width="3.6" height="3.6"/></g><g fill="#00e0e8"><rect x="939.2" y="488.0" width="3.6" height="3.6"/><rect x="944.8" y="487.7" width="3.6" height="3.6"/><rect x="950.4" y="487.5" width="3.6" height="3.6"/><rect x="956.0" y="487.3" width="3.6" height="3.6"/><rect x="961.6" y="487.0" width="3.6" height="3.6"/><rect x="967.2" y="486.8" width="3.6" height="3.6"/><rect x="972.8" y="486.5" width="3.6" height="3.6"/><rect x="978.4" y="486.3" width="3.6" height="3.6"/><rect x="984.0" y="486.1" width="3.6" height="3.6"/><rect x="989.6" y="485.8" width="3.6" height="3.6"/><rect x="995.2" y="485.6" width="3.6" height="3.6"/><rect x="1000.8" y="485.3" width="3.6" height="3.6"/><rect x="1006.4" y="485.1" width="3.6" height="3.6"/><rect x="1012.0" y="484.9" width="3.6" height="3.6"/><rect x="1017.6" y="484.6" width="3.6" height="3.6"/><rect x="1023.2" y="484.4" width="3.6" height="3.6"/><rect x="1028.8" y="484.1" width="3.6" height="3.6"/><rect x="1034.4" y="483.9" width="3.6" height="3.6"/><rect x="1040.0" y="483.9" width="3.6" height="3.6"/><rect x="1045.6" y="484.8" width="3.6" height="3.6"/><rect x="1051.2" y="485.8" width="3.6" height="3.6"/><rect x="1056.8" y="486.7" width="3.6" height="3.6"/><rect x="1062.4" y="487.7" width="3.6" height="3.6"/><rect x="1068.0" y="488.7" width="3.6" height="3.6"/><rect x="1073.6" y="488.5" width="3.6" height="3.6"/><rect x="1079.2" y="488.2" width="3.6" height="3.6"/><rect x="1084.8" y="488.0" width="3.6" height="3.6"/><rect x="1090.4" y="487.7" width="3.6" height="3.6"/><rect x="1096.0" y="487.5" width="3.6" height="3.6"/><rect x="1101.6" y="487.3" width="3.6" height="3.6"/><rect x="1107.2" y="487.0" width="3.6" height="3.6"/><rect x="1112.8" y="486.8" width="3.6" height="3.6"/><rect x="1118.4" y="486.6" width="3.6" height="3.6"/><rect x="1124.0" y="486.3" width="3.6" height="3.6"/><rect x="1129.6" y="486.1" width="3.6" height="3.6"/><rect x="1135.2" y="485.8" width="3.6" height="3.6"/><rect x="1140.8" y="485.6" width="3.6" height="3.6"/><rect x="1146.4" y="485.4" width="3.6" height="3.6"/><rect x="1152.0" y="485.1" width="3.6" height="3.6"/><rect x="1157.6" y="484.9" width="3.6" height="3.6"/><rect x="1163.2" y="484.6" width="3.6" height="3.6"/><rect x="1168.8" y="484.4" width="3.6" height="3.6"/><rect x="1174.4" y="484.2" width="3.6" height="3.6"/><rect x="1180.0" y="483.9" width="3.6" height="3.6"/><rect x="1185.6" y="483.8" width="3.6" height="3.6"/><rect x="1191.2" y="484.8" width="3.6" height="3.6"/><rect x="1196.8" y="485.7" width="3.6" height="3.6"/><rect x="1202.4" y="486.7" width="3.6" height="3.6"/><rect x="1208.0" y="487.6" width="3.6" height="3.6"/><rect x="1213.6" y="488.6" width="3.6" height="3.6"/></g><rect x="505" y="631" width="744" height="33" fill="#ffffc0"/><text x="513" y="649.5" font-size="12.6" font-family="Liberation Sans" fill="#000" textLength="652" lengthAdjust="spacing">This demo represents a simple system of sensors and effectors being driven by CCTK's built in simulation capabilities.</text><text x="513" y="664.5" font-size="12.6" font-family="Liberation Sans" fill="#000" textLength="608" lengthAdjust="spacing">Page through this tutorial to find out more about the display items and what CCTK is doing behind the scenes.</text><rect x="1166" y="632" width="14" height="13" fill="#c0c0c0" stroke="#808080"/><path d="M1176 634.5 L1169 638.5 L1176 642.5 Z" fill="none" stroke="#000" stroke-width="1"/><rect x="1233" y="632" width="14" height="13" fill="#c0c0c0" stroke="#808080"/><path d="M1237 634.5 L1244 638.5 L1237 642.5 Z" fill="none" stroke="#000" stroke-width="1"/><text x="1180" y="643" font-size="12.6" font-family="Liberation Sans" fill="#000">Page 1/11</text><rect x="1249" y="631" width="9" height="33" fill="#c0c0c0"/><path d="M1252 643 L1257 647 L1252 651 Z" fill="#000"/></g></svg>
<div style="left:0px;top:899px;width:1600px;height:1px;background:#6a6a6a"></div>
</body></html>
